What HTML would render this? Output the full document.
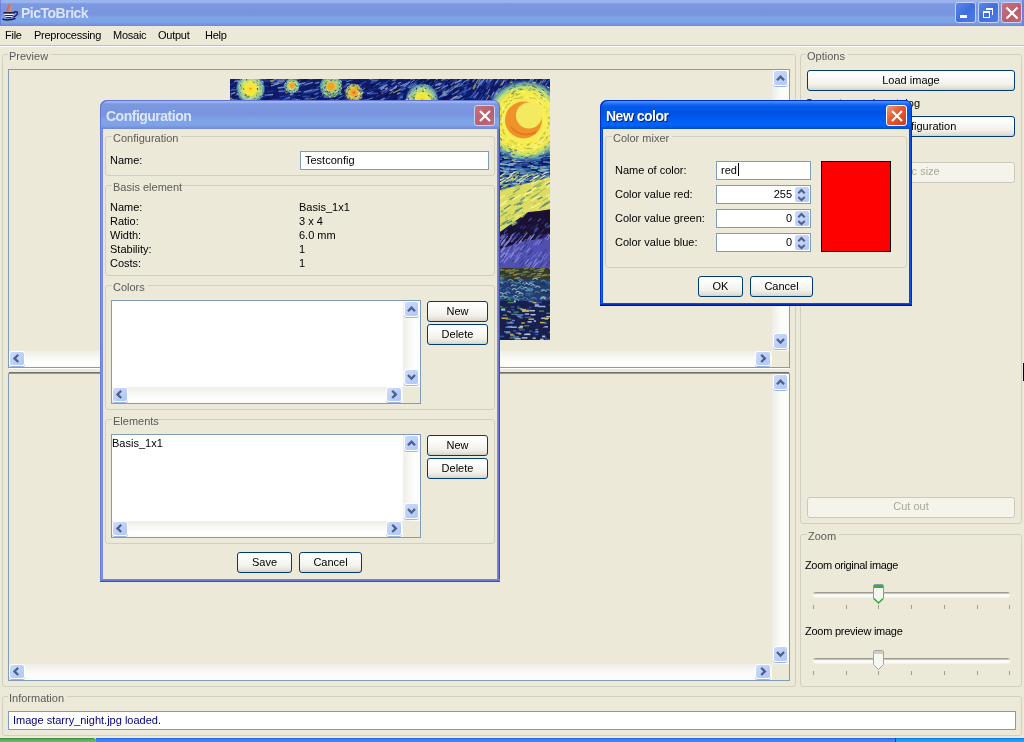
<!DOCTYPE html>
<html><head><meta charset="utf-8"><style>
*{box-sizing:border-box;margin:0;padding:0}
html,body{width:1024px;height:742px;overflow:hidden;background:#ece9d8}
body{position:relative;font:11px/13px "Liberation Sans",sans-serif;color:#000}
div,svg{position:absolute}
.t{white-space:nowrap;height:13px;will-change:transform}
</style></head><body>
<div style="left:0px;top:0px;width:1024px;height:26px;background:linear-gradient(#97aee6 0px,#9cb7f0 1px,#9cb7f0 2px,#7c98e0 4px,#7994df 15px,#7ea3e6 17px,#7ea3e6 22px,#7996e0 24px,#6d86dd 26px);"></div>
<div class="t" style="left:21px;top:7px;font:bold 14px/13px 'Liberation Sans',sans-serif;letter-spacing:-0.5px;color:#dce6fb;">PicToBrick</div>
<svg style="left:0;top:0" width="24" height="26" viewBox="0 0 24 26"><path d="M7.5 11.5 C6 9.5 8.5 8 9 6 C9.3 5 9.5 4.5 9.5 4" stroke="#e86a36" stroke-width="1.8" fill="none"/><path d="M10.5 11.5 C10 9.5 11.5 8 11.8 6.5" stroke="#f08a40" stroke-width="1.6" fill="none"/><path d="M3.5 12.8 H14.5" stroke="#1c1c5c" stroke-width="1.6"/><path d="M4.5 14.5 H13.5" stroke="#f4f4ff" stroke-width="1.2"/><path d="M5 15.6 H13" stroke="#2a2a70" stroke-width="1.2"/><path d="M5.5 16.6 H12" stroke="#f4f4ff" stroke-width="1.1"/><path d="M6 17.6 H11.5" stroke="#2a2a70" stroke-width="1.2"/><path d="M14 12 C17.5 11 18.5 13 16.5 15 L13.5 17.5" stroke="#1c1c5c" stroke-width="1.4" fill="none"/><path d="M2.5 19 C5 20 11 20 15.5 18.5" stroke="#1c1c5c" stroke-width="1.6" fill="none"/></svg>
<div style="left:955px;top:2px;width:21px;height:21px;border:1px solid #c6d2f3;border-radius:3px;background:linear-gradient(135deg,#5e86e8,#3f6ee0 50%,#4d7ae6);"><div style="left:4px;top:12px;width:7px;height:3px;background:#fff"></div></div>
<div style="left:978px;top:2px;width:21px;height:21px;border:1px solid #c6d2f3;border-radius:3px;background:linear-gradient(135deg,#5e86e8,#3f6ee0 50%,#4d7ae6);"><div style="left:4px;top:8px;width:7px;height:7px;border:1px solid #fff;border-top-width:2px"></div><div style="left:7px;top:5px;width:7px;height:7px;border:1px solid #fff;border-top-width:2px;border-left:none;border-bottom:none"></div></div>
<div style="left:1001px;top:2px;width:21px;height:21px;border:1px solid #c6d2f3;border-radius:3px;background:linear-gradient(135deg,#c8707e,#b85f6e 60%,#c06a78);"><svg style="left:3px;top:3px" width="14" height="14"><path d="M1.5 1.5 L12.5 12.5 M12.5 1.5 L1.5 12.5" stroke="#fff" stroke-width="2.2"/></svg></div>
<div style="left:0px;top:0px;width:1px;height:26px;background:#6b7bd9;opacity:.8"></div>
<div style="left:1022px;top:0px;width:2px;height:26px;background:#6b7bd9;opacity:.8"></div>
<div class="t" style="left:5px;top:29px;letter-spacing:-0.25px;">File</div>
<div class="t" style="left:34px;top:29px;letter-spacing:-0.25px;">Preprocessing</div>
<div class="t" style="left:113px;top:29px;letter-spacing:-0.25px;">Mosaic</div>
<div class="t" style="left:158px;top:29px;letter-spacing:-0.25px;">Output</div>
<div class="t" style="left:205px;top:29px;letter-spacing:-0.25px;">Help</div>
<div style="left:0px;top:45px;width:1024px;height:1px;background:#c2beb0;"></div>
<div style="left:0px;top:46px;width:1024px;height:1px;background:#fff;"></div>
<div style="left:2px;top:54px;width:794px;height:633px;border:1px solid #d0d0bf;border-radius:3px;"></div>
<div style="left:8px;top:51px;width:43px;height:7px;background:#ece9d8;"></div>
<div class="t" style="left:9px;top:50px;color:#5a5a5a;">Preview</div>
<div style="left:8px;top:69px;width:782px;height:299px;border:1px solid #7f9db9;background:#ece9d8;overflow:hidden;"></div>
<div style="left:772px;top:70px;width:17px;height:281px;background:linear-gradient(90deg,#eeede6,#f8f8f4 40%,#fefefe 80%,#fafaf6);"></div>
<div style="left:773px;top:70px;width:15px;height:16px;border:1px solid #fff;border-radius:3px;background:linear-gradient(135deg,#cddbfd,#bacef9 60%,#b0c6f7);box-shadow:0 1px 0 #9fb6e2;"><svg width="14" height="15" style="left:0;top:0"><path d="M3 9.3 L6.5 5.6 L10 9.3" stroke="#4d6185" stroke-width="2.3" fill="none"/></svg></div>
<div style="left:773px;top:333px;width:15px;height:16px;border:1px solid #fff;border-radius:3px;background:linear-gradient(135deg,#cddbfd,#bacef9 60%,#b0c6f7);box-shadow:0 1px 0 #9fb6e2;"><svg width="14" height="15" style="left:0;top:0"><path d="M3 5 L6.5 8.7 L10 5" stroke="#4d6185" stroke-width="2.3" fill="none"/></svg></div>
<div style="left:9px;top:351px;width:763px;height:16px;background:linear-gradient(180deg,#eeede6,#f8f8f4 40%,#fefefe 80%,#fafaf6);"></div>
<div style="left:9px;top:351px;width:16px;height:15px;border:1px solid #fff;border-radius:3px;background:linear-gradient(135deg,#cddbfd,#bacef9 60%,#b0c6f7);box-shadow:0 1px 0 #9fb6e2;"><svg width="14" height="15" style="left:0;top:0"><path d="M8.2 2.8 L4.5 6.4 L8.2 10" stroke="#4d6185" stroke-width="2.3" fill="none"/></svg></div>
<div style="left:755px;top:351px;width:16px;height:15px;border:1px solid #fff;border-radius:3px;background:linear-gradient(135deg,#cddbfd,#bacef9 60%,#b0c6f7);box-shadow:0 1px 0 #9fb6e2;"><svg width="14" height="15" style="left:0;top:0"><path d="M5.2 2.8 L8.9 6.4 L5.2 10" stroke="#4d6185" stroke-width="2.3" fill="none"/></svg></div>
<div style="left:772px;top:351px;width:17px;height:16px;background:#ece9d8;"></div>
<div style="left:9px;top:368px;width:780px;height:1px;background:#fff;"></div>
<div style="left:9px;top:372px;width:780px;height:1px;background:#76746a;"></div>
<div style="left:8px;top:373px;width:782px;height:308px;border:1px solid #7f9db9;background:#ece9d8;overflow:hidden;"></div>
<div style="left:772px;top:374px;width:17px;height:290px;background:linear-gradient(90deg,#eeede6,#f8f8f4 40%,#fefefe 80%,#fafaf6);"></div>
<div style="left:773px;top:374px;width:15px;height:16px;border:1px solid #fff;border-radius:3px;background:linear-gradient(135deg,#cddbfd,#bacef9 60%,#b0c6f7);box-shadow:0 1px 0 #9fb6e2;"><svg width="14" height="15" style="left:0;top:0"><path d="M3 9.3 L6.5 5.6 L10 9.3" stroke="#4d6185" stroke-width="2.3" fill="none"/></svg></div>
<div style="left:773px;top:646px;width:15px;height:16px;border:1px solid #fff;border-radius:3px;background:linear-gradient(135deg,#cddbfd,#bacef9 60%,#b0c6f7);box-shadow:0 1px 0 #9fb6e2;"><svg width="14" height="15" style="left:0;top:0"><path d="M3 5 L6.5 8.7 L10 5" stroke="#4d6185" stroke-width="2.3" fill="none"/></svg></div>
<div style="left:9px;top:664px;width:763px;height:16px;background:linear-gradient(180deg,#eeede6,#f8f8f4 40%,#fefefe 80%,#fafaf6);"></div>
<div style="left:9px;top:664px;width:16px;height:15px;border:1px solid #fff;border-radius:3px;background:linear-gradient(135deg,#cddbfd,#bacef9 60%,#b0c6f7);box-shadow:0 1px 0 #9fb6e2;"><svg width="14" height="15" style="left:0;top:0"><path d="M8.2 2.8 L4.5 6.4 L8.2 10" stroke="#4d6185" stroke-width="2.3" fill="none"/></svg></div>
<div style="left:755px;top:664px;width:16px;height:15px;border:1px solid #fff;border-radius:3px;background:linear-gradient(135deg,#cddbfd,#bacef9 60%,#b0c6f7);box-shadow:0 1px 0 #9fb6e2;"><svg width="14" height="15" style="left:0;top:0"><path d="M5.2 2.8 L8.9 6.4 L5.2 10" stroke="#4d6185" stroke-width="2.3" fill="none"/></svg></div>
<div style="left:772px;top:664px;width:17px;height:16px;background:#ece9d8;"></div>
<div style="left:800px;top:54px;width:222px;height:470px;border:1px solid #d0d0bf;border-radius:3px;"></div>
<div style="left:806px;top:51px;width:42px;height:7px;background:#ece9d8;"></div>
<div class="t" style="left:807px;top:50px;color:#5a5a5a;">Options</div>
<div style="left:807px;top:70px;width:208px;height:21px;border:1px solid #003c74;border-radius:3px;background:linear-gradient(#fff 0%,#fbfbf9 30%,#f2f1eb 70%,#e3e0d6 90%,#d6d0c5 100%);"></div>
<div class="t" style="left:807px;width:208px;text-align:center;top:74px;">Load image</div>
<div class="t" style="left:805px;top:97px;letter-spacing:0.1px;">Current mosaic catalog</div>
<div style="left:807px;top:116px;width:208px;height:21px;border:1px solid #003c74;border-radius:3px;background:linear-gradient(#fff 0%,#fbfbf9 30%,#f2f1eb 70%,#e3e0d6 90%,#d6d0c5 100%);"></div>
<div class="t" style="left:807px;width:208px;text-align:center;top:120px;">Load configuration</div>
<div style="left:807px;top:162px;width:208px;height:21px;border:1px solid #cac8bb;border-radius:3px;background:#f5f4ea;"></div>
<div class="t" style="left:807px;width:208px;text-align:center;top:165px;color:#aca899;">Mosaic size</div>
<div style="left:807px;top:497px;width:208px;height:21px;border:1px solid #cac8bb;border-radius:3px;background:#f5f4ea;"></div>
<div class="t" style="left:807px;width:208px;text-align:center;top:500px;color:#aca899;">Cut out</div>
<div style="left:800px;top:534px;width:222px;height:153px;border:1px solid #d0d0bf;border-radius:3px;"></div>
<div style="left:807px;top:531px;width:32px;height:7px;background:#ece9d8;"></div>
<div class="t" style="left:808px;top:530px;color:#5a5a5a;">Zoom</div>
<div class="t" style="left:805px;top:559px;letter-spacing:-0.35px;">Zoom original image</div>
<div class="t" style="left:805px;top:625px;letter-spacing:-0.25px;">Zoom preview image</div>
<div style="left:813px;top:592px;width:197px;height:6px;border-radius:3px;background:linear-gradient(#9d9b90 0,#9d9b90 1px,#f3f2ec 2px,#fff 4px,#f3f2ec 5px);"></div>
<div style="left:813px;top:605px;width:1px;height:4px;background:#a09d8f;"></div>
<div style="left:846px;top:605px;width:1px;height:4px;background:#a09d8f;"></div>
<div style="left:878px;top:605px;width:1px;height:4px;background:#a09d8f;"></div>
<div style="left:911px;top:605px;width:1px;height:4px;background:#a09d8f;"></div>
<div style="left:944px;top:605px;width:1px;height:4px;background:#a09d8f;"></div>
<div style="left:977px;top:605px;width:1px;height:4px;background:#a09d8f;"></div>
<div style="left:1009px;top:605px;width:1px;height:4px;background:#a09d8f;"></div>
<div style="left:813px;top:658px;width:197px;height:6px;border-radius:3px;background:linear-gradient(#9d9b90 0,#9d9b90 1px,#f3f2ec 2px,#fff 4px,#f3f2ec 5px);"></div>
<div style="left:813px;top:671px;width:1px;height:4px;background:#a09d8f;"></div>
<div style="left:846px;top:671px;width:1px;height:4px;background:#a09d8f;"></div>
<div style="left:878px;top:671px;width:1px;height:4px;background:#a09d8f;"></div>
<div style="left:911px;top:671px;width:1px;height:4px;background:#a09d8f;"></div>
<div style="left:944px;top:671px;width:1px;height:4px;background:#a09d8f;"></div>
<div style="left:977px;top:671px;width:1px;height:4px;background:#a09d8f;"></div>
<div style="left:1009px;top:671px;width:1px;height:4px;background:#a09d8f;"></div>
<svg style="left:873px;top:584px" width="11" height="21" viewBox="0 0 11 21"><path d="M0.5 2 Q0.5 0.5 2 0.5 H9 Q10.5 0.5 10.5 2 V14.5 L5.5 19.5 L0.5 14.5Z" fill="#f6f6f2" stroke="#8a98a8"/><path d="M1 1 H10 V4 H1Z" fill="#35b335"/><path d="M1 14.6 L5.5 19 L10 14.6" stroke="#35b335" stroke-width="1.6" fill="none"/></svg>
<svg style="left:873px;top:650px" width="11" height="21" viewBox="0 0 11 21"><path d="M0.5 2 Q0.5 0.5 2 0.5 H9 Q10.5 0.5 10.5 2 V14.5 L5.5 19.5 L0.5 14.5Z" fill="#f6f6f2" stroke="#a8a79c"/><path d="M1 1 H10 V4 H1Z" fill="#cfcdc2"/></svg>
<div style="left:2px;top:696px;width:1020px;height:40px;border:1px solid #d0d0bf;border-radius:3px;"></div>
<div style="left:8px;top:693px;width:59px;height:7px;background:#ece9d8;"></div>
<div class="t" style="left:9px;top:692px;color:#5a5a5a;">Information</div>
<div style="left:8px;top:711px;width:1008px;height:19px;border:1px solid #7f9db9;background:#fff;"></div>
<div class="t" style="left:13px;top:714px;color:#000080;">Image starry_night.jpg loaded.</div>
<div style="left:0px;top:738px;width:96px;height:4px;background:linear-gradient(#3a8a3a,#5aa85a 40%,#78b878);border-top-right-radius:3px;"></div>
<div style="left:96px;top:738px;width:928px;height:4px;background:linear-gradient(#1c5cd8,#3a84f0 40%,#3c88f4);"></div>
<div style="left:895px;top:738px;width:1px;height:4px;background:#1a3a9a;"></div>
<div style="left:896px;top:738px;width:128px;height:4px;background:linear-gradient(#0a6ad8,#14a0f0 40%,#18aaf4);"></div>
<div style="left:1023px;top:363px;width:1px;height:18px;background:#000;"></div>
<svg style="left:230px;top:79px" width="320" height="261" viewBox="0 0 320 261">
<defs>
<radialGradient id="st1"><stop offset="0" stop-color="#f08020"/><stop offset="0.1" stop-color="#f8e030"/><stop offset="0.4" stop-color="#f4ea40"/><stop offset="0.5" stop-color="#c8dc60"/><stop offset="0.75" stop-color="#90c0a0"/><stop offset="0.9" stop-color="#508aa8"/><stop offset="1" stop-color="#203a90" stop-opacity="0"/></radialGradient>
<radialGradient id="st2"><stop offset="0" stop-color="#f89a20"/><stop offset="0.28" stop-color="#f4a828"/><stop offset="0.38" stop-color="#c8d060"/><stop offset="0.7" stop-color="#88c090"/><stop offset="0.88" stop-color="#4a88a0"/><stop offset="1" stop-color="#203a90" stop-opacity="0"/></radialGradient>
<radialGradient id="st3"><stop offset="0" stop-color="#e85020"/><stop offset="0.2" stop-color="#f0a030"/><stop offset="0.6" stop-color="#e8c840"/><stop offset="0.85" stop-color="#a8a850"/><stop offset="1" stop-color="#203a90" stop-opacity="0"/></radialGradient>
<radialGradient id="halo"><stop offset="0" stop-color="#fff070"/><stop offset="0.7" stop-color="#f4ec48"/><stop offset="0.8" stop-color="#c0e070"/><stop offset="0.9" stop-color="#60a0b0"/><stop offset="1" stop-color="#203a90" stop-opacity="0"/></radialGradient>
<clipPath id="strip"><rect x="0" y="0" width="320" height="22"/><rect x="268" y="0" width="52" height="261"/></clipPath>
</defs>
<g clip-path="url(#strip)">
<rect width="320" height="261" fill="#0e1a66"/>
<path d="M101.9 1.1 l3.4 -0.6" stroke="#1a3090" stroke-width="1" opacity="0.85"/>
<path d="M115.7 -1.4 l3.1 -0.8" stroke="#081040" stroke-width="1.2" opacity="0.85"/>
<path d="M18.1 -0.6 l7.6 -2.4" stroke="#2c4cb0" stroke-width="1" opacity="0.85"/>
<path d="M203.1 12.7 l4.7 -4.5" stroke="#2040a0" stroke-width="1" opacity="0.85"/>
<path d="M10.4 20.2 l3.6 -1.4" stroke="#2c4cb0" stroke-width="1.5" opacity="0.85"/>
<path d="M96.8 19.0 l5.9 -2.7" stroke="#a09060" stroke-width="1" opacity="0.85"/>
<path d="M117.9 11.8 l3.0 -1.6" stroke="#5a78c8" stroke-width="1.2" opacity="0.85"/>
<path d="M219.5 8.5 l5.2 -3.9" stroke="#0a1450" stroke-width="1.2" opacity="0.85"/>
<path d="M93.9 18.4 l4.4 -0.7" stroke="#6a90c0" stroke-width="1.2" opacity="0.85"/>
<path d="M168.3 20.6 l4.2 -2.1" stroke="#2c4cb0" stroke-width="1" opacity="0.85"/>
<path d="M163.9 1.5 l6.9 -5.1" stroke="#081040" stroke-width="1" opacity="0.85"/>
<path d="M312.5 -0.9 l4.3 -6.4" stroke="#8aa0d8" stroke-width="1.2" opacity="0.85"/>
<path d="M224.4 13.0 l4.9 -2.9" stroke="#2c4cb0" stroke-width="1.2" opacity="0.85"/>
<path d="M151.5 14.9 l5.2 -5.0" stroke="#a09060" stroke-width="1.5" opacity="0.85"/>
<path d="M322.7 19.2 l2.4 -4.7" stroke="#a09060" stroke-width="1.2" opacity="0.85"/>
<path d="M2.4 9.5 l3.4 -1.6" stroke="#2040a0" stroke-width="1" opacity="0.85"/>
<path d="M248.5 0.5 l2.4 -4.8" stroke="#0a1450" stroke-width="1" opacity="0.85"/>
<path d="M49.9 7.8 l3.6 -1.4" stroke="#081040" stroke-width="1.5" opacity="0.85"/>
<path d="M86.9 8.2 l7.8 -2.7" stroke="#5a78c8" stroke-width="1" opacity="0.85"/>
<path d="M22.4 1.1 l3.0 -0.5" stroke="#6a90c0" stroke-width="1" opacity="0.85"/>
<path d="M81.7 -2.9 l5.0 -1.6" stroke="#6a90c0" stroke-width="1.2" opacity="0.85"/>
<path d="M309.5 15.6 l3.6 -5.6" stroke="#a09060" stroke-width="1.5" opacity="0.85"/>
<path d="M12.8 21.3 l8.2 -0.9" stroke="#1a3090" stroke-width="1.2" opacity="0.85"/>
<path d="M126.4 7.6 l5.2 -1.4" stroke="#5a78c8" stroke-width="1" opacity="0.85"/>
<path d="M319.9 8.9 l2.6 -6.1" stroke="#2c4cb0" stroke-width="1" opacity="0.85"/>
<path d="M182.0 11.5 l6.2 -2.4" stroke="#2c4cb0" stroke-width="1" opacity="0.85"/>
<path d="M197.6 1.0 l4.0 -3.2" stroke="#8aa0d8" stroke-width="1.2" opacity="0.85"/>
<path d="M35.5 19.9 l5.8 -0.0" stroke="#0a1450" stroke-width="1.2" opacity="0.85"/>
<path d="M23.3 -0.2 l4.3 -1.5" stroke="#3a5cc0" stroke-width="1.5" opacity="0.85"/>
<path d="M2.6 22.7 l3.8 -0.9" stroke="#1a3090" stroke-width="1" opacity="0.85"/>
<path d="M245.2 5.0 l2.1 -2.9" stroke="#142070" stroke-width="1.5" opacity="0.85"/>
<path d="M116.0 1.5 l6.2 -0.7" stroke="#1a3090" stroke-width="1.2" opacity="0.85"/>
<path d="M205.0 13.6 l6.8 -3.2" stroke="#5a78c8" stroke-width="1" opacity="0.85"/>
<path d="M265.0 17.0 l2.6 -5.5" stroke="#8aa0d8" stroke-width="1.5" opacity="0.85"/>
<path d="M4.6 -2.2 l4.2 -1.7" stroke="#6a90c0" stroke-width="1.2" opacity="0.85"/>
<path d="M142.6 22.3 l8.7 -0.1" stroke="#8aa0d8" stroke-width="1" opacity="0.85"/>
<path d="M67.8 3.1 l3.9 -1.7" stroke="#6a90c0" stroke-width="1.5" opacity="0.85"/>
<path d="M272.3 9.9 l4.6 -6.3" stroke="#2c4cb0" stroke-width="1.5" opacity="0.85"/>
<path d="M34.6 7.5 l4.1 -0.6" stroke="#3a5cc0" stroke-width="1.2" opacity="0.85"/>
<path d="M255.4 6.0 l5.7 -6.8" stroke="#081040" stroke-width="1.2" opacity="0.85"/>
<path d="M127.5 22.6 l4.0 -0.6" stroke="#3a5cc0" stroke-width="1" opacity="0.85"/>
<path d="M44.9 21.4 l3.9 -0.4" stroke="#6a90c0" stroke-width="1.2" opacity="0.85"/>
<path d="M211.9 6.5 l3.2 -2.0" stroke="#2040a0" stroke-width="1.5" opacity="0.85"/>
<path d="M209.4 11.2 l5.2 -2.1" stroke="#5a78c8" stroke-width="1" opacity="0.85"/>
<path d="M4.2 2.7 l7.3 -2.0" stroke="#8aa0d8" stroke-width="1.2" opacity="0.85"/>
<path d="M174.6 19.5 l5.4 -5.1" stroke="#0a1450" stroke-width="1.5" opacity="0.85"/>
<path d="M187.5 21.4 l7.0 -4.8" stroke="#1a3090" stroke-width="1" opacity="0.85"/>
<path d="M170.5 11.1 l4.0 -4.0" stroke="#3a5cc0" stroke-width="1.5" opacity="0.85"/>
<path d="M-3.7 18.6 l5.3 -2.5" stroke="#2c4cb0" stroke-width="1.5" opacity="0.85"/>
<path d="M15.4 15.4 l5.7 -1.4" stroke="#2c4cb0" stroke-width="1.5" opacity="0.85"/>
<path d="M13.8 2.2 l3.1 -1.7" stroke="#0a1450" stroke-width="1.5" opacity="0.85"/>
<path d="M4.2 21.1 l4.4 -2.3" stroke="#1a3090" stroke-width="1.5" opacity="0.85"/>
<path d="M164.0 15.7 l5.2 -3.4" stroke="#0a1450" stroke-width="1.5" opacity="0.85"/>
<path d="M305.7 15.9 l5.8 -6.4" stroke="#142070" stroke-width="1.5" opacity="0.85"/>
<path d="M289.6 2.5 l2.8 -4.7" stroke="#081040" stroke-width="1.2" opacity="0.85"/>
<path d="M99.3 15.1 l4.1 -1.3" stroke="#142070" stroke-width="1" opacity="0.85"/>
<path d="M291.0 1.2 l4.3 -5.5" stroke="#3a5cc0" stroke-width="1.2" opacity="0.85"/>
<path d="M286.3 23.1 l3.8 -7.9" stroke="#081040" stroke-width="1.2" opacity="0.85"/>
<path d="M48.7 15.0 l6.6 -2.9" stroke="#1a3090" stroke-width="1.2" opacity="0.85"/>
<path d="M106.9 2.3 l6.9 -2.6" stroke="#2040a0" stroke-width="1.2" opacity="0.85"/>
<path d="M177.8 8.9 l3.6 -3.5" stroke="#6a90c0" stroke-width="1.2" opacity="0.85"/>
<path d="M164.0 -1.3 l7.2 -2.7" stroke="#2c4cb0" stroke-width="1" opacity="0.85"/>
<path d="M82.6 -1.9 l4.6 -0.5" stroke="#3a5cc0" stroke-width="1.2" opacity="0.85"/>
<path d="M275.4 15.3 l3.8 -3.9" stroke="#1a3090" stroke-width="1.5" opacity="0.85"/>
<path d="M183.3 15.9 l2.5 -2.3" stroke="#3a5cc0" stroke-width="1.2" opacity="0.85"/>
<path d="M290.4 4.3 l1.2 -3.3" stroke="#142070" stroke-width="1" opacity="0.85"/>
<path d="M195.7 3.0 l2.9 -2.3" stroke="#2040a0" stroke-width="1.2" opacity="0.85"/>
<path d="M323.1 8.3 l4.6 -4.9" stroke="#2040a0" stroke-width="1.5" opacity="0.85"/>
<path d="M229.1 22.3 l4.3 -1.6" stroke="#3a5cc0" stroke-width="1" opacity="0.85"/>
<path d="M302.6 14.0 l2.3 -3.5" stroke="#0a1450" stroke-width="1.5" opacity="0.85"/>
<path d="M216.8 4.3 l8.1 -3.8" stroke="#2040a0" stroke-width="1" opacity="0.85"/>
<path d="M1.1 10.7 l6.1 -0.1" stroke="#5a78c8" stroke-width="1.2" opacity="0.85"/>
<path d="M30.1 19.1 l5.7 -1.7" stroke="#081040" stroke-width="1.5" opacity="0.85"/>
<path d="M96.6 2.8 l3.9 -1.6" stroke="#a09060" stroke-width="1" opacity="0.85"/>
<path d="M128.6 6.4 l3.3 -1.8" stroke="#2c4cb0" stroke-width="1.5" opacity="0.85"/>
<path d="M239.5 3.9 l2.6 -2.3" stroke="#081040" stroke-width="1.5" opacity="0.85"/>
<path d="M216.3 4.6 l3.7 -3.0" stroke="#0a1450" stroke-width="1" opacity="0.85"/>
<path d="M47.0 9.0 l8.1 -3.3" stroke="#1a3090" stroke-width="1.2" opacity="0.85"/>
<path d="M75.7 23.1 l4.8 -1.8" stroke="#2040a0" stroke-width="1.2" opacity="0.85"/>
<path d="M120.9 9.8 l4.1 -1.1" stroke="#1a3090" stroke-width="1" opacity="0.85"/>
<path d="M25.0 19.1 l5.9 -2.8" stroke="#081040" stroke-width="1" opacity="0.85"/>
<path d="M93.9 14.0 l7.8 -4.0" stroke="#3a5cc0" stroke-width="1.5" opacity="0.85"/>
<path d="M289.6 18.2 l4.3 -6.2" stroke="#0a1450" stroke-width="1" opacity="0.85"/>
<path d="M88.8 13.7 l7.2 -3.4" stroke="#1a3090" stroke-width="1.5" opacity="0.85"/>
<path d="M136.7 15.9 l8.2 -2.2" stroke="#1a3090" stroke-width="1.5" opacity="0.85"/>
<path d="M270.5 18.7 l4.2 -4.9" stroke="#a09060" stroke-width="1.5" opacity="0.85"/>
<path d="M207.2 -0.7 l4.9 -4.7" stroke="#2c4cb0" stroke-width="1.2" opacity="0.85"/>
<path d="M270.8 12.1 l3.9 -5.5" stroke="#a09060" stroke-width="1" opacity="0.85"/>
<path d="M156.5 -2.9 l6.8 -3.2" stroke="#1a3090" stroke-width="1.5" opacity="0.85"/>
<path d="M25.3 11.2 l5.8 -0.8" stroke="#2c4cb0" stroke-width="1.2" opacity="0.85"/>
<path d="M72.5 17.4 l6.3 -2.7" stroke="#0a1450" stroke-width="1.2" opacity="0.85"/>
<path d="M274.0 -0.9 l3.2 -3.5" stroke="#2040a0" stroke-width="1.5" opacity="0.85"/>
<path d="M203.8 2.4 l4.3 -2.5" stroke="#a09060" stroke-width="1.5" opacity="0.85"/>
<path d="M223.7 13.8 l4.4 -3.9" stroke="#0a1450" stroke-width="1.2" opacity="0.85"/>
<path d="M315.9 -0.3 l2.6 -5.4" stroke="#1a3090" stroke-width="1.2" opacity="0.85"/>
<path d="M148.3 9.6 l7.5 -3.7" stroke="#5a78c8" stroke-width="1.2" opacity="0.85"/>
<path d="M317.8 22.3 l2.0 -5.4" stroke="#1a3090" stroke-width="1.2" opacity="0.85"/>
<path d="M323.0 7.4 l5.8 -6.3" stroke="#2c4cb0" stroke-width="1.5" opacity="0.85"/>
<path d="M24.8 17.2 l4.8 -1.9" stroke="#6a90c0" stroke-width="1.5" opacity="0.85"/>
<path d="M162.9 20.9 l3.9 -2.0" stroke="#0a1450" stroke-width="1.2" opacity="0.85"/>
<path d="M3.2 -2.9 l5.5 -1.5" stroke="#142070" stroke-width="1.5" opacity="0.85"/>
<path d="M41.4 6.3 l7.5 -2.8" stroke="#2040a0" stroke-width="1.2" opacity="0.85"/>
<path d="M242.7 19.7 l3.3 -7.9" stroke="#2040a0" stroke-width="1.5" opacity="0.85"/>
<path d="M90.6 7.0 l8.5 -2.8" stroke="#6a90c0" stroke-width="1" opacity="0.85"/>
<path d="M114.0 8.6 l3.1 -1.2" stroke="#2c4cb0" stroke-width="1" opacity="0.85"/>
<path d="M270.4 4.7 l3.1 -3.3" stroke="#142070" stroke-width="1.2" opacity="0.85"/>
<path d="M163.6 2.1 l7.1 -5.1" stroke="#2040a0" stroke-width="1.5" opacity="0.85"/>
<path d="M127.0 20.6 l4.1 -1.0" stroke="#2c4cb0" stroke-width="1" opacity="0.85"/>
<path d="M303.0 8.1 l2.2 -3.1" stroke="#142070" stroke-width="1.2" opacity="0.85"/>
<path d="M11.2 22.0 l5.2 -2.6" stroke="#8aa0d8" stroke-width="1.2" opacity="0.85"/>
<path d="M93.3 17.0 l4.6 -0.1" stroke="#a09060" stroke-width="1" opacity="0.85"/>
<path d="M94.3 12.0 l3.8 -1.2" stroke="#3a5cc0" stroke-width="1" opacity="0.85"/>
<path d="M63.6 21.5 l4.2 -1.1" stroke="#8aa0d8" stroke-width="1.2" opacity="0.85"/>
<path d="M136.0 11.8 l3.7 -1.6" stroke="#1a3090" stroke-width="1" opacity="0.85"/>
<path d="M100.4 6.9 l4.2 -0.4" stroke="#2040a0" stroke-width="1.5" opacity="0.85"/>
<path d="M282.3 7.3 l2.7 -3.3" stroke="#142070" stroke-width="1.2" opacity="0.85"/>
<path d="M243.2 10.4 l2.9 -4.3" stroke="#a09060" stroke-width="1.5" opacity="0.85"/>
<path d="M169.6 18.3 l3.3 -1.4" stroke="#5a78c8" stroke-width="1.2" opacity="0.85"/>
<path d="M126.9 9.0 l8.1 -0.2" stroke="#2040a0" stroke-width="1" opacity="0.85"/>
<path d="M5.6 16.2 l5.8 -0.3" stroke="#6a90c0" stroke-width="1.2" opacity="0.85"/>
<path d="M-4.9 7.6 l7.9 -0.3" stroke="#0a1450" stroke-width="1.2" opacity="0.85"/>
<path d="M77.0 -0.1 l5.5 -2.6" stroke="#a09060" stroke-width="1" opacity="0.85"/>
<path d="M305.7 16.5 l4.5 -6.1" stroke="#0a1450" stroke-width="1" opacity="0.85"/>
<path d="M177.0 -1.9 l4.0 -1.9" stroke="#2040a0" stroke-width="1.5" opacity="0.85"/>
<path d="M231.0 23.0 l5.4 -3.0" stroke="#081040" stroke-width="1.5" opacity="0.85"/>
<path d="M247.1 -0.3 l4.0 -7.7" stroke="#5a78c8" stroke-width="1.2" opacity="0.85"/>
<path d="M81.1 18.3 l5.4 -3.1" stroke="#0a1450" stroke-width="1.2" opacity="0.85"/>
<path d="M311.5 14.4 l3.9 -4.3" stroke="#5a78c8" stroke-width="1.5" opacity="0.85"/>
<path d="M76.5 22.9 l4.8 -0.7" stroke="#2040a0" stroke-width="1" opacity="0.85"/>
<path d="M159.4 15.2 l3.7 -2.6" stroke="#a09060" stroke-width="1.2" opacity="0.85"/>
<path d="M300.3 3.1 l1.8 -4.7" stroke="#081040" stroke-width="1.2" opacity="0.85"/>
<path d="M220.2 2.3 l6.7 -3.2" stroke="#1a3090" stroke-width="1" opacity="0.85"/>
<path d="M62.7 23.2 l7.4 -2.8" stroke="#5a78c8" stroke-width="1.2" opacity="0.85"/>
<path d="M68.1 17.5 l8.1 -3.1" stroke="#0a1450" stroke-width="1.5" opacity="0.85"/>
<path d="M56.8 3.0 l6.7 -2.1" stroke="#6a90c0" stroke-width="1" opacity="0.85"/>
<path d="M299.2 -1.5 l2.3 -6.2" stroke="#081040" stroke-width="1" opacity="0.85"/>
<path d="M229.3 2.0 l6.0 -4.0" stroke="#8aa0d8" stroke-width="1.5" opacity="0.85"/>
<path d="M32.4 -0.9 l3.8 -1.8" stroke="#a09060" stroke-width="1.5" opacity="0.85"/>
<path d="M241.3 -2.1 l3.1 -4.2" stroke="#8aa0d8" stroke-width="1.2" opacity="0.85"/>
<path d="M141.0 -0.1 l3.1 -1.6" stroke="#081040" stroke-width="1" opacity="0.85"/>
<path d="M180.2 17.5 l6.2 -4.4" stroke="#142070" stroke-width="1.2" opacity="0.85"/>
<path d="M24.0 16.0 l5.7 -2.6" stroke="#0a1450" stroke-width="1" opacity="0.85"/>
<path d="M101.7 16.9 l6.5 -1.8" stroke="#5a78c8" stroke-width="1.5" opacity="0.85"/>
<path d="M248.0 -1.9 l1.2 -3.2" stroke="#2040a0" stroke-width="1.2" opacity="0.85"/>
<path d="M59.3 -1.3 l5.1 -1.1" stroke="#8aa0d8" stroke-width="1.5" opacity="0.85"/>
<path d="M9.4 17.2 l8.4 -1.4" stroke="#142070" stroke-width="1" opacity="0.85"/>
<path d="M233.1 13.1 l7.9 -3.6" stroke="#2c4cb0" stroke-width="1" opacity="0.85"/>
<path d="M267.6 -0.1 l3.6 -4.6" stroke="#081040" stroke-width="1.2" opacity="0.85"/>
<path d="M296.5 19.0 l2.4 -5.5" stroke="#2040a0" stroke-width="1.5" opacity="0.85"/>
<path d="M95.1 15.7 l4.0 -1.9" stroke="#8aa0d8" stroke-width="1.2" opacity="0.85"/>
<path d="M114.4 18.1 l3.7 -1.9" stroke="#3a5cc0" stroke-width="1" opacity="0.85"/>
<path d="M129.6 14.5 l6.0 -1.7" stroke="#3a5cc0" stroke-width="1.2" opacity="0.85"/>
<path d="M286.5 23.7 l1.6 -3.1" stroke="#2c4cb0" stroke-width="1.2" opacity="0.85"/>
<path d="M159.5 16.2 l3.7 -2.5" stroke="#081040" stroke-width="1.2" opacity="0.85"/>
<path d="M199.7 15.2 l7.2 -3.6" stroke="#a09060" stroke-width="1" opacity="0.85"/>
<path d="M252.3 4.9 l2.1 -4.1" stroke="#142070" stroke-width="1.5" opacity="0.85"/>
<path d="M80.9 8.9 l4.0 -1.8" stroke="#142070" stroke-width="1.5" opacity="0.85"/>
<path d="M57.1 -1.3 l4.1 -1.7" stroke="#1a3090" stroke-width="1" opacity="0.85"/>
<path d="M209.4 -0.3 l2.7 -1.8" stroke="#2040a0" stroke-width="1.2" opacity="0.85"/>
<path d="M286.3 3.2 l2.7 -4.5" stroke="#142070" stroke-width="1" opacity="0.85"/>
<path d="M34.3 2.1 l6.5 -0.1" stroke="#2c4cb0" stroke-width="1.2" opacity="0.85"/>
<path d="M164.2 1.8 l6.6 -3.8" stroke="#a09060" stroke-width="1" opacity="0.85"/>
<path d="M29.9 13.1 l4.2 -0.9" stroke="#8aa0d8" stroke-width="1.2" opacity="0.85"/>
<path d="M41.7 2.5 l6.1 -2.5" stroke="#a09060" stroke-width="1" opacity="0.85"/>
<path d="M263.9 19.1 l2.6 -4.5" stroke="#6a90c0" stroke-width="1.2" opacity="0.85"/>
<path d="M20.7 -2.2 l5.7 -1.5" stroke="#081040" stroke-width="1" opacity="0.85"/>
<path d="M257.6 14.9 l2.5 -5.7" stroke="#a09060" stroke-width="1" opacity="0.85"/>
<path d="M126.3 4.3 l7.0 -0.0" stroke="#081040" stroke-width="1" opacity="0.85"/>
<path d="M98.1 12.3 l5.2 -1.8" stroke="#8aa0d8" stroke-width="1.5" opacity="0.85"/>
<path d="M60.1 16.7 l2.8 -1.2" stroke="#3a5cc0" stroke-width="1.2" opacity="0.85"/>
<path d="M32.5 -0.6 l5.1 -1.1" stroke="#3a5cc0" stroke-width="1" opacity="0.85"/>
<path d="M-0.1 11.9 l8.3 -1.6" stroke="#2c4cb0" stroke-width="1.5" opacity="0.85"/>
<path d="M200.3 7.0 l3.3 -2.1" stroke="#142070" stroke-width="1" opacity="0.85"/>
<path d="M167.0 22.0 l4.4 -4.0" stroke="#5a78c8" stroke-width="1.2" opacity="0.85"/>
<path d="M36.8 22.5 l5.9 -0.1" stroke="#2040a0" stroke-width="1.5" opacity="0.85"/>
<path d="M300.6 7.5 l4.6 -4.9" stroke="#3a5cc0" stroke-width="1.5" opacity="0.85"/>
<path d="M254.3 3.0 l4.1 -7.0" stroke="#0a1450" stroke-width="1" opacity="0.85"/>
<path d="M181.6 -1.9 l3.7 -1.4" stroke="#8aa0d8" stroke-width="1" opacity="0.85"/>
<path d="M44.3 23.2 l4.1 -0.4" stroke="#1a3090" stroke-width="1.5" opacity="0.85"/>
<path d="M7.6 19.6 l5.9 -2.9" stroke="#1a3090" stroke-width="1.5" opacity="0.85"/>
<path d="M251.8 14.5 l2.1 -4.0" stroke="#081040" stroke-width="1.5" opacity="0.85"/>
<path d="M116.3 10.6 l2.7 -1.3" stroke="#0a1450" stroke-width="1.2" opacity="0.85"/>
<path d="M72.6 17.6 l5.7 -0.7" stroke="#3a5cc0" stroke-width="1.2" opacity="0.85"/>
<path d="M127.1 -1.2 l4.9 -1.7" stroke="#0a1450" stroke-width="1.5" opacity="0.85"/>
<path d="M163.4 -1.9 l3.1 -1.7" stroke="#8aa0d8" stroke-width="1.5" opacity="0.85"/>
<path d="M163.8 -1.5 l4.4 -2.8" stroke="#3a5cc0" stroke-width="1" opacity="0.85"/>
<path d="M277.8 23.9 l4.9 -6.2" stroke="#5a78c8" stroke-width="1" opacity="0.85"/>
<path d="M319.0 10.3 l5.9 -6.1" stroke="#3a5cc0" stroke-width="1.5" opacity="0.85"/>
<path d="M255.2 22.1 l1.9 -4.7" stroke="#142070" stroke-width="1" opacity="0.85"/>
<path d="M101.9 13.6 l5.7 -0.3" stroke="#142070" stroke-width="1.5" opacity="0.85"/>
<path d="M313.2 10.0 l3.8 -5.5" stroke="#5a78c8" stroke-width="1.2" opacity="0.85"/>
<path d="M117.8 2.4 l6.5 -2.1" stroke="#142070" stroke-width="1.5" opacity="0.85"/>
<path d="M103.2 7.2 l4.6 -0.5" stroke="#1a3090" stroke-width="1" opacity="0.85"/>
<path d="M205.0 6.7 l5.8 -2.5" stroke="#6a90c0" stroke-width="1.5" opacity="0.85"/>
<path d="M286.2 -0.2 l4.8 -4.8" stroke="#081040" stroke-width="1.5" opacity="0.85"/>
<path d="M258.2 4.1 l4.6 -4.6" stroke="#8aa0d8" stroke-width="1.2" opacity="0.85"/>
<path d="M247.3 8.9 l3.1 -6.8" stroke="#2040a0" stroke-width="1.2" opacity="0.85"/>
<path d="M265.5 3.8 l5.2 -7.2" stroke="#6a90c0" stroke-width="1.5" opacity="0.85"/>
<path d="M290.6 16.8 l2.7 -3.4" stroke="#142070" stroke-width="1.5" opacity="0.85"/>
<path d="M201.5 8.3 l2.7 -1.9" stroke="#0a1450" stroke-width="1" opacity="0.85"/>
<path d="M197.1 -1.8 l4.6 -4.4" stroke="#142070" stroke-width="1" opacity="0.85"/>
<path d="M167.6 11.4 l4.0 -2.7" stroke="#3a5cc0" stroke-width="1" opacity="0.85"/>
<path d="M115.9 19.4 l2.8 -1.3" stroke="#5a78c8" stroke-width="1.5" opacity="0.85"/>
<path d="M44.3 -0.4 l8.1 -1.5" stroke="#142070" stroke-width="1.2" opacity="0.85"/>
<path d="M262.8 23.1 l2.9 -7.4" stroke="#8aa0d8" stroke-width="1.5" opacity="0.85"/>
<path d="M208.0 9.0 l6.9 -2.7" stroke="#5a78c8" stroke-width="1" opacity="0.85"/>
<path d="M293.2 -1.8 l3.0 -4.5" stroke="#5a78c8" stroke-width="1" opacity="0.85"/>
<path d="M14.3 18.0 l5.5 -3.1" stroke="#5a78c8" stroke-width="1" opacity="0.85"/>
<path d="M131.3 11.0 l6.8 -1.3" stroke="#081040" stroke-width="1.5" opacity="0.85"/>
<path d="M52.6 5.4 l3.1 -1.2" stroke="#0a1450" stroke-width="1.5" opacity="0.85"/>
<path d="M172.7 7.1 l7.0 -4.7" stroke="#2c4cb0" stroke-width="1.5" opacity="0.85"/>
<path d="M211.3 1.7 l4.3 -1.6" stroke="#a09060" stroke-width="1" opacity="0.85"/>
<path d="M35.7 21.1 l8.7 -0.3" stroke="#142070" stroke-width="1.5" opacity="0.85"/>
<path d="M12.3 14.2 l7.0 -1.2" stroke="#1a3090" stroke-width="1.2" opacity="0.85"/>
<path d="M92.6 22.1 l3.5 -0.2" stroke="#1a3090" stroke-width="1" opacity="0.85"/>
<path d="M51.0 21.4 l4.2 -0.3" stroke="#3a5cc0" stroke-width="1.5" opacity="0.85"/>
<path d="M296.9 2.2 l3.3 -5.7" stroke="#081040" stroke-width="1.5" opacity="0.85"/>
<path d="M299.2 23.5 l4.1 -4.7" stroke="#0a1450" stroke-width="1.5" opacity="0.85"/>
<path d="M225.2 20.2 l6.1 -4.1" stroke="#6a90c0" stroke-width="1.2" opacity="0.85"/>
<path d="M255.4 7.6 l3.6 -5.3" stroke="#3a5cc0" stroke-width="1" opacity="0.85"/>
<path d="M5.9 0.0 l3.9 -0.8" stroke="#3a5cc0" stroke-width="1.5" opacity="0.85"/>
<path d="M4.5 -1.9 l6.7 -1.1" stroke="#2c4cb0" stroke-width="1.5" opacity="0.85"/>
<path d="M10.4 20.1 l4.2 -0.5" stroke="#1a3090" stroke-width="1.5" opacity="0.85"/>
<path d="M16.8 20.4 l8.7 -0.4" stroke="#2c4cb0" stroke-width="1" opacity="0.85"/>
<path d="M62.9 0.0 l7.1 -3.9" stroke="#a09060" stroke-width="1" opacity="0.85"/>
<path d="M267.3 14.1 l1.6 -3.2" stroke="#2c4cb0" stroke-width="1.5" opacity="0.85"/>
<path d="M62.6 5.6 l3.0 -0.9" stroke="#142070" stroke-width="1.2" opacity="0.85"/>
<path d="M11.0 17.5 l7.6 -0.4" stroke="#6a90c0" stroke-width="1.5" opacity="0.85"/>
<path d="M152.1 4.8 l6.9 -3.4" stroke="#2040a0" stroke-width="1.2" opacity="0.85"/>
<path d="M166.1 -0.3 l2.7 -1.8" stroke="#6a90c0" stroke-width="1" opacity="0.85"/>
<path d="M230.7 19.4 l4.1 -2.4" stroke="#081040" stroke-width="1" opacity="0.85"/>
<path d="M167.8 4.8 l3.0 -1.5" stroke="#8aa0d8" stroke-width="1.2" opacity="0.85"/>
<path d="M26.6 15.8 l8.8 -0.8" stroke="#6a90c0" stroke-width="1.2" opacity="0.85"/>
<path d="M310.9 10.9 l2.2 -3.3" stroke="#5a78c8" stroke-width="1.5" opacity="0.85"/>
<path d="M71.4 1.5 l7.6 -0.2" stroke="#0a1450" stroke-width="1.5" opacity="0.85"/>
<path d="M180.2 -0.2 l2.9 -2.1" stroke="#081040" stroke-width="1.5" opacity="0.85"/>
<path d="M23.4 21.0 l3.7 -2.1" stroke="#142070" stroke-width="1.2" opacity="0.85"/>
<path d="M292.4 10.5 l4.1 -7.2" stroke="#5a78c8" stroke-width="1.2" opacity="0.85"/>
<path d="M36.9 13.0 l6.5 -1.1" stroke="#2040a0" stroke-width="1.2" opacity="0.85"/>
<path d="M186.9 11.1 l5.2 -2.3" stroke="#1a3090" stroke-width="1.5" opacity="0.85"/>
<path d="M101.7 9.5 l4.5 -0.7" stroke="#5a78c8" stroke-width="1" opacity="0.85"/>
<path d="M105.2 14.4 l6.0 -1.0" stroke="#142070" stroke-width="1.2" opacity="0.85"/>
<path d="M244.1 19.3 l4.3 -6.0" stroke="#5a78c8" stroke-width="1.5" opacity="0.85"/>
<path d="M102.8 11.1 l4.5 -2.1" stroke="#5a78c8" stroke-width="1.2" opacity="0.85"/>
<path d="M316.8 16.7 l3.4 -8.1" stroke="#2c4cb0" stroke-width="1" opacity="0.85"/>
<path d="M121.8 23.6 l7.4 -0.8" stroke="#081040" stroke-width="1.2" opacity="0.85"/>
<path d="M59.7 14.2 l3.8 -1.9" stroke="#081040" stroke-width="1.2" opacity="0.85"/>
<path d="M6.2 7.8 l7.1 -0.8" stroke="#1a3090" stroke-width="1.5" opacity="0.85"/>
<path d="M92.8 -2.4 l6.9 -2.8" stroke="#2040a0" stroke-width="1.5" opacity="0.85"/>
<path d="M75.0 20.0 l6.4 -1.0" stroke="#a09060" stroke-width="1.2" opacity="0.85"/>
<path d="M274.2 15.0 l4.9 -6.7" stroke="#a09060" stroke-width="1.5" opacity="0.85"/>
<path d="M187.6 3.2 l2.8 -2.4" stroke="#081040" stroke-width="1.2" opacity="0.85"/>
<path d="M80.7 15.9 l4.4 -0.2" stroke="#081040" stroke-width="1.5" opacity="0.85"/>
<path d="M230.2 1.2 l5.4 -2.4" stroke="#2040a0" stroke-width="1.5" opacity="0.85"/>
<path d="M278.3 11.0 l4.9 -6.6" stroke="#a09060" stroke-width="1.2" opacity="0.85"/>
<path d="M251.8 7.5 l4.7 -7.5" stroke="#2040a0" stroke-width="1.2" opacity="0.85"/>
<path d="M174.3 1.3 l7.8 -3.7" stroke="#1a3090" stroke-width="1.2" opacity="0.85"/>
<path d="M28.4 12.5 l7.1 -1.7" stroke="#1a3090" stroke-width="1" opacity="0.85"/>
<path d="M206.0 19.4 l4.6 -2.9" stroke="#0a1450" stroke-width="1" opacity="0.85"/>
<path d="M321.8 2.0 l4.7 -7.2" stroke="#6a90c0" stroke-width="1.2" opacity="0.85"/>
<path d="M205.4 3.8 l2.7 -2.0" stroke="#2c4cb0" stroke-width="1.2" opacity="0.85"/>
<path d="M297.1 14.0 l3.9 -5.2" stroke="#2c4cb0" stroke-width="1" opacity="0.85"/>
<path d="M95.2 7.8 l8.8 -0.2" stroke="#081040" stroke-width="1.2" opacity="0.85"/>
<path d="M65.0 0.5 l7.8 -0.9" stroke="#a09060" stroke-width="1" opacity="0.85"/>
<path d="M149.8 12.2 l8.1 -3.5" stroke="#8aa0d8" stroke-width="1.5" opacity="0.85"/>
<path d="M205.8 19.1 l5.3 -2.4" stroke="#142070" stroke-width="1.5" opacity="0.85"/>
<path d="M209.4 18.1 l6.4 -4.2" stroke="#5a78c8" stroke-width="1.2" opacity="0.85"/>
<path d="M227.4 15.6 l6.6 -2.5" stroke="#0a1450" stroke-width="1" opacity="0.85"/>
<path d="M260.8 18.6 l3.4 -6.1" stroke="#8aa0d8" stroke-width="1.2" opacity="0.85"/>
<path d="M155.0 13.8 l6.1 -5.7" stroke="#3a5cc0" stroke-width="1.2" opacity="0.85"/>
<path d="M277.0 -1.5 l5.5 -6.4" stroke="#3a5cc0" stroke-width="1.5" opacity="0.85"/>
<path d="M269.3 14.1 l1.1 -2.9" stroke="#2c4cb0" stroke-width="1.5" opacity="0.85"/>
<path d="M91.7 13.4 l7.9 -1.8" stroke="#3a5cc0" stroke-width="1.2" opacity="0.85"/>
<path d="M109.3 1.1 l7.7 -0.4" stroke="#3a5cc0" stroke-width="1.5" opacity="0.85"/>
<path d="M289.1 13.4 l4.5 -5.4" stroke="#1a3090" stroke-width="1.5" opacity="0.85"/>
<path d="M271.8 2.3 l3.7 -4.9" stroke="#0a1450" stroke-width="1.5" opacity="0.85"/>
<path d="M286.3 12.0 l2.0 -3.9" stroke="#3a5cc0" stroke-width="1.2" opacity="0.85"/>
<path d="M157.7 -1.4 l3.2 -2.1" stroke="#0a1450" stroke-width="1" opacity="0.85"/>
<path d="M159.4 11.6 l2.8 -1.2" stroke="#8aa0d8" stroke-width="1.2" opacity="0.85"/>
<path d="M224.6 10.4 l4.6 -3.5" stroke="#081040" stroke-width="1.2" opacity="0.85"/>
<path d="M325.0 15.3 l2.1 -4.7" stroke="#a09060" stroke-width="1" opacity="0.85"/>
<path d="M1.8 -1.8 l8.9 -1.2" stroke="#2c4cb0" stroke-width="1.5" opacity="0.85"/>
<path d="M154.8 17.4 l3.2 -2.8" stroke="#081040" stroke-width="1.5" opacity="0.85"/>
<path d="M36.9 -0.4 l5.0 -0.9" stroke="#1a3090" stroke-width="1.5" opacity="0.85"/>
<path d="M249.3 2.7 l2.8 -4.7" stroke="#1a3090" stroke-width="1" opacity="0.85"/>
<path d="M267.8 4.9 l3.5 -4.1" stroke="#1a3090" stroke-width="1.2" opacity="0.85"/>
<path d="M283.1 6.3 l2.5 -5.4" stroke="#2c4cb0" stroke-width="1.2" opacity="0.85"/>
<path d="M58.5 16.3 l7.9 -3.9" stroke="#2c4cb0" stroke-width="1" opacity="0.85"/>
<path d="M126.6 12.0 l6.1 -2.0" stroke="#081040" stroke-width="1.2" opacity="0.85"/>
<path d="M30.8 -1.7 l5.8 -0.5" stroke="#a09060" stroke-width="1" opacity="0.85"/>
<path d="M255.4 21.6 l3.9 -5.5" stroke="#a09060" stroke-width="1.5" opacity="0.85"/>
<path d="M224.8 13.1 l3.8 -2.0" stroke="#a09060" stroke-width="1.5" opacity="0.85"/>
<path d="M146.1 17.6 l3.6 -1.9" stroke="#2040a0" stroke-width="1.2" opacity="0.85"/>
<path d="M250.6 21.7 l3.1 -4.2" stroke="#3a5cc0" stroke-width="1.2" opacity="0.85"/>
<path d="M180.5 4.0 l4.4 -3.4" stroke="#8aa0d8" stroke-width="1" opacity="0.85"/>
<path d="M137.1 14.3 l3.3 -0.1" stroke="#6a90c0" stroke-width="1.5" opacity="0.85"/>
<path d="M8.0 0.2 l6.4 -0.6" stroke="#081040" stroke-width="1.2" opacity="0.85"/>
<path d="M17.2 15.4 l8.8 -1.9" stroke="#a09060" stroke-width="1" opacity="0.85"/>
<path d="M151.9 8.1 l5.1 -4.6" stroke="#5a78c8" stroke-width="1" opacity="0.85"/>
<path d="M201.9 8.5 l5.0 -4.9" stroke="#2c4cb0" stroke-width="1" opacity="0.85"/>
<path d="M282.0 0.5 l2.6 -6.9" stroke="#5a78c8" stroke-width="1.2" opacity="0.85"/>
<path d="M237.1 2.1 l5.5 -5.3" stroke="#3a5cc0" stroke-width="1.5" opacity="0.85"/>
<path d="M245.6 4.9 l3.3 -5.0" stroke="#a09060" stroke-width="1.2" opacity="0.85"/>
<path d="M296.5 -1.6 l1.2 -3.1" stroke="#a09060" stroke-width="1.5" opacity="0.85"/>
<path d="M264.7 -0.8 l3.4 -6.5" stroke="#3a5cc0" stroke-width="1.2" opacity="0.85"/>
<path d="M196.0 5.5 l6.9 -2.7" stroke="#0a1450" stroke-width="1.5" opacity="0.85"/>
<path d="M49.9 23.1 l7.8 -3.9" stroke="#3a5cc0" stroke-width="1.5" opacity="0.85"/>
<path d="M259.6 9.9 l3.6 -4.4" stroke="#142070" stroke-width="1.5" opacity="0.85"/>
<path d="M105.2 4.6 l6.8 -1.4" stroke="#6a90c0" stroke-width="1.2" opacity="0.85"/>
<path d="M282.0 16.6 l1.4 -3.7" stroke="#142070" stroke-width="1.5" opacity="0.85"/>
<path d="M136.4 21.0 l6.7 -2.3" stroke="#6a90c0" stroke-width="1" opacity="0.85"/>
<path d="M261.5 4.6 l1.6 -4.3" stroke="#081040" stroke-width="1" opacity="0.85"/>
<path d="M188.6 19.0 l3.0 -1.3" stroke="#3a5cc0" stroke-width="1.5" opacity="0.85"/>
<path d="M43.5 23.3 l6.3 -0.7" stroke="#0a1450" stroke-width="1.2" opacity="0.85"/>
<path d="M171.4 11.6 l4.4 -2.9" stroke="#5a78c8" stroke-width="1.2" opacity="0.85"/>
<path d="M195.3 15.3 l3.5 -2.3" stroke="#142070" stroke-width="1.5" opacity="0.85"/>
<path d="M242.9 18.4 l1.8 -3.0" stroke="#8aa0d8" stroke-width="1" opacity="0.85"/>
<path d="M71.8 12.6 l8.3 -0.4" stroke="#1a3090" stroke-width="1.2" opacity="0.85"/>
<path d="M152.3 12.9 l3.2 -2.7" stroke="#3a5cc0" stroke-width="1.5" opacity="0.85"/>
<path d="M90.6 12.6 l7.2 -2.5" stroke="#3a5cc0" stroke-width="1" opacity="0.85"/>
<path d="M9.7 23.9 l3.4 -1.2" stroke="#a09060" stroke-width="1.2" opacity="0.85"/>
<path d="M254.8 1.2 l2.9 -4.2" stroke="#1a3090" stroke-width="1.5" opacity="0.85"/>
<path d="M1.8 -2.1 l8.2 -0.0" stroke="#0a1450" stroke-width="1.5" opacity="0.85"/>
<path d="M182.2 4.1 l5.0 -2.4" stroke="#0a1450" stroke-width="1.5" opacity="0.85"/>
<path d="M265.2 23.0 l1.4 -2.9" stroke="#5a78c8" stroke-width="1" opacity="0.85"/>
<path d="M119.8 -2.3 l4.6 -2.5" stroke="#0a1450" stroke-width="1.2" opacity="0.85"/>
<path d="M307.6 21.6 l2.4 -6.1" stroke="#081040" stroke-width="1" opacity="0.85"/>
<path d="M228.1 -0.6 l3.5 -2.6" stroke="#2c4cb0" stroke-width="1.5" opacity="0.85"/>
<path d="M162.1 1.9 l4.8 -2.1" stroke="#5a78c8" stroke-width="1.5" opacity="0.85"/>
<path d="M68.2 -2.0 l4.7 -1.9" stroke="#1a3090" stroke-width="1" opacity="0.85"/>
<path d="M271.3 -1.7 l4.6 -5.6" stroke="#a09060" stroke-width="1.2" opacity="0.85"/>
<path d="M13.4 0.9 l8.6 -1.1" stroke="#a09060" stroke-width="1.5" opacity="0.85"/>
<path d="M93.6 13.0 l3.6 -0.5" stroke="#8aa0d8" stroke-width="1.2" opacity="0.85"/>
<path d="M79.8 0.4 l3.9 -1.1" stroke="#5a78c8" stroke-width="1" opacity="0.85"/>
<path d="M296.7 21.1 l4.5 -7.2" stroke="#2040a0" stroke-width="1" opacity="0.85"/>
<path d="M301.1 3.0 l5.6 -6.0" stroke="#3a5cc0" stroke-width="1.2" opacity="0.85"/>
<path d="M311.1 22.0 l1.5 -2.7" stroke="#2c4cb0" stroke-width="1.2" opacity="0.85"/>
<path d="M315.9 5.7 l1.6 -3.3" stroke="#8aa0d8" stroke-width="1" opacity="0.85"/>
<path d="M104.6 16.9 l5.2 -2.4" stroke="#3a5cc0" stroke-width="1.2" opacity="0.85"/>
<path d="M282.3 4.2 l2.0 -3.4" stroke="#142070" stroke-width="1.5" opacity="0.85"/>
<path d="M272.1 6.0 l2.4 -5.4" stroke="#8aa0d8" stroke-width="1.2" opacity="0.85"/>
<path d="M293.0 0.1 l2.3 -2.4" stroke="#a09060" stroke-width="1" opacity="0.85"/>
<path d="M179.8 19.6 l5.6 -5.0" stroke="#8aa0d8" stroke-width="1.2" opacity="0.85"/>
<path d="M322.0 23.9 l2.5 -2.6" stroke="#142070" stroke-width="1.2" opacity="0.85"/>
<path d="M290.7 -1.4 l2.9 -3.7" stroke="#a09060" stroke-width="1" opacity="0.85"/>
<path d="M140.9 10.7 l5.5 -1.4" stroke="#1a3090" stroke-width="1.2" opacity="0.85"/>
<path d="M56.3 8.8 l4.3 -0.2" stroke="#6a90c0" stroke-width="1" opacity="0.85"/>
<path d="M40.6 1.9 l7.2 -0.9" stroke="#5a78c8" stroke-width="1.5" opacity="0.85"/>
<path d="M21.2 -0.6 l5.8 -1.2" stroke="#142070" stroke-width="1" opacity="0.85"/>
<path d="M63.0 13.5 l7.8 -1.2" stroke="#6a90c0" stroke-width="1.2" opacity="0.85"/>
<path d="M61.8 -1.2 l5.4 -0.8" stroke="#2040a0" stroke-width="1.5" opacity="0.85"/>
<path d="M262.5 6.1 l5.4 -6.2" stroke="#0a1450" stroke-width="1" opacity="0.85"/>
<path d="M0.1 21.6 l7.9 -2.2" stroke="#142070" stroke-width="1" opacity="0.85"/>
<path d="M56.4 19.5 l3.8 -1.3" stroke="#8aa0d8" stroke-width="1.5" opacity="0.85"/>
<path d="M191.3 -2.9 l4.8 -3.0" stroke="#1a3090" stroke-width="1" opacity="0.85"/>
<path d="M34.9 16.3 l8.2 -0.8" stroke="#8aa0d8" stroke-width="1.5" opacity="0.85"/>
<path d="M281.5 12.6 l3.2 -3.5" stroke="#2c4cb0" stroke-width="1.5" opacity="0.85"/>
<path d="M158.3 10.9 l5.3 -3.3" stroke="#2040a0" stroke-width="1" opacity="0.85"/>
<path d="M314.3 3.0 l1.5 -3.3" stroke="#142070" stroke-width="1.5" opacity="0.85"/>
<path d="M264.7 -2.2 l2.7 -6.7" stroke="#5a78c8" stroke-width="1.2" opacity="0.85"/>
<path d="M0.8 13.2 l6.0 -1.3" stroke="#0a1450" stroke-width="1" opacity="0.85"/>
<path d="M110.7 -0.5 l4.2 -1.9" stroke="#0a1450" stroke-width="1.2" opacity="0.85"/>
<path d="M188.3 17.6 l2.8 -2.5" stroke="#3a5cc0" stroke-width="1.5" opacity="0.85"/>
<path d="M190.3 20.2 l4.8 -4.3" stroke="#081040" stroke-width="1" opacity="0.85"/>
<path d="M307.9 -2.5 l4.2 -5.8" stroke="#6a90c0" stroke-width="1.5" opacity="0.85"/>
<path d="M168.5 7.7 l7.1 -2.8" stroke="#8aa0d8" stroke-width="1.2" opacity="0.85"/>
<path d="M74.3 6.0 l8.5 -2.6" stroke="#8aa0d8" stroke-width="1.2" opacity="0.85"/>
<path d="M274.7 -1.6 l4.8 -7.3" stroke="#8aa0d8" stroke-width="1" opacity="0.85"/>
<path d="M282.3 14.9 l1.3 -3.4" stroke="#3a5cc0" stroke-width="1" opacity="0.85"/>
<path d="M102.0 2.4 l4.3 -0.8" stroke="#081040" stroke-width="1.2" opacity="0.85"/>
<path d="M251.3 22.3 l4.6 -6.4" stroke="#2040a0" stroke-width="1" opacity="0.85"/>
<path d="M280.7 13.8 l4.6 -4.9" stroke="#a09060" stroke-width="1.5" opacity="0.85"/>
<path d="M261.1 -2.0 l1.4 -3.4" stroke="#2040a0" stroke-width="1.2" opacity="0.85"/>
<path d="M73.1 -1.9 l4.5 -2.3" stroke="#3a5cc0" stroke-width="1" opacity="0.85"/>
<path d="M14.9 22.9 l8.4 -0.3" stroke="#2c4cb0" stroke-width="1.2" opacity="0.85"/>
<path d="M189.8 22.2 l5.0 -3.4" stroke="#142070" stroke-width="1.2" opacity="0.85"/>
<path d="M185.5 4.4 l6.7 -3.3" stroke="#142070" stroke-width="1.2" opacity="0.85"/>
<path d="M196.3 12.4 l3.7 -2.0" stroke="#8aa0d8" stroke-width="1.2" opacity="0.85"/>
<path d="M289.3 5.2 l4.2 -6.7" stroke="#2040a0" stroke-width="1" opacity="0.85"/>
<path d="M105.1 2.1 l8.6 -2.1" stroke="#081040" stroke-width="1" opacity="0.85"/>
<path d="M300.0 1.4 l3.4 -3.6" stroke="#8aa0d8" stroke-width="1.2" opacity="0.85"/>
<path d="M84.1 20.7 l3.1 -1.3" stroke="#2040a0" stroke-width="1" opacity="0.85"/>
<path d="M176.9 13.4 l5.6 -4.1" stroke="#1a3090" stroke-width="1.2" opacity="0.85"/>
<path d="M270.3 6.6 l3.9 -4.8" stroke="#a09060" stroke-width="1.5" opacity="0.85"/>
<path d="M303.2 8.3 l2.3 -3.1" stroke="#5a78c8" stroke-width="1.5" opacity="0.85"/>
<path d="M196.5 4.5 l3.3 -1.5" stroke="#0a1450" stroke-width="1.2" opacity="0.85"/>
<path d="M254.0 16.1 l2.6 -2.8" stroke="#2c4cb0" stroke-width="1" opacity="0.85"/>
<path d="M130.4 11.8 l4.8 -2.4" stroke="#6a90c0" stroke-width="1" opacity="0.85"/>
<path d="M132.9 18.2 l6.6 -0.4" stroke="#081040" stroke-width="1.2" opacity="0.85"/>
<path d="M223.6 4.8 l4.1 -3.0" stroke="#1a3090" stroke-width="1.5" opacity="0.85"/>
<path d="M191.5 14.5 l5.3 -5.3" stroke="#0a1450" stroke-width="1.2" opacity="0.85"/>
<path d="M141.5 2.0 l3.6 -1.4" stroke="#6a90c0" stroke-width="1.2" opacity="0.85"/>
<path d="M186.9 -0.6 l4.6 -1.9" stroke="#6a90c0" stroke-width="1" opacity="0.85"/>
<path d="M311.4 2.5 l4.3 -7.3" stroke="#2040a0" stroke-width="1" opacity="0.85"/>
<path d="M10.7 12.3 l8.2 -2.2" stroke="#142070" stroke-width="1.5" opacity="0.85"/>
<path d="M199.6 8.8 l6.7 -3.0" stroke="#081040" stroke-width="1.2" opacity="0.85"/>
<path d="M148.2 -1.9 l5.6 -1.0" stroke="#2040a0" stroke-width="1.5" opacity="0.85"/>
<path d="M17.5 3.2 l5.7 -1.8" stroke="#a09060" stroke-width="1.5" opacity="0.85"/>
<path d="M301.4 1.2 l2.3 -5.0" stroke="#081040" stroke-width="1.2" opacity="0.85"/>
<path d="M248.2 21.3 l4.1 -5.9" stroke="#2c4cb0" stroke-width="1" opacity="0.85"/>
<path d="M114.7 6.9 l4.3 -2.3" stroke="#3a5cc0" stroke-width="1" opacity="0.85"/>
<path d="M211.5 5.0 l6.9 -5.1" stroke="#1a3090" stroke-width="1.2" opacity="0.85"/>
<path d="M203.3 11.1 l3.9 -1.8" stroke="#5a78c8" stroke-width="1.2" opacity="0.85"/>
<path d="M55.2 14.0 l5.0 -1.1" stroke="#a09060" stroke-width="1.5" opacity="0.85"/>
<path d="M233.5 15.7 l2.1 -2.1" stroke="#1a3090" stroke-width="1" opacity="0.85"/>
<path d="M297.6 7.7 l1.2 -2.9" stroke="#2040a0" stroke-width="1" opacity="0.85"/>
<path d="M52.8 17.8 l8.0 -1.8" stroke="#1a3090" stroke-width="1.5" opacity="0.85"/>
<path d="M324.0 12.5 l1.9 -3.2" stroke="#3a5cc0" stroke-width="1.5" opacity="0.85"/>
<path d="M245.6 -0.1 l1.5 -3.7" stroke="#1a3090" stroke-width="1.2" opacity="0.85"/>
<path d="M266.6 13.6 l2.2 -2.6" stroke="#2040a0" stroke-width="1.5" opacity="0.85"/>
<path d="M249.3 5.7 l3.1 -4.0" stroke="#3a5cc0" stroke-width="1" opacity="0.85"/>
<path d="M83.0 -0.3 l6.5 -0.3" stroke="#8aa0d8" stroke-width="1" opacity="0.85"/>
<path d="M143.4 7.4 l7.3 -4.0" stroke="#6a90c0" stroke-width="1" opacity="0.85"/>
<path d="M140.1 13.7 l3.0 -1.3" stroke="#6a90c0" stroke-width="1" opacity="0.85"/>
<path d="M98.9 21.3 l4.8 -0.5" stroke="#6a90c0" stroke-width="1.2" opacity="0.85"/>
<path d="M311.8 10.4 l3.1 -3.2" stroke="#081040" stroke-width="1.5" opacity="0.85"/>
<path d="M232.1 3.0 l6.6 -5.0" stroke="#0a1450" stroke-width="1" opacity="0.85"/>
<path d="M256.6 3.6 l2.1 -4.7" stroke="#3a5cc0" stroke-width="1" opacity="0.85"/>
<path d="M315.6 4.8 l2.1 -3.1" stroke="#1a3090" stroke-width="1.2" opacity="0.85"/>
<path d="M105.8 14.6 l5.5 -0.1" stroke="#8aa0d8" stroke-width="1.5" opacity="0.85"/>
<path d="M75.8 2.2 l4.1 -1.6" stroke="#2040a0" stroke-width="1.2" opacity="0.85"/>
<path d="M214.2 6.2 l5.5 -4.8" stroke="#2c4cb0" stroke-width="1" opacity="0.85"/>
<path d="M84.0 19.5 l5.1 -2.5" stroke="#5a78c8" stroke-width="1" opacity="0.85"/>
<path d="M116.4 2.8 l6.5 -2.1" stroke="#6a90c0" stroke-width="1" opacity="0.85"/>
<path d="M93.1 9.9 l7.5 -3.3" stroke="#a09060" stroke-width="1" opacity="0.85"/>
<path d="M305.9 23.9 l3.2 -4.6" stroke="#8aa0d8" stroke-width="1.5" opacity="0.85"/>
<path d="M76.3 13.4 l7.5 -3.3" stroke="#2c4cb0" stroke-width="1.5" opacity="0.85"/>
<path d="M164.3 11.7 l6.0 -4.7" stroke="#081040" stroke-width="1" opacity="0.85"/>
<path d="M212.0 12.3 l4.3 -3.2" stroke="#2c4cb0" stroke-width="1.5" opacity="0.85"/>
<path d="M53.4 20.0 l6.5 -2.4" stroke="#2c4cb0" stroke-width="1" opacity="0.85"/>
<path d="M180.5 6.8 l4.0 -2.6" stroke="#2c4cb0" stroke-width="1.5" opacity="0.85"/>
<path d="M97.7 3.1 l6.5 -3.2" stroke="#142070" stroke-width="1.2" opacity="0.85"/>
<path d="M128.1 21.5 l8.2 -1.0" stroke="#3a5cc0" stroke-width="1.2" opacity="0.85"/>
<path d="M53.2 6.9 l7.1 -0.7" stroke="#081040" stroke-width="1" opacity="0.85"/>
<path d="M212.5 15.9 l6.3 -5.1" stroke="#8aa0d8" stroke-width="1.5" opacity="0.85"/>
<path d="M27.2 4.9 l6.2 -2.5" stroke="#5a78c8" stroke-width="1.5" opacity="0.85"/>
<path d="M218.5 7.9 l4.8 -2.8" stroke="#142070" stroke-width="1" opacity="0.85"/>
<path d="M120.6 -1.9 l6.4 -2.4" stroke="#3a5cc0" stroke-width="1.5" opacity="0.85"/>
<path d="M272.0 12.4 l2.8 -3.6" stroke="#081040" stroke-width="1.5" opacity="0.85"/>
<path d="M220.8 6.4 l5.7 -5.7" stroke="#a09060" stroke-width="1.2" opacity="0.85"/>
<path d="M292.4 20.6 l4.1 -5.9" stroke="#5a78c8" stroke-width="1.5" opacity="0.85"/>
<path d="M31.7 18.4 l7.8 -3.4" stroke="#2c4cb0" stroke-width="1.2" opacity="0.85"/>
<path d="M224.2 7.6 l7.1 -3.5" stroke="#142070" stroke-width="1.5" opacity="0.85"/>
<path d="M24.7 22.6 l8.2 -2.5" stroke="#1a3090" stroke-width="1.5" opacity="0.85"/>
<path d="M222.2 19.6 l5.3 -3.0" stroke="#a09060" stroke-width="1.5" opacity="0.85"/>
<path d="M63.0 15.2 l7.6 -0.6" stroke="#0a1450" stroke-width="1" opacity="0.85"/>
<path d="M9.4 16.0 l4.5 -0.5" stroke="#1a3090" stroke-width="1" opacity="0.85"/>
<path d="M314.9 14.2 l2.5 -3.7" stroke="#2040a0" stroke-width="1" opacity="0.85"/>
<path d="M113.1 8.1 l4.4 -2.0" stroke="#3a5cc0" stroke-width="1.5" opacity="0.85"/>
<path d="M228.3 15.1 l3.5 -2.8" stroke="#1a3090" stroke-width="1.5" opacity="0.85"/>
<path d="M141.9 22.3 l4.5 -1.6" stroke="#3a5cc0" stroke-width="1.5" opacity="0.85"/>
<path d="M180.9 6.0 l5.7 -2.6" stroke="#3a5cc0" stroke-width="1.5" opacity="0.85"/>
<path d="M215.0 13.2 l6.3 -4.2" stroke="#5a78c8" stroke-width="1" opacity="0.85"/>
<path d="M222.7 -2.7 l2.7 -1.8" stroke="#142070" stroke-width="1.2" opacity="0.85"/>
<path d="M60.0 15.9 l3.5 -1.0" stroke="#8aa0d8" stroke-width="1.2" opacity="0.85"/>
<path d="M149.7 6.8 l3.1 -1.4" stroke="#2040a0" stroke-width="1.2" opacity="0.85"/>
<path d="M322.4 17.3 l2.7 -6.8" stroke="#6a90c0" stroke-width="1.2" opacity="0.85"/>
<path d="M30.9 10.2 l4.0 -1.2" stroke="#1a3090" stroke-width="1.2" opacity="0.85"/>
<path d="M-2.3 21.8 l6.6 -1.3" stroke="#a09060" stroke-width="1.5" opacity="0.85"/>
<path d="M78.0 3.6 l2.8 -1.4" stroke="#081040" stroke-width="1" opacity="0.85"/>
<path d="M92.8 2.0 l7.9 -1.5" stroke="#a09060" stroke-width="1" opacity="0.85"/>
<path d="M28.7 16.4 l6.3 -2.4" stroke="#081040" stroke-width="1" opacity="0.85"/>
<path d="M208.6 6.6 l3.0 -2.4" stroke="#8aa0d8" stroke-width="1.2" opacity="0.85"/>
<path d="M74.0 -1.9 l6.6 -1.5" stroke="#081040" stroke-width="1" opacity="0.85"/>
<path d="M306.8 10.3 l2.1 -3.3" stroke="#142070" stroke-width="1.5" opacity="0.85"/>
<path d="M186.8 -0.8 l3.5 -1.9" stroke="#0a1450" stroke-width="1.5" opacity="0.85"/>
<path d="M315.0 -0.6 l2.0 -5.3" stroke="#5a78c8" stroke-width="1" opacity="0.85"/>
<path d="M233.6 -2.9 l7.4 -3.3" stroke="#1a3090" stroke-width="1.2" opacity="0.85"/>
<path d="M42.2 -1.1 l6.4 -3.4" stroke="#8aa0d8" stroke-width="1" opacity="0.85"/>
<path d="M139.8 15.0 l8.4 -0.8" stroke="#3a5cc0" stroke-width="1.2" opacity="0.85"/>
<path d="M92.6 9.0 l5.0 -1.2" stroke="#5a78c8" stroke-width="1.2" opacity="0.85"/>
<path d="M23.1 5.7 l8.5 -2.5" stroke="#a09060" stroke-width="1" opacity="0.85"/>
<path d="M316.5 23.0 l4.6 -6.4" stroke="#2040a0" stroke-width="1.5" opacity="0.85"/>
<path d="M218.2 13.4 l5.1 -3.9" stroke="#8aa0d8" stroke-width="1.2" opacity="0.85"/>
<path d="M211.6 0.7 l5.7 -2.5" stroke="#a09060" stroke-width="1" opacity="0.85"/>
<path d="M274.9 3.0 l4.4 -5.6" stroke="#3a5cc0" stroke-width="1.5" opacity="0.85"/>
<path d="M186.1 12.0 l4.8 -1.9" stroke="#5a78c8" stroke-width="1.5" opacity="0.85"/>
<path d="M140.7 4.0 l8.1 -3.5" stroke="#5a78c8" stroke-width="1.5" opacity="0.85"/>
<path d="M242.4 3.0 l4.5 -5.2" stroke="#5a78c8" stroke-width="1.5" opacity="0.85"/>
<path d="M216.2 16.1 l4.4 -3.6" stroke="#1a3090" stroke-width="1.5" opacity="0.85"/>
<path d="M224.9 16.9 l5.9 -2.4" stroke="#081040" stroke-width="1.5" opacity="0.85"/>
<path d="M19.2 8.9 l6.3 -0.5" stroke="#2c4cb0" stroke-width="1.5" opacity="0.85"/>
<path d="M321.9 16.5 l3.1 -7.4" stroke="#081040" stroke-width="1.5" opacity="0.85"/>
<path d="M51.5 22.9 l7.5 -1.7" stroke="#3a5cc0" stroke-width="1.2" opacity="0.85"/>
<path d="M251.1 -1.4 l2.3 -4.7" stroke="#2040a0" stroke-width="1.5" opacity="0.85"/>
<path d="M191.1 2.8 l5.7 -4.4" stroke="#081040" stroke-width="1" opacity="0.85"/>
<path d="M200.0 20.5 l7.3 -4.4" stroke="#8aa0d8" stroke-width="1" opacity="0.85"/>
<path d="M116.1 19.7 l7.4 -0.8" stroke="#2040a0" stroke-width="1.2" opacity="0.85"/>
<path d="M35.5 7.1 l8.6 -1.2" stroke="#0a1450" stroke-width="1" opacity="0.85"/>
<path d="M264.5 6.5 l2.4 -4.3" stroke="#6a90c0" stroke-width="1" opacity="0.85"/>
<path d="M6.3 21.6 l4.7 -2.0" stroke="#0a1450" stroke-width="1" opacity="0.85"/>
<path d="M271.6 12.7 l1.2 -2.9" stroke="#2c4cb0" stroke-width="1" opacity="0.85"/>
<path d="M259.2 2.0 l2.6 -3.9" stroke="#a09060" stroke-width="1.5" opacity="0.85"/>
<path d="M120.7 0.9 l6.2 -0.4" stroke="#142070" stroke-width="1.2" opacity="0.85"/>
<path d="M-0.4 6.2 l5.4 -2.6" stroke="#2040a0" stroke-width="1" opacity="0.85"/>
<path d="M19.6 13.8 l6.5 -1.2" stroke="#0a1450" stroke-width="1" opacity="0.85"/>
<path d="M223.7 9.1 l6.8 -5.5" stroke="#1a3090" stroke-width="1" opacity="0.85"/>
<path d="M114.1 11.3 l3.5 -1.3" stroke="#6a90c0" stroke-width="1" opacity="0.85"/>
<path d="M64.8 19.1 l4.9 -0.7" stroke="#0a1450" stroke-width="1.2" opacity="0.85"/>
<path d="M304.3 5.5 l2.8 -5.2" stroke="#5a78c8" stroke-width="1" opacity="0.85"/>
<path d="M77.1 20.7 l6.6 -1.4" stroke="#a09060" stroke-width="1" opacity="0.85"/>
<path d="M85.0 4.4 l4.4 -1.2" stroke="#6a90c0" stroke-width="1.5" opacity="0.85"/>
<path d="M169.3 22.8 l3.0 -1.1" stroke="#1a3090" stroke-width="1" opacity="0.85"/>
<path d="M282.9 17.9 l4.0 -5.5" stroke="#8aa0d8" stroke-width="1.2" opacity="0.85"/>
<path d="M256.7 3.4 l2.5 -3.0" stroke="#2c4cb0" stroke-width="1.2" opacity="0.85"/>
<path d="M312.8 6.2 l3.9 -7.1" stroke="#5a78c8" stroke-width="1.2" opacity="0.85"/>
<path d="M283.0 16.3 l3.4 -6.4" stroke="#a09060" stroke-width="1.2" opacity="0.85"/>
<path d="M286.6 18.1 l4.5 -7.0" stroke="#5a78c8" stroke-width="1.2" opacity="0.85"/>
<path d="M44.8 2.5 l7.0 -0.4" stroke="#081040" stroke-width="1.2" opacity="0.85"/>
<path d="M125.7 17.9 l6.5 -0.2" stroke="#3a5cc0" stroke-width="1.2" opacity="0.85"/>
<path d="M232.6 3.8 l6.0 -3.6" stroke="#8aa0d8" stroke-width="1" opacity="0.85"/>
<path d="M299.0 12.8 l1.5 -3.8" stroke="#6a90c0" stroke-width="1.2" opacity="0.85"/>
<path d="M320.9 6.6 l3.5 -4.3" stroke="#2c4cb0" stroke-width="1.2" opacity="0.85"/>
<path d="M100.4 1.7 l6.3 -0.3" stroke="#3a5cc0" stroke-width="1.5" opacity="0.85"/>
<path d="M83.5 16.0 l5.0 -2.1" stroke="#5a78c8" stroke-width="1.5" opacity="0.85"/>
<path d="M88.3 10.6 l4.0 -2.0" stroke="#2040a0" stroke-width="1" opacity="0.85"/>
<path d="M193.3 -0.9 l7.5 -3.5" stroke="#8aa0d8" stroke-width="1.5" opacity="0.85"/>
<path d="M40.1 2.1 l8.0 -2.0" stroke="#a09060" stroke-width="1.2" opacity="0.85"/>
<path d="M299.6 2.7 l3.5 -6.6" stroke="#a09060" stroke-width="1.2" opacity="0.85"/>
<path d="M128.8 15.3 l3.1 -1.1" stroke="#081040" stroke-width="1" opacity="0.85"/>
<path d="M23.8 13.5 l8.9 -1.0" stroke="#081040" stroke-width="1.2" opacity="0.85"/>
<path d="M305.3 20.6 l1.7 -4.6" stroke="#a09060" stroke-width="1.2" opacity="0.85"/>
<path d="M13.5 13.6 l4.9 -0.7" stroke="#2c4cb0" stroke-width="1" opacity="0.85"/>
<path d="M46.5 0.9 l3.5 -0.4" stroke="#8aa0d8" stroke-width="1.2" opacity="0.85"/>
<path d="M108.6 15.4 l3.9 -0.3" stroke="#6a90c0" stroke-width="1.5" opacity="0.85"/>
<path d="M104.2 17.0 l6.7 -2.8" stroke="#2040a0" stroke-width="1.5" opacity="0.85"/>
<path d="M97.1 17.9 l5.7 -0.1" stroke="#142070" stroke-width="1.2" opacity="0.85"/>
<path d="M167.7 22.4 l2.3 -2.0" stroke="#0a1450" stroke-width="1" opacity="0.85"/>
<path d="M211.3 17.9 l7.2 -5.2" stroke="#5a78c8" stroke-width="1.2" opacity="0.85"/>
<path d="M244.7 -0.6 l1.3 -3.6" stroke="#2040a0" stroke-width="1.5" opacity="0.85"/>
<path d="M160.6 12.0 l6.6 -5.6" stroke="#8aa0d8" stroke-width="1.5" opacity="0.85"/>
<path d="M44.3 1.8 l8.4 -1.2" stroke="#3a5cc0" stroke-width="1.5" opacity="0.85"/>
<path d="M4.6 18.0 l8.2 -3.4" stroke="#0a1450" stroke-width="1" opacity="0.85"/>
<path d="M204.9 6.3 l5.2 -2.4" stroke="#8aa0d8" stroke-width="1" opacity="0.85"/>
<path d="M30.6 16.8 l6.1 -3.2" stroke="#081040" stroke-width="1.5" opacity="0.85"/>
<path d="M280.1 -1.4 l3.1 -4.5" stroke="#081040" stroke-width="1.5" opacity="0.85"/>
<path d="M202.0 3.1 l3.6 -2.9" stroke="#081040" stroke-width="1" opacity="0.85"/>
<path d="M71.4 2.5 l6.8 -0.9" stroke="#142070" stroke-width="1.2" opacity="0.85"/>
<path d="M66.5 12.4 l7.4 -3.5" stroke="#142070" stroke-width="1" opacity="0.85"/>
<path d="M266.5 4.6 l2.8 -5.2" stroke="#5a78c8" stroke-width="1" opacity="0.85"/>
<path d="M100.5 13.5 l4.3 -0.1" stroke="#2040a0" stroke-width="1" opacity="0.85"/>
<path d="M275.9 16.9 l2.8 -7.1" stroke="#0a1450" stroke-width="1" opacity="0.85"/>
<path d="M138.5 0.8 l7.1 -0.2" stroke="#2c4cb0" stroke-width="1" opacity="0.85"/>
<path d="M316.5 -2.7 l2.7 -2.9" stroke="#8aa0d8" stroke-width="1" opacity="0.85"/>
<path d="M242.9 9.5 l2.7 -4.8" stroke="#a09060" stroke-width="1.5" opacity="0.85"/>
<path d="M231.4 20.8 l3.0 -1.1" stroke="#5a78c8" stroke-width="1" opacity="0.85"/>
<path d="M256.4 15.6 l2.2 -5.6" stroke="#5a78c8" stroke-width="1.5" opacity="0.85"/>
<path d="M137.1 -0.2 l7.8 -4.4" stroke="#8aa0d8" stroke-width="1" opacity="0.85"/>
<path d="M284.9 0.3 l2.0 -3.2" stroke="#081040" stroke-width="1" opacity="0.85"/>
<path d="M54.1 15.5 l6.7 -3.2" stroke="#1a3090" stroke-width="1" opacity="0.85"/>
<path d="M169.9 19.7 l3.2 -1.2" stroke="#5a78c8" stroke-width="1" opacity="0.85"/>
<path d="M236.4 4.4 l3.5 -3.0" stroke="#2c4cb0" stroke-width="1" opacity="0.85"/>
<path d="M59.8 -1.7 l8.7 -1.0" stroke="#142070" stroke-width="1" opacity="0.85"/>
<path d="M102.5 -1.9 l4.5 -1.3" stroke="#8aa0d8" stroke-width="1.5" opacity="0.85"/>
<path d="M130.4 23.8 l4.6 -0.6" stroke="#081040" stroke-width="1.2" opacity="0.85"/>
<path d="M173.2 7.3 l5.7 -5.0" stroke="#081040" stroke-width="1" opacity="0.85"/>
<path d="M291.4 14.1 l2.6 -5.4" stroke="#142070" stroke-width="1.5" opacity="0.85"/>
<path d="M196.6 7.2 l3.3 -2.6" stroke="#2c4cb0" stroke-width="1" opacity="0.85"/>
<path d="M273.2 18.2 l2.2 -2.4" stroke="#1a3090" stroke-width="1.2" opacity="0.85"/>
<path d="M221.0 8.9 l5.0 -2.7" stroke="#6a90c0" stroke-width="1" opacity="0.85"/>
<path d="M151.2 14.5 l4.2 -2.8" stroke="#1a3090" stroke-width="1.2" opacity="0.85"/>
<path d="M72.4 14.0 l5.2 -0.7" stroke="#2c4cb0" stroke-width="1.2" opacity="0.85"/>
<path d="M317.1 4.2 l4.7 -6.4" stroke="#2c4cb0" stroke-width="1.5" opacity="0.85"/>
<path d="M258.1 14.9 l5.2 -5.5" stroke="#142070" stroke-width="1.2" opacity="0.85"/>
<path d="M278.0 6.4 l3.7 -5.3" stroke="#3a5cc0" stroke-width="1" opacity="0.85"/>
<path d="M301.0 11.3 l3.4 -5.2" stroke="#8aa0d8" stroke-width="1" opacity="0.85"/>
<path d="M217.3 1.1 l3.6 -1.9" stroke="#a09060" stroke-width="1" opacity="0.85"/>
<path d="M101.2 6.8 l5.6 -0.4" stroke="#081040" stroke-width="1" opacity="0.85"/>
<path d="M226.9 7.1 l5.7 -4.1" stroke="#1a3090" stroke-width="1.5" opacity="0.85"/>
<path d="M94.8 14.9 l4.4 -1.8" stroke="#0a1450" stroke-width="1.5" opacity="0.85"/>
<path d="M31.9 14.1 l4.0 -0.6" stroke="#1a3090" stroke-width="1" opacity="0.85"/>
<path d="M-3.0 0.5 l6.7 -1.8" stroke="#6a90c0" stroke-width="1.2" opacity="0.85"/>
<path d="M167.7 18.6 l4.9 -4.0" stroke="#2040a0" stroke-width="1.5" opacity="0.85"/>
<path d="M80.7 12.9 l5.9 -2.2" stroke="#8aa0d8" stroke-width="1.2" opacity="0.85"/>
<path d="M74.8 19.5 l6.1 -3.1" stroke="#2c4cb0" stroke-width="1" opacity="0.85"/>
<path d="M37.3 22.9 l7.2 -2.8" stroke="#2040a0" stroke-width="1.5" opacity="0.85"/>
<path d="M141.0 6.9 l4.7 -0.7" stroke="#081040" stroke-width="1.2" opacity="0.85"/>
<path d="M208.9 18.9 l4.3 -3.1" stroke="#6a90c0" stroke-width="1" opacity="0.85"/>
<path d="M300.2 2.2 l5.1 -5.2" stroke="#8aa0d8" stroke-width="1" opacity="0.85"/>
<path d="M214.6 5.9 l5.5 -5.2" stroke="#081040" stroke-width="1.2" opacity="0.85"/>
<path d="M168.5 10.4 l7.0 -2.9" stroke="#2040a0" stroke-width="1" opacity="0.85"/>
<path d="M190.6 9.5 l6.7 -4.4" stroke="#081040" stroke-width="1.2" opacity="0.85"/>
<path d="M53.2 -1.2 l3.6 -1.2" stroke="#2040a0" stroke-width="1.5" opacity="0.85"/>
<path d="M71.7 2.4 l8.3 -2.0" stroke="#142070" stroke-width="1.5" opacity="0.85"/>
<path d="M104.0 7.5 l3.4 -1.0" stroke="#2c4cb0" stroke-width="1.5" opacity="0.85"/>
<path d="M264.8 -0.3 l2.8 -7.0" stroke="#6a90c0" stroke-width="1.2" opacity="0.85"/>
<path d="M13.2 15.4 l5.8 -0.9" stroke="#2040a0" stroke-width="1.5" opacity="0.85"/>
<path d="M223.0 8.3 l7.8 -4.5" stroke="#2040a0" stroke-width="1.5" opacity="0.85"/>
<path d="M43.0 6.0 l2.9 -0.8" stroke="#1a3090" stroke-width="1.2" opacity="0.85"/>
<path d="M166.6 -0.7 l5.7 -4.0" stroke="#142070" stroke-width="1.5" opacity="0.85"/>
<path d="M125.3 20.9 l4.8 -0.8" stroke="#5a78c8" stroke-width="1.2" opacity="0.85"/>
<path d="M259.7 20.1 l1.9 -3.8" stroke="#2040a0" stroke-width="1" opacity="0.85"/>
<path d="M172.2 7.1 l5.0 -3.3" stroke="#6a90c0" stroke-width="1" opacity="0.85"/>
<path d="M115.7 18.6 l7.8 -3.5" stroke="#1a3090" stroke-width="1.5" opacity="0.85"/>
<path d="M11.9 5.5 l5.3 -1.3" stroke="#6a90c0" stroke-width="1.2" opacity="0.85"/>
<path d="M6.7 2.9 l4.0 -1.2" stroke="#5a78c8" stroke-width="1.5" opacity="0.85"/>
<path d="M196.5 8.0 l3.8 -1.9" stroke="#5a78c8" stroke-width="1" opacity="0.85"/>
<path d="M54.4 20.2 l3.4 -1.7" stroke="#2c4cb0" stroke-width="1.5" opacity="0.85"/>
<path d="M159.1 -2.6 l6.6 -3.4" stroke="#3a5cc0" stroke-width="1.2" opacity="0.85"/>
<path d="M67.9 16.5 l7.7 -1.0" stroke="#1a3090" stroke-width="1" opacity="0.85"/>
<path d="M43.1 21.8 l3.3 -1.5" stroke="#2c4cb0" stroke-width="1" opacity="0.85"/>
<path d="M253.8 22.7 l3.5 -6.0" stroke="#142070" stroke-width="1.5" opacity="0.85"/>
<path d="M293.9 15.5 l1.4 -3.1" stroke="#3a5cc0" stroke-width="1" opacity="0.85"/>
<path d="M47.8 9.1 l8.2 -1.0" stroke="#8aa0d8" stroke-width="1.5" opacity="0.85"/>
<path d="M180.0 1.2 l4.6 -1.9" stroke="#5a78c8" stroke-width="1" opacity="0.85"/>
<path d="M307.0 15.0 l3.8 -8.0" stroke="#8aa0d8" stroke-width="1.2" opacity="0.85"/>
<path d="M46.5 4.9 l7.0 -1.3" stroke="#5a78c8" stroke-width="1.2" opacity="0.85"/>
<path d="M44.1 2.0 l5.1 -1.9" stroke="#2040a0" stroke-width="1.2" opacity="0.85"/>
<path d="M35.3 21.9 l8.6 -0.0" stroke="#1a3090" stroke-width="1" opacity="0.85"/>
<path d="M91.0 6.4 l5.9 -0.8" stroke="#2c4cb0" stroke-width="1" opacity="0.85"/>
<path d="M155.0 20.3 l5.4 -3.1" stroke="#2c4cb0" stroke-width="1" opacity="0.85"/>
<path d="M41.1 4.3 l8.1 -0.5" stroke="#5a78c8" stroke-width="1.5" opacity="0.85"/>
<path d="M300.1 -2.1 l5.0 -7.2" stroke="#8aa0d8" stroke-width="1" opacity="0.85"/>
<path d="M306.7 14.7 l1.8 -4.7" stroke="#0a1450" stroke-width="1.2" opacity="0.85"/>
<path d="M76.6 17.0 l7.0 -3.2" stroke="#142070" stroke-width="1" opacity="0.85"/>
<path d="M233.8 9.3 l3.3 -1.6" stroke="#3a5cc0" stroke-width="1.5" opacity="0.85"/>
<path d="M124.8 -2.0 l5.7 -3.1" stroke="#081040" stroke-width="1.5" opacity="0.85"/>
<path d="M224.8 8.2 l3.2 -1.4" stroke="#a09060" stroke-width="1.5" opacity="0.85"/>
<path d="M49.1 1.6 l5.0 -0.2" stroke="#a09060" stroke-width="1.2" opacity="0.85"/>
<path d="M95.1 4.1 l4.0 -2.0" stroke="#3a5cc0" stroke-width="1.2" opacity="0.85"/>
<path d="M84.3 11.6 l4.2 -1.6" stroke="#6a90c0" stroke-width="1.5" opacity="0.85"/>
<path d="M8.9 3.9 l4.7 -0.1" stroke="#1a3090" stroke-width="1" opacity="0.85"/>
<path d="M321.1 21.5 l3.8 -4.9" stroke="#5a78c8" stroke-width="1" opacity="0.85"/>
<path d="M-0.0 22.5 l7.5 -2.1" stroke="#6a90c0" stroke-width="1" opacity="0.85"/>
<path d="M222.4 3.2 l3.5 -1.7" stroke="#142070" stroke-width="1" opacity="0.85"/>
<path d="M134.9 13.9 l5.7 -2.9" stroke="#2c4cb0" stroke-width="1" opacity="0.85"/>
<path d="M214.1 2.9 l6.0 -4.8" stroke="#1a3090" stroke-width="1.5" opacity="0.85"/>
<path d="M265.3 19.2 l1.9 -4.7" stroke="#2c4cb0" stroke-width="1" opacity="0.85"/>
<path d="M65.9 17.9 l4.4 -2.0" stroke="#2c4cb0" stroke-width="1.2" opacity="0.85"/>
<path d="M190.3 1.9 l6.9 -5.2" stroke="#081040" stroke-width="1" opacity="0.85"/>
<path d="M24.1 3.6 l7.0 -1.0" stroke="#3a5cc0" stroke-width="1.2" opacity="0.85"/>
<path d="M249.2 2.5 l4.9 -5.2" stroke="#2c4cb0" stroke-width="1" opacity="0.85"/>
<path d="M256.2 10.0 l4.1 -6.5" stroke="#2c4cb0" stroke-width="1.5" opacity="0.85"/>
<path d="M205.0 2.4 l7.0 -4.0" stroke="#081040" stroke-width="1" opacity="0.85"/>
<path d="M209.8 23.2 l6.7 -4.0" stroke="#0a1450" stroke-width="1.5" opacity="0.85"/>
<path d="M249.8 10.4 l3.2 -6.4" stroke="#142070" stroke-width="1" opacity="0.85"/>
<path d="M240.8 19.5 l4.2 -5.0" stroke="#081040" stroke-width="1.2" opacity="0.85"/>
<path d="M267.3 18.2 l3.2 -3.6" stroke="#6a90c0" stroke-width="1.5" opacity="0.85"/>
<path d="M211.2 14.1 l5.6 -5.3" stroke="#142070" stroke-width="1" opacity="0.85"/>
<path d="M74.2 12.9 l8.0 -1.9" stroke="#6a90c0" stroke-width="1.5" opacity="0.85"/>
<path d="M288.5 -1.6 l3.2 -4.3" stroke="#a09060" stroke-width="1.5" opacity="0.85"/>
<path d="M250.4 6.3 l4.3 -7.6" stroke="#5a78c8" stroke-width="1.5" opacity="0.85"/>
<path d="M216.7 18.4 l7.4 -4.0" stroke="#081040" stroke-width="1.2" opacity="0.85"/>
<path d="M-3.5 10.2 l3.2 -1.8" stroke="#0a1450" stroke-width="1.2" opacity="0.85"/>
<path d="M130.6 5.1 l5.7 -2.7" stroke="#2c4cb0" stroke-width="1.2" opacity="0.85"/>
<path d="M125.0 9.6 l4.4 -2.4" stroke="#142070" stroke-width="1" opacity="0.85"/>
<path d="M226.4 8.9 l6.9 -3.7" stroke="#2c4cb0" stroke-width="1" opacity="0.85"/>
<path d="M220.4 -1.9 l3.7 -1.7" stroke="#142070" stroke-width="1.2" opacity="0.85"/>
<path d="M311.0 6.8 l3.6 -7.5" stroke="#6a90c0" stroke-width="1.2" opacity="0.85"/>
<path d="M96.8 5.6 l7.7 -0.5" stroke="#6a90c0" stroke-width="1" opacity="0.85"/>
<path d="M277.7 23.1 l1.5 -2.7" stroke="#3a5cc0" stroke-width="1" opacity="0.85"/>
<path d="M306.9 9.3 l2.9 -3.4" stroke="#8aa0d8" stroke-width="1.5" opacity="0.85"/>
<path d="M28.3 11.9 l6.1 -0.4" stroke="#081040" stroke-width="1" opacity="0.85"/>
<path d="M301.4 21.1 l2.1 -2.8" stroke="#6a90c0" stroke-width="1.2" opacity="0.85"/>
<path d="M141.6 22.9 l6.6 -2.3" stroke="#a09060" stroke-width="1.5" opacity="0.85"/>
<path d="M119.0 11.1 l8.3 -1.4" stroke="#0a1450" stroke-width="1.2" opacity="0.85"/>
<path d="M115.0 23.4 l7.1 -3.8" stroke="#a09060" stroke-width="1" opacity="0.85"/>
<path d="M178.9 9.1 l7.5 -3.7" stroke="#6a90c0" stroke-width="1.5" opacity="0.85"/>
<path d="M146.4 22.6 l2.9 -0.8" stroke="#142070" stroke-width="1" opacity="0.85"/>
<path d="M56.9 21.8 l8.7 -2.3" stroke="#3a5cc0" stroke-width="1.5" opacity="0.85"/>
<path d="M189.6 23.5 l3.9 -2.2" stroke="#1a3090" stroke-width="1" opacity="0.85"/>
<path d="M133.8 23.4 l7.7 -1.4" stroke="#a09060" stroke-width="1.5" opacity="0.85"/>
<path d="M120.6 23.0 l7.1 -1.1" stroke="#142070" stroke-width="1.2" opacity="0.85"/>
<path d="M48.4 12.5 l7.7 -0.7" stroke="#8aa0d8" stroke-width="1" opacity="0.85"/>
<path d="M61.3 18.8 l4.3 -2.3" stroke="#1a3090" stroke-width="1" opacity="0.85"/>
<path d="M219.9 21.5 l7.6 -4.5" stroke="#8aa0d8" stroke-width="1.5" opacity="0.85"/>
<path d="M56.8 5.4 l4.2 -0.1" stroke="#8aa0d8" stroke-width="1.2" opacity="0.85"/>
<path d="M128.0 15.4 l4.6 -1.6" stroke="#0a1450" stroke-width="1.2" opacity="0.85"/>
<path d="M32.1 22.0 l5.9 -1.2" stroke="#081040" stroke-width="1.5" opacity="0.85"/>
<path d="M47.7 21.1 l4.1 -2.2" stroke="#1a3090" stroke-width="1.2" opacity="0.85"/>
<path d="M213.2 19.9 l2.8 -2.0" stroke="#081040" stroke-width="1.2" opacity="0.85"/>
<path d="M231.7 7.7 l7.4 -3.4" stroke="#2c4cb0" stroke-width="1.2" opacity="0.85"/>
<path d="M143.4 -2.7 l7.0 -1.7" stroke="#142070" stroke-width="1.2" opacity="0.85"/>
<path d="M193.7 6.7 l7.8 -2.9" stroke="#1a3090" stroke-width="1" opacity="0.85"/>
<path d="M243.7 15.3 l4.0 -6.8" stroke="#2c4cb0" stroke-width="1.2" opacity="0.85"/>
<path d="M49.8 1.8 l7.4 -1.1" stroke="#2c4cb0" stroke-width="1.2" opacity="0.85"/>
<path d="M125.2 22.4 l5.0 -0.7" stroke="#081040" stroke-width="1.2" opacity="0.85"/>
<path d="M260.9 6.4 l3.4 -7.5" stroke="#1a3090" stroke-width="1.5" opacity="0.85"/>
<path d="M167.0 15.1 l3.5 -1.5" stroke="#8aa0d8" stroke-width="1.5" opacity="0.85"/>
<path d="M16.8 8.2 l7.8 -2.1" stroke="#a09060" stroke-width="1" opacity="0.85"/>
<path d="M185.7 7.9 l4.0 -2.4" stroke="#a09060" stroke-width="1" opacity="0.85"/>
<path d="M44.9 15.1 l6.0 -0.8" stroke="#142070" stroke-width="1" opacity="0.85"/>
<path d="M240.2 19.2 l4.9 -6.7" stroke="#3a5cc0" stroke-width="1.5" opacity="0.85"/>
<path d="M227.4 16.0 l4.0 -2.3" stroke="#2c4cb0" stroke-width="1.5" opacity="0.85"/>
<path d="M194.6 10.7 l7.3 -4.2" stroke="#142070" stroke-width="1" opacity="0.85"/>
<path d="M113.7 12.4 l3.5 -0.2" stroke="#2040a0" stroke-width="1.5" opacity="0.85"/>
<path d="M165.7 0.3 l4.0 -1.6" stroke="#0a1450" stroke-width="1.5" opacity="0.85"/>
<path d="M247.1 9.1 l4.8 -7.5" stroke="#6a90c0" stroke-width="1.5" opacity="0.85"/>
<path d="M191.6 -2.1 l4.9 -3.0" stroke="#0a1450" stroke-width="1" opacity="0.85"/>
<path d="M92.1 22.3 l6.2 -0.1" stroke="#5a78c8" stroke-width="1" opacity="0.85"/>
<path d="M178.7 19.2 l7.0 -5.4" stroke="#6a90c0" stroke-width="1.5" opacity="0.85"/>
<path d="M230.3 3.0 l6.0 -5.1" stroke="#142070" stroke-width="1.2" opacity="0.85"/>
<path d="M118.6 22.8 l3.3 -1.3" stroke="#2c4cb0" stroke-width="1.2" opacity="0.85"/>
<path d="M123.8 22.8 l6.7 -2.1" stroke="#2040a0" stroke-width="1.2" opacity="0.85"/>
<path d="M312.2 5.9 l2.4 -2.4" stroke="#0a1450" stroke-width="1.5" opacity="0.85"/>
<path d="M39.1 9.3 l7.2 -1.2" stroke="#0a1450" stroke-width="1" opacity="0.85"/>
<path d="M107.8 2.1 l4.5 -1.4" stroke="#5a78c8" stroke-width="1" opacity="0.85"/>
<path d="M237.9 10.9 l3.5 -2.3" stroke="#5a78c8" stroke-width="1.2" opacity="0.85"/>
<path d="M61.4 17.4 l4.8 -0.4" stroke="#2040a0" stroke-width="1.5" opacity="0.85"/>
<path d="M233.4 16.4 l3.1 -2.9" stroke="#2040a0" stroke-width="1.5" opacity="0.85"/>
<path d="M233.3 14.0 l4.0 -3.2" stroke="#3a5cc0" stroke-width="1.5" opacity="0.85"/>
<path d="M203.6 23.8 l2.6 -2.0" stroke="#3a5cc0" stroke-width="1.5" opacity="0.85"/>
<path d="M112.2 21.3 l5.7 -0.6" stroke="#2c4cb0" stroke-width="1.2" opacity="0.85"/>
<path d="M30.2 1.2 l5.8 -0.7" stroke="#2c4cb0" stroke-width="1.2" opacity="0.85"/>
<path d="M257.3 9.9 l2.5 -2.9" stroke="#2c4cb0" stroke-width="1.5" opacity="0.85"/>
<path d="M180.9 10.7 l3.5 -2.9" stroke="#2040a0" stroke-width="1" opacity="0.85"/>
<path d="M229.4 22.5 l5.3 -2.0" stroke="#081040" stroke-width="1" opacity="0.85"/>
<path d="M262.9 19.7 l1.2 -2.8" stroke="#5a78c8" stroke-width="1.5" opacity="0.85"/>
<path d="M188.2 7.2 l5.7 -5.6" stroke="#2c4cb0" stroke-width="1.2" opacity="0.85"/>
<path d="M252.5 2.5 l4.8 -7.0" stroke="#8aa0d8" stroke-width="1.2" opacity="0.85"/>
<path d="M201.1 20.9 l5.7 -3.7" stroke="#5a78c8" stroke-width="1" opacity="0.85"/>
<path d="M75.3 21.5 l3.4 -1.2" stroke="#6a90c0" stroke-width="1" opacity="0.85"/>
<path d="M306.8 8.9 l4.8 -7.0" stroke="#a09060" stroke-width="1.5" opacity="0.85"/>
<path d="M296.6 17.6 l4.1 -6.0" stroke="#0a1450" stroke-width="1" opacity="0.85"/>
<path d="M127.1 15.2 l4.4 -0.7" stroke="#a09060" stroke-width="1.2" opacity="0.85"/>
<path d="M223.4 9.7 l6.3 -5.6" stroke="#6a90c0" stroke-width="1.2" opacity="0.85"/>
<path d="M15.7 3.4 l4.4 -0.0" stroke="#081040" stroke-width="1.5" opacity="0.85"/>
<path d="M255.1 19.2 l4.4 -6.0" stroke="#2040a0" stroke-width="1" opacity="0.85"/>
<path d="M26.0 23.4 l3.2 -0.3" stroke="#2040a0" stroke-width="1.2" opacity="0.85"/>
<path d="M74.3 22.1 l6.5 -2.8" stroke="#1a3090" stroke-width="1.5" opacity="0.85"/>
<path d="M185.8 8.2 l4.2 -4.0" stroke="#0a1450" stroke-width="1" opacity="0.85"/>
<path d="M245.6 20.8 l1.5 -3.6" stroke="#1a3090" stroke-width="1" opacity="0.85"/>
<path d="M198.2 5.7 l7.4 -4.7" stroke="#081040" stroke-width="1" opacity="0.85"/>
<path d="M18.8 -2.2 l3.5 -0.6" stroke="#1a3090" stroke-width="1.5" opacity="0.85"/>
<path d="M197.2 18.4 l6.2 -3.8" stroke="#a09060" stroke-width="1.5" opacity="0.85"/>
<path d="M198.0 9.3 l5.6 -3.0" stroke="#5a78c8" stroke-width="1" opacity="0.85"/>
<path d="M56.8 10.7 l4.2 -0.4" stroke="#a09060" stroke-width="1.5" opacity="0.85"/>
<path d="M63.4 8.6 l7.9 -4.0" stroke="#1a3090" stroke-width="1.5" opacity="0.85"/>
<path d="M111.3 -0.5 l8.0 -1.1" stroke="#2c4cb0" stroke-width="1" opacity="0.85"/>
<path d="M116.3 5.2 l3.9 -0.5" stroke="#6a90c0" stroke-width="1.5" opacity="0.85"/>
<path d="M317.9 17.8 l1.2 -3.2" stroke="#2c4cb0" stroke-width="1.5" opacity="0.85"/>
<path d="M223.5 13.2 l4.9 -3.0" stroke="#081040" stroke-width="1.5" opacity="0.85"/>
<path d="M184.6 2.7 l6.7 -3.3" stroke="#2c4cb0" stroke-width="1" opacity="0.85"/>
<path d="M271.3 16.4 l2.5 -6.6" stroke="#081040" stroke-width="1" opacity="0.85"/>
<path d="M54.3 22.5 l6.9 -2.1" stroke="#142070" stroke-width="1.2" opacity="0.85"/>
<path d="M274.3 -2.2 l2.0 -3.5" stroke="#3a5cc0" stroke-width="1.5" opacity="0.85"/>
<path d="M211.4 9.8 l6.5 -3.7" stroke="#8aa0d8" stroke-width="1.2" opacity="0.85"/>
<path d="M260.2 -2.6 l2.8 -4.2" stroke="#1a3090" stroke-width="1.2" opacity="0.85"/>
<path d="M298.9 5.9 l4.8 -5.9" stroke="#8aa0d8" stroke-width="1" opacity="0.85"/>
<path d="M170.6 -0.2 l4.4 -2.0" stroke="#a09060" stroke-width="1.2" opacity="0.85"/>
<path d="M116.2 11.5 l4.0 -0.1" stroke="#1a3090" stroke-width="1" opacity="0.85"/>
<path d="M209.5 11.5 l5.1 -2.0" stroke="#1a3090" stroke-width="1.5" opacity="0.85"/>
<path d="M251.2 14.1 l2.5 -3.5" stroke="#2040a0" stroke-width="1.5" opacity="0.85"/>
<path d="M80.9 16.3 l4.1 -0.0" stroke="#0a1450" stroke-width="1.5" opacity="0.85"/>
<path d="M221.7 15.6 l6.7 -3.3" stroke="#5a78c8" stroke-width="1.2" opacity="0.85"/>
<path d="M79.9 -2.3 l4.2 -0.7" stroke="#142070" stroke-width="1.5" opacity="0.85"/>
<path d="M313.2 14.4 l4.0 -5.7" stroke="#6a90c0" stroke-width="1" opacity="0.85"/>
<path d="M224.3 5.2 l2.5 -2.3" stroke="#2040a0" stroke-width="1" opacity="0.85"/>
<path d="M114.3 0.8 l5.3 -2.7" stroke="#1a3090" stroke-width="1.5" opacity="0.85"/>
<path d="M284.7 21.9 l4.4 -7.2" stroke="#142070" stroke-width="1.2" opacity="0.85"/>
<path d="M125.3 15.8 l8.1 -3.7" stroke="#2c4cb0" stroke-width="1.2" opacity="0.85"/>
<path d="M108.0 19.5 l7.0 -3.9" stroke="#5a78c8" stroke-width="1" opacity="0.85"/>
<path d="M277.2 18.7 l2.8 -3.7" stroke="#2040a0" stroke-width="1" opacity="0.85"/>
<path d="M19.0 -0.6 l6.9 -0.8" stroke="#142070" stroke-width="1.5" opacity="0.85"/>
<path d="M81.8 -1.8 l7.7 -2.2" stroke="#2040a0" stroke-width="1.2" opacity="0.85"/>
<path d="M78.8 -0.6 l3.3 -0.7" stroke="#142070" stroke-width="1" opacity="0.85"/>
<path d="M83.5 22.1 l5.1 -0.2" stroke="#1a3090" stroke-width="1.5" opacity="0.85"/>
<path d="M53.2 7.0 l5.2 -0.7" stroke="#3a5cc0" stroke-width="1.5" opacity="0.85"/>
<path d="M213.9 20.6 l3.7 -1.5" stroke="#081040" stroke-width="1" opacity="0.85"/>
<path d="M68.9 2.2 l4.9 -2.1" stroke="#8aa0d8" stroke-width="1" opacity="0.85"/>
<path d="M206.7 9.7 l3.0 -1.3" stroke="#a09060" stroke-width="1.2" opacity="0.85"/>
<path d="M271.0 3.3 l2.0 -5.3" stroke="#2c4cb0" stroke-width="1" opacity="0.85"/>
<path d="M146.8 16.2 l3.3 -1.7" stroke="#0a1450" stroke-width="1" opacity="0.85"/>
<path d="M295.2 8.5 l1.5 -3.9" stroke="#142070" stroke-width="1.2" opacity="0.85"/>
<path d="M141.5 3.5 l3.1 -1.1" stroke="#1a3090" stroke-width="1" opacity="0.85"/>
<path d="M154.7 2.8 l7.8 -4.5" stroke="#081040" stroke-width="1" opacity="0.85"/>
<path d="M14.8 8.7 l5.4 -2.9" stroke="#1a3090" stroke-width="1.2" opacity="0.85"/>
<path d="M65.1 -0.8 l7.9 -3.2" stroke="#0a1450" stroke-width="1.5" opacity="0.85"/>
<path d="M38.5 18.8 l3.5 -0.7" stroke="#142070" stroke-width="1.5" opacity="0.85"/>
<path d="M255.4 -1.2 l3.6 -4.6" stroke="#142070" stroke-width="1" opacity="0.85"/>
<path d="M163.1 13.9 l7.6 -3.5" stroke="#a09060" stroke-width="1.2" opacity="0.85"/>
<path d="M221.7 -2.1 l6.7 -3.7" stroke="#a09060" stroke-width="1.5" opacity="0.85"/>
<path d="M41.0 6.8 l7.9 -2.6" stroke="#8aa0d8" stroke-width="1.5" opacity="0.85"/>
<path d="M8.8 20.2 l6.8 -1.2" stroke="#5a78c8" stroke-width="1" opacity="0.85"/>
<path d="M192.3 21.3 l3.1 -2.9" stroke="#2040a0" stroke-width="1.2" opacity="0.85"/>
<path d="M139.9 0.8 l6.8 -3.1" stroke="#6a90c0" stroke-width="1" opacity="0.85"/>
<path d="M305.0 7.9 l1.9 -2.5" stroke="#0a1450" stroke-width="1" opacity="0.85"/>
<path d="M16.7 7.1 l7.4 -0.6" stroke="#a09060" stroke-width="1" opacity="0.85"/>
<path d="M200.0 2.8 l3.8 -1.7" stroke="#0a1450" stroke-width="1.2" opacity="0.85"/>
<path d="M69.7 23.0 l5.1 -1.9" stroke="#8aa0d8" stroke-width="1.2" opacity="0.85"/>
<path d="M215.7 -2.4 l3.2 -2.3" stroke="#2040a0" stroke-width="1" opacity="0.85"/>
<path d="M195.5 4.0 l5.3 -3.5" stroke="#081040" stroke-width="1" opacity="0.85"/>
<path d="M81.2 12.2 l5.1 -2.0" stroke="#3a5cc0" stroke-width="1.5" opacity="0.85"/>
<path d="M39.6 5.7 l4.0 -0.5" stroke="#081040" stroke-width="1" opacity="0.85"/>
<path d="M21.5 19.1 l4.5 -0.5" stroke="#6a90c0" stroke-width="1.5" opacity="0.85"/>
<path d="M68.6 1.1 l8.7 -1.2" stroke="#081040" stroke-width="1" opacity="0.85"/>
<path d="M12.0 21.7 l2.8 -1.4" stroke="#142070" stroke-width="1" opacity="0.85"/>
<path d="M90.4 23.1 l5.5 -0.4" stroke="#1a3090" stroke-width="1.2" opacity="0.85"/>
<path d="M275.1 18.8 l3.6 -4.9" stroke="#2c4cb0" stroke-width="1.2" opacity="0.85"/>
<path d="M75.4 14.8 l7.6 -1.7" stroke="#1a3090" stroke-width="1.5" opacity="0.85"/>
<path d="M58.6 -0.9 l6.4 -0.3" stroke="#3a5cc0" stroke-width="1.5" opacity="0.85"/>
<path d="M310.7 14.4 l4.4 -7.5" stroke="#142070" stroke-width="1.5" opacity="0.85"/>
<path d="M266.3 15.9 l2.6 -6.6" stroke="#5a78c8" stroke-width="1.5" opacity="0.85"/>
<path d="M103.3 21.8 l4.8 -1.4" stroke="#a09060" stroke-width="1" opacity="0.85"/>
<path d="M148.6 5.8 l8.9 -0.1" stroke="#2c4cb0" stroke-width="1" opacity="0.85"/>
<path d="M174.0 7.8 l5.6 -5.0" stroke="#8aa0d8" stroke-width="1.5" opacity="0.85"/>
<path d="M228.7 7.3 l4.4 -2.8" stroke="#5a78c8" stroke-width="1.5" opacity="0.85"/>
<path d="M65.9 4.2 l3.3 -1.8" stroke="#081040" stroke-width="1.5" opacity="0.85"/>
<path d="M133.9 -0.9 l8.4 -1.9" stroke="#6a90c0" stroke-width="1.5" opacity="0.85"/>
<path d="M112.4 16.0 l3.9 -1.2" stroke="#0a1450" stroke-width="1.5" opacity="0.85"/>
<path d="M0.8 15.3 l4.7 -2.2" stroke="#a09060" stroke-width="1.2" opacity="0.85"/>
<path d="M270.7 14.3 l4.2 -5.9" stroke="#5a78c8" stroke-width="1.2" opacity="0.85"/>
<path d="M247.8 5.1 l3.5 -7.1" stroke="#6a90c0" stroke-width="1.2" opacity="0.85"/>
<path d="M275.4 20.6 l2.4 -3.4" stroke="#2040a0" stroke-width="1.5" opacity="0.85"/>
<path d="M171.5 16.6 l2.7 -2.1" stroke="#2040a0" stroke-width="1" opacity="0.85"/>
<path d="M23.3 3.7 l3.7 -1.7" stroke="#5a78c8" stroke-width="1" opacity="0.85"/>
<path d="M2.9 -0.8 l3.7 -1.9" stroke="#0a1450" stroke-width="1.2" opacity="0.85"/>
<path d="M19.2 6.4 l7.0 -2.7" stroke="#142070" stroke-width="1.2" opacity="0.85"/>
<path d="M13.1 -0.7 l3.2 -1.5" stroke="#6a90c0" stroke-width="1" opacity="0.85"/>
<path d="M224.9 4.1 l6.7 -3.1" stroke="#8aa0d8" stroke-width="1.5" opacity="0.85"/>
<path d="M157.3 2.1 l5.9 -2.4" stroke="#2040a0" stroke-width="1" opacity="0.85"/>
<path d="M271.8 8.4 l1.4 -2.8" stroke="#142070" stroke-width="1" opacity="0.85"/>
<path d="M259.7 -0.5 l2.4 -3.4" stroke="#0a1450" stroke-width="1.2" opacity="0.85"/>
<path d="M256.1 3.2 l2.7 -6.5" stroke="#6a90c0" stroke-width="1.2" opacity="0.85"/>
<path d="M40.6 2.2 l3.6 -0.8" stroke="#a09060" stroke-width="1.2" opacity="0.85"/>
<path d="M74.5 4.0 l5.9 -1.8" stroke="#2040a0" stroke-width="1" opacity="0.85"/>
<path d="M70.5 -2.4 l4.1 -1.1" stroke="#0a1450" stroke-width="1.5" opacity="0.85"/>
<path d="M58.5 2.0 l9.0 -0.1" stroke="#142070" stroke-width="1" opacity="0.85"/>
<path d="M46.9 3.1 l7.9 -1.0" stroke="#a09060" stroke-width="1.5" opacity="0.85"/>
<path d="M257.1 5.4 l3.4 -6.5" stroke="#2040a0" stroke-width="1.5" opacity="0.85"/>
<path d="M99.1 4.9 l4.1 -1.5" stroke="#3a5cc0" stroke-width="1.5" opacity="0.85"/>
<path d="M284.5 9.5 l1.6 -3.4" stroke="#1a3090" stroke-width="1.5" opacity="0.85"/>
<path d="M167.0 6.8 l5.5 -2.8" stroke="#2c4cb0" stroke-width="1" opacity="0.85"/>
<path d="M212.5 13.8 l2.8 -1.9" stroke="#a09060" stroke-width="1.5" opacity="0.85"/>
<path d="M68.2 5.6 l7.0 -2.0" stroke="#8aa0d8" stroke-width="1.5" opacity="0.85"/>
<path d="M142.5 22.0 l6.7 -0.2" stroke="#2c4cb0" stroke-width="1.2" opacity="0.85"/>
<path d="M24.0 21.9 l7.3 -3.6" stroke="#1a3090" stroke-width="1" opacity="0.85"/>
<path d="M15.9 15.5 l6.1 -3.4" stroke="#a09060" stroke-width="1.2" opacity="0.85"/>
<path d="M139.3 -0.7 l3.4 -1.1" stroke="#2040a0" stroke-width="1" opacity="0.85"/>
<path d="M90.0 17.7 l3.3 -1.6" stroke="#2c4cb0" stroke-width="1.2" opacity="0.85"/>
<path d="M49.1 11.4 l4.0 -0.4" stroke="#3a5cc0" stroke-width="1.2" opacity="0.85"/>
<path d="M247.4 8.5 l1.8 -3.3" stroke="#5a78c8" stroke-width="1.2" opacity="0.85"/>
<path d="M315.7 0.2 l3.3 -6.7" stroke="#081040" stroke-width="1.2" opacity="0.85"/>
<path d="M69.7 2.0 l7.5 -0.7" stroke="#081040" stroke-width="1.5" opacity="0.85"/>
<path d="M61.6 18.3 l8.4 -1.1" stroke="#0a1450" stroke-width="1" opacity="0.85"/>
<path d="M281.2 10.9 l2.0 -2.4" stroke="#1a3090" stroke-width="1.2" opacity="0.85"/>
<path d="M263.7 15.8 l4.7 -4.8" stroke="#8aa0d8" stroke-width="1" opacity="0.85"/>
<path d="M235.7 19.9 l6.1 -3.3" stroke="#2040a0" stroke-width="1" opacity="0.85"/>
<path d="M279.8 12.5 l2.6 -7.1" stroke="#6a90c0" stroke-width="1" opacity="0.85"/>
<path d="M291.8 22.7 l3.8 -7.1" stroke="#142070" stroke-width="1.2" opacity="0.85"/>
<path d="M94.5 13.7 l4.5 -1.5" stroke="#5a78c8" stroke-width="1" opacity="0.85"/>
<path d="M295.1 8.1 l4.9 -6.7" stroke="#5a78c8" stroke-width="1.5" opacity="0.85"/>
<path d="M260.4 23.7 l4.7 -5.9" stroke="#142070" stroke-width="1.2" opacity="0.85"/>
<path d="M161.5 5.8 l4.0 -2.7" stroke="#5a78c8" stroke-width="1.5" opacity="0.85"/>
<path d="M230.4 15.1 l6.1 -5.8" stroke="#3a5cc0" stroke-width="1.2" opacity="0.85"/>
<path d="M285.0 0.8 l5.1 -5.4" stroke="#a09060" stroke-width="1.5" opacity="0.85"/>
<path d="M210.3 -1.7 l5.8 -2.5" stroke="#0a1450" stroke-width="1.2" opacity="0.85"/>
<path d="M150.2 9.5 l7.2 -3.6" stroke="#8aa0d8" stroke-width="1.2" opacity="0.85"/>
<path d="M77.3 -0.3 l3.0 -1.1" stroke="#2040a0" stroke-width="1" opacity="0.85"/>
<path d="M117.1 13.6 l3.2 -0.9" stroke="#0a1450" stroke-width="1.5" opacity="0.85"/>
<path d="M127.6 18.7 l4.9 -0.1" stroke="#a09060" stroke-width="1.5" opacity="0.85"/>
<path d="M150.3 21.3 l4.4 -2.2" stroke="#8aa0d8" stroke-width="1.5" opacity="0.85"/>
<path d="M296.8 13.2 l5.9 -5.9" stroke="#2c4cb0" stroke-width="1.2" opacity="0.85"/>
<path d="M142.2 -2.7 l4.4 -0.1" stroke="#5a78c8" stroke-width="1.2" opacity="0.85"/>
<path d="M174.1 22.0 l7.2 -3.9" stroke="#a09060" stroke-width="1.5" opacity="0.85"/>
<path d="M6.5 13.0 l7.0 -2.1" stroke="#081040" stroke-width="1" opacity="0.85"/>
<path d="M55.7 4.9 l7.2 -1.9" stroke="#2c4cb0" stroke-width="1" opacity="0.85"/>
<path d="M257.0 13.3 l1.9 -4.8" stroke="#081040" stroke-width="1" opacity="0.85"/>
<path d="M120.6 16.2 l4.2 -0.2" stroke="#142070" stroke-width="1.2" opacity="0.85"/>
<path d="M165.1 23.3 l6.3 -4.1" stroke="#2040a0" stroke-width="1.5" opacity="0.85"/>
<path d="M282.5 13.3 l3.9 -7.0" stroke="#3a5cc0" stroke-width="1" opacity="0.85"/>
<path d="M0.8 14.5 l3.7 -0.2" stroke="#6a90c0" stroke-width="1.2" opacity="0.85"/>
<path d="M12.6 -1.5 l8.1 -2.2" stroke="#5a78c8" stroke-width="1.5" opacity="0.85"/>
<path d="M147.6 1.2 l3.6 -1.6" stroke="#0a1450" stroke-width="1" opacity="0.85"/>
<path d="M134.9 13.3 l4.3 -1.8" stroke="#081040" stroke-width="1" opacity="0.85"/>
<path d="M164.4 9.6 l2.2 -2.1" stroke="#8aa0d8" stroke-width="1.5" opacity="0.85"/>
<path d="M49.6 18.1 l4.3 -1.1" stroke="#3a5cc0" stroke-width="1" opacity="0.85"/>
<path d="M194.0 21.4 l5.0 -4.2" stroke="#2c4cb0" stroke-width="1.5" opacity="0.85"/>
<path d="M147.6 13.0 l7.3 -3.2" stroke="#081040" stroke-width="1.5" opacity="0.85"/>
<path d="M12.3 22.5 l3.4 -1.0" stroke="#2c4cb0" stroke-width="1.5" opacity="0.85"/>
<path d="M218.6 0.8 l5.7 -3.8" stroke="#1a3090" stroke-width="1.2" opacity="0.85"/>
<path d="M129.7 16.5 l4.4 -0.0" stroke="#081040" stroke-width="1.2" opacity="0.85"/>
<path d="M199.0 5.2 l3.3 -2.8" stroke="#2c4cb0" stroke-width="1" opacity="0.85"/>
<path d="M58.7 5.5 l4.0 -1.1" stroke="#0a1450" stroke-width="1.2" opacity="0.85"/>
<path d="M248.7 13.0 l2.5 -4.0" stroke="#1a3090" stroke-width="1" opacity="0.85"/>
<path d="M150.7 10.7 l3.7 -2.4" stroke="#8aa0d8" stroke-width="1.5" opacity="0.85"/>
<path d="M121.5 -1.1 l6.6 -3.4" stroke="#8aa0d8" stroke-width="1.2" opacity="0.85"/>
<path d="M227.6 19.7 l5.1 -2.8" stroke="#6a90c0" stroke-width="1.5" opacity="0.85"/>
<path d="M-2.9 19.9 l5.1 -0.7" stroke="#a09060" stroke-width="1.5" opacity="0.85"/>
<path d="M298.7 7.8 l2.5 -4.1" stroke="#1a3090" stroke-width="1.5" opacity="0.85"/>
<path d="M213.7 16.8 l3.6 -1.4" stroke="#8aa0d8" stroke-width="1.5" opacity="0.85"/>
<path d="M276.0 18.4 l4.0 -5.8" stroke="#8aa0d8" stroke-width="1" opacity="0.85"/>
<path d="M176.3 7.9 l2.8 -2.4" stroke="#2040a0" stroke-width="1.5" opacity="0.85"/>
<path d="M101.7 9.9 l5.0 -1.4" stroke="#2040a0" stroke-width="1.2" opacity="0.85"/>
<path d="M176.2 18.4 l6.9 -5.2" stroke="#2c4cb0" stroke-width="1.2" opacity="0.85"/>
<path d="M79.0 13.5 l7.9 -1.8" stroke="#2040a0" stroke-width="1.2" opacity="0.85"/>
<path d="M259.0 -1.2 l4.4 -5.2" stroke="#2040a0" stroke-width="1.2" opacity="0.85"/>
<path d="M289.1 4.8 l4.6 -7.3" stroke="#081040" stroke-width="1" opacity="0.85"/>
<path d="M20.0 2.7 l3.8 -0.5" stroke="#142070" stroke-width="1" opacity="0.85"/>
<path d="M67.4 8.8 l7.9 -3.9" stroke="#2c4cb0" stroke-width="1" opacity="0.85"/>
<path d="M176.8 21.9 l6.3 -5.8" stroke="#081040" stroke-width="1" opacity="0.85"/>
<path d="M8.2 10.4 l5.5 -0.8" stroke="#a09060" stroke-width="1.5" opacity="0.85"/>
<path d="M243.7 13.1 l2.3 -2.3" stroke="#2040a0" stroke-width="1" opacity="0.85"/>
<path d="M36.0 -2.4 l6.7 -1.0" stroke="#2c4cb0" stroke-width="1.2" opacity="0.85"/>
<path d="M48.5 1.9 l6.9 -1.4" stroke="#5a78c8" stroke-width="1.2" opacity="0.85"/>
<path d="M34.9 20.1 l5.1 -1.9" stroke="#0a1450" stroke-width="1" opacity="0.85"/>
<path d="M154.4 -2.3 l7.4 -4.0" stroke="#3a5cc0" stroke-width="1" opacity="0.85"/>
<path d="M289.6 18.4 l4.0 -5.6" stroke="#0a1450" stroke-width="1.5" opacity="0.85"/>
<path d="M200.3 21.4 l5.7 -2.7" stroke="#6a90c0" stroke-width="1" opacity="0.85"/>
<path d="M144.0 20.8 l4.9 -1.0" stroke="#081040" stroke-width="1.5" opacity="0.85"/>
<path d="M318.8 108.4 l6.3 0.7" stroke="#3a6ab8" stroke-width="1.3" opacity="0.9"/>
<path d="M293.8 100.4 l6.8 -1.1" stroke="#90c0d0" stroke-width="1.3" opacity="0.9"/>
<path d="M310.9 104.9 l3.0 -0.1" stroke="#70a8c8" stroke-width="1.3" opacity="0.9"/>
<path d="M289.2 99.5 l7.4 -0.1" stroke="#1a3080" stroke-width="1.3" opacity="0.9"/>
<path d="M284.7 90.5 l8.9 -0.1" stroke="#3a6ab8" stroke-width="1.3" opacity="0.9"/>
<path d="M283.7 85.7 l8.4 -1.0" stroke="#4a80b0" stroke-width="1.3" opacity="0.9"/>
<path d="M310.1 106.6 l7.1 1.0" stroke="#70a8c8" stroke-width="1.3" opacity="0.9"/>
<path d="M302.0 94.3 l5.0 0.4" stroke="#90c0d0" stroke-width="1.3" opacity="0.9"/>
<path d="M314.0 91.0 l8.5 -1.0" stroke="#2a4aa0" stroke-width="1.3" opacity="0.9"/>
<path d="M293.6 106.9 l5.5 -1.1" stroke="#2a4aa0" stroke-width="1.3" opacity="0.9"/>
<path d="M298.1 110.6 l5.6 -0.0" stroke="#2a4aa0" stroke-width="1.3" opacity="0.9"/>
<path d="M270.9 104.5 l4.6 -0.8" stroke="#2a4aa0" stroke-width="1.3" opacity="0.9"/>
<path d="M299.9 88.5 l7.8 0.8" stroke="#2a4aa0" stroke-width="1.3" opacity="0.9"/>
<path d="M306.9 98.5 l5.9 -1.0" stroke="#4a80b0" stroke-width="1.3" opacity="0.9"/>
<path d="M282.8 71.1 l7.6 -0.9" stroke="#3a6ab8" stroke-width="1.3" opacity="0.9"/>
<path d="M317.5 112.3 l5.5 0.8" stroke="#90c0d0" stroke-width="1.3" opacity="0.9"/>
<path d="M304.8 98.4 l6.8 -0.8" stroke="#70a8c8" stroke-width="1.3" opacity="0.9"/>
<path d="M288.5 112.7 l3.7 -0.2" stroke="#4a80b0" stroke-width="1.3" opacity="0.9"/>
<path d="M312.8 106.1 l6.6 -0.7" stroke="#90c0d0" stroke-width="1.3" opacity="0.9"/>
<path d="M307.3 112.1 l8.1 -0.7" stroke="#3a6ab8" stroke-width="1.3" opacity="0.9"/>
<path d="M280.5 91.8 l3.1 -0.2" stroke="#2a4aa0" stroke-width="1.3" opacity="0.9"/>
<path d="M313.7 110.0 l5.7 -1.1" stroke="#1a3080" stroke-width="1.3" opacity="0.9"/>
<path d="M315.1 71.8 l8.0 -0.9" stroke="#90c0d0" stroke-width="1.3" opacity="0.9"/>
<path d="M276.4 74.4 l3.7 0.3" stroke="#3a6ab8" stroke-width="1.3" opacity="0.9"/>
<path d="M312.9 80.2 l8.3 -1.3" stroke="#3a6ab8" stroke-width="1.3" opacity="0.9"/>
<path d="M292.5 104.9 l8.4 -1.0" stroke="#3a6ab8" stroke-width="1.3" opacity="0.9"/>
<path d="M275.0 114.8 l8.9 -0.9" stroke="#2a4aa0" stroke-width="1.3" opacity="0.9"/>
<path d="M301.3 93.0 l5.6 0.5" stroke="#2a4aa0" stroke-width="1.3" opacity="0.9"/>
<path d="M289.3 90.1 l3.3 -0.3" stroke="#1a3080" stroke-width="1.3" opacity="0.9"/>
<path d="M279.0 89.8 l8.7 0.7" stroke="#70a8c8" stroke-width="1.3" opacity="0.9"/>
<path d="M275.0 100.1 l5.4 -0.1" stroke="#3a6ab8" stroke-width="1.3" opacity="0.9"/>
<path d="M317.2 110.2 l8.6 -0.4" stroke="#90c0d0" stroke-width="1.3" opacity="0.9"/>
<path d="M286.6 94.0 l6.5 0.4" stroke="#3a6ab8" stroke-width="1.3" opacity="0.9"/>
<path d="M285.2 72.5 l3.7 -0.3" stroke="#3a6ab8" stroke-width="1.3" opacity="0.9"/>
<path d="M293.9 81.3 l6.4 -0.6" stroke="#3a6ab8" stroke-width="1.3" opacity="0.9"/>
<path d="M283.6 69.3 l3.7 -0.5" stroke="#70a8c8" stroke-width="1.3" opacity="0.9"/>
<path d="M291.5 85.4 l8.6 0.5" stroke="#4a80b0" stroke-width="1.3" opacity="0.9"/>
<path d="M286.3 112.6 l6.3 0.1" stroke="#4a80b0" stroke-width="1.3" opacity="0.9"/>
<path d="M303.5 84.9 l4.8 0.0" stroke="#4a80b0" stroke-width="1.3" opacity="0.9"/>
<path d="M279.7 113.7 l3.0 -0.6" stroke="#90c0d0" stroke-width="1.3" opacity="0.9"/>
<path d="M270.0 92.2 l7.5 0.2" stroke="#3a6ab8" stroke-width="1.3" opacity="0.9"/>
<path d="M303.5 100.2 l8.9 1.0" stroke="#4a80b0" stroke-width="1.3" opacity="0.9"/>
<path d="M298.5 99.4 l8.8 -1.0" stroke="#2a4aa0" stroke-width="1.3" opacity="0.9"/>
<path d="M320.3 82.7 l3.1 -0.0" stroke="#1a3080" stroke-width="1.3" opacity="0.9"/>
<path d="M285.6 101.4 l4.1 -0.1" stroke="#90c0d0" stroke-width="1.3" opacity="0.9"/>
<path d="M277.4 76.4 l3.6 0.3" stroke="#2a4aa0" stroke-width="1.3" opacity="0.9"/>
<path d="M281.0 109.4 l4.9 -0.1" stroke="#1a3080" stroke-width="1.3" opacity="0.9"/>
<path d="M288.7 100.8 l7.8 -1.5" stroke="#1a3080" stroke-width="1.3" opacity="0.9"/>
<path d="M272.2 103.1 l3.9 -0.4" stroke="#70a8c8" stroke-width="1.3" opacity="0.9"/>
<path d="M314.8 69.0 l3.3 -0.7" stroke="#1a3080" stroke-width="1.3" opacity="0.9"/>
<path d="M300.9 98.7 l7.3 -1.1" stroke="#90c0d0" stroke-width="1.3" opacity="0.9"/>
<path d="M273.5 111.2 l6.2 -0.5" stroke="#3a6ab8" stroke-width="1.3" opacity="0.9"/>
<path d="M274.9 75.0 l7.8 -0.0" stroke="#3a6ab8" stroke-width="1.3" opacity="0.9"/>
<path d="M283.3 94.7 l5.9 -1.0" stroke="#1a3080" stroke-width="1.3" opacity="0.9"/>
<path d="M296.4 68.7 l5.4 -1.0" stroke="#3a6ab8" stroke-width="1.3" opacity="0.9"/>
<path d="M317.8 68.3 l5.1 0.5" stroke="#2a4aa0" stroke-width="1.3" opacity="0.9"/>
<path d="M312.8 95.7 l5.8 -0.3" stroke="#2a4aa0" stroke-width="1.3" opacity="0.9"/>
<path d="M278.4 99.5 l5.7 0.5" stroke="#90c0d0" stroke-width="1.3" opacity="0.9"/>
<path d="M279.4 69.8 l4.2 0.5" stroke="#70a8c8" stroke-width="1.3" opacity="0.9"/>
<path d="M270.6 83.6 l6.8 -1.2" stroke="#1a3080" stroke-width="1.3" opacity="0.9"/>
<path d="M308.3 71.5 l5.7 0.4" stroke="#4a80b0" stroke-width="1.3" opacity="0.9"/>
<path d="M274.7 82.4 l8.4 -0.8" stroke="#4a80b0" stroke-width="1.3" opacity="0.9"/>
<path d="M294.8 111.6 l6.0 -0.0" stroke="#4a80b0" stroke-width="1.3" opacity="0.9"/>
<path d="M302.3 75.4 l3.4 0.0" stroke="#90c0d0" stroke-width="1.3" opacity="0.9"/>
<path d="M268.2 70.2 l7.5 -0.2" stroke="#3a6ab8" stroke-width="1.3" opacity="0.9"/>
<path d="M294.6 75.9 l5.6 0.1" stroke="#4a80b0" stroke-width="1.3" opacity="0.9"/>
<path d="M291.4 79.3 l7.2 -0.3" stroke="#4a80b0" stroke-width="1.3" opacity="0.9"/>
<path d="M288.3 77.3 l7.0 -1.3" stroke="#70a8c8" stroke-width="1.3" opacity="0.9"/>
<path d="M284.8 80.5 l4.3 0.1" stroke="#1a3080" stroke-width="1.3" opacity="0.9"/>
<path d="M289.3 107.7 l3.4 -0.6" stroke="#2a4aa0" stroke-width="1.3" opacity="0.9"/>
<path d="M296.4 114.6 l3.6 0.4" stroke="#90c0d0" stroke-width="1.3" opacity="0.9"/>
<path d="M304.1 79.9 l8.4 -1.5" stroke="#90c0d0" stroke-width="1.3" opacity="0.9"/>
<path d="M311.3 81.7 l7.8 0.9" stroke="#1a3080" stroke-width="1.3" opacity="0.9"/>
<path d="M273.1 71.2 l6.9 -0.4" stroke="#2a4aa0" stroke-width="1.3" opacity="0.9"/>
<path d="M305.1 95.2 l3.2 0.4" stroke="#4a80b0" stroke-width="1.3" opacity="0.9"/>
<path d="M310.3 71.5 l4.4 0.3" stroke="#3a6ab8" stroke-width="1.3" opacity="0.9"/>
<path d="M298.6 102.0 l7.1 -0.6" stroke="#70a8c8" stroke-width="1.3" opacity="0.9"/>
<path d="M288.8 106.9 l5.6 -0.9" stroke="#3a6ab8" stroke-width="1.3" opacity="0.9"/>
<path d="M266.2 72.3 l8.2 0.4" stroke="#4a80b0" stroke-width="1.3" opacity="0.9"/>
<path d="M316.8 99.0 l3.7 -0.4" stroke="#1a3080" stroke-width="1.3" opacity="0.9"/>
<path d="M271.1 78.4 l8.1 -1.3" stroke="#2a4aa0" stroke-width="1.3" opacity="0.9"/>
<path d="M315.0 114.8 l8.4 -0.8" stroke="#90c0d0" stroke-width="1.3" opacity="0.9"/>
<path d="M314.4 95.6 l6.8 0.9" stroke="#90c0d0" stroke-width="1.3" opacity="0.9"/>
<path d="M295.9 82.6 l7.3 -1.0" stroke="#3a6ab8" stroke-width="1.3" opacity="0.9"/>
<path d="M286.9 92.0 l4.3 -0.0" stroke="#70a8c8" stroke-width="1.3" opacity="0.9"/>
<path d="M302.9 74.0 l5.5 -1.1" stroke="#90c0d0" stroke-width="1.3" opacity="0.9"/>
<path d="M276.4 93.0 l7.6 -0.9" stroke="#4a80b0" stroke-width="1.3" opacity="0.9"/>
<path d="M291.0 85.6 l7.2 -0.3" stroke="#90c0d0" stroke-width="1.3" opacity="0.9"/>
<path d="M296.4 93.6 l7.9 -0.9" stroke="#2a4aa0" stroke-width="1.3" opacity="0.9"/>
<path d="M311.8 90.7 l4.3 0.2" stroke="#1a3080" stroke-width="1.3" opacity="0.9"/>
<path d="M314.3 101.3 l3.5 -0.2" stroke="#70a8c8" stroke-width="1.3" opacity="0.9"/>
<path d="M307.1 77.7 l7.6 -1.0" stroke="#4a80b0" stroke-width="1.3" opacity="0.9"/>
<path d="M307.2 80.0 l3.1 -0.3" stroke="#90c0d0" stroke-width="1.3" opacity="0.9"/>
<path d="M269.4 84.9 l8.6 -1.7" stroke="#90c0d0" stroke-width="1.3" opacity="0.9"/>
<path d="M315.8 108.8 l7.7 -0.8" stroke="#70a8c8" stroke-width="1.3" opacity="0.9"/>
<path d="M284.9 73.1 l7.4 0.5" stroke="#1a3080" stroke-width="1.3" opacity="0.9"/>
<path d="M271.7 77.3 l3.2 0.3" stroke="#3a6ab8" stroke-width="1.3" opacity="0.9"/>
<path d="M316.1 107.9 l5.6 0.5" stroke="#1a3080" stroke-width="1.3" opacity="0.9"/>
<path d="M274.7 75.2 l7.3 0.1" stroke="#70a8c8" stroke-width="1.3" opacity="0.9"/>
<path d="M281.7 111.3 l5.0 0.4" stroke="#3a6ab8" stroke-width="1.3" opacity="0.9"/>
<path d="M315.9 88.1 l7.6 -1.1" stroke="#70a8c8" stroke-width="1.3" opacity="0.9"/>
<path d="M294.5 73.2 l6.0 -0.7" stroke="#90c0d0" stroke-width="1.3" opacity="0.9"/>
<path d="M321.3 114.4 l4.1 -0.3" stroke="#2a4aa0" stroke-width="1.3" opacity="0.9"/>
<path d="M307.2 73.4 l3.7 -0.4" stroke="#2a4aa0" stroke-width="1.3" opacity="0.9"/>
<path d="M301.0 76.9 l6.9 -1.4" stroke="#90c0d0" stroke-width="1.3" opacity="0.9"/>
<path d="M279.0 72.6 l8.1 0.3" stroke="#3a6ab8" stroke-width="1.3" opacity="0.9"/>
<path d="M279.1 95.5 l4.9 -0.0" stroke="#2a4aa0" stroke-width="1.3" opacity="0.9"/>
<path d="M298.0 92.3 l3.5 0.3" stroke="#1a3080" stroke-width="1.3" opacity="0.9"/>
<path d="M272.9 78.0 l5.5 -0.6" stroke="#70a8c8" stroke-width="1.3" opacity="0.9"/>
<path d="M266.9 78.7 l5.4 -0.5" stroke="#4a80b0" stroke-width="1.3" opacity="0.9"/>
<path d="M314.0 79.4 l5.3 -0.0" stroke="#2a4aa0" stroke-width="1.3" opacity="0.9"/>
<path d="M295.1 93.9 l5.8 -0.6" stroke="#4a80b0" stroke-width="1.3" opacity="0.9"/>
<path d="M292.8 114.4 l5.2 -1.0" stroke="#3a6ab8" stroke-width="1.3" opacity="0.9"/>
<path d="M299.5 76.2 l5.8 -0.0" stroke="#1a3080" stroke-width="1.3" opacity="0.9"/>
<path d="M274.9 112.9 l7.5 1.0" stroke="#4a80b0" stroke-width="1.3" opacity="0.9"/>
<path d="M290.7 114.7 l5.7 -1.0" stroke="#3a6ab8" stroke-width="1.3" opacity="0.9"/>
<path d="M304.8 71.2 l4.1 0.4" stroke="#2a4aa0" stroke-width="1.3" opacity="0.9"/>
<path d="M290.2 91.9 l7.2 -0.8" stroke="#90c0d0" stroke-width="1.3" opacity="0.9"/>
<path d="M286.6 101.5 l6.1 -1.1" stroke="#2a4aa0" stroke-width="1.3" opacity="0.9"/>
<path d="M286.8 108.5 l8.2 -1.1" stroke="#70a8c8" stroke-width="1.3" opacity="0.9"/>
<path d="M313.5 96.3 l4.6 -0.1" stroke="#2a4aa0" stroke-width="1.3" opacity="0.9"/>
<path d="M300.6 101.7 l5.2 0.4" stroke="#90c0d0" stroke-width="1.3" opacity="0.9"/>
<path d="M301.9 74.5 l3.7 0.1" stroke="#3a6ab8" stroke-width="1.3" opacity="0.9"/>
<path d="M289.4 113.0 l5.4 -0.5" stroke="#3a6ab8" stroke-width="1.3" opacity="0.9"/>
<path d="M321.9 77.3 l5.2 -0.1" stroke="#70a8c8" stroke-width="1.3" opacity="0.9"/>
<path d="M279.0 105.1 l8.0 -0.4" stroke="#70a8c8" stroke-width="1.3" opacity="0.9"/>
<path d="M311.6 70.7 l8.3 -0.6" stroke="#70a8c8" stroke-width="1.3" opacity="0.9"/>
<path d="M304.2 99.8 l5.8 -0.2" stroke="#3a6ab8" stroke-width="1.3" opacity="0.9"/>
<path d="M296.3 71.2 l4.1 -0.6" stroke="#4a80b0" stroke-width="1.3" opacity="0.9"/>
<path d="M294.1 101.0 l6.9 0.4" stroke="#70a8c8" stroke-width="1.3" opacity="0.9"/>
<path d="M282.3 93.1 l7.4 0.3" stroke="#2a4aa0" stroke-width="1.3" opacity="0.9"/>
<path d="M273.5 82.5 l6.3 0.2" stroke="#90c0d0" stroke-width="1.3" opacity="0.9"/>
<path d="M310.1 112.2 l7.0 0.6" stroke="#4a80b0" stroke-width="1.3" opacity="0.9"/>
<path d="M312.5 94.6 l5.2 0.3" stroke="#1a3080" stroke-width="1.3" opacity="0.9"/>
<path d="M296.8 75.7 l8.5 -1.6" stroke="#2a4aa0" stroke-width="1.3" opacity="0.9"/>
<path d="M300.3 69.6 l8.8 1.0" stroke="#4a80b0" stroke-width="1.3" opacity="0.9"/>
<path d="M274.3 105.9 l8.3 -1.6" stroke="#90c0d0" stroke-width="1.3" opacity="0.9"/>
<path d="M267.3 97.1 l3.5 -0.5" stroke="#4a80b0" stroke-width="1.3" opacity="0.9"/>
<path d="M291.4 79.2 l4.8 -0.7" stroke="#4a80b0" stroke-width="1.3" opacity="0.9"/>
<path d="M285.0 69.2 l3.4 -0.3" stroke="#2a4aa0" stroke-width="1.3" opacity="0.9"/>
<path d="M267.3 101.8 l7.1 -1.4" stroke="#4a80b0" stroke-width="1.3" opacity="0.9"/>
<path d="M281.6 111.2 l8.2 0.9" stroke="#1a3080" stroke-width="1.3" opacity="0.9"/>
<path d="M299.8 113.6 l3.0 -0.0" stroke="#2a4aa0" stroke-width="1.3" opacity="0.9"/>
<path d="M307.0 78.7 l8.4 -1.5" stroke="#90c0d0" stroke-width="1.3" opacity="0.9"/>
<path d="M293.1 96.2 l5.3 0.5" stroke="#90c0d0" stroke-width="1.3" opacity="0.9"/>
<path d="M292.0 104.9 l4.2 -0.2" stroke="#3a6ab8" stroke-width="1.3" opacity="0.9"/>
<path d="M281.7 103.0 l4.5 0.4" stroke="#4a80b0" stroke-width="1.3" opacity="0.9"/>
<path d="M283.1 70.1 l5.6 -1.0" stroke="#70a8c8" stroke-width="1.3" opacity="0.9"/>
<path d="M291.8 84.4 l6.7 -0.3" stroke="#4a80b0" stroke-width="1.3" opacity="0.9"/>
<path d="M310.6 101.3 l4.0 -0.3" stroke="#1a3080" stroke-width="1.3" opacity="0.9"/>
<path d="M307.0 98.9 l6.1 -0.4" stroke="#3a6ab8" stroke-width="1.3" opacity="0.9"/>
<path d="M289.8 76.7 l4.2 0.5" stroke="#3a6ab8" stroke-width="1.3" opacity="0.9"/>
<path d="M302.6 79.7 l8.4 -0.1" stroke="#70a8c8" stroke-width="1.3" opacity="0.9"/>
<path d="M281.5 97.9 l5.3 -0.2" stroke="#90c0d0" stroke-width="1.3" opacity="0.9"/>
<path d="M313.1 82.8 l8.2 0.6" stroke="#70a8c8" stroke-width="1.3" opacity="0.9"/>
<path d="M280.2 107.0 l6.6 -0.1" stroke="#4a80b0" stroke-width="1.3" opacity="0.9"/>
<path d="M316.3 100.9 l7.0 -1.1" stroke="#2a4aa0" stroke-width="1.3" opacity="0.9"/>
<path d="M310.0 99.9 l5.6 0.4" stroke="#4a80b0" stroke-width="1.3" opacity="0.9"/>
<path d="M306.0 88.5 l3.9 0.3" stroke="#3a6ab8" stroke-width="1.3" opacity="0.9"/>
<path d="M294.5 75.0 l8.1 -1.1" stroke="#1a3080" stroke-width="1.3" opacity="0.9"/>
<path d="M281.5 72.7 l8.0 0.3" stroke="#3a6ab8" stroke-width="1.3" opacity="0.9"/>
<path d="M292.6 93.3 l6.0 -0.3" stroke="#2a4aa0" stroke-width="1.3" opacity="0.9"/>
<path d="M266.9 111.7 l3.2 -0.5" stroke="#4a80b0" stroke-width="1.3" opacity="0.9"/>
<path d="M297.9 93.3 l7.6 -1.0" stroke="#70a8c8" stroke-width="1.3" opacity="0.9"/>
<path d="M301.3 95.9 l4.0 0.5" stroke="#70a8c8" stroke-width="1.3" opacity="0.9"/>
<path d="M286.8 90.6 l6.7 -1.3" stroke="#4a80b0" stroke-width="1.3" opacity="0.9"/>
<path d="M283.2 79.9 l7.8 0.6" stroke="#2a4aa0" stroke-width="1.3" opacity="0.9"/>
<path d="M313.0 108.9 l4.4 -0.9" stroke="#2a4aa0" stroke-width="1.3" opacity="0.9"/>
<path d="M280.3 107.2 l4.1 -0.5" stroke="#2a4aa0" stroke-width="1.3" opacity="0.9"/>
<path d="M282.8 89.7 l7.7 -0.6" stroke="#4a80b0" stroke-width="1.3" opacity="0.9"/>
<path d="M289.2 103.5 l3.7 0.3" stroke="#4a80b0" stroke-width="1.3" opacity="0.9"/>
<path d="M272.1 100.8 l9.0 0.6" stroke="#3a6ab8" stroke-width="1.3" opacity="0.9"/>
<path d="M285.6 82.7 l6.9 -0.5" stroke="#90c0d0" stroke-width="1.3" opacity="0.9"/>
<path d="M288.0 82.7 l8.5 -1.6" stroke="#90c0d0" stroke-width="1.3" opacity="0.9"/>
<path d="M307.9 99.8 l6.2 -0.0" stroke="#1a3080" stroke-width="1.3" opacity="0.9"/>
<path d="M281.4 106.9 l7.9 0.8" stroke="#3a6ab8" stroke-width="1.3" opacity="0.9"/>
<path d="M303.0 94.3 l6.4 -0.3" stroke="#3a6ab8" stroke-width="1.3" opacity="0.9"/>
<path d="M321.7 91.9 l7.0 -1.2" stroke="#1a3080" stroke-width="1.3" opacity="0.9"/>
<path d="M320.8 68.6 l6.8 0.1" stroke="#3a6ab8" stroke-width="1.3" opacity="0.9"/>
<path d="M292.3 74.2 l7.2 -0.8" stroke="#4a80b0" stroke-width="1.3" opacity="0.9"/>
<path d="M318.3 74.7 l3.0 -0.2" stroke="#70a8c8" stroke-width="1.3" opacity="0.9"/>
<path d="M267.2 88.8 l6.6 -0.6" stroke="#70a8c8" stroke-width="1.3" opacity="0.9"/>
<path d="M269.8 70.3 l3.2 -0.6" stroke="#70a8c8" stroke-width="1.3" opacity="0.9"/>
<path d="M283.1 93.7 l3.7 0.3" stroke="#4a80b0" stroke-width="1.3" opacity="0.9"/>
<path d="M302.0 114.8 l7.6 -0.8" stroke="#70a8c8" stroke-width="1.3" opacity="0.9"/>
<path d="M305.5 97.0 l7.4 0.1" stroke="#2a4aa0" stroke-width="1.3" opacity="0.9"/>
<path d="M272.6 89.8 l5.7 -0.2" stroke="#2a4aa0" stroke-width="1.3" opacity="0.9"/>
<path d="M290.4 78.7 l4.9 0.6" stroke="#4a80b0" stroke-width="1.3" opacity="0.9"/>
<path d="M305.9 85.8 l6.3 -0.2" stroke="#2a4aa0" stroke-width="1.3" opacity="0.9"/>
<path d="M298.8 98.6 l8.5 -1.0" stroke="#3a6ab8" stroke-width="1.3" opacity="0.9"/>
<path d="M290.7 103.9 l3.9 -0.4" stroke="#90c0d0" stroke-width="1.3" opacity="0.9"/>
<path d="M275.6 75.0 l8.0 -0.9" stroke="#2a4aa0" stroke-width="1.3" opacity="0.9"/>
<path d="M297.4 87.6 l5.6 -1.1" stroke="#70a8c8" stroke-width="1.3" opacity="0.9"/>
<path d="M317.0 88.7 l3.6 0.2" stroke="#2a4aa0" stroke-width="1.3" opacity="0.9"/>
<path d="M288.7 91.8 l7.8 0.6" stroke="#70a8c8" stroke-width="1.3" opacity="0.9"/>
<path d="M273.1 90.2 l3.8 -0.8" stroke="#3a6ab8" stroke-width="1.3" opacity="0.9"/>
<path d="M301.7 106.3 l6.6 -0.1" stroke="#2a4aa0" stroke-width="1.3" opacity="0.9"/>
<path d="M273.7 106.6 l4.5 -0.3" stroke="#3a6ab8" stroke-width="1.3" opacity="0.9"/>
<path d="M283.5 113.3 l8.9 -0.1" stroke="#90c0d0" stroke-width="1.3" opacity="0.9"/>
<path d="M318.9 87.2 l8.2 -0.0" stroke="#2a4aa0" stroke-width="1.3" opacity="0.9"/>
<path d="M290.0 94.9 l8.0 -1.1" stroke="#70a8c8" stroke-width="1.3" opacity="0.9"/>
<path d="M303.9 81.6 l3.1 -0.0" stroke="#1a3080" stroke-width="1.3" opacity="0.9"/>
<path d="M298.8 82.1 l6.8 -0.8" stroke="#2a4aa0" stroke-width="1.3" opacity="0.9"/>
<path d="M271.3 92.3 l5.2 -0.5" stroke="#70a8c8" stroke-width="1.3" opacity="0.9"/>
<path d="M294.5 91.7 l5.2 0.2" stroke="#1a3080" stroke-width="1.3" opacity="0.9"/>
<path d="M317.2 92.1 l6.6 -0.0" stroke="#3a6ab8" stroke-width="1.3" opacity="0.9"/>
<path d="M321.5 112.3 l7.8 -0.9" stroke="#90c0d0" stroke-width="1.3" opacity="0.9"/>
<path d="M310.9 74.3 l3.8 -0.1" stroke="#90c0d0" stroke-width="1.3" opacity="0.9"/>
<path d="M266.9 80.1 l5.2 0.2" stroke="#4a80b0" stroke-width="1.3" opacity="0.9"/>
<path d="M300.5 77.1 l7.3 -0.3" stroke="#2a4aa0" stroke-width="1.3" opacity="0.9"/>
<path d="M282.8 105.7 l6.8 -1.0" stroke="#90c0d0" stroke-width="1.3" opacity="0.9"/>
<path d="M304.5 70.0 l8.7 -1.2" stroke="#1a3080" stroke-width="1.3" opacity="0.9"/>
<path d="M304.4 77.2 l6.4 0.1" stroke="#4a80b0" stroke-width="1.3" opacity="0.9"/>
<path d="M282.0 98.9 l5.4 -0.4" stroke="#1a3080" stroke-width="1.3" opacity="0.9"/>
<path d="M319.2 113.3 l8.9 0.6" stroke="#1a3080" stroke-width="1.3" opacity="0.9"/>
<path d="M268.1 71.8 l3.5 0.1" stroke="#90c0d0" stroke-width="1.3" opacity="0.9"/>
<path d="M318.6 107.2 l4.6 0.4" stroke="#1a3080" stroke-width="1.3" opacity="0.9"/>
<path d="M292.6 82.7 l7.8 -0.6" stroke="#3a6ab8" stroke-width="1.3" opacity="0.9"/>
<path d="M313.3 99.5 l3.9 -0.6" stroke="#90c0d0" stroke-width="1.3" opacity="0.9"/>
<path d="M295.7 90.5 l6.1 0.6" stroke="#3a6ab8" stroke-width="1.3" opacity="0.9"/>
<path d="M306.2 78.5 l5.0 0.4" stroke="#70a8c8" stroke-width="1.3" opacity="0.9"/>
<path d="M282.9 80.6 l3.1 -0.2" stroke="#1a3080" stroke-width="1.3" opacity="0.9"/>
<path d="M278.3 89.9 l6.8 -0.4" stroke="#2a4aa0" stroke-width="1.3" opacity="0.9"/>
<path d="M271.3 112.4 l4.4 -0.3" stroke="#90c0d0" stroke-width="1.3" opacity="0.9"/>
<path d="M271.6 101.4 l6.0 -0.0" stroke="#3a6ab8" stroke-width="1.3" opacity="0.9"/>
<path d="M291.1 78.0 l6.3 -1.2" stroke="#2a4aa0" stroke-width="1.3" opacity="0.9"/>
<path d="M315.7 73.9 l3.1 0.3" stroke="#4a80b0" stroke-width="1.3" opacity="0.9"/>
<path d="M298.9 109.6 l3.9 -0.2" stroke="#1a3080" stroke-width="1.3" opacity="0.9"/>
<path d="M274.6 93.4 l5.4 -0.6" stroke="#3a6ab8" stroke-width="1.3" opacity="0.9"/>
<path d="M271.0 114.2 l7.0 0.5" stroke="#70a8c8" stroke-width="1.3" opacity="0.9"/>
<path d="M299.6 111.3 l6.4 0.5" stroke="#70a8c8" stroke-width="1.3" opacity="0.9"/>
<path d="M268.7 91.5 l3.2 -0.1" stroke="#70a8c8" stroke-width="1.3" opacity="0.9"/>
<path d="M305.6 111.8 l7.0 0.1" stroke="#1a3080" stroke-width="1.3" opacity="0.9"/>
<path d="M309.6 88.9 l7.5 -0.4" stroke="#70a8c8" stroke-width="1.3" opacity="0.9"/>
<path d="M317.5 100.4 l3.6 -0.5" stroke="#4a80b0" stroke-width="1.3" opacity="0.9"/>
<path d="M304.3 110.0 l3.8 -0.6" stroke="#1a3080" stroke-width="1.3" opacity="0.9"/>
<path d="M303.4 76.8 l7.3 -0.7" stroke="#1a3080" stroke-width="1.3" opacity="0.9"/>
<path d="M310.4 97.7 l8.7 -1.3" stroke="#3a6ab8" stroke-width="1.3" opacity="0.9"/>
<path d="M291.0 71.2 l8.1 -1.6" stroke="#4a80b0" stroke-width="1.3" opacity="0.9"/>
<path d="M289.1 112.9 l8.1 -0.5" stroke="#2a4aa0" stroke-width="1.3" opacity="0.9"/>
<path d="M298.8 79.2 l5.9 -0.6" stroke="#1a3080" stroke-width="1.3" opacity="0.9"/>
<path d="M269.2 109.5 l3.2 -0.7" stroke="#1a3080" stroke-width="1.3" opacity="0.9"/>
<path d="M277.3 83.8 l3.5 -0.7" stroke="#2a4aa0" stroke-width="1.3" opacity="0.9"/>
<path d="M313.8 108.4 l6.0 -0.2" stroke="#70a8c8" stroke-width="1.3" opacity="0.9"/>
<path d="M312.9 95.5 l3.1 -0.0" stroke="#1a3080" stroke-width="1.3" opacity="0.9"/>
<path d="M301.2 87.2 l6.0 0.7" stroke="#90c0d0" stroke-width="1.3" opacity="0.9"/>
<path d="M287.0 91.1 l3.6 -0.2" stroke="#4a80b0" stroke-width="1.3" opacity="0.9"/>
<path d="M290.2 91.7 l7.2 -1.5" stroke="#1a3080" stroke-width="1.3" opacity="0.9"/>
<path d="M314.8 114.4 l3.3 0.2" stroke="#1a3080" stroke-width="1.3" opacity="0.9"/>
<path d="M303.2 81.0 l7.9 0.9" stroke="#3a6ab8" stroke-width="1.3" opacity="0.9"/>
<circle cx="20.5" cy="9.7" r="15" fill="url(#st1)"/>
<path d="M14.4 18.0 l-1.2 -0.9" stroke="#e8f070" stroke-width="1" opacity="0.8"/>
<path d="M17.0 21.6 l-1.4 -0.4" stroke="#50a080" stroke-width="1" opacity="0.8"/>
<path d="M29.1 12.6 l-0.5 1.4" stroke="#80c0b0" stroke-width="1" opacity="0.8"/>
<path d="M30.4 4.9 l0.7 1.3" stroke="#50a080" stroke-width="1" opacity="0.8"/>
<path d="M24.0 -1.4 l1.4 0.5" stroke="#f0f0a0" stroke-width="1" opacity="0.8"/>
<path d="M10.0 12.4 l-0.4 -1.5" stroke="#d8e060" stroke-width="1" opacity="0.8"/>
<path d="M13.6 5.9 l0.7 -1.3" stroke="#d8e060" stroke-width="1" opacity="0.8"/>
<path d="M9.1 11.3 l-0.2 -1.5" stroke="#50a080" stroke-width="1" opacity="0.8"/>
<path d="M29.1 12.2 l-0.4 1.4" stroke="#d8e060" stroke-width="1" opacity="0.8"/>
<path d="M29.6 10.5 l-0.1 1.5" stroke="#d8e060" stroke-width="1" opacity="0.8"/>
<path d="M32.3 14.3 l-0.5 1.4" stroke="#e8f070" stroke-width="1" opacity="0.8"/>
<path d="M27.3 5.4 l0.8 1.3" stroke="#2a4aa0" stroke-width="1" opacity="0.8"/>
<path d="M21.2 19.3 l-1.5 0.1" stroke="#80c0b0" stroke-width="1" opacity="0.8"/>
<path d="M20.2 -2.4 l1.5 -0.0" stroke="#50a080" stroke-width="1" opacity="0.8"/>
<path d="M21.9 -1.6 l1.5 0.2" stroke="#80c0b0" stroke-width="1" opacity="0.8"/>
<path d="M32.6 6.1 l0.4 1.4" stroke="#e8f070" stroke-width="1" opacity="0.8"/>
<path d="M20.7 20.3 l-1.5 0.0" stroke="#f0f0a0" stroke-width="1" opacity="0.8"/>
<path d="M28.0 7.3 l0.4 1.4" stroke="#f0f0a0" stroke-width="1" opacity="0.8"/>
<path d="M25.5 19.4 l-1.3 0.7" stroke="#203070" stroke-width="1" opacity="0.8"/>
<path d="M18.2 18.9 l-1.5 -0.4" stroke="#50a080" stroke-width="1" opacity="0.8"/>
<path d="M19.1 20.1 l-1.5 -0.2" stroke="#e8f070" stroke-width="1" opacity="0.8"/>
<path d="M27.3 20.9 l-1.3 0.8" stroke="#f0f0a0" stroke-width="1" opacity="0.8"/>
<path d="M26.6 -0.5 l1.3 0.8" stroke="#d8e060" stroke-width="1" opacity="0.8"/>
<path d="M29.0 13.3 l-0.6 1.4" stroke="#80c0b0" stroke-width="1" opacity="0.8"/>
<path d="M10.5 19.1 l-1.0 -1.1" stroke="#50a080" stroke-width="1" opacity="0.8"/>
<path d="M17.1 -0.9 l1.4 -0.5" stroke="#e8f070" stroke-width="1" opacity="0.8"/>
<path d="M26.7 1.6 l1.2 0.9" stroke="#203070" stroke-width="1" opacity="0.8"/>
<path d="M28.5 19.8 l-1.2 0.9" stroke="#203070" stroke-width="1" opacity="0.8"/>
<path d="M30.2 18.9 l-1.0 1.1" stroke="#80c0b0" stroke-width="1" opacity="0.8"/>
<path d="M23.6 1.8 l1.4 0.6" stroke="#e8f070" stroke-width="1" opacity="0.8"/>
<path d="M33.3 14.2 l-0.5 1.4" stroke="#2a4aa0" stroke-width="1" opacity="0.8"/>
<path d="M30.7 16.9 l-0.9 1.2" stroke="#203070" stroke-width="1" opacity="0.8"/>
<path d="M10.6 13.7 l-0.6 -1.4" stroke="#203070" stroke-width="1" opacity="0.8"/>
<path d="M29.7 8.8 l0.1 1.5" stroke="#203070" stroke-width="1" opacity="0.8"/>
<path d="M26.1 15.6 l-1.1 1.0" stroke="#d8e060" stroke-width="1" opacity="0.8"/>
<path d="M15.7 -1.2 l1.4 -0.6" stroke="#203070" stroke-width="1" opacity="0.8"/>
<path d="M16.0 0.6 l1.3 -0.7" stroke="#203070" stroke-width="1" opacity="0.8"/>
<path d="M20.4 20.5 l-1.5 -0.0" stroke="#80c0b0" stroke-width="1" opacity="0.8"/>
<path d="M13.3 3.4 l1.0 -1.1" stroke="#80c0b0" stroke-width="1" opacity="0.8"/>
<path d="M21.1 21.7 l-1.5 0.1" stroke="#d8e060" stroke-width="1" opacity="0.8"/>
<path d="M26.3 3.8 l1.1 1.0" stroke="#2a4aa0" stroke-width="1" opacity="0.8"/>
<path d="M21.4 0.7 l1.5 0.2" stroke="#e8f070" stroke-width="1" opacity="0.8"/>
<path d="M19.7 -3.9 l1.5 -0.1" stroke="#d8e060" stroke-width="1" opacity="0.8"/>
<path d="M7.9 12.4 l-0.3 -1.5" stroke="#80c0b0" stroke-width="1" opacity="0.8"/>
<path d="M13.5 12.3 l-0.5 -1.4" stroke="#f0f0a0" stroke-width="1" opacity="0.8"/>
<path d="M26.3 4.2 l1.0 1.1" stroke="#e8f070" stroke-width="1" opacity="0.8"/>
<path d="M26.7 6.9 l0.6 1.4" stroke="#d8e060" stroke-width="1" opacity="0.8"/>
<path d="M14.2 14.2 l-0.9 -1.2" stroke="#f0f0a0" stroke-width="1" opacity="0.8"/>
<path d="M13.6 -1.7 l1.3 -0.8" stroke="#f0f0a0" stroke-width="1" opacity="0.8"/>
<path d="M15.1 4.3 l1.1 -1.1" stroke="#f0f0a0" stroke-width="1" opacity="0.8"/>
<path d="M15.9 16.9 l-1.3 -0.8" stroke="#203070" stroke-width="1" opacity="0.8"/>
<path d="M11.9 13.4 l-0.6 -1.4" stroke="#f0f0a0" stroke-width="1" opacity="0.8"/>
<path d="M8.7 7.3 l0.3 -1.5" stroke="#80c0b0" stroke-width="1" opacity="0.8"/>
<path d="M25.7 4.6 l1.1 1.1" stroke="#f0f0a0" stroke-width="1" opacity="0.8"/>
<path d="M18.0 21.7 l-1.5 -0.3" stroke="#80c0b0" stroke-width="1" opacity="0.8"/>
<path d="M11.2 13.6 l-0.6 -1.4" stroke="#80c0b0" stroke-width="1" opacity="0.8"/>
<path d="M28.1 1.0 l1.1 1.0" stroke="#f0f0a0" stroke-width="1" opacity="0.8"/>
<path d="M16.7 20.5 l-1.4 -0.5" stroke="#e8f070" stroke-width="1" opacity="0.8"/>
<path d="M29.9 5.9 l0.6 1.4" stroke="#50a080" stroke-width="1" opacity="0.8"/>
<path d="M11.2 13.1 l-0.5 -1.4" stroke="#f0f0a0" stroke-width="1" opacity="0.8"/>
<path d="M20.1 17.2 l-1.5 -0.1" stroke="#50a080" stroke-width="1" opacity="0.8"/>
<path d="M17.0 -1.3 l1.4 -0.5" stroke="#50a080" stroke-width="1" opacity="0.8"/>
<path d="M7.6 15.5 l-0.6 -1.4" stroke="#f0f0a0" stroke-width="1" opacity="0.8"/>
<path d="M30.0 0.8 l1.0 1.1" stroke="#2a4aa0" stroke-width="1" opacity="0.8"/>
<path d="M15.0 15.1 l-1.1 -1.1" stroke="#d8e060" stroke-width="1" opacity="0.8"/>
<path d="M19.3 2.4 l1.5 -0.3" stroke="#f0f0a0" stroke-width="1" opacity="0.8"/>
<path d="M15.7 2.0 l1.3 -0.8" stroke="#50a080" stroke-width="1" opacity="0.8"/>
<path d="M26.9 16.3 l-1.1 1.0" stroke="#203070" stroke-width="1" opacity="0.8"/>
<path d="M7.2 12.4 l-0.3 -1.5" stroke="#203070" stroke-width="1" opacity="0.8"/>
<path d="M29.7 5.1 l0.7 1.3" stroke="#50a080" stroke-width="1" opacity="0.8"/>
<path d="M29.3 20.2 l-1.1 1.0" stroke="#d8e060" stroke-width="1" opacity="0.8"/>
<path d="M13.6 9.7 l0.0 -1.5" stroke="#d8e060" stroke-width="1" opacity="0.8"/>
<path d="M27.4 9.3 l0.1 1.5" stroke="#203070" stroke-width="1" opacity="0.8"/>
<path d="M10.3 7.3 l0.3 -1.5" stroke="#203070" stroke-width="1" opacity="0.8"/>
<path d="M27.5 2.6 l1.1 1.1" stroke="#e8f070" stroke-width="1" opacity="0.8"/>
<path d="M10.9 11.6 l-0.3 -1.5" stroke="#80c0b0" stroke-width="1" opacity="0.8"/>
<path d="M16.7 -1.5 l1.4 -0.5" stroke="#e8f070" stroke-width="1" opacity="0.8"/>
<path d="M32.4 17.2 l-0.8 1.3" stroke="#80c0b0" stroke-width="1" opacity="0.8"/>
<path d="M17.4 17.4 l-1.4 -0.6" stroke="#2a4aa0" stroke-width="1" opacity="0.8"/>
<path d="M8.6 3.5 l0.7 -1.3" stroke="#f0f0a0" stroke-width="1" opacity="0.8"/>
<path d="M14.1 2.7 l1.1 -1.0" stroke="#e8f070" stroke-width="1" opacity="0.8"/>
<path d="M21.9 18.7 l-1.5 0.2" stroke="#e8f070" stroke-width="1" opacity="0.8"/>
<path d="M11.7 4.7 l0.7 -1.3" stroke="#f0f0a0" stroke-width="1" opacity="0.8"/>
<path d="M14.7 0.3 l1.3 -0.8" stroke="#d8e060" stroke-width="1" opacity="0.8"/>
<path d="M27.0 21.9 l-1.3 0.7" stroke="#50a080" stroke-width="1" opacity="0.8"/>
<path d="M6.3 9.1 l0.1 -1.5" stroke="#2a4aa0" stroke-width="1" opacity="0.8"/>
<path d="M20.5 18.8 l-1.5 0.0" stroke="#f0f0a0" stroke-width="1" opacity="0.8"/>
<path d="M19.7 2.7 l1.5 -0.2" stroke="#f0f0a0" stroke-width="1" opacity="0.8"/>
<path d="M12.8 6.5 l0.6 -1.4" stroke="#e8f070" stroke-width="1" opacity="0.8"/>
<path d="M23.3 3.1 l1.4 0.6" stroke="#2a4aa0" stroke-width="1" opacity="0.8"/>
<path d="M23.2 -3.4 l1.5 0.3" stroke="#80c0b0" stroke-width="1" opacity="0.8"/>
<path d="M11.5 9.8 l-0.0 -1.5" stroke="#50a080" stroke-width="1" opacity="0.8"/>
<path d="M14.3 13.7 l-0.8 -1.3" stroke="#d8e060" stroke-width="1" opacity="0.8"/>
<path d="M31.3 14.4 l-0.6 1.4" stroke="#d8e060" stroke-width="1" opacity="0.8"/>
<path d="M27.1 14.0 l-0.8 1.3" stroke="#50a080" stroke-width="1" opacity="0.8"/>
<path d="M24.3 1.5 l1.4 0.6" stroke="#e8f070" stroke-width="1" opacity="0.8"/>
<path d="M26.3 16.8 l-1.2 0.9" stroke="#f0f0a0" stroke-width="1" opacity="0.8"/>
<path d="M21.6 16.7 l-1.5 0.2" stroke="#f0f0a0" stroke-width="1" opacity="0.8"/>
<path d="M14.5 21.5 l-1.3 -0.7" stroke="#f0f0a0" stroke-width="1" opacity="0.8"/>
<path d="M14.3 3.4 l1.1 -1.1" stroke="#f0f0a0" stroke-width="1" opacity="0.8"/>
<path d="M29.2 8.9 l0.1 1.5" stroke="#f0f0a0" stroke-width="1" opacity="0.8"/>
<path d="M25.9 21.4 l-1.4 0.6" stroke="#f0f0a0" stroke-width="1" opacity="0.8"/>
<path d="M33.2 5.2 l0.5 1.4" stroke="#203070" stroke-width="1" opacity="0.8"/>
<path d="M24.4 -0.8 l1.4 0.5" stroke="#d8e060" stroke-width="1" opacity="0.8"/>
<path d="M25.2 -1.8 l1.4 0.6" stroke="#e8f070" stroke-width="1" opacity="0.8"/>
<path d="M25.6 22.8 l-1.4 0.5" stroke="#d8e060" stroke-width="1" opacity="0.8"/>
<path d="M19.2 18.1 l-1.5 -0.2" stroke="#203070" stroke-width="1" opacity="0.8"/>
<path d="M28.0 15.1 l-0.9 1.2" stroke="#80c0b0" stroke-width="1" opacity="0.8"/>
<path d="M13.8 3.5 l1.0 -1.1" stroke="#e8f070" stroke-width="1" opacity="0.8"/>
<path d="M8.0 14.2 l-0.5 -1.4" stroke="#203070" stroke-width="1" opacity="0.8"/>
<path d="M14.1 2.6 l1.1 -1.0" stroke="#f0f0a0" stroke-width="1" opacity="0.8"/>
<path d="M21.8 21.7 l-1.5 0.2" stroke="#2a4aa0" stroke-width="1" opacity="0.8"/>
<path d="M23.5 20.8 l-1.4 0.4" stroke="#50a080" stroke-width="1" opacity="0.8"/>
<path d="M21.2 -1.3 l1.5 0.1" stroke="#203070" stroke-width="1" opacity="0.8"/>
<path d="M16.0 -3.2 l1.4 -0.5" stroke="#e8f070" stroke-width="1" opacity="0.8"/>
<path d="M27.3 9.1 l0.1 1.5" stroke="#203070" stroke-width="1" opacity="0.8"/>
<path d="M31.2 11.7 l-0.3 1.5" stroke="#f0f0a0" stroke-width="1" opacity="0.8"/>
<path d="M12.6 1.2 l1.1 -1.0" stroke="#f0f0a0" stroke-width="1" opacity="0.8"/>
<path d="M23.8 21.9 l-1.4 0.4" stroke="#50a080" stroke-width="1" opacity="0.8"/>
<path d="M13.7 4.9 l0.9 -1.2" stroke="#e8f070" stroke-width="1" opacity="0.8"/>
<path d="M7.3 12.3 l-0.3 -1.5" stroke="#2a4aa0" stroke-width="1" opacity="0.8"/>
<path d="M13.9 10.9 l-0.3 -1.5" stroke="#2a4aa0" stroke-width="1" opacity="0.8"/>
<path d="M17.4 21.2 l-1.4 -0.4" stroke="#80c0b0" stroke-width="1" opacity="0.8"/>
<path d="M13.9 2.1 l1.1 -1.0" stroke="#d8e060" stroke-width="1" opacity="0.8"/>
<path d="M11.2 0.5 l1.1 -1.1" stroke="#2a4aa0" stroke-width="1" opacity="0.8"/>
<path d="M9.5 7.2 l0.3 -1.5" stroke="#d8e060" stroke-width="1" opacity="0.8"/>
<path d="M32.4 2.0 l0.8 1.3" stroke="#f0f0a0" stroke-width="1" opacity="0.8"/>
<path d="M16.4 15.9 l-1.3 -0.8" stroke="#2a4aa0" stroke-width="1" opacity="0.8"/>
<path d="M27.6 5.5 l0.8 1.3" stroke="#80c0b0" stroke-width="1" opacity="0.8"/>
<path d="M26.2 20.5 l-1.3 0.7" stroke="#e8f070" stroke-width="1" opacity="0.8"/>
<path d="M12.7 17.7 l-1.1 -1.0" stroke="#e8f070" stroke-width="1" opacity="0.8"/>
<path d="M16.4 21.5 l-1.4 -0.5" stroke="#f0f0a0" stroke-width="1" opacity="0.8"/>
<path d="M18.8 23.0 l-1.5 -0.2" stroke="#2a4aa0" stroke-width="1" opacity="0.8"/>
<path d="M21.6 -2.1 l1.5 0.1" stroke="#50a080" stroke-width="1" opacity="0.8"/>
<path d="M14.0 19.4 l-1.2 -0.8" stroke="#d8e060" stroke-width="1" opacity="0.8"/>
<circle cx="62" cy="6.6" r="8" fill="url(#st2)"/>
<path d="M66.9 7.0 l-0.1 1.5" stroke="#2a4aa0" stroke-width="1" opacity="0.8"/>
<path d="M63.2 -0.1 l1.5 0.3" stroke="#2a4aa0" stroke-width="1" opacity="0.8"/>
<path d="M65.0 4.4 l0.9 1.2" stroke="#203070" stroke-width="1" opacity="0.8"/>
<path d="M59.2 2.8 l1.2 -0.9" stroke="#50a080" stroke-width="1" opacity="0.8"/>
<path d="M65.8 3.8 l0.9 1.2" stroke="#80c0b0" stroke-width="1" opacity="0.8"/>
<path d="M57.9 11.2 l-1.1 -1.0" stroke="#2a4aa0" stroke-width="1" opacity="0.8"/>
<path d="M65.2 9.5 l-1.0 1.1" stroke="#2a4aa0" stroke-width="1" opacity="0.8"/>
<path d="M68.2 10.4 l-0.8 1.3" stroke="#f0f0a0" stroke-width="1" opacity="0.8"/>
<path d="M60.1 12.0 l-1.4 -0.5" stroke="#203070" stroke-width="1" opacity="0.8"/>
<path d="M63.6 3.2 l1.4 0.6" stroke="#f0f0a0" stroke-width="1" opacity="0.8"/>
<path d="M67.9 3.3 l0.7 1.3" stroke="#50a080" stroke-width="1" opacity="0.8"/>
<path d="M64.3 11.7 l-1.4 0.6" stroke="#80c0b0" stroke-width="1" opacity="0.8"/>
<path d="M62.2 11.2 l-1.5 0.1" stroke="#d8e060" stroke-width="1" opacity="0.8"/>
<path d="M67.9 10.8 l-0.9 1.2" stroke="#80c0b0" stroke-width="1" opacity="0.8"/>
<path d="M68.3 7.9 l-0.3 1.5" stroke="#80c0b0" stroke-width="1" opacity="0.8"/>
<path d="M66.3 11.2 l-1.1 1.0" stroke="#f0f0a0" stroke-width="1" opacity="0.8"/>
<path d="M58.7 11.1 l-1.2 -0.9" stroke="#d8e060" stroke-width="1" opacity="0.8"/>
<path d="M67.9 8.8 l-0.5 1.4" stroke="#80c0b0" stroke-width="1" opacity="0.8"/>
<path d="M55.3 10.0 l-0.7 -1.3" stroke="#80c0b0" stroke-width="1" opacity="0.8"/>
<path d="M66.8 8.0 l-0.4 1.4" stroke="#e8f070" stroke-width="1" opacity="0.8"/>
<path d="M61.4 10.6 l-1.5 -0.2" stroke="#80c0b0" stroke-width="1" opacity="0.8"/>
<path d="M54.9 6.0 l0.1 -1.5" stroke="#203070" stroke-width="1" opacity="0.8"/>
<path d="M58.2 2.4 l1.1 -1.0" stroke="#80c0b0" stroke-width="1" opacity="0.8"/>
<path d="M64.6 3.5 l1.2 1.0" stroke="#80c0b0" stroke-width="1" opacity="0.8"/>
<path d="M57.7 4.1 l0.7 -1.3" stroke="#e8f070" stroke-width="1" opacity="0.8"/>
<path d="M66.5 4.6 l0.6 1.4" stroke="#f0f0a0" stroke-width="1" opacity="0.8"/>
<path d="M63.8 13.1 l-1.4 0.4" stroke="#e8f070" stroke-width="1" opacity="0.8"/>
<path d="M69.0 5.1 l0.3 1.5" stroke="#80c0b0" stroke-width="1" opacity="0.8"/>
<path d="M63.8 11.9 l-1.4 0.5" stroke="#e8f070" stroke-width="1" opacity="0.8"/>
<path d="M60.0 1.6 l1.4 -0.6" stroke="#d8e060" stroke-width="1" opacity="0.8"/>
<path d="M63.1 13.2 l-1.5 0.2" stroke="#2a4aa0" stroke-width="1" opacity="0.8"/>
<path d="M65.9 5.6 l0.4 1.4" stroke="#203070" stroke-width="1" opacity="0.8"/>
<path d="M56.2 4.4 l0.5 -1.4" stroke="#2a4aa0" stroke-width="1" opacity="0.8"/>
<path d="M59.9 1.8 l1.4 -0.6" stroke="#203070" stroke-width="1" opacity="0.8"/>
<path d="M57.4 5.4 l0.4 -1.5" stroke="#d8e060" stroke-width="1" opacity="0.8"/>
<path d="M56.9 11.1 l-1.0 -1.1" stroke="#f0f0a0" stroke-width="1" opacity="0.8"/>
<path d="M61.4 11.5 l-1.5 -0.2" stroke="#203070" stroke-width="1" opacity="0.8"/>
<path d="M58.4 5.6 l0.4 -1.4" stroke="#f0f0a0" stroke-width="1" opacity="0.8"/>
<path d="M63.9 10.6 l-1.3 0.7" stroke="#2a4aa0" stroke-width="1" opacity="0.8"/>
<path d="M59.7 1.8 l1.3 -0.7" stroke="#d8e060" stroke-width="1" opacity="0.8"/>
<path d="M69.0 4.2 l0.5 1.4" stroke="#e8f070" stroke-width="1" opacity="0.8"/>
<path d="M55.1 5.4 l0.3 -1.5" stroke="#e8f070" stroke-width="1" opacity="0.8"/>
<path d="M59.1 4.3 l0.9 -1.2" stroke="#f0f0a0" stroke-width="1" opacity="0.8"/>
<path d="M56.5 8.9 l-0.6 -1.4" stroke="#203070" stroke-width="1" opacity="0.8"/>
<path d="M61.9 13.9 l-1.5 -0.0" stroke="#f0f0a0" stroke-width="1" opacity="0.8"/>
<path d="M66.1 4.4 l0.7 1.3" stroke="#e8f070" stroke-width="1" opacity="0.8"/>
<path d="M61.3 12.0 l-1.5 -0.2" stroke="#80c0b0" stroke-width="1" opacity="0.8"/>
<path d="M61.7 2.2 l1.5 -0.1" stroke="#80c0b0" stroke-width="1" opacity="0.8"/>
<path d="M68.0 7.7 l-0.3 1.5" stroke="#d8e060" stroke-width="1" opacity="0.8"/>
<path d="M58.4 4.5 l0.7 -1.3" stroke="#f0f0a0" stroke-width="1" opacity="0.8"/>
<path d="M57.4 12.1 l-1.1 -1.0" stroke="#f0f0a0" stroke-width="1" opacity="0.8"/>
<path d="M58.7 8.5 l-0.7 -1.3" stroke="#e8f070" stroke-width="1" opacity="0.8"/>
<path d="M56.1 6.7 l-0.0 -1.5" stroke="#203070" stroke-width="1" opacity="0.8"/>
<path d="M61.6 2.9 l1.5 -0.2" stroke="#d8e060" stroke-width="1" opacity="0.8"/>
<path d="M66.4 11.6 l-1.1 1.0" stroke="#80c0b0" stroke-width="1" opacity="0.8"/>
<path d="M65.5 11.1 l-1.2 0.9" stroke="#203070" stroke-width="1" opacity="0.8"/>
<path d="M66.0 2.7 l1.1 1.1" stroke="#f0f0a0" stroke-width="1" opacity="0.8"/>
<path d="M61.3 10.5 l-1.5 -0.3" stroke="#e8f070" stroke-width="1" opacity="0.8"/>
<path d="M56.0 8.1 l-0.4 -1.5" stroke="#50a080" stroke-width="1" opacity="0.8"/>
<path d="M67.7 10.6 l-0.9 1.2" stroke="#50a080" stroke-width="1" opacity="0.8"/>
<path d="M54.5 6.0 l0.1 -1.5" stroke="#80c0b0" stroke-width="1" opacity="0.8"/>
<path d="M64.6 9.6 l-1.1 1.0" stroke="#80c0b0" stroke-width="1" opacity="0.8"/>
<path d="M60.4 10.4 l-1.4 -0.6" stroke="#f0f0a0" stroke-width="1" opacity="0.8"/>
<path d="M63.7 10.2 l-1.4 0.6" stroke="#f0f0a0" stroke-width="1" opacity="0.8"/>
<path d="M54.9 7.3 l-0.1 -1.5" stroke="#d8e060" stroke-width="1" opacity="0.8"/>
<path d="M65.2 3.5 l1.1 1.1" stroke="#f0f0a0" stroke-width="1" opacity="0.8"/>
<path d="M59.9 12.8 l-1.4 -0.5" stroke="#80c0b0" stroke-width="1" opacity="0.8"/>
<path d="M65.9 11.6 l-1.2 0.9" stroke="#f0f0a0" stroke-width="1" opacity="0.8"/>
<path d="M62.7 2.4 l1.5 0.2" stroke="#2a4aa0" stroke-width="1" opacity="0.8"/>
<path d="M57.8 5.1 l0.5 -1.4" stroke="#2a4aa0" stroke-width="1" opacity="0.8"/>
<path d="M66.0 6.0 l0.2 1.5" stroke="#80c0b0" stroke-width="1" opacity="0.8"/>
<path d="M58.2 8.1 l-0.5 -1.4" stroke="#d8e060" stroke-width="1" opacity="0.8"/>
<circle cx="101" cy="7.4" r="12" fill="url(#st2)"/>
<path d="M100.7 -1.9 l1.5 -0.0" stroke="#203070" stroke-width="1" opacity="0.8"/>
<path d="M109.3 4.3 l0.5 1.4" stroke="#80c0b0" stroke-width="1" opacity="0.8"/>
<path d="M109.2 3.0 l0.7 1.3" stroke="#d8e060" stroke-width="1" opacity="0.8"/>
<path d="M100.4 12.8 l-1.5 -0.2" stroke="#50a080" stroke-width="1" opacity="0.8"/>
<path d="M101.4 -1.4 l1.5 0.1" stroke="#80c0b0" stroke-width="1" opacity="0.8"/>
<path d="M96.6 15.4 l-1.3 -0.7" stroke="#e8f070" stroke-width="1" opacity="0.8"/>
<path d="M93.0 11.0 l-0.6 -1.4" stroke="#2a4aa0" stroke-width="1" opacity="0.8"/>
<path d="M94.8 6.7 l0.2 -1.5" stroke="#2a4aa0" stroke-width="1" opacity="0.8"/>
<path d="M93.2 15.5 l-1.1 -1.0" stroke="#e8f070" stroke-width="1" opacity="0.8"/>
<path d="M94.2 10.1 l-0.5 -1.4" stroke="#e8f070" stroke-width="1" opacity="0.8"/>
<path d="M94.6 12.4 l-0.9 -1.2" stroke="#50a080" stroke-width="1" opacity="0.8"/>
<path d="M105.1 11.2 l-1.0 1.1" stroke="#50a080" stroke-width="1" opacity="0.8"/>
<path d="M111.6 8.4 l-0.1 1.5" stroke="#d8e060" stroke-width="1" opacity="0.8"/>
<path d="M99.2 15.4 l-1.5 -0.3" stroke="#2a4aa0" stroke-width="1" opacity="0.8"/>
<path d="M110.2 1.6 l0.8 1.3" stroke="#80c0b0" stroke-width="1" opacity="0.8"/>
<path d="M104.5 1.5 l1.3 0.8" stroke="#2a4aa0" stroke-width="1" opacity="0.8"/>
<path d="M105.9 -2.1 l1.3 0.7" stroke="#f0f0a0" stroke-width="1" opacity="0.8"/>
<path d="M95.3 9.5 l-0.5 -1.4" stroke="#80c0b0" stroke-width="1" opacity="0.8"/>
<path d="M104.2 -2.7 l1.4 0.4" stroke="#203070" stroke-width="1" opacity="0.8"/>
<path d="M96.0 13.0 l-1.1 -1.0" stroke="#203070" stroke-width="1" opacity="0.8"/>
<path d="M110.6 6.5 l0.1 1.5" stroke="#f0f0a0" stroke-width="1" opacity="0.8"/>
<path d="M110.6 1.7 l0.8 1.3" stroke="#f0f0a0" stroke-width="1" opacity="0.8"/>
<path d="M100.3 1.6 l1.5 -0.2" stroke="#203070" stroke-width="1" opacity="0.8"/>
<path d="M92.6 10.4 l-0.5 -1.4" stroke="#203070" stroke-width="1" opacity="0.8"/>
<path d="M109.5 0.5 l0.9 1.2" stroke="#50a080" stroke-width="1" opacity="0.8"/>
<path d="M107.5 14.4 l-1.1 1.0" stroke="#e8f070" stroke-width="1" opacity="0.8"/>
<path d="M94.9 10.7 l-0.7 -1.3" stroke="#d8e060" stroke-width="1" opacity="0.8"/>
<path d="M100.2 1.3 l1.5 -0.2" stroke="#80c0b0" stroke-width="1" opacity="0.8"/>
<path d="M94.8 9.9 l-0.6 -1.4" stroke="#2a4aa0" stroke-width="1" opacity="0.8"/>
<path d="M108.7 12.3 l-0.8 1.3" stroke="#203070" stroke-width="1" opacity="0.8"/>
<path d="M105.0 16.2 l-1.4 0.6" stroke="#2a4aa0" stroke-width="1" opacity="0.8"/>
<path d="M110.5 5.4 l0.3 1.5" stroke="#e8f070" stroke-width="1" opacity="0.8"/>
<path d="M96.8 15.4 l-1.3 -0.7" stroke="#e8f070" stroke-width="1" opacity="0.8"/>
<path d="M101.0 18.4 l-1.5 -0.0" stroke="#80c0b0" stroke-width="1" opacity="0.8"/>
<path d="M96.2 1.7 l1.1 -1.0" stroke="#e8f070" stroke-width="1" opacity="0.8"/>
<path d="M94.1 9.8 l-0.5 -1.4" stroke="#80c0b0" stroke-width="1" opacity="0.8"/>
<path d="M104.4 13.8 l-1.3 0.7" stroke="#50a080" stroke-width="1" opacity="0.8"/>
<path d="M107.7 16.5 l-1.2 0.9" stroke="#2a4aa0" stroke-width="1" opacity="0.8"/>
<path d="M100.7 16.3 l-1.5 -0.0" stroke="#2a4aa0" stroke-width="1" opacity="0.8"/>
<path d="M91.8 10.6 l-0.5 -1.4" stroke="#2a4aa0" stroke-width="1" opacity="0.8"/>
<path d="M100.4 15.4 l-1.5 -0.1" stroke="#50a080" stroke-width="1" opacity="0.8"/>
<path d="M104.3 13.1 l-1.3 0.8" stroke="#80c0b0" stroke-width="1" opacity="0.8"/>
<path d="M108.0 0.6 l1.1 1.1" stroke="#80c0b0" stroke-width="1" opacity="0.8"/>
<path d="M93.1 13.5 l-0.9 -1.2" stroke="#f0f0a0" stroke-width="1" opacity="0.8"/>
<path d="M107.8 -1.6 l1.2 0.9" stroke="#80c0b0" stroke-width="1" opacity="0.8"/>
<path d="M102.6 -3.3 l1.5 0.2" stroke="#f0f0a0" stroke-width="1" opacity="0.8"/>
<path d="M105.3 -0.8 l1.3 0.7" stroke="#80c0b0" stroke-width="1" opacity="0.8"/>
<path d="M109.5 6.2 l0.2 1.5" stroke="#d8e060" stroke-width="1" opacity="0.8"/>
<path d="M104.0 18.3 l-1.4 0.4" stroke="#203070" stroke-width="1" opacity="0.8"/>
<path d="M108.1 15.4 l-1.1 1.0" stroke="#2a4aa0" stroke-width="1" opacity="0.8"/>
<path d="M111.3 7.3 l0.0 1.5" stroke="#50a080" stroke-width="1" opacity="0.8"/>
<path d="M94.5 6.3 l0.2 -1.5" stroke="#80c0b0" stroke-width="1" opacity="0.8"/>
<path d="M94.0 -1.5 l1.2 -0.9" stroke="#203070" stroke-width="1" opacity="0.8"/>
<path d="M95.8 5.9 l0.4 -1.4" stroke="#d8e060" stroke-width="1" opacity="0.8"/>
<path d="M100.9 0.9 l1.5 -0.0" stroke="#2a4aa0" stroke-width="1" opacity="0.8"/>
<path d="M106.1 10.7 l-0.8 1.3" stroke="#2a4aa0" stroke-width="1" opacity="0.8"/>
<path d="M94.0 5.1 l0.5 -1.4" stroke="#80c0b0" stroke-width="1" opacity="0.8"/>
<path d="M111.3 6.5 l0.1 1.5" stroke="#203070" stroke-width="1" opacity="0.8"/>
<path d="M95.2 15.7 l-1.2 -0.9" stroke="#203070" stroke-width="1" opacity="0.8"/>
<path d="M110.3 10.7 l-0.5 1.4" stroke="#50a080" stroke-width="1" opacity="0.8"/>
<path d="M97.5 2.4 l1.2 -0.9" stroke="#e8f070" stroke-width="1" opacity="0.8"/>
<path d="M109.7 8.7 l-0.2 1.5" stroke="#203070" stroke-width="1" opacity="0.8"/>
<path d="M90.8 5.6 l0.3 -1.5" stroke="#50a080" stroke-width="1" opacity="0.8"/>
<path d="M105.3 2.5 l1.1 1.0" stroke="#f0f0a0" stroke-width="1" opacity="0.8"/>
<path d="M110.9 6.3 l0.2 1.5" stroke="#2a4aa0" stroke-width="1" opacity="0.8"/>
<path d="M90.9 10.4 l-0.4 -1.4" stroke="#2a4aa0" stroke-width="1" opacity="0.8"/>
<path d="M100.6 17.9 l-1.5 -0.1" stroke="#e8f070" stroke-width="1" opacity="0.8"/>
<path d="M92.9 13.4 l-0.9 -1.2" stroke="#203070" stroke-width="1" opacity="0.8"/>
<path d="M106.5 2.8 l1.0 1.1" stroke="#e8f070" stroke-width="1" opacity="0.8"/>
<path d="M100.8 -3.7 l1.5 -0.0" stroke="#203070" stroke-width="1" opacity="0.8"/>
<path d="M110.2 6.2 l0.2 1.5" stroke="#d8e060" stroke-width="1" opacity="0.8"/>
<path d="M97.8 13.7 l-1.3 -0.7" stroke="#50a080" stroke-width="1" opacity="0.8"/>
<path d="M110.7 13.3 l-0.8 1.3" stroke="#e8f070" stroke-width="1" opacity="0.8"/>
<path d="M107.6 11.3 l-0.8 1.3" stroke="#50a080" stroke-width="1" opacity="0.8"/>
<path d="M104.1 14.8 l-1.4 0.6" stroke="#2a4aa0" stroke-width="1" opacity="0.8"/>
<path d="M101.1 13.8 l-1.5 0.0" stroke="#d8e060" stroke-width="1" opacity="0.8"/>
<path d="M109.2 5.3 l0.4 1.5" stroke="#2a4aa0" stroke-width="1" opacity="0.8"/>
<path d="M105.6 17.0 l-1.4 0.6" stroke="#e8f070" stroke-width="1" opacity="0.8"/>
<path d="M95.7 5.6 l0.5 -1.4" stroke="#2a4aa0" stroke-width="1" opacity="0.8"/>
<path d="M92.8 6.7 l0.1 -1.5" stroke="#50a080" stroke-width="1" opacity="0.8"/>
<path d="M108.5 5.0 l0.5 1.4" stroke="#50a080" stroke-width="1" opacity="0.8"/>
<path d="M95.5 8.5 l-0.3 -1.5" stroke="#203070" stroke-width="1" opacity="0.8"/>
<path d="M109.0 12.2 l-0.8 1.3" stroke="#203070" stroke-width="1" opacity="0.8"/>
<path d="M106.6 14.5 l-1.2 0.9" stroke="#203070" stroke-width="1" opacity="0.8"/>
<path d="M103.9 14.0 l-1.4 0.6" stroke="#203070" stroke-width="1" opacity="0.8"/>
<path d="M106.7 -0.3 l1.2 0.9" stroke="#e8f070" stroke-width="1" opacity="0.8"/>
<path d="M94.7 7.1 l0.1 -1.5" stroke="#f0f0a0" stroke-width="1" opacity="0.8"/>
<path d="M95.9 0.4 l1.2 -0.9" stroke="#2a4aa0" stroke-width="1" opacity="0.8"/>
<path d="M98.4 13.0 l-1.4 -0.6" stroke="#80c0b0" stroke-width="1" opacity="0.8"/>
<path d="M94.9 9.6 l-0.5 -1.4" stroke="#2a4aa0" stroke-width="1" opacity="0.8"/>
<path d="M94.5 13.2 l-1.0 -1.1" stroke="#50a080" stroke-width="1" opacity="0.8"/>
<path d="M101.5 15.0 l-1.5 0.1" stroke="#203070" stroke-width="1" opacity="0.8"/>
<path d="M107.3 11.3 l-0.8 1.3" stroke="#f0f0a0" stroke-width="1" opacity="0.8"/>
<path d="M108.2 -0.8 l1.1 1.0" stroke="#203070" stroke-width="1" opacity="0.8"/>
<path d="M101.1 -1.3 l1.5 0.0" stroke="#d8e060" stroke-width="1" opacity="0.8"/>
<path d="M95.5 4.7 l0.7 -1.3" stroke="#2a4aa0" stroke-width="1" opacity="0.8"/>
<path d="M96.1 3.4 l1.0 -1.2" stroke="#2a4aa0" stroke-width="1" opacity="0.8"/>
<path d="M97.6 14.5 l-1.3 -0.7" stroke="#50a080" stroke-width="1" opacity="0.8"/>
<path d="M106.3 11.1 l-0.9 1.2" stroke="#203070" stroke-width="1" opacity="0.8"/>
<path d="M91.2 12.6 l-0.7 -1.3" stroke="#2a4aa0" stroke-width="1" opacity="0.8"/>
<path d="M98.4 13.1 l-1.4 -0.6" stroke="#203070" stroke-width="1" opacity="0.8"/>
<path d="M100.1 13.5 l-1.5 -0.2" stroke="#2a4aa0" stroke-width="1" opacity="0.8"/>
<path d="M97.5 12.7 l-1.3 -0.8" stroke="#203070" stroke-width="1" opacity="0.8"/>
<path d="M92.0 9.9 l-0.4 -1.4" stroke="#e8f070" stroke-width="1" opacity="0.8"/>
<path d="M97.1 13.6 l-1.3 -0.8" stroke="#50a080" stroke-width="1" opacity="0.8"/>
<path d="M106.9 11.7 l-0.9 1.2" stroke="#e8f070" stroke-width="1" opacity="0.8"/>
<path d="M95.2 15.0 l-1.2 -0.9" stroke="#f0f0a0" stroke-width="1" opacity="0.8"/>
<path d="M98.0 0.5 l1.4 -0.6" stroke="#50a080" stroke-width="1" opacity="0.8"/>
<circle cx="124" cy="13.6" r="9.5" fill="url(#st3)"/>
<path d="M118.4 11.6 l0.5 -1.4" stroke="#2a4aa0" stroke-width="1" opacity="0.8"/>
<path d="M127.0 17.1 l-1.1 1.0" stroke="#203070" stroke-width="1" opacity="0.8"/>
<path d="M122.4 18.0 l-1.4 -0.5" stroke="#80c0b0" stroke-width="1" opacity="0.8"/>
<path d="M120.5 8.3 l1.2 -0.8" stroke="#e8f070" stroke-width="1" opacity="0.8"/>
<path d="M126.5 7.3 l1.4 0.6" stroke="#50a080" stroke-width="1" opacity="0.8"/>
<path d="M128.4 11.0 l0.7 1.3" stroke="#50a080" stroke-width="1" opacity="0.8"/>
<path d="M119.2 12.4 l0.4 -1.5" stroke="#80c0b0" stroke-width="1" opacity="0.8"/>
<path d="M127.9 16.6 l-0.9 1.2" stroke="#d8e060" stroke-width="1" opacity="0.8"/>
<path d="M117.2 16.2 l-0.5 -1.4" stroke="#203070" stroke-width="1" opacity="0.8"/>
<path d="M120.9 5.5 l1.4 -0.5" stroke="#e8f070" stroke-width="1" opacity="0.8"/>
<path d="M125.2 21.2 l-1.5 0.2" stroke="#203070" stroke-width="1" opacity="0.8"/>
<path d="M124.9 8.7 l1.5 0.3" stroke="#50a080" stroke-width="1" opacity="0.8"/>
<path d="M127.6 10.2 l1.0 1.1" stroke="#203070" stroke-width="1" opacity="0.8"/>
<path d="M115.6 12.1 l0.3 -1.5" stroke="#d8e060" stroke-width="1" opacity="0.8"/>
<path d="M116.1 9.5 l0.7 -1.3" stroke="#203070" stroke-width="1" opacity="0.8"/>
<path d="M122.5 22.3 l-1.5 -0.3" stroke="#203070" stroke-width="1" opacity="0.8"/>
<path d="M124.6 19.3 l-1.5 0.2" stroke="#50a080" stroke-width="1" opacity="0.8"/>
<path d="M123.2 7.1 l1.5 -0.2" stroke="#203070" stroke-width="1" opacity="0.8"/>
<path d="M130.2 15.0 l-0.3 1.5" stroke="#80c0b0" stroke-width="1" opacity="0.8"/>
<path d="M121.4 7.7 l1.4 -0.6" stroke="#50a080" stroke-width="1" opacity="0.8"/>
<path d="M118.0 9.3 l0.9 -1.2" stroke="#2a4aa0" stroke-width="1" opacity="0.8"/>
<path d="M128.2 12.5 l0.4 1.5" stroke="#d8e060" stroke-width="1" opacity="0.8"/>
<path d="M122.1 7.0 l1.4 -0.4" stroke="#50a080" stroke-width="1" opacity="0.8"/>
<path d="M127.5 18.3 l-1.2 0.9" stroke="#d8e060" stroke-width="1" opacity="0.8"/>
<path d="M126.9 8.2 l1.3 0.7" stroke="#50a080" stroke-width="1" opacity="0.8"/>
<path d="M131.4 13.3 l0.1 1.5" stroke="#e8f070" stroke-width="1" opacity="0.8"/>
<path d="M129.6 10.3 l0.8 1.3" stroke="#e8f070" stroke-width="1" opacity="0.8"/>
<path d="M118.7 11.1 l0.6 -1.4" stroke="#2a4aa0" stroke-width="1" opacity="0.8"/>
<path d="M119.9 7.5 l1.2 -0.8" stroke="#f0f0a0" stroke-width="1" opacity="0.8"/>
<path d="M130.9 9.1 l0.8 1.3" stroke="#50a080" stroke-width="1" opacity="0.8"/>
<path d="M130.4 10.7 l0.6 1.4" stroke="#50a080" stroke-width="1" opacity="0.8"/>
<path d="M119.3 10.0 l0.9 -1.2" stroke="#203070" stroke-width="1" opacity="0.8"/>
<path d="M131.4 11.5 l0.4 1.4" stroke="#203070" stroke-width="1" opacity="0.8"/>
<path d="M118.3 16.2 l-0.6 -1.4" stroke="#50a080" stroke-width="1" opacity="0.8"/>
<path d="M121.2 17.6 l-1.2 -0.8" stroke="#f0f0a0" stroke-width="1" opacity="0.8"/>
<path d="M130.5 10.0 l0.7 1.3" stroke="#80c0b0" stroke-width="1" opacity="0.8"/>
<path d="M129.1 12.2 l0.4 1.4" stroke="#80c0b0" stroke-width="1" opacity="0.8"/>
<path d="M120.6 18.8 l-1.3 -0.8" stroke="#2a4aa0" stroke-width="1" opacity="0.8"/>
<path d="M130.4 16.0 l-0.5 1.4" stroke="#2a4aa0" stroke-width="1" opacity="0.8"/>
<path d="M131.0 9.7 l0.7 1.3" stroke="#f0f0a0" stroke-width="1" opacity="0.8"/>
<path d="M119.3 10.3 l0.9 -1.2" stroke="#d8e060" stroke-width="1" opacity="0.8"/>
<path d="M117.5 10.3 l0.7 -1.3" stroke="#80c0b0" stroke-width="1" opacity="0.8"/>
<path d="M117.6 14.8 l-0.3 -1.5" stroke="#2a4aa0" stroke-width="1" opacity="0.8"/>
<path d="M120.1 16.4 l-0.9 -1.2" stroke="#50a080" stroke-width="1" opacity="0.8"/>
<path d="M120.8 20.1 l-1.3 -0.7" stroke="#50a080" stroke-width="1" opacity="0.8"/>
<path d="M130.0 7.9 l1.0 1.1" stroke="#203070" stroke-width="1" opacity="0.8"/>
<path d="M131.7 10.2 l0.6 1.4" stroke="#80c0b0" stroke-width="1" opacity="0.8"/>
<path d="M123.0 21.3 l-1.5 -0.2" stroke="#50a080" stroke-width="1" opacity="0.8"/>
<path d="M127.3 16.4 l-1.0 1.1" stroke="#2a4aa0" stroke-width="1" opacity="0.8"/>
<path d="M129.3 10.5 l0.8 1.3" stroke="#203070" stroke-width="1" opacity="0.8"/>
<path d="M130.3 19.0 l-1.0 1.1" stroke="#2a4aa0" stroke-width="1" opacity="0.8"/>
<path d="M120.3 20.3 l-1.3 -0.7" stroke="#203070" stroke-width="1" opacity="0.8"/>
<path d="M122.3 18.4 l-1.4 -0.5" stroke="#e8f070" stroke-width="1" opacity="0.8"/>
<path d="M117.1 9.2 l0.8 -1.3" stroke="#e8f070" stroke-width="1" opacity="0.8"/>
<path d="M115.3 15.7 l-0.4 -1.5" stroke="#2a4aa0" stroke-width="1" opacity="0.8"/>
<path d="M132.7 12.7 l0.2 1.5" stroke="#e8f070" stroke-width="1" opacity="0.8"/>
<path d="M129.3 13.7 l-0.0 1.5" stroke="#f0f0a0" stroke-width="1" opacity="0.8"/>
<path d="M115.4 11.7 l0.3 -1.5" stroke="#2a4aa0" stroke-width="1" opacity="0.8"/>
<path d="M119.5 12.6 l0.3 -1.5" stroke="#50a080" stroke-width="1" opacity="0.8"/>
<path d="M123.4 20.5 l-1.5 -0.1" stroke="#2a4aa0" stroke-width="1" opacity="0.8"/>
<path d="M130.2 16.7 l-0.7 1.3" stroke="#d8e060" stroke-width="1" opacity="0.8"/>
<path d="M132.0 10.8 l0.5 1.4" stroke="#2a4aa0" stroke-width="1" opacity="0.8"/>
<path d="M130.7 9.4 l0.8 1.3" stroke="#2a4aa0" stroke-width="1" opacity="0.8"/>
<path d="M116.4 18.0 l-0.8 -1.3" stroke="#2a4aa0" stroke-width="1" opacity="0.8"/>
<path d="M128.5 14.1 l-0.2 1.5" stroke="#e8f070" stroke-width="1" opacity="0.8"/>
<path d="M124.6 21.2 l-1.5 0.1" stroke="#d8e060" stroke-width="1" opacity="0.8"/>
<path d="M117.1 15.4 l-0.4 -1.4" stroke="#2a4aa0" stroke-width="1" opacity="0.8"/>
<path d="M130.8 16.9 l-0.7 1.4" stroke="#2a4aa0" stroke-width="1" opacity="0.8"/>
<path d="M131.2 18.7 l-0.9 1.2" stroke="#d8e060" stroke-width="1" opacity="0.8"/>
<path d="M132.1 13.5 l0.0 1.5" stroke="#f0f0a0" stroke-width="1" opacity="0.8"/>
<path d="M118.9 15.3 l-0.5 -1.4" stroke="#80c0b0" stroke-width="1" opacity="0.8"/>
<path d="M130.1 10.6 l0.7 1.3" stroke="#2a4aa0" stroke-width="1" opacity="0.8"/>
<path d="M129.4 11.3 l0.6 1.4" stroke="#203070" stroke-width="1" opacity="0.8"/>
<path d="M123.1 6.2 l1.5 -0.2" stroke="#203070" stroke-width="1" opacity="0.8"/>
<path d="M124.0 20.8 l-1.5 -0.0" stroke="#50a080" stroke-width="1" opacity="0.8"/>
<path d="M127.0 9.4 l1.2 0.9" stroke="#203070" stroke-width="1" opacity="0.8"/>
<path d="M130.8 12.7 l0.2 1.5" stroke="#203070" stroke-width="1" opacity="0.8"/>
<path d="M119.6 11.3 l0.7 -1.3" stroke="#203070" stroke-width="1" opacity="0.8"/>
<path d="M119.2 15.5 l-0.6 -1.4" stroke="#f0f0a0" stroke-width="1" opacity="0.8"/>
<path d="M127.2 8.9 l1.2 0.9" stroke="#80c0b0" stroke-width="1" opacity="0.8"/>
<path d="M128.7 13.7 l-0.0 1.5" stroke="#d8e060" stroke-width="1" opacity="0.8"/>
<path d="M119.3 12.2 l0.4 -1.4" stroke="#f0f0a0" stroke-width="1" opacity="0.8"/>
<path d="M127.0 5.8 l1.4 0.5" stroke="#d8e060" stroke-width="1" opacity="0.8"/>
<path d="M126.0 17.4 l-1.3 0.7" stroke="#203070" stroke-width="1" opacity="0.8"/>
<path d="M132.2 15.0 l-0.3 1.5" stroke="#2a4aa0" stroke-width="1" opacity="0.8"/>
<circle cx="192" cy="21" r="17" fill="url(#st1)"/>
<path d="M203.2 22.3 l-0.2 1.5" stroke="#80c0b0" stroke-width="1" opacity="0.8"/>
<path d="M192.4 29.5 l-1.5 0.1" stroke="#f0f0a0" stroke-width="1" opacity="0.8"/>
<path d="M194.1 29.0 l-1.5 0.4" stroke="#d8e060" stroke-width="1" opacity="0.8"/>
<path d="M193.2 30.5 l-1.5 0.2" stroke="#e8f070" stroke-width="1" opacity="0.8"/>
<path d="M177.1 27.0 l-0.6 -1.4" stroke="#2a4aa0" stroke-width="1" opacity="0.8"/>
<path d="M177.2 27.4 l-0.6 -1.4" stroke="#80c0b0" stroke-width="1" opacity="0.8"/>
<path d="M195.3 9.8 l1.4 0.4" stroke="#80c0b0" stroke-width="1" opacity="0.8"/>
<path d="M185.5 33.9 l-1.3 -0.7" stroke="#80c0b0" stroke-width="1" opacity="0.8"/>
<path d="M178.9 18.0 l0.3 -1.5" stroke="#e8f070" stroke-width="1" opacity="0.8"/>
<path d="M177.2 25.5 l-0.4 -1.4" stroke="#e8f070" stroke-width="1" opacity="0.8"/>
<path d="M200.7 25.3 l-0.7 1.3" stroke="#203070" stroke-width="1" opacity="0.8"/>
<path d="M186.0 27.4 l-1.1 -1.0" stroke="#50a080" stroke-width="1" opacity="0.8"/>
<path d="M187.0 11.0 l1.3 -0.7" stroke="#f0f0a0" stroke-width="1" opacity="0.8"/>
<path d="M185.7 27.1 l-1.0 -1.1" stroke="#203070" stroke-width="1" opacity="0.8"/>
<path d="M183.8 25.3 l-0.7 -1.3" stroke="#f0f0a0" stroke-width="1" opacity="0.8"/>
<path d="M190.0 29.2 l-1.5 -0.4" stroke="#50a080" stroke-width="1" opacity="0.8"/>
<path d="M204.4 20.6 l0.1 1.5" stroke="#2a4aa0" stroke-width="1" opacity="0.8"/>
<path d="M183.2 30.1 l-1.1 -1.0" stroke="#203070" stroke-width="1" opacity="0.8"/>
<path d="M191.3 11.3 l1.5 -0.1" stroke="#d8e060" stroke-width="1" opacity="0.8"/>
<path d="M198.1 7.4 l1.4 0.6" stroke="#50a080" stroke-width="1" opacity="0.8"/>
<path d="M202.5 16.7 l0.6 1.4" stroke="#d8e060" stroke-width="1" opacity="0.8"/>
<path d="M194.1 12.4 l1.5 0.4" stroke="#80c0b0" stroke-width="1" opacity="0.8"/>
<path d="M183.0 34.2 l-1.2 -0.8" stroke="#e8f070" stroke-width="1" opacity="0.8"/>
<path d="M199.8 24.7 l-0.6 1.4" stroke="#80c0b0" stroke-width="1" opacity="0.8"/>
<path d="M191.6 8.0 l1.5 -0.0" stroke="#d8e060" stroke-width="1" opacity="0.8"/>
<path d="M181.1 23.2 l-0.3 -1.5" stroke="#50a080" stroke-width="1" opacity="0.8"/>
<path d="M203.0 23.6 l-0.3 1.5" stroke="#e8f070" stroke-width="1" opacity="0.8"/>
<path d="M207.6 19.5 l0.1 1.5" stroke="#80c0b0" stroke-width="1" opacity="0.8"/>
<path d="M196.4 35.3 l-1.4 0.4" stroke="#f0f0a0" stroke-width="1" opacity="0.8"/>
<path d="M187.7 29.4 l-1.3 -0.7" stroke="#d8e060" stroke-width="1" opacity="0.8"/>
<path d="M183.1 12.6 l1.0 -1.1" stroke="#2a4aa0" stroke-width="1" opacity="0.8"/>
<path d="M196.6 35.6 l-1.4 0.4" stroke="#80c0b0" stroke-width="1" opacity="0.8"/>
<path d="M205.4 17.2 l0.4 1.4" stroke="#203070" stroke-width="1" opacity="0.8"/>
<path d="M184.0 21.0 l0.0 -1.5" stroke="#2a4aa0" stroke-width="1" opacity="0.8"/>
<path d="M205.6 22.2 l-0.1 1.5" stroke="#e8f070" stroke-width="1" opacity="0.8"/>
<path d="M207.6 23.4 l-0.2 1.5" stroke="#50a080" stroke-width="1" opacity="0.8"/>
<path d="M199.2 9.0 l1.3 0.8" stroke="#2a4aa0" stroke-width="1" opacity="0.8"/>
<path d="M207.4 20.1 l0.1 1.5" stroke="#d8e060" stroke-width="1" opacity="0.8"/>
<path d="M190.8 7.5 l1.5 -0.1" stroke="#80c0b0" stroke-width="1" opacity="0.8"/>
<path d="M184.3 16.3 l0.8 -1.3" stroke="#203070" stroke-width="1" opacity="0.8"/>
<path d="M186.0 9.5 l1.3 -0.7" stroke="#2a4aa0" stroke-width="1" opacity="0.8"/>
<path d="M179.2 14.9 l0.6 -1.4" stroke="#203070" stroke-width="1" opacity="0.8"/>
<path d="M184.3 19.4 l0.3 -1.5" stroke="#2a4aa0" stroke-width="1" opacity="0.8"/>
<path d="M198.1 16.1 l0.9 1.2" stroke="#203070" stroke-width="1" opacity="0.8"/>
<path d="M207.2 18.9 l0.2 1.5" stroke="#203070" stroke-width="1" opacity="0.8"/>
<path d="M194.7 9.2 l1.5 0.3" stroke="#203070" stroke-width="1" opacity="0.8"/>
<path d="M202.6 29.9 l-1.0 1.1" stroke="#203070" stroke-width="1" opacity="0.8"/>
<path d="M196.4 13.8 l1.3 0.8" stroke="#e8f070" stroke-width="1" opacity="0.8"/>
<path d="M190.7 31.9 l-1.5 -0.2" stroke="#203070" stroke-width="1" opacity="0.8"/>
<path d="M179.3 18.5 l0.3 -1.5" stroke="#80c0b0" stroke-width="1" opacity="0.8"/>
<path d="M184.4 26.8 l-0.9 -1.2" stroke="#d8e060" stroke-width="1" opacity="0.8"/>
<path d="M188.5 27.8 l-1.3 -0.7" stroke="#50a080" stroke-width="1" opacity="0.8"/>
<path d="M179.8 28.2 l-0.8 -1.3" stroke="#203070" stroke-width="1" opacity="0.8"/>
<path d="M183.8 17.3 l0.6 -1.4" stroke="#50a080" stroke-width="1" opacity="0.8"/>
<path d="M194.4 5.7 l1.5 0.2" stroke="#e8f070" stroke-width="1" opacity="0.8"/>
<path d="M204.2 27.9 l-0.7 1.3" stroke="#80c0b0" stroke-width="1" opacity="0.8"/>
<path d="M199.4 35.3 l-1.3 0.7" stroke="#f0f0a0" stroke-width="1" opacity="0.8"/>
<path d="M200.1 20.4 l0.1 1.5" stroke="#f0f0a0" stroke-width="1" opacity="0.8"/>
<path d="M186.0 10.7 l1.3 -0.8" stroke="#203070" stroke-width="1" opacity="0.8"/>
<path d="M178.4 21.3 l-0.0 -1.5" stroke="#50a080" stroke-width="1" opacity="0.8"/>
<path d="M201.4 21.4 l-0.1 1.5" stroke="#f0f0a0" stroke-width="1" opacity="0.8"/>
<path d="M195.1 32.0 l-1.4 0.4" stroke="#80c0b0" stroke-width="1" opacity="0.8"/>
<path d="M186.6 34.8 l-1.4 -0.5" stroke="#d8e060" stroke-width="1" opacity="0.8"/>
<path d="M184.7 27.2 l-1.0 -1.1" stroke="#50a080" stroke-width="1" opacity="0.8"/>
<path d="M185.7 26.6 l-1.0 -1.1" stroke="#e8f070" stroke-width="1" opacity="0.8"/>
<path d="M188.7 29.1 l-1.4 -0.6" stroke="#e8f070" stroke-width="1" opacity="0.8"/>
<path d="M197.5 14.7 l1.1 1.0" stroke="#d8e060" stroke-width="1" opacity="0.8"/>
<path d="M185.0 14.7 l1.0 -1.1" stroke="#d8e060" stroke-width="1" opacity="0.8"/>
<path d="M202.7 31.7 l-1.1 1.1" stroke="#50a080" stroke-width="1" opacity="0.8"/>
<path d="M193.8 33.3 l-1.5 0.2" stroke="#f0f0a0" stroke-width="1" opacity="0.8"/>
<path d="M192.7 31.6 l-1.5 0.1" stroke="#d8e060" stroke-width="1" opacity="0.8"/>
<path d="M200.6 11.2 l1.1 1.0" stroke="#80c0b0" stroke-width="1" opacity="0.8"/>
<path d="M177.0 26.0 l-0.5 -1.4" stroke="#f0f0a0" stroke-width="1" opacity="0.8"/>
<path d="M201.5 24.7 l-0.5 1.4" stroke="#50a080" stroke-width="1" opacity="0.8"/>
<path d="M193.4 31.1 l-1.5 0.2" stroke="#50a080" stroke-width="1" opacity="0.8"/>
<path d="M185.6 10.2 l1.3 -0.8" stroke="#203070" stroke-width="1" opacity="0.8"/>
<path d="M194.4 10.5 l1.5 0.3" stroke="#e8f070" stroke-width="1" opacity="0.8"/>
<path d="M190.8 8.8 l1.5 -0.2" stroke="#d8e060" stroke-width="1" opacity="0.8"/>
<path d="M198.0 27.1 l-1.1 1.1" stroke="#80c0b0" stroke-width="1" opacity="0.8"/>
<path d="M190.7 8.0 l1.5 -0.1" stroke="#203070" stroke-width="1" opacity="0.8"/>
<path d="M203.8 22.5 l-0.2 1.5" stroke="#e8f070" stroke-width="1" opacity="0.8"/>
<path d="M181.6 18.2 l0.4 -1.4" stroke="#203070" stroke-width="1" opacity="0.8"/>
<path d="M194.1 28.4 l-1.4 0.4" stroke="#2a4aa0" stroke-width="1" opacity="0.8"/>
<path d="M186.1 7.3 l1.4 -0.6" stroke="#80c0b0" stroke-width="1" opacity="0.8"/>
<path d="M182.8 26.5 l-0.8 -1.3" stroke="#2a4aa0" stroke-width="1" opacity="0.8"/>
<path d="M199.2 30.5 l-1.2 0.9" stroke="#2a4aa0" stroke-width="1" opacity="0.8"/>
<path d="M191.1 9.2 l1.5 -0.1" stroke="#e8f070" stroke-width="1" opacity="0.8"/>
<path d="M187.1 14.2 l1.2 -0.9" stroke="#f0f0a0" stroke-width="1" opacity="0.8"/>
<path d="M182.9 23.5 l-0.4 -1.4" stroke="#203070" stroke-width="1" opacity="0.8"/>
<path d="M183.2 21.9 l-0.2 -1.5" stroke="#50a080" stroke-width="1" opacity="0.8"/>
<path d="M176.6 25.6 l-0.4 -1.4" stroke="#e8f070" stroke-width="1" opacity="0.8"/>
<path d="M186.6 32.7 l-1.4 -0.6" stroke="#d8e060" stroke-width="1" opacity="0.8"/>
<path d="M196.7 32.9 l-1.4 0.6" stroke="#203070" stroke-width="1" opacity="0.8"/>
<path d="M186.1 26.7 l-1.0 -1.1" stroke="#e8f070" stroke-width="1" opacity="0.8"/>
<path d="M196.2 32.8 l-1.4 0.5" stroke="#203070" stroke-width="1" opacity="0.8"/>
<path d="M198.9 16.3 l0.8 1.2" stroke="#203070" stroke-width="1" opacity="0.8"/>
<path d="M200.5 28.6 l-1.0 1.1" stroke="#e8f070" stroke-width="1" opacity="0.8"/>
<path d="M196.6 35.2 l-1.4 0.5" stroke="#203070" stroke-width="1" opacity="0.8"/>
<path d="M206.6 14.5 l0.6 1.4" stroke="#2a4aa0" stroke-width="1" opacity="0.8"/>
<path d="M201.1 17.1 l0.6 1.4" stroke="#50a080" stroke-width="1" opacity="0.8"/>
<path d="M200.3 28.5 l-1.0 1.1" stroke="#2a4aa0" stroke-width="1" opacity="0.8"/>
<path d="M185.7 26.8 l-1.0 -1.1" stroke="#203070" stroke-width="1" opacity="0.8"/>
<path d="M183.1 19.3 l0.3 -1.5" stroke="#203070" stroke-width="1" opacity="0.8"/>
<path d="M189.7 33.9 l-1.5 -0.3" stroke="#d8e060" stroke-width="1" opacity="0.8"/>
<path d="M201.0 32.1 l-1.2 0.9" stroke="#d8e060" stroke-width="1" opacity="0.8"/>
<path d="M192.1 11.6 l1.5 0.0" stroke="#50a080" stroke-width="1" opacity="0.8"/>
<path d="M201.0 18.2 l0.4 1.4" stroke="#80c0b0" stroke-width="1" opacity="0.8"/>
<path d="M197.0 27.6 l-1.2 0.9" stroke="#2a4aa0" stroke-width="1" opacity="0.8"/>
<path d="M188.4 11.3 l1.4 -0.5" stroke="#d8e060" stroke-width="1" opacity="0.8"/>
<path d="M200.1 26.0 l-0.8 1.3" stroke="#50a080" stroke-width="1" opacity="0.8"/>
<path d="M199.0 17.6 l0.6 1.4" stroke="#d8e060" stroke-width="1" opacity="0.8"/>
<path d="M202.4 27.9 l-0.8 1.2" stroke="#50a080" stroke-width="1" opacity="0.8"/>
<path d="M192.3 12.5 l1.5 0.0" stroke="#2a4aa0" stroke-width="1" opacity="0.8"/>
<path d="M192.8 33.6 l-1.5 0.1" stroke="#50a080" stroke-width="1" opacity="0.8"/>
<path d="M202.5 18.5 l0.3 1.5" stroke="#d8e060" stroke-width="1" opacity="0.8"/>
<path d="M183.1 27.9 l-0.9 -1.2" stroke="#50a080" stroke-width="1" opacity="0.8"/>
<path d="M205.5 20.8 l0.0 1.5" stroke="#80c0b0" stroke-width="1" opacity="0.8"/>
<path d="M193.5 8.9 l1.5 0.2" stroke="#d8e060" stroke-width="1" opacity="0.8"/>
<path d="M196.9 6.3 l1.4 0.5" stroke="#e8f070" stroke-width="1" opacity="0.8"/>
<path d="M205.9 18.4 l0.3 1.5" stroke="#80c0b0" stroke-width="1" opacity="0.8"/>
<path d="M197.7 30.5 l-1.3 0.8" stroke="#80c0b0" stroke-width="1" opacity="0.8"/>
<path d="M181.4 25.9 l-0.6 -1.4" stroke="#d8e060" stroke-width="1" opacity="0.8"/>
<path d="M189.0 9.6 l1.5 -0.4" stroke="#f0f0a0" stroke-width="1" opacity="0.8"/>
<path d="M183.5 26.2 l-0.8 -1.3" stroke="#2a4aa0" stroke-width="1" opacity="0.8"/>
<path d="M208.1 20.0 l0.1 1.5" stroke="#203070" stroke-width="1" opacity="0.8"/>
<path d="M191.0 7.4 l1.5 -0.1" stroke="#203070" stroke-width="1" opacity="0.8"/>
<path d="M176.4 21.4 l-0.0 -1.5" stroke="#f0f0a0" stroke-width="1" opacity="0.8"/>
<path d="M180.1 21.2 l-0.0 -1.5" stroke="#d8e060" stroke-width="1" opacity="0.8"/>
<path d="M180.0 23.3 l-0.3 -1.5" stroke="#2a4aa0" stroke-width="1" opacity="0.8"/>
<path d="M188.4 32.3 l-1.4 -0.5" stroke="#e8f070" stroke-width="1" opacity="0.8"/>
<path d="M200.2 24.9 l-0.6 1.4" stroke="#f0f0a0" stroke-width="1" opacity="0.8"/>
<path d="M203.5 18.8 l0.3 1.5" stroke="#2a4aa0" stroke-width="1" opacity="0.8"/>
<path d="M181.2 18.9 l0.3 -1.5" stroke="#80c0b0" stroke-width="1" opacity="0.8"/>
<path d="M179.5 24.3 l-0.4 -1.4" stroke="#e8f070" stroke-width="1" opacity="0.8"/>
<path d="M201.9 19.1 l0.3 1.5" stroke="#2a4aa0" stroke-width="1" opacity="0.8"/>
<path d="M193.9 10.8 l1.5 0.3" stroke="#f0f0a0" stroke-width="1" opacity="0.8"/>
<path d="M177.6 21.6 l-0.1 -1.5" stroke="#e8f070" stroke-width="1" opacity="0.8"/>
<path d="M201.4 33.8 l-1.2 0.9" stroke="#2a4aa0" stroke-width="1" opacity="0.8"/>
<path d="M193.6 31.3 l-1.5 0.2" stroke="#80c0b0" stroke-width="1" opacity="0.8"/>
<path d="M203.1 18.6 l0.3 1.5" stroke="#50a080" stroke-width="1" opacity="0.8"/>
<path d="M184.1 20.0 l0.2 -1.5" stroke="#50a080" stroke-width="1" opacity="0.8"/>
<path d="M179.8 12.8 l0.8 -1.2" stroke="#2a4aa0" stroke-width="1" opacity="0.8"/>
<path d="M186.9 8.2 l1.4 -0.6" stroke="#80c0b0" stroke-width="1" opacity="0.8"/>
<path d="M179.7 18.3 l0.3 -1.5" stroke="#e8f070" stroke-width="1" opacity="0.8"/>
<path d="M200.3 15.0 l0.9 1.2" stroke="#f0f0a0" stroke-width="1" opacity="0.8"/>
<path d="M185.7 13.1 l1.2 -0.9" stroke="#50a080" stroke-width="1" opacity="0.8"/>
<path d="M185.2 28.3 l-1.1 -1.0" stroke="#80c0b0" stroke-width="1" opacity="0.8"/>
<path d="M193.7 30.8 l-1.5 0.3" stroke="#f0f0a0" stroke-width="1" opacity="0.8"/>
<path d="M191.4 8.7 l1.5 -0.1" stroke="#80c0b0" stroke-width="1" opacity="0.8"/>
<path d="M177.3 23.9 l-0.3 -1.5" stroke="#f0f0a0" stroke-width="1" opacity="0.8"/>
<path d="M178.5 20.5 l0.1 -1.5" stroke="#2a4aa0" stroke-width="1" opacity="0.8"/>
<path d="M194.3 12.7 l1.4 0.4" stroke="#e8f070" stroke-width="1" opacity="0.8"/>
<path d="M182.9 32.4 l-1.2 -0.9" stroke="#f0f0a0" stroke-width="1" opacity="0.8"/>
<circle cx="295" cy="42" r="42" fill="url(#halo)"/>
<path d="M329.1 60.3 l-1.4 2.6" stroke="#80b8a0" stroke-width="1.1" opacity="0.8"/>
<path d="M293.8 66.8 l-3.0 -0.1" stroke="#fff8a0" stroke-width="1.1" opacity="0.8"/>
<path d="M321.5 68.9 l-2.1 2.1" stroke="#c8e070" stroke-width="1.1" opacity="0.8"/>
<path d="M260.7 24.8 l1.3 -2.7" stroke="#c8e070" stroke-width="1.1" opacity="0.8"/>
<path d="M299.3 68.7 l-3.0 0.5" stroke="#f8f080" stroke-width="1.1" opacity="0.8"/>
<path d="M316.0 58.9 l-1.9 2.3" stroke="#e8d850" stroke-width="1.1" opacity="0.8"/>
<path d="M289.8 10.8 l3.0 -0.5" stroke="#3a60a0" stroke-width="1.1" opacity="0.8"/>
<path d="M289.9 65.5 l-2.9 -0.6" stroke="#fff8a0" stroke-width="1.1" opacity="0.8"/>
<path d="M276.0 29.1 l1.7 -2.5" stroke="#e8d850" stroke-width="1.1" opacity="0.8"/>
<path d="M308.6 64.8 l-2.6 1.5" stroke="#f8f080" stroke-width="1.1" opacity="0.8"/>
<path d="M265.7 15.7 l2.0 -2.2" stroke="#e0e060" stroke-width="1.1" opacity="0.8"/>
<path d="M309.8 58.5 l-2.2 2.0" stroke="#f8f080" stroke-width="1.1" opacity="0.8"/>
<path d="M288.6 10.4 l2.9 -0.6" stroke="#80b8a0" stroke-width="1.1" opacity="0.8"/>
<path d="M286.3 80.7 l-2.9 -0.7" stroke="#f8f080" stroke-width="1.1" opacity="0.8"/>
<path d="M331.0 22.9 l1.4 2.6" stroke="#f8f080" stroke-width="1.1" opacity="0.8"/>
<path d="M298.3 68.6 l-3.0 0.4" stroke="#f8f080" stroke-width="1.1" opacity="0.8"/>
<path d="M293.5 78.1 l-3.0 -0.1" stroke="#f8f080" stroke-width="1.1" opacity="0.8"/>
<path d="M315.4 66.2 l-2.3 1.9" stroke="#c8e070" stroke-width="1.1" opacity="0.8"/>
<path d="M318.4 22.3 l1.9 2.3" stroke="#f8f080" stroke-width="1.1" opacity="0.8"/>
<path d="M284.0 67.9 l-2.8 -1.2" stroke="#fff8a0" stroke-width="1.1" opacity="0.8"/>
<path d="M300.7 17.1 l2.9 0.7" stroke="#fff8a0" stroke-width="1.1" opacity="0.8"/>
<path d="M323.5 33.6 l0.8 2.9" stroke="#e8d850" stroke-width="1.1" opacity="0.8"/>
<path d="M271.9 44.5 l-0.3 -3.0" stroke="#f8f080" stroke-width="1.1" opacity="0.8"/>
<path d="M259.9 60.3 l-1.4 -2.7" stroke="#c8e070" stroke-width="1.1" opacity="0.8"/>
<path d="M293.5 18.1 l3.0 -0.2" stroke="#f8f080" stroke-width="1.1" opacity="0.8"/>
<path d="M317.6 49.0 l-0.9 2.9" stroke="#f8f080" stroke-width="1.1" opacity="0.8"/>
<path d="M300.7 2.1 l3.0 0.4" stroke="#3a60a0" stroke-width="1.1" opacity="0.8"/>
<path d="M273.2 70.2 l-2.4 -1.8" stroke="#f8f080" stroke-width="1.1" opacity="0.8"/>
<path d="M305.4 19.9 l2.7 1.3" stroke="#e8d850" stroke-width="1.1" opacity="0.8"/>
<path d="M322.0 61.1 l-1.7 2.5" stroke="#e0e060" stroke-width="1.1" opacity="0.8"/>
<path d="M307.3 21.6 l2.6 1.5" stroke="#fff8a0" stroke-width="1.1" opacity="0.8"/>
<path d="M286.3 19.3 l2.8 -1.1" stroke="#f8f080" stroke-width="1.1" opacity="0.8"/>
<path d="M281.2 64.6 l-2.6 -1.6" stroke="#e8d850" stroke-width="1.1" opacity="0.8"/>
<path d="M268.6 11.4 l2.3 -2.0" stroke="#80b8a0" stroke-width="1.1" opacity="0.8"/>
<path d="M311.0 23.7 l2.3 2.0" stroke="#fff8a0" stroke-width="1.1" opacity="0.8"/>
<path d="M320.6 34.8 l0.8 2.9" stroke="#fff8a0" stroke-width="1.1" opacity="0.8"/>
<path d="M314.2 59.7 l-2.0 2.2" stroke="#f8f080" stroke-width="1.1" opacity="0.8"/>
<path d="M319.5 42.7 l-0.1 3.0" stroke="#e8d850" stroke-width="1.1" opacity="0.8"/>
<path d="M317.1 43.4 l-0.2 3.0" stroke="#f8f080" stroke-width="1.1" opacity="0.8"/>
<path d="M292.9 68.9 l-3.0 -0.2" stroke="#f8f080" stroke-width="1.1" opacity="0.8"/>
<path d="M318.6 57.8 l-1.7 2.5" stroke="#f8f080" stroke-width="1.1" opacity="0.8"/>
<path d="M264.0 29.2 l1.1 -2.8" stroke="#f8f080" stroke-width="1.1" opacity="0.8"/>
<path d="M305.7 65.4 l-2.7 1.3" stroke="#fff8a0" stroke-width="1.1" opacity="0.8"/>
<path d="M299.2 10.4 l3.0 0.4" stroke="#f8f080" stroke-width="1.1" opacity="0.8"/>
<path d="M315.5 57.0 l-1.8 2.4" stroke="#f8f080" stroke-width="1.1" opacity="0.8"/>
<path d="M316.1 53.5 l-1.4 2.6" stroke="#fff8a0" stroke-width="1.1" opacity="0.8"/>
<path d="M291.7 13.0 l3.0 -0.3" stroke="#fff8a0" stroke-width="1.1" opacity="0.8"/>
<path d="M269.9 73.6 l-2.4 -1.9" stroke="#3a60a0" stroke-width="1.1" opacity="0.8"/>
<path d="M314.7 29.6 l1.6 2.5" stroke="#fff8a0" stroke-width="1.1" opacity="0.8"/>
<path d="M312.8 19.1 l2.4 1.8" stroke="#fff8a0" stroke-width="1.1" opacity="0.8"/>
<path d="M266.5 48.6 l-0.7 -2.9" stroke="#e8d850" stroke-width="1.1" opacity="0.8"/>
<path d="M278.6 22.5 l2.3 -1.9" stroke="#e8d850" stroke-width="1.1" opacity="0.8"/>
<path d="M312.8 14.2 l2.5 1.6" stroke="#f8f080" stroke-width="1.1" opacity="0.8"/>
<path d="M289.8 20.2 l2.9 -0.7" stroke="#e8d850" stroke-width="1.1" opacity="0.8"/>
<path d="M292.8 74.1 l-3.0 -0.2" stroke="#e0e060" stroke-width="1.1" opacity="0.8"/>
<path d="M308.3 14.1 l2.7 1.3" stroke="#f8f080" stroke-width="1.1" opacity="0.8"/>
<path d="M288.5 68.1 l-2.9 -0.7" stroke="#e8d850" stroke-width="1.1" opacity="0.8"/>
<path d="M332.8 49.0 l-0.5 3.0" stroke="#e0e060" stroke-width="1.1" opacity="0.8"/>
<path d="M298.0 10.6 l3.0 0.3" stroke="#80b8a0" stroke-width="1.1" opacity="0.8"/>
<path d="M283.2 63.6 l-2.6 -1.4" stroke="#fff8a0" stroke-width="1.1" opacity="0.8"/>
<path d="M327.5 19.0 l1.7 2.4" stroke="#c8e070" stroke-width="1.1" opacity="0.8"/>
<path d="M282.9 72.9 l-2.8 -1.1" stroke="#3a60a0" stroke-width="1.1" opacity="0.8"/>
<path d="M332.8 47.9 l-0.5 3.0" stroke="#80b8a0" stroke-width="1.1" opacity="0.8"/>
<path d="M279.2 68.0 l-2.6 -1.6" stroke="#80b8a0" stroke-width="1.1" opacity="0.8"/>
<path d="M310.5 66.4 l-2.5 1.6" stroke="#f8f080" stroke-width="1.1" opacity="0.8"/>
<path d="M281.0 12.0 l2.7 -1.3" stroke="#f8f080" stroke-width="1.1" opacity="0.8"/>
<path d="M318.6 63.3 l-2.0 2.2" stroke="#f8f080" stroke-width="1.1" opacity="0.8"/>
<path d="M283.9 74.4 l-2.8 -1.0" stroke="#e0e060" stroke-width="1.1" opacity="0.8"/>
<path d="M323.9 27.1 l1.4 2.7" stroke="#e0e060" stroke-width="1.1" opacity="0.8"/>
<path d="M263.8 48.2 l-0.6 -2.9" stroke="#80b8a0" stroke-width="1.1" opacity="0.8"/>
<path d="M317.6 46.5 l-0.6 2.9" stroke="#fff8a0" stroke-width="1.1" opacity="0.8"/>
<path d="M273.0 59.5 l-1.9 -2.3" stroke="#f8f080" stroke-width="1.1" opacity="0.8"/>
<path d="M314.2 53.6 l-1.5 2.6" stroke="#e8d850" stroke-width="1.1" opacity="0.8"/>
<path d="M255.8 48.0 l-0.5 -3.0" stroke="#c8e070" stroke-width="1.1" opacity="0.8"/>
<path d="M314.3 53.8 l-1.6 2.6" stroke="#e8d850" stroke-width="1.1" opacity="0.8"/>
<path d="M277.5 58.3 l-2.0 -2.2" stroke="#e8d850" stroke-width="1.1" opacity="0.8"/>
<path d="M272.3 41.9 l0.0 -3.0" stroke="#fff8a0" stroke-width="1.1" opacity="0.8"/>
<path d="M272.8 39.1 l0.4 -3.0" stroke="#f8f080" stroke-width="1.1" opacity="0.8"/>
<path d="M318.4 48.7 l-0.8 2.9" stroke="#f8f080" stroke-width="1.1" opacity="0.8"/>
<path d="M270.9 35.0 l0.8 -2.9" stroke="#e8d850" stroke-width="1.1" opacity="0.8"/>
<path d="M316.9 7.4 l2.5 1.6" stroke="#f8f080" stroke-width="1.1" opacity="0.8"/>
<path d="M290.3 82.0 l-3.0 -0.3" stroke="#e0e060" stroke-width="1.1" opacity="0.8"/>
<path d="M281.6 62.8 l-2.5 -1.6" stroke="#e8d850" stroke-width="1.1" opacity="0.8"/>
<path d="M288.8 20.8 l2.9 -0.8" stroke="#f8f080" stroke-width="1.1" opacity="0.8"/>
<path d="M330.0 27.0 l1.2 2.8" stroke="#3a60a0" stroke-width="1.1" opacity="0.8"/>
<path d="M257.9 56.6 l-1.1 -2.8" stroke="#3a60a0" stroke-width="1.1" opacity="0.8"/>
<path d="M272.4 30.3 l1.4 -2.7" stroke="#fff8a0" stroke-width="1.1" opacity="0.8"/>
<path d="M328.5 21.8 l1.6 2.6" stroke="#f8f080" stroke-width="1.1" opacity="0.8"/>
<path d="M325.3 18.8 l1.8 2.4" stroke="#c8e070" stroke-width="1.1" opacity="0.8"/>
<path d="M325.2 21.4 l1.7 2.5" stroke="#f8f080" stroke-width="1.1" opacity="0.8"/>
<path d="M302.5 9.8 l2.9 0.7" stroke="#e0e060" stroke-width="1.1" opacity="0.8"/>
<path d="M323.9 29.8 l1.2 2.8" stroke="#f8f080" stroke-width="1.1" opacity="0.8"/>
<path d="M278.0 77.4 l-2.7 -1.3" stroke="#3a60a0" stroke-width="1.1" opacity="0.8"/>
<path d="M292.0 17.5 l3.0 -0.4" stroke="#e8d850" stroke-width="1.1" opacity="0.8"/>
<path d="M279.0 72.7 l-2.7 -1.4" stroke="#c8e070" stroke-width="1.1" opacity="0.8"/>
<path d="M268.6 48.8 l-0.7 -2.9" stroke="#fff8a0" stroke-width="1.1" opacity="0.8"/>
<path d="M283.7 72.2 l-2.8 -1.1" stroke="#c8e070" stroke-width="1.1" opacity="0.8"/>
<path d="M312.1 68.1 l-2.5 1.6" stroke="#e0e060" stroke-width="1.1" opacity="0.8"/>
<path d="M319.8 53.0 l-1.2 2.7" stroke="#f8f080" stroke-width="1.1" opacity="0.8"/>
<path d="M291.1 78.5 l-3.0 -0.3" stroke="#80b8a0" stroke-width="1.1" opacity="0.8"/>
<path d="M313.7 56.7 l-1.9 2.4" stroke="#f8f080" stroke-width="1.1" opacity="0.8"/>
<path d="M320.1 15.1 l2.2 2.0" stroke="#f8f080" stroke-width="1.1" opacity="0.8"/>
<path d="M335.1 41.8 l0.0 3.0" stroke="#e0e060" stroke-width="1.1" opacity="0.8"/>
<path d="M260.6 45.8 l-0.3 -3.0" stroke="#3a60a0" stroke-width="1.1" opacity="0.8"/>
<path d="M274.8 30.2 l1.5 -2.6" stroke="#fff8a0" stroke-width="1.1" opacity="0.8"/>
<path d="M314.2 62.2 l-2.2 2.1" stroke="#f8f080" stroke-width="1.1" opacity="0.8"/>
<path d="M266.2 28.8 l1.2 -2.7" stroke="#e0e060" stroke-width="1.1" opacity="0.8"/>
<path d="M265.7 43.4 l-0.1 -3.0" stroke="#e8d850" stroke-width="1.1" opacity="0.8"/>
<path d="M275.6 13.1 l2.5 -1.7" stroke="#e0e060" stroke-width="1.1" opacity="0.8"/>
<path d="M334.7 52.0 l-0.7 2.9" stroke="#f8f080" stroke-width="1.1" opacity="0.8"/>
<path d="M280.8 21.4 l2.5 -1.7" stroke="#f8f080" stroke-width="1.1" opacity="0.8"/>
<path d="M287.3 78.5 l-2.9 -0.6" stroke="#c8e070" stroke-width="1.1" opacity="0.8"/>
<path d="M266.5 19.9 l1.8 -2.4" stroke="#80b8a0" stroke-width="1.1" opacity="0.8"/>
<path d="M284.6 78.0 l-2.9 -0.8" stroke="#c8e070" stroke-width="1.1" opacity="0.8"/>
<path d="M294.1 71.8 l-3.0 -0.1" stroke="#fff8a0" stroke-width="1.1" opacity="0.8"/>
<path d="M260.6 29.6 l1.0 -2.8" stroke="#3a60a0" stroke-width="1.1" opacity="0.8"/>
<path d="M282.7 13.2 l2.8 -1.2" stroke="#3a60a0" stroke-width="1.1" opacity="0.8"/>
<path d="M264.5 40.0 l0.2 -3.0" stroke="#f8f080" stroke-width="1.1" opacity="0.8"/>
<path d="M273.0 69.3 l-2.3 -1.9" stroke="#3a60a0" stroke-width="1.1" opacity="0.8"/>
<path d="M327.2 55.1 l-1.1 2.8" stroke="#c8e070" stroke-width="1.1" opacity="0.8"/>
<path d="M302.5 20.1 l2.8 1.0" stroke="#f8f080" stroke-width="1.1" opacity="0.8"/>
<path d="M331.2 27.0 l1.2 2.8" stroke="#80b8a0" stroke-width="1.1" opacity="0.8"/>
<path d="M289.7 73.3 l-3.0 -0.5" stroke="#f8f080" stroke-width="1.1" opacity="0.8"/>
<path d="M317.4 58.0 l-1.7 2.4" stroke="#e8d850" stroke-width="1.1" opacity="0.8"/>
<path d="M254.8 41.6 l0.0 -3.0" stroke="#c8e070" stroke-width="1.1" opacity="0.8"/>
<path d="M277.1 62.6 l-2.3 -2.0" stroke="#f8f080" stroke-width="1.1" opacity="0.8"/>
<path d="M288.8 9.2 l2.9 -0.6" stroke="#c8e070" stroke-width="1.1" opacity="0.8"/>
<path d="M331.4 58.8 l-1.3 2.7" stroke="#c8e070" stroke-width="1.1" opacity="0.8"/>
<path d="M272.0 61.3 l-1.9 -2.3" stroke="#3a60a0" stroke-width="1.1" opacity="0.8"/>
<path d="M269.7 69.0 l-2.2 -2.0" stroke="#80b8a0" stroke-width="1.1" opacity="0.8"/>
<path d="M317.3 24.7 l1.8 2.4" stroke="#f8f080" stroke-width="1.1" opacity="0.8"/>
<path d="M302.5 10.3 l2.9 0.7" stroke="#3a60a0" stroke-width="1.1" opacity="0.8"/>
<path d="M315.9 52.5 l-1.3 2.7" stroke="#e8d850" stroke-width="1.1" opacity="0.8"/>
<path d="M274.7 65.4 l-2.3 -2.0" stroke="#f8f080" stroke-width="1.1" opacity="0.8"/>
<path d="M306.5 74.1 l-2.8 1.0" stroke="#f8f080" stroke-width="1.1" opacity="0.8"/>
<path d="M281.8 70.9 l-2.7 -1.2" stroke="#3a60a0" stroke-width="1.1" opacity="0.8"/>
<path d="M315.0 72.4 l-2.5 1.7" stroke="#80b8a0" stroke-width="1.1" opacity="0.8"/>
<path d="M312.0 9.1 l2.7 1.4" stroke="#80b8a0" stroke-width="1.1" opacity="0.8"/>
<path d="M288.3 10.3 l2.9 -0.6" stroke="#3a60a0" stroke-width="1.1" opacity="0.8"/>
<path d="M307.4 67.6 l-2.7 1.3" stroke="#fff8a0" stroke-width="1.1" opacity="0.8"/>
<path d="M259.1 46.2 l-0.4 -3.0" stroke="#c8e070" stroke-width="1.1" opacity="0.8"/>
<path d="M284.7 81.6 l-2.9 -0.8" stroke="#f8f080" stroke-width="1.1" opacity="0.8"/>
<path d="M324.1 52.0 l-1.0 2.8" stroke="#f8f080" stroke-width="1.1" opacity="0.8"/>
<path d="M272.7 30.0 l1.4 -2.6" stroke="#fff8a0" stroke-width="1.1" opacity="0.8"/>
<path d="M279.5 59.5 l-2.2 -2.0" stroke="#f8f080" stroke-width="1.1" opacity="0.8"/>
<path d="M274.3 19.8 l2.2 -2.0" stroke="#e0e060" stroke-width="1.1" opacity="0.8"/>
<path d="M308.7 12.5 l2.7 1.3" stroke="#3a60a0" stroke-width="1.1" opacity="0.8"/>
<path d="M280.0 3.8 l2.8 -1.1" stroke="#c8e070" stroke-width="1.1" opacity="0.8"/>
<path d="M314.2 67.1 l-2.4 1.8" stroke="#e0e060" stroke-width="1.1" opacity="0.8"/>
<path d="M274.0 51.6 l-1.2 -2.7" stroke="#f8f080" stroke-width="1.1" opacity="0.8"/>
<path d="M317.1 14.3 l2.3 1.9" stroke="#3a60a0" stroke-width="1.1" opacity="0.8"/>
<path d="M311.4 63.4 l-2.4 1.8" stroke="#fff8a0" stroke-width="1.1" opacity="0.8"/>
<path d="M318.9 61.4 l-1.9 2.3" stroke="#e0e060" stroke-width="1.1" opacity="0.8"/>
<path d="M277.7 75.0 l-2.7 -1.4" stroke="#80b8a0" stroke-width="1.1" opacity="0.8"/>
<path d="M324.4 53.9 l-1.1 2.8" stroke="#c8e070" stroke-width="1.1" opacity="0.8"/>
<path d="M302.7 3.2 l2.9 0.6" stroke="#c8e070" stroke-width="1.1" opacity="0.8"/>
<path d="M290.9 19.6 l3.0 -0.5" stroke="#e8d850" stroke-width="1.1" opacity="0.8"/>
<path d="M306.9 19.5 l2.7 1.4" stroke="#fff8a0" stroke-width="1.1" opacity="0.8"/>
<path d="M317.7 29.2 l1.5 2.6" stroke="#e8d850" stroke-width="1.1" opacity="0.8"/>
<path d="M268.3 36.3 l0.6 -2.9" stroke="#e8d850" stroke-width="1.1" opacity="0.8"/>
<path d="M261.0 43.7 l-0.2 -3.0" stroke="#80b8a0" stroke-width="1.1" opacity="0.8"/>
<path d="M287.1 71.6 l-2.9 -0.8" stroke="#3a60a0" stroke-width="1.1" opacity="0.8"/>
<path d="M274.5 68.8 l-2.4 -1.8" stroke="#e0e060" stroke-width="1.1" opacity="0.8"/>
<path d="M270.6 55.0 l-1.4 -2.6" stroke="#fff8a0" stroke-width="1.1" opacity="0.8"/>
<path d="M310.4 62.3 l-2.4 1.8" stroke="#f8f080" stroke-width="1.1" opacity="0.8"/>
<path d="M322.4 18.2 l2.0 2.3" stroke="#c8e070" stroke-width="1.1" opacity="0.8"/>
<path d="M317.2 27.6 l1.6 2.5" stroke="#f8f080" stroke-width="1.1" opacity="0.8"/>
<path d="M310.6 15.4 l2.6 1.5" stroke="#3a60a0" stroke-width="1.1" opacity="0.8"/>
<path d="M295.9 18.4 l3.0 0.1" stroke="#f8f080" stroke-width="1.1" opacity="0.8"/>
<path d="M281.4 15.1 l2.7 -1.4" stroke="#3a60a0" stroke-width="1.1" opacity="0.8"/>
<path d="M298.1 9.8 l3.0 0.3" stroke="#f8f080" stroke-width="1.1" opacity="0.8"/>
<path d="M313.0 16.7 l2.4 1.7" stroke="#80b8a0" stroke-width="1.1" opacity="0.8"/>
<path d="M312.4 57.7 l-2.0 2.2" stroke="#fff8a0" stroke-width="1.1" opacity="0.8"/>
<path d="M300.8 4.0 l3.0 0.4" stroke="#80b8a0" stroke-width="1.1" opacity="0.8"/>
<path d="M279.7 79.9 l-2.8 -1.1" stroke="#80b8a0" stroke-width="1.1" opacity="0.8"/>
<path d="M333.1 47.0 l-0.4 3.0" stroke="#f8f080" stroke-width="1.1" opacity="0.8"/>
<path d="M282.8 12.8 l2.8 -1.2" stroke="#80b8a0" stroke-width="1.1" opacity="0.8"/>
<path d="M332.5 33.0 l0.7 2.9" stroke="#c8e070" stroke-width="1.1" opacity="0.8"/>
<path d="M306.8 22.9 l2.6 1.6" stroke="#f8f080" stroke-width="1.1" opacity="0.8"/>
<path d="M305.4 69.2 l-2.8 1.1" stroke="#fff8a0" stroke-width="1.1" opacity="0.8"/>
<path d="M269.8 19.5 l2.0 -2.2" stroke="#e0e060" stroke-width="1.1" opacity="0.8"/>
<path d="M316.4 67.2 l-2.3 1.9" stroke="#3a60a0" stroke-width="1.1" opacity="0.8"/>
<path d="M269.2 43.1 l-0.1 -3.0" stroke="#fff8a0" stroke-width="1.1" opacity="0.8"/>
<path d="M317.6 18.1 l2.2 2.1" stroke="#80b8a0" stroke-width="1.1" opacity="0.8"/>
<path d="M311.1 11.6 l2.7 1.4" stroke="#f8f080" stroke-width="1.1" opacity="0.8"/>
<path d="M307.6 19.3 l2.6 1.5" stroke="#e8d850" stroke-width="1.1" opacity="0.8"/>
<path d="M315.4 72.4 l-2.5 1.7" stroke="#f8f080" stroke-width="1.1" opacity="0.8"/>
<path d="M322.4 57.1 l-1.4 2.6" stroke="#3a60a0" stroke-width="1.1" opacity="0.8"/>
<path d="M296.8 7.7 l3.0 0.2" stroke="#e0e060" stroke-width="1.1" opacity="0.8"/>
<path d="M306.0 67.5 l-2.8 1.2" stroke="#f8f080" stroke-width="1.1" opacity="0.8"/>
<path d="M298.8 75.8 l-3.0 0.3" stroke="#f8f080" stroke-width="1.1" opacity="0.8"/>
<path d="M254.5 39.2 l0.2 -3.0" stroke="#3a60a0" stroke-width="1.1" opacity="0.8"/>
<path d="M270.9 42.5 l-0.1 -3.0" stroke="#fff8a0" stroke-width="1.1" opacity="0.8"/>
<path d="M277.7 78.8 l-2.7 -1.3" stroke="#3a60a0" stroke-width="1.1" opacity="0.8"/>
<path d="M329.2 50.2 l-0.7 2.9" stroke="#3a60a0" stroke-width="1.1" opacity="0.8"/>
<path d="M332.3 52.4 l-0.8 2.9" stroke="#3a60a0" stroke-width="1.1" opacity="0.8"/>
<path d="M311.3 26.0 l2.1 2.1" stroke="#f8f080" stroke-width="1.1" opacity="0.8"/>
<path d="M299.9 7.9 l3.0 0.4" stroke="#e0e060" stroke-width="1.1" opacity="0.8"/>
<path d="M315.8 32.2 l1.3 2.7" stroke="#e8d850" stroke-width="1.1" opacity="0.8"/>
<path d="M302.0 63.5 l-2.9 0.9" stroke="#e8d850" stroke-width="1.1" opacity="0.8"/>
<path d="M319.3 11.5 l2.0 1.6" stroke="#2a3a60" stroke-width="1" opacity="0.7"/>
<path d="M322.2 45.8 l-0.3 2.5" stroke="#d0c040" stroke-width="1" opacity="0.7"/>
<path d="M324.9 67.6 l-1.6 1.9" stroke="#3a5a70" stroke-width="1" opacity="0.7"/>
<path d="M331.6 45.0 l-0.2 2.5" stroke="#6a8a50" stroke-width="1" opacity="0.7"/>
<path d="M302.9 76.3 l-2.4 0.6" stroke="#6a8a50" stroke-width="1" opacity="0.7"/>
<path d="M274.9 55.5 l-1.4 -2.1" stroke="#8a9a50" stroke-width="1" opacity="0.7"/>
<path d="M301.8 76.7 l-2.5 0.5" stroke="#2a3a60" stroke-width="1" opacity="0.7"/>
<path d="M267.7 17.2 l1.7 -1.9" stroke="#a0b050" stroke-width="1" opacity="0.7"/>
<path d="M271.7 46.7 l-0.5 -2.5" stroke="#d0c040" stroke-width="1" opacity="0.7"/>
<path d="M312.8 7.1 l2.2 1.1" stroke="#a0b050" stroke-width="1" opacity="0.7"/>
<path d="M270.1 43.0 l-0.1 -2.5" stroke="#b8b840" stroke-width="1" opacity="0.7"/>
<path d="M282.2 62.7 l-2.1 -1.3" stroke="#d0c040" stroke-width="1" opacity="0.7"/>
<path d="M306.9 7.1 l2.4 0.8" stroke="#a0b050" stroke-width="1" opacity="0.7"/>
<path d="M306.1 4.4 l2.4 0.7" stroke="#3a5a70" stroke-width="1" opacity="0.7"/>
<path d="M318.0 46.7 l-0.5 2.5" stroke="#d0c040" stroke-width="1" opacity="0.7"/>
<path d="M317.3 57.6 l-1.4 2.0" stroke="#d0c040" stroke-width="1" opacity="0.7"/>
<path d="M299.3 69.4 l-2.5 0.4" stroke="#d0c040" stroke-width="1" opacity="0.7"/>
<path d="M329.0 24.9 l1.1 2.2" stroke="#a0b050" stroke-width="1" opacity="0.7"/>
<path d="M331.2 29.9 l0.8 2.4" stroke="#2a3a60" stroke-width="1" opacity="0.7"/>
<path d="M260.6 50.4 l-0.6 -2.4" stroke="#6a8a50" stroke-width="1" opacity="0.7"/>
<path d="M301.8 5.8 l2.5 0.5" stroke="#6a8a50" stroke-width="1" opacity="0.7"/>
<path d="M264.4 33.5 l0.7 -2.4" stroke="#d0c040" stroke-width="1" opacity="0.7"/>
<path d="M328.0 63.7 l-1.4 2.1" stroke="#3a5a70" stroke-width="1" opacity="0.7"/>
<path d="M271.2 69.8 l-1.9 -1.6" stroke="#2a3a60" stroke-width="1" opacity="0.7"/>
<path d="M316.7 69.9 l-2.0 1.5" stroke="#a0b050" stroke-width="1" opacity="0.7"/>
<path d="M273.6 24.1 l1.6 -1.9" stroke="#8a9a50" stroke-width="1" opacity="0.7"/>
<path d="M312.0 10.5 l2.2 1.2" stroke="#2a3a60" stroke-width="1" opacity="0.7"/>
<path d="M266.1 63.2 l-1.5 -2.0" stroke="#2a3a60" stroke-width="1" opacity="0.7"/>
<path d="M271.4 69.9 l-1.9 -1.6" stroke="#3a5a70" stroke-width="1" opacity="0.7"/>
<path d="M326.7 34.4 l0.6 2.4" stroke="#8a9a50" stroke-width="1" opacity="0.7"/>
<path d="M322.9 34.6 l0.6 2.4" stroke="#b8b840" stroke-width="1" opacity="0.7"/>
<path d="M303.0 69.7 l-2.4 0.7" stroke="#b8b840" stroke-width="1" opacity="0.7"/>
<path d="M270.8 39.4 l0.3 -2.5" stroke="#d0c040" stroke-width="1" opacity="0.7"/>
<path d="M280.9 70.0 l-2.2 -1.1" stroke="#8a9a50" stroke-width="1" opacity="0.7"/>
<path d="M259.3 28.2 l0.9 -2.3" stroke="#6a8a50" stroke-width="1" opacity="0.7"/>
<path d="M280.3 22.3 l2.0 -1.5" stroke="#8a9a50" stroke-width="1" opacity="0.7"/>
<path d="M281.0 77.7 l-2.3 -0.9" stroke="#3a5a70" stroke-width="1" opacity="0.7"/>
<path d="M274.2 54.8 l-1.3 -2.1" stroke="#b8b840" stroke-width="1" opacity="0.7"/>
<path d="M327.4 55.4 l-1.0 2.3" stroke="#2a3a60" stroke-width="1" opacity="0.7"/>
<path d="M298.5 3.0 l2.5 0.2" stroke="#6a8a50" stroke-width="1" opacity="0.7"/>
<path d="M297.9 11.0 l2.5 0.2" stroke="#8a9a50" stroke-width="1" opacity="0.7"/>
<path d="M292.9 66.0 l-2.5 -0.2" stroke="#d0c040" stroke-width="1" opacity="0.7"/>
<path d="M316.2 71.9 l-2.0 1.4" stroke="#3a5a70" stroke-width="1" opacity="0.7"/>
<path d="M327.7 44.3 l-0.2 2.5" stroke="#d0c040" stroke-width="1" opacity="0.7"/>
<path d="M321.6 48.4 l-0.6 2.4" stroke="#b8b840" stroke-width="1" opacity="0.7"/>
<path d="M287.3 20.0 l2.4 -0.8" stroke="#8a9a50" stroke-width="1" opacity="0.7"/>
<path d="M318.4 43.0 l-0.1 2.5" stroke="#8a9a50" stroke-width="1" opacity="0.7"/>
<path d="M325.4 59.8 l-1.3 2.2" stroke="#2a3a60" stroke-width="1" opacity="0.7"/>
<path d="M292.4 5.5 l2.5 -0.2" stroke="#6a8a50" stroke-width="1" opacity="0.7"/>
<path d="M306.8 63.8 l-2.2 1.2" stroke="#d0c040" stroke-width="1" opacity="0.7"/>
<path d="M281.3 18.4 l2.2 -1.3" stroke="#8a9a50" stroke-width="1" opacity="0.7"/>
<path d="M314.8 61.4 l-1.7 1.8" stroke="#b8b840" stroke-width="1" opacity="0.7"/>
<path d="M280.5 70.7 l-2.2 -1.1" stroke="#8a9a50" stroke-width="1" opacity="0.7"/>
<path d="M322.3 58.7 l-1.3 2.1" stroke="#d0c040" stroke-width="1" opacity="0.7"/>
<path d="M331.0 38.7 l0.2 2.5" stroke="#a0b050" stroke-width="1" opacity="0.7"/>
<path d="M315.8 67.2 l-1.9 1.6" stroke="#b8b840" stroke-width="1" opacity="0.7"/>
<path d="M317.8 73.1 l-2.0 1.5" stroke="#6a8a50" stroke-width="1" opacity="0.7"/>
<path d="M277.8 73.7 l-2.2 -1.2" stroke="#6a8a50" stroke-width="1" opacity="0.7"/>
<path d="M322.5 41.1 l0.1 2.5" stroke="#d0c040" stroke-width="1" opacity="0.7"/>
<path d="M284.0 8.3 l2.4 -0.8" stroke="#3a5a70" stroke-width="1" opacity="0.7"/>
<path d="M257.1 50.2 l-0.5 -2.4" stroke="#6a8a50" stroke-width="1" opacity="0.7"/>
<path d="M292.1 10.6 l2.5 -0.2" stroke="#b8b840" stroke-width="1" opacity="0.7"/>
<path d="M319.0 37.5 l0.5 2.5" stroke="#8a9a50" stroke-width="1" opacity="0.7"/>
<path d="M263.5 48.0 l-0.5 -2.5" stroke="#d0c040" stroke-width="1" opacity="0.7"/>
<path d="M278.2 25.7 l1.7 -1.8" stroke="#8a9a50" stroke-width="1" opacity="0.7"/>
<path d="M318.6 21.1 l1.7 1.9" stroke="#b8b840" stroke-width="1" opacity="0.7"/>
<path d="M309.8 24.2 l1.9 1.6" stroke="#8a9a50" stroke-width="1" opacity="0.7"/>
<path d="M295.4 81.4 l-2.5 0.0" stroke="#2a3a60" stroke-width="1" opacity="0.7"/>
<path d="M269.7 61.8 l-1.5 -2.0" stroke="#d0c040" stroke-width="1" opacity="0.7"/>
<path d="M259.3 36.1 l0.4 -2.5" stroke="#3a5a70" stroke-width="1" opacity="0.7"/>
<path d="M330.1 31.2 l0.7 2.4" stroke="#a0b050" stroke-width="1" opacity="0.7"/>
<path d="M287.2 19.3 l2.4 -0.8" stroke="#d0c040" stroke-width="1" opacity="0.7"/>
<path d="M311.0 76.5 l-2.3 1.1" stroke="#2a3a60" stroke-width="1" opacity="0.7"/>
<path d="M284.9 75.9 l-2.4 -0.7" stroke="#2a3a60" stroke-width="1" opacity="0.7"/>
<path d="M324.2 53.8 l-0.9 2.3" stroke="#b8b840" stroke-width="1" opacity="0.7"/>
<path d="M333.8 50.1 l-0.5 2.4" stroke="#3a5a70" stroke-width="1" opacity="0.7"/>
<path d="M293.4 77.7 l-2.5 -0.1" stroke="#2a3a60" stroke-width="1" opacity="0.7"/>
<path d="M275.3 8.7 l2.2 -1.3" stroke="#6a8a50" stroke-width="1" opacity="0.7"/>
<path d="M313.8 57.6 l-1.6 1.9" stroke="#8a9a50" stroke-width="1" opacity="0.7"/>
<path d="M317.1 59.3 l-1.5 2.0" stroke="#d0c040" stroke-width="1" opacity="0.7"/>
<path d="M282.6 16.3 l2.2 -1.1" stroke="#d0c040" stroke-width="1" opacity="0.7"/>
<path d="M278.5 78.2 l-2.3 -1.0" stroke="#6a8a50" stroke-width="1" opacity="0.7"/>
<path d="M303.9 4.6 l2.4 0.6" stroke="#a0b050" stroke-width="1" opacity="0.7"/>
<path d="M299.5 74.3 l-2.5 0.3" stroke="#8a9a50" stroke-width="1" opacity="0.7"/>
<path d="M269.9 31.5 l1.0 -2.3" stroke="#8a9a50" stroke-width="1" opacity="0.7"/>
<path d="M328.4 60.4 l-1.2 2.2" stroke="#2a3a60" stroke-width="1" opacity="0.7"/>
<path d="M278.7 13.6 l2.2 -1.2" stroke="#b8b840" stroke-width="1" opacity="0.7"/>
<path d="M276.9 69.0 l-2.1 -1.4" stroke="#d0c040" stroke-width="1" opacity="0.7"/>
<path d="M334.0 40.1 l0.1 2.5" stroke="#a0b050" stroke-width="1" opacity="0.7"/>
<path d="M286.4 73.2 l-2.4 -0.7" stroke="#8a9a50" stroke-width="1" opacity="0.7"/>
<path d="M318.0 37.9 l0.4 2.5" stroke="#d0c040" stroke-width="1" opacity="0.7"/>
<path d="M275.0 29.5 l1.3 -2.1" stroke="#8a9a50" stroke-width="1" opacity="0.7"/>
<path d="M302.2 10.5 l2.4 0.6" stroke="#b8b840" stroke-width="1" opacity="0.7"/>
<path d="M320.3 61.9 l-1.5 2.0" stroke="#8a9a50" stroke-width="1" opacity="0.7"/>
<path d="M282.1 66.9 l-2.2 -1.1" stroke="#d0c040" stroke-width="1" opacity="0.7"/>
<path d="M280.8 9.4 l2.3 -1.0" stroke="#a0b050" stroke-width="1" opacity="0.7"/>
<path d="M314.4 27.7 l1.5 2.0" stroke="#b8b840" stroke-width="1" opacity="0.7"/>
<path d="M319.9 28.2 l1.2 2.2" stroke="#b8b840" stroke-width="1" opacity="0.7"/>
<path d="M327.9 19.4 l1.4 2.1" stroke="#a0b050" stroke-width="1" opacity="0.7"/>
<path d="M286.8 65.3 l-2.4 -0.8" stroke="#b8b840" stroke-width="1" opacity="0.7"/>
<path d="M270.8 41.6 l0.0 -2.5" stroke="#8a9a50" stroke-width="1" opacity="0.7"/>
<path d="M268.7 30.7 l1.0 -2.3" stroke="#d0c040" stroke-width="1" opacity="0.7"/>
<path d="M283.8 62.4 l-2.2 -1.2" stroke="#d0c040" stroke-width="1" opacity="0.7"/>
<path d="M325.4 65.0 l-1.5 2.0" stroke="#2a3a60" stroke-width="1" opacity="0.7"/>
<path d="M316.4 9.9 l2.1 1.4" stroke="#2a3a60" stroke-width="1" opacity="0.7"/>
<path d="M315.3 53.4 l-1.2 2.2" stroke="#8a9a50" stroke-width="1" opacity="0.7"/>
<path d="M299.3 65.8 l-2.5 0.4" stroke="#8a9a50" stroke-width="1" opacity="0.7"/>
<path d="M277.7 19.3 l2.0 -1.5" stroke="#8a9a50" stroke-width="1" opacity="0.7"/>
<path d="M282.0 17.4 l2.2 -1.2" stroke="#b8b840" stroke-width="1" opacity="0.7"/>
<path d="M266.0 67.1 l-1.6 -1.9" stroke="#a0b050" stroke-width="1" opacity="0.7"/>
<path d="M324.0 16.8 l1.6 1.9" stroke="#2a3a60" stroke-width="1" opacity="0.7"/>
<path d="M293.1 3.0 l2.5 -0.1" stroke="#a0b050" stroke-width="1" opacity="0.7"/>
<path d="M300.8 69.3 l-2.4 0.5" stroke="#8a9a50" stroke-width="1" opacity="0.7"/>
<path d="M267.8 38.4 l0.3 -2.5" stroke="#d0c040" stroke-width="1" opacity="0.7"/>
<path d="M284.1 5.5 l2.4 -0.7" stroke="#2a3a60" stroke-width="1" opacity="0.7"/>
<path d="M322.9 16.2 l1.7 1.8" stroke="#6a8a50" stroke-width="1" opacity="0.7"/>
<path d="M284.6 19.8 l2.3 -1.1" stroke="#8a9a50" stroke-width="1" opacity="0.7"/>
<path d="M282.8 71.0 l-2.3 -1.0" stroke="#8a9a50" stroke-width="1" opacity="0.7"/>
<path d="M267.3 48.4 l-0.6 -2.4" stroke="#8a9a50" stroke-width="1" opacity="0.7"/>
<path d="M256.1 33.3 l0.5 -2.4" stroke="#3a5a70" stroke-width="1" opacity="0.7"/>
<path d="M299.2 9.3 l2.5 0.3" stroke="#8a9a50" stroke-width="1" opacity="0.7"/>
<path d="M270.6 38.5 l0.3 -2.5" stroke="#8a9a50" stroke-width="1" opacity="0.7"/>
<path d="M282.5 7.6 l2.3 -0.9" stroke="#2a3a60" stroke-width="1" opacity="0.7"/>
<path d="M265.4 54.0 l-0.9 -2.3" stroke="#d0c040" stroke-width="1" opacity="0.7"/>
<path d="M263.4 60.9 l-1.3 -2.1" stroke="#a0b050" stroke-width="1" opacity="0.7"/>
<path d="M309.1 69.9 l-2.2 1.1" stroke="#b8b840" stroke-width="1" opacity="0.7"/>
<path d="M305.0 73.3 l-2.4 0.8" stroke="#d0c040" stroke-width="1" opacity="0.7"/>
<path d="M266.9 46.2 l-0.4 -2.5" stroke="#d0c040" stroke-width="1" opacity="0.7"/>
<path d="M271.6 56.7 l-1.3 -2.1" stroke="#b8b840" stroke-width="1" opacity="0.7"/>
<path d="M283.4 63.8 l-2.2 -1.2" stroke="#b8b840" stroke-width="1" opacity="0.7"/>
<path d="M295.8 9.2 l2.5 0.1" stroke="#b8b840" stroke-width="1" opacity="0.7"/>
<path d="M286.1 16.5 l2.4 -0.8" stroke="#d0c040" stroke-width="1" opacity="0.7"/>
<path d="M321.9 45.4 l-0.3 2.5" stroke="#8a9a50" stroke-width="1" opacity="0.7"/>
<path d="M313.8 20.9 l1.9 1.7" stroke="#d0c040" stroke-width="1" opacity="0.7"/>
<path d="M320.2 55.4 l-1.2 2.2" stroke="#d0c040" stroke-width="1" opacity="0.7"/>
<path d="M310.1 65.0 l-2.1 1.4" stroke="#b8b840" stroke-width="1" opacity="0.7"/>
<path d="M308.7 23.0 l2.0 1.5" stroke="#b8b840" stroke-width="1" opacity="0.7"/>
<path d="M317.9 47.6 l-0.6 2.4" stroke="#b8b840" stroke-width="1" opacity="0.7"/>
<path d="M309.6 64.9 l-2.1 1.3" stroke="#d0c040" stroke-width="1" opacity="0.7"/>
<path d="M303.4 18.8 l2.3 0.9" stroke="#b8b840" stroke-width="1" opacity="0.7"/>
<path d="M263.7 33.1 l0.7 -2.4" stroke="#b8b840" stroke-width="1" opacity="0.7"/>
<path d="M317.8 58.3 l-1.5 2.0" stroke="#b8b840" stroke-width="1" opacity="0.7"/>
<path d="M274.6 62.0 l-1.7 -1.8" stroke="#d0c040" stroke-width="1" opacity="0.7"/>
<path d="M287.1 15.9 l2.4 -0.7" stroke="#b8b840" stroke-width="1" opacity="0.7"/>
<path d="M268.7 25.0 l1.4 -2.1" stroke="#d0c040" stroke-width="1" opacity="0.7"/>
<path d="M290.4 19.1 l2.5 -0.5" stroke="#b8b840" stroke-width="1" opacity="0.7"/>
<path d="M263.0 47.2 l-0.4 -2.5" stroke="#b8b840" stroke-width="1" opacity="0.7"/>
<path d="M315.0 75.2 l-2.1 1.3" stroke="#3a5a70" stroke-width="1" opacity="0.7"/>
<path d="M272.3 10.4 l2.0 -1.5" stroke="#2a3a60" stroke-width="1" opacity="0.7"/>
<path d="M322.4 35.6 l0.6 2.4" stroke="#8a9a50" stroke-width="1" opacity="0.7"/>
<path d="M304.2 75.8 l-2.4 0.7" stroke="#a0b050" stroke-width="1" opacity="0.7"/>
<path d="M303.5 14.5 l2.4 0.7" stroke="#8a9a50" stroke-width="1" opacity="0.7"/>
<path d="M301.1 79.8 l-2.5 0.4" stroke="#3a5a70" stroke-width="1" opacity="0.7"/>
<path d="M293.7 6.1 l2.5 -0.1" stroke="#2a3a60" stroke-width="1" opacity="0.7"/>
<path d="M276.3 15.2 l2.1 -1.4" stroke="#b8b840" stroke-width="1" opacity="0.7"/>
<path d="M261.8 26.3 l1.1 -2.3" stroke="#a0b050" stroke-width="1" opacity="0.7"/>
<path d="M274.7 8.5 l2.1 -1.3" stroke="#3a5a70" stroke-width="1" opacity="0.7"/>
<path d="M305.6 15.9 l2.3 0.9" stroke="#d0c040" stroke-width="1" opacity="0.7"/>
<path d="M310.8 59.4 l-1.8 1.7" stroke="#d0c040" stroke-width="1" opacity="0.7"/>
<path d="M299.9 3.8 l2.5 0.3" stroke="#2a3a60" stroke-width="1" opacity="0.7"/>
<path d="M327.3 41.9 l0.0 2.5" stroke="#b8b840" stroke-width="1" opacity="0.7"/>
<path d="M288.1 64.0 l-2.4 -0.7" stroke="#d0c040" stroke-width="1" opacity="0.7"/>
<path d="M285.4 63.5 l-2.3 -1.0" stroke="#d0c040" stroke-width="1" opacity="0.7"/>
<path d="M282.8 20.4 l2.2 -1.2" stroke="#d0c040" stroke-width="1" opacity="0.7"/>
<path d="M301.8 18.7 l2.4 0.7" stroke="#d0c040" stroke-width="1" opacity="0.7"/>
<path d="M279.3 65.9 l-2.1 -1.4" stroke="#b8b840" stroke-width="1" opacity="0.7"/>
<path d="M301.7 76.6 l-2.5 0.5" stroke="#a0b050" stroke-width="1" opacity="0.7"/>
<path d="M330.4 27.2 l1.0 2.3" stroke="#2a3a60" stroke-width="1" opacity="0.7"/>
<path d="M274.2 52.3 l-1.1 -2.2" stroke="#b8b840" stroke-width="1" opacity="0.7"/>
<path d="M323.6 46.1 l-0.4 2.5" stroke="#b8b840" stroke-width="1" opacity="0.7"/>
<path d="M319.2 63.2 l-1.6 1.9" stroke="#8a9a50" stroke-width="1" opacity="0.7"/>
<path d="M271.3 38.2 l0.4 -2.5" stroke="#b8b840" stroke-width="1" opacity="0.7"/>
<path d="M279.4 10.6 l2.2 -1.1" stroke="#2a3a60" stroke-width="1" opacity="0.7"/>
<path d="M289.6 18.4 l2.4 -0.6" stroke="#b8b840" stroke-width="1" opacity="0.7"/>
<path d="M329.9 59.7 l-1.1 2.2" stroke="#6a8a50" stroke-width="1" opacity="0.7"/>
<path d="M299.1 18.9 l2.5 0.4" stroke="#d0c040" stroke-width="1" opacity="0.7"/>
<path d="M274.7 67.2 l-1.9 -1.6" stroke="#d0c040" stroke-width="1" opacity="0.7"/>
<path d="M260.1 49.1 l-0.5 -2.5" stroke="#2a3a60" stroke-width="1" opacity="0.7"/>
<path d="M328.0 54.1 l-0.9 2.3" stroke="#2a3a60" stroke-width="1" opacity="0.7"/>
<path d="M311.2 59.5 l-1.8 1.7" stroke="#d0c040" stroke-width="1" opacity="0.7"/>
<path d="M266.0 27.1 l1.1 -2.2" stroke="#d0c040" stroke-width="1" opacity="0.7"/>
<path d="M319.4 43.8 l-0.2 2.5" stroke="#b8b840" stroke-width="1" opacity="0.7"/>
<path d="M296.0 69.0 l-2.5 0.1" stroke="#b8b840" stroke-width="1" opacity="0.7"/>
<path d="M325.8 34.5 l0.6 2.4" stroke="#d0c040" stroke-width="1" opacity="0.7"/>
<path d="M312.0 57.8 l-1.7 1.8" stroke="#8a9a50" stroke-width="1" opacity="0.7"/>
<path d="M332.9 29.4 l0.8 2.4" stroke="#6a8a50" stroke-width="1" opacity="0.7"/>
<path d="M329.2 28.7 l0.9 2.3" stroke="#6a8a50" stroke-width="1" opacity="0.7"/>
<path d="M326.8 49.1 l-0.5 2.4" stroke="#b8b840" stroke-width="1" opacity="0.7"/>
<path d="M319.0 43.5 l-0.2 2.5" stroke="#d0c040" stroke-width="1" opacity="0.7"/>
<path d="M260.1 36.6 l0.4 -2.5" stroke="#a0b050" stroke-width="1" opacity="0.7"/>
<path d="M325.8 35.9 l0.5 2.5" stroke="#8a9a50" stroke-width="1" opacity="0.7"/>
<path d="M330.8 33.0 l0.6 2.4" stroke="#2a3a60" stroke-width="1" opacity="0.7"/>
<path d="M275.6 23.0 l1.7 -1.8" stroke="#8a9a50" stroke-width="1" opacity="0.7"/>
<path d="M302.1 7.0 l2.5 0.5" stroke="#2a3a60" stroke-width="1" opacity="0.7"/>
<path d="M261.8 28.1 l1.0 -2.3" stroke="#6a8a50" stroke-width="1" opacity="0.7"/>
<path d="M266.1 29.7 l1.0 -2.3" stroke="#b8b840" stroke-width="1" opacity="0.7"/>
<path d="M269.4 60.3 l-1.5 -2.0" stroke="#d0c040" stroke-width="1" opacity="0.7"/>
<path d="M257.6 31.8 l0.7 -2.4" stroke="#3a5a70" stroke-width="1" opacity="0.7"/>
<path d="M256.8 35.7 l0.4 -2.5" stroke="#2a3a60" stroke-width="1" opacity="0.7"/>
<path d="M276.6 73.3 l-2.2 -1.3" stroke="#6a8a50" stroke-width="1" opacity="0.7"/>
<path d="M268.1 33.5 l0.8 -2.4" stroke="#d0c040" stroke-width="1" opacity="0.7"/>
<path d="M321.7 53.0 l-1.0 2.3" stroke="#8a9a50" stroke-width="1" opacity="0.7"/>
<path d="M287.1 7.2 l2.4 -0.6" stroke="#a0b050" stroke-width="1" opacity="0.7"/>
<path d="M298.7 69.2 l-2.5 0.3" stroke="#8a9a50" stroke-width="1" opacity="0.7"/>
<path d="M316.5 31.1 l1.1 2.2" stroke="#d0c040" stroke-width="1" opacity="0.7"/>
<path d="M323.2 63.8 l-1.5 2.0" stroke="#a0b050" stroke-width="1" opacity="0.7"/>
<path d="M265.3 61.7 l-1.4 -2.1" stroke="#a0b050" stroke-width="1" opacity="0.7"/>
<path d="M284.8 15.3 l2.3 -0.9" stroke="#8a9a50" stroke-width="1" opacity="0.7"/>
<path d="M258.1 43.9 l-0.1 -2.5" stroke="#6a8a50" stroke-width="1" opacity="0.7"/>
<path d="M273.8 53.9 l-1.2 -2.2" stroke="#b8b840" stroke-width="1" opacity="0.7"/>
<path d="M256.8 53.5 l-0.7 -2.4" stroke="#2a3a60" stroke-width="1" opacity="0.7"/>
<path d="M273.2 34.0 l0.9 -2.3" stroke="#8a9a50" stroke-width="1" opacity="0.7"/>
<path d="M267.0 38.6 l0.3 -2.5" stroke="#b8b840" stroke-width="1" opacity="0.7"/>
<path d="M265.6 54.5 l-1.0 -2.3" stroke="#b8b840" stroke-width="1" opacity="0.7"/>
<path d="M316.0 66.9 l-1.9 1.6" stroke="#8a9a50" stroke-width="1" opacity="0.7"/>
<path d="M279.0 68.6 l-2.1 -1.3" stroke="#b8b840" stroke-width="1" opacity="0.7"/>
<path d="M321.6 58.4 l-1.3 2.1" stroke="#d0c040" stroke-width="1" opacity="0.7"/>
<path d="M269.3 29.5 l1.1 -2.2" stroke="#b8b840" stroke-width="1" opacity="0.7"/>
<path d="M297.4 6.6 l2.5 0.2" stroke="#6a8a50" stroke-width="1" opacity="0.7"/>
<path d="M260.8 54.7 l-0.9 -2.3" stroke="#3a5a70" stroke-width="1" opacity="0.7"/>
<path d="M317.5 57.1 l-1.4 2.1" stroke="#8a9a50" stroke-width="1" opacity="0.7"/>
<path d="M323.6 46.5 l-0.4 2.5" stroke="#b8b840" stroke-width="1" opacity="0.7"/>
<path d="M285.8 16.0 l2.4 -0.8" stroke="#8a9a50" stroke-width="1" opacity="0.7"/>
<path d="M262.2 19.7 l1.4 -2.1" stroke="#3a5a70" stroke-width="1" opacity="0.7"/>
<path d="M262.7 35.9 l0.5 -2.5" stroke="#b8b840" stroke-width="1" opacity="0.7"/>
<path d="M328.5 52.9 l-0.8 2.4" stroke="#3a5a70" stroke-width="1" opacity="0.7"/>
<path d="M272.9 52.2 l-1.0 -2.3" stroke="#b8b840" stroke-width="1" opacity="0.7"/>
<path d="M260.8 23.3 l1.2 -2.2" stroke="#a0b050" stroke-width="1" opacity="0.7"/>
<path d="M276.4 69.1 l-2.1 -1.4" stroke="#b8b840" stroke-width="1" opacity="0.7"/>
<path d="M271.3 36.3 l0.6 -2.4" stroke="#d0c040" stroke-width="1" opacity="0.7"/>
<path d="M276.1 26.9 l1.6 -2.0" stroke="#b8b840" stroke-width="1" opacity="0.7"/>
<path d="M317.9 74.2 l-2.0 1.4" stroke="#2a3a60" stroke-width="1" opacity="0.7"/>
<path d="M271.3 46.6 l-0.5 -2.5" stroke="#8a9a50" stroke-width="1" opacity="0.7"/>
<path d="M263.8 52.0 l-0.8 -2.4" stroke="#d0c040" stroke-width="1" opacity="0.7"/>
<path d="M276.9 7.6 l2.2 -1.2" stroke="#2a3a60" stroke-width="1" opacity="0.7"/>
<path d="M288.2 15.1 l2.4 -0.6" stroke="#b8b840" stroke-width="1" opacity="0.7"/>
<path d="M319.3 20.4 l1.7 1.9" stroke="#d0c040" stroke-width="1" opacity="0.7"/>
<path d="M300.0 64.8 l-2.4 0.5" stroke="#8a9a50" stroke-width="1" opacity="0.7"/>
<path d="M300.3 10.5 l2.5 0.4" stroke="#b8b840" stroke-width="1" opacity="0.7"/>
<path d="M288.8 10.3 l2.5 -0.5" stroke="#d0c040" stroke-width="1" opacity="0.7"/>
<path d="M310.5 18.7 l2.1 1.4" stroke="#b8b840" stroke-width="1" opacity="0.7"/>
<path d="M265.4 54.9 l-1.0 -2.3" stroke="#d0c040" stroke-width="1" opacity="0.7"/>
<path d="M256.6 35.0 l0.4 -2.5" stroke="#6a8a50" stroke-width="1" opacity="0.7"/>
<path d="M331.7 56.5 l-0.9 2.3" stroke="#6a8a50" stroke-width="1" opacity="0.7"/>
<path d="M267.1 63.2 l-1.5 -2.0" stroke="#3a5a70" stroke-width="1" opacity="0.7"/>
<path d="M321.4 32.3 l0.9 2.3" stroke="#d0c040" stroke-width="1" opacity="0.7"/>
<path d="M313.9 76.1 l-2.2 1.2" stroke="#2a3a60" stroke-width="1" opacity="0.7"/>
<path d="M333.7 51.0 l-0.6 2.4" stroke="#6a8a50" stroke-width="1" opacity="0.7"/>
<path d="M263.4 64.9 l-1.5 -2.0" stroke="#3a5a70" stroke-width="1" opacity="0.7"/>
<path d="M310.3 18.1 l2.1 1.3" stroke="#8a9a50" stroke-width="1" opacity="0.7"/>
<path d="M312.6 57.8 l-1.7 1.9" stroke="#8a9a50" stroke-width="1" opacity="0.7"/>
<path d="M304.1 8.1 l2.4 0.6" stroke="#3a5a70" stroke-width="1" opacity="0.7"/>
<path d="M299.8 18.9 l2.4 0.5" stroke="#d0c040" stroke-width="1" opacity="0.7"/>
<path d="M265.8 28.7 l1.0 -2.3" stroke="#d0c040" stroke-width="1" opacity="0.7"/>
<path d="M291.9 6.5 l2.5 -0.2" stroke="#6a8a50" stroke-width="1" opacity="0.7"/>
<path d="M268.2 70.7 l-1.8 -1.7" stroke="#2a3a60" stroke-width="1" opacity="0.7"/>
<path d="M312.2 14.4 l2.1 1.3" stroke="#8a9a50" stroke-width="1" opacity="0.7"/>
<path d="M267.4 64.1 l-1.6 -2.0" stroke="#3a5a70" stroke-width="1" opacity="0.7"/>
<path d="M267.2 41.5 l0.0 -2.5" stroke="#b8b840" stroke-width="1" opacity="0.7"/>
<path d="M290.8 81.4 l-2.5 -0.3" stroke="#a0b050" stroke-width="1" opacity="0.7"/>
<path d="M320.9 97.2 l3.1 -0.2" stroke="#3a6ab8" stroke-width="1.4" opacity="0.9"/>
<path d="M304.5 112.5 l4.1 -0.7" stroke="#3a6ab8" stroke-width="1.4" opacity="0.9"/>
<path d="M281.2 96.3 l5.6 0.2" stroke="#80b0a0" stroke-width="1.4" opacity="0.9"/>
<path d="M281.5 100.8 l6.5 -0.4" stroke="#90c0d0" stroke-width="1.4" opacity="0.9"/>
<path d="M308.5 112.3 l7.2 -0.6" stroke="#3a6ab8" stroke-width="1.4" opacity="0.9"/>
<path d="M293.5 98.4 l3.8 -0.1" stroke="#90c0d0" stroke-width="1.4" opacity="0.9"/>
<path d="M291.5 93.4 l4.1 -0.3" stroke="#4a80b0" stroke-width="1.4" opacity="0.9"/>
<path d="M278.0 86.2 l4.9 -0.5" stroke="#90c0d0" stroke-width="1.4" opacity="0.9"/>
<path d="M281.8 84.6 l4.9 -0.0" stroke="#3a6ab8" stroke-width="1.4" opacity="0.9"/>
<path d="M321.0 77.6 l3.8 -0.5" stroke="#1a3080" stroke-width="1.4" opacity="0.9"/>
<path d="M313.0 97.1 l8.0 -0.2" stroke="#4a80b0" stroke-width="1.4" opacity="0.9"/>
<path d="M267.5 76.8 l3.7 -0.4" stroke="#1a3080" stroke-width="1.4" opacity="0.9"/>
<path d="M279.0 91.9 l6.4 0.2" stroke="#2a4aa0" stroke-width="1.4" opacity="0.9"/>
<path d="M289.5 99.7 l6.0 -1.0" stroke="#2a4aa0" stroke-width="1.4" opacity="0.9"/>
<path d="M315.6 78.0 l7.4 -1.1" stroke="#4a80b0" stroke-width="1.4" opacity="0.9"/>
<path d="M268.3 109.1 l4.5 0.2" stroke="#2a4aa0" stroke-width="1.4" opacity="0.9"/>
<path d="M307.3 106.2 l3.0 -0.3" stroke="#4a80b0" stroke-width="1.4" opacity="0.9"/>
<path d="M271.2 102.1 l5.9 -0.6" stroke="#3a6ab8" stroke-width="1.4" opacity="0.9"/>
<path d="M311.5 113.7 l4.1 -0.3" stroke="#4a80b0" stroke-width="1.4" opacity="0.9"/>
<path d="M289.9 91.0 l6.6 -0.7" stroke="#80b0a0" stroke-width="1.4" opacity="0.9"/>
<path d="M292.3 108.8 l5.1 -0.4" stroke="#80b0a0" stroke-width="1.4" opacity="0.9"/>
<path d="M312.9 87.5 l7.1 -0.6" stroke="#3a6ab8" stroke-width="1.4" opacity="0.9"/>
<path d="M317.5 113.0 l4.9 -0.1" stroke="#2a4aa0" stroke-width="1.4" opacity="0.9"/>
<path d="M285.2 85.3 l3.8 0.2" stroke="#2a4aa0" stroke-width="1.4" opacity="0.9"/>
<path d="M283.2 112.1 l4.7 -1.0" stroke="#80b0a0" stroke-width="1.4" opacity="0.9"/>
<path d="M266.5 106.1 l7.0 -0.6" stroke="#3a6ab8" stroke-width="1.4" opacity="0.9"/>
<path d="M312.6 104.7 l5.8 -0.2" stroke="#80b0a0" stroke-width="1.4" opacity="0.9"/>
<path d="M289.8 85.5 l6.4 -0.1" stroke="#4a80b0" stroke-width="1.4" opacity="0.9"/>
<path d="M292.8 97.1 l6.3 -0.9" stroke="#80b0a0" stroke-width="1.4" opacity="0.9"/>
<path d="M287.1 110.7 l6.8 0.8" stroke="#1a3080" stroke-width="1.4" opacity="0.9"/>
<path d="M319.3 108.9 l5.8 0.6" stroke="#80b0a0" stroke-width="1.4" opacity="0.9"/>
<path d="M296.5 111.9 l7.3 -1.4" stroke="#90c0d0" stroke-width="1.4" opacity="0.9"/>
<path d="M278.0 87.5 l3.2 -0.2" stroke="#1a3080" stroke-width="1.4" opacity="0.9"/>
<path d="M313.9 109.7 l4.1 0.2" stroke="#1a3080" stroke-width="1.4" opacity="0.9"/>
<path d="M291.9 113.9 l7.0 0.5" stroke="#1a3080" stroke-width="1.4" opacity="0.9"/>
<path d="M320.9 99.0 l7.5 1.0" stroke="#3a6ab8" stroke-width="1.4" opacity="0.9"/>
<path d="M300.5 104.9 l4.6 0.1" stroke="#90c0d0" stroke-width="1.4" opacity="0.9"/>
<path d="M304.0 87.9 l5.5 0.3" stroke="#4a80b0" stroke-width="1.4" opacity="0.9"/>
<path d="M278.9 85.3 l3.3 -0.7" stroke="#3a6ab8" stroke-width="1.4" opacity="0.9"/>
<path d="M312.5 110.3 l7.9 -0.6" stroke="#1a3080" stroke-width="1.4" opacity="0.9"/>
<path d="M291.0 112.4 l7.0 -0.9" stroke="#70a8c8" stroke-width="1.4" opacity="0.9"/>
<path d="M286.5 86.7 l7.2 -0.5" stroke="#2a4aa0" stroke-width="1.4" opacity="0.9"/>
<path d="M276.2 75.4 l5.5 0.4" stroke="#90c0d0" stroke-width="1.4" opacity="0.9"/>
<path d="M282.8 104.9 l4.9 0.5" stroke="#1a3080" stroke-width="1.4" opacity="0.9"/>
<path d="M310.1 104.9 l5.6 -0.9" stroke="#90c0d0" stroke-width="1.4" opacity="0.9"/>
<path d="M291.0 99.5 l3.0 -0.4" stroke="#70a8c8" stroke-width="1.4" opacity="0.9"/>
<path d="M305.4 84.1 l3.2 -0.6" stroke="#4a80b0" stroke-width="1.4" opacity="0.9"/>
<path d="M280.7 103.8 l6.7 -0.6" stroke="#4a80b0" stroke-width="1.4" opacity="0.9"/>
<path d="M302.0 80.4 l3.4 -0.0" stroke="#4a80b0" stroke-width="1.4" opacity="0.9"/>
<path d="M298.5 101.5 l7.5 -0.1" stroke="#2a4aa0" stroke-width="1.4" opacity="0.9"/>
<path d="M295.5 90.0 l4.8 -0.0" stroke="#3a6ab8" stroke-width="1.4" opacity="0.9"/>
<path d="M316.1 97.6 l6.0 -1.3" stroke="#1a3080" stroke-width="1.4" opacity="0.9"/>
<path d="M321.7 105.9 l5.4 0.5" stroke="#3a6ab8" stroke-width="1.4" opacity="0.9"/>
<path d="M283.4 82.8 l3.5 -0.7" stroke="#70a8c8" stroke-width="1.4" opacity="0.9"/>
<path d="M283.8 109.2 l5.3 0.2" stroke="#2a4aa0" stroke-width="1.4" opacity="0.9"/>
<path d="M286.9 99.5 l6.3 -0.5" stroke="#3a6ab8" stroke-width="1.4" opacity="0.9"/>
<path d="M282.3 90.2 l3.5 -0.1" stroke="#80b0a0" stroke-width="1.4" opacity="0.9"/>
<path d="M268.7 100.8 l7.5 -1.4" stroke="#4a80b0" stroke-width="1.4" opacity="0.9"/>
<path d="M271.5 89.3 l7.7 0.3" stroke="#80b0a0" stroke-width="1.4" opacity="0.9"/>
<path d="M285.7 109.7 l6.7 0.7" stroke="#4a80b0" stroke-width="1.4" opacity="0.9"/>
<path d="M291.4 85.6 l7.7 -0.3" stroke="#1a3080" stroke-width="1.4" opacity="0.9"/>
<path d="M318.0 106.1 l5.8 0.6" stroke="#90c0d0" stroke-width="1.4" opacity="0.9"/>
<path d="M320.0 86.8 l5.0 -0.3" stroke="#3a6ab8" stroke-width="1.4" opacity="0.9"/>
<path d="M270.6 111.4 l6.2 0.3" stroke="#3a6ab8" stroke-width="1.4" opacity="0.9"/>
<path d="M281.9 96.9 l3.6 0.2" stroke="#1a3080" stroke-width="1.4" opacity="0.9"/>
<path d="M302.0 82.3 l7.2 0.1" stroke="#1a3080" stroke-width="1.4" opacity="0.9"/>
<path d="M278.9 85.0 l7.4 -0.7" stroke="#80b0a0" stroke-width="1.4" opacity="0.9"/>
<path d="M318.9 84.0 l6.6 0.8" stroke="#4a80b0" stroke-width="1.4" opacity="0.9"/>
<path d="M291.8 112.9 l4.9 -0.9" stroke="#3a6ab8" stroke-width="1.4" opacity="0.9"/>
<path d="M308.8 101.9 l5.9 -0.2" stroke="#3a6ab8" stroke-width="1.4" opacity="0.9"/>
<path d="M304.7 94.1 l6.6 0.5" stroke="#4a80b0" stroke-width="1.4" opacity="0.9"/>
<path d="M316.0 93.3 l6.6 -0.7" stroke="#4a80b0" stroke-width="1.4" opacity="0.9"/>
<path d="M280.0 109.4 l7.7 0.8" stroke="#80b0a0" stroke-width="1.4" opacity="0.9"/>
<path d="M270.1 97.6 l7.7 1.0" stroke="#80b0a0" stroke-width="1.4" opacity="0.9"/>
<path d="M310.3 89.7 l7.3 1.0" stroke="#70a8c8" stroke-width="1.4" opacity="0.9"/>
<path d="M277.5 109.0 l7.2 -1.3" stroke="#4a80b0" stroke-width="1.4" opacity="0.9"/>
<path d="M271.7 100.2 l3.3 -0.2" stroke="#4a80b0" stroke-width="1.4" opacity="0.9"/>
<path d="M311.5 91.3 l7.2 -1.1" stroke="#90c0d0" stroke-width="1.4" opacity="0.9"/>
<path d="M278.0 102.8 l3.4 -0.0" stroke="#3a6ab8" stroke-width="1.4" opacity="0.9"/>
<path d="M304.4 88.4 l3.5 0.2" stroke="#80b0a0" stroke-width="1.4" opacity="0.9"/>
<path d="M275.8 95.2 l5.3 -0.3" stroke="#2a4aa0" stroke-width="1.4" opacity="0.9"/>
<path d="M314.2 104.5 l7.1 -0.6" stroke="#2a4aa0" stroke-width="1.4" opacity="0.9"/>
<path d="M274.5 89.2 l5.3 -0.8" stroke="#3a6ab8" stroke-width="1.4" opacity="0.9"/>
<path d="M272.5 94.1 l6.1 0.8" stroke="#2a4aa0" stroke-width="1.4" opacity="0.9"/>
<path d="M273.9 108.0 l7.8 0.2" stroke="#3a6ab8" stroke-width="1.4" opacity="0.9"/>
<path d="M299.6 95.8 l4.6 -0.8" stroke="#80b0a0" stroke-width="1.4" opacity="0.9"/>
<path d="M290.4 94.0 l4.9 0.4" stroke="#70a8c8" stroke-width="1.4" opacity="0.9"/>
<path d="M271.6 83.0 l7.7 -0.2" stroke="#3a6ab8" stroke-width="1.4" opacity="0.9"/>
<path d="M283.3 87.2 l6.4 0.8" stroke="#1a3080" stroke-width="1.4" opacity="0.9"/>
<path d="M295.0 104.0 l6.7 -0.7" stroke="#3a6ab8" stroke-width="1.4" opacity="0.9"/>
<path d="M289.6 113.8 l3.2 -0.4" stroke="#70a8c8" stroke-width="1.4" opacity="0.9"/>
<path d="M270.2 105.9 l4.4 -0.0" stroke="#80b0a0" stroke-width="1.4" opacity="0.9"/>
<path d="M309.1 77.1 l4.4 -0.4" stroke="#2a4aa0" stroke-width="1.4" opacity="0.9"/>
<path d="M318.1 88.2 l6.6 0.2" stroke="#4a80b0" stroke-width="1.4" opacity="0.9"/>
<path d="M317.0 108.4 l3.9 -0.3" stroke="#80b0a0" stroke-width="1.4" opacity="0.9"/>
<path d="M271.3 74.9 l3.5 -0.1" stroke="#80b0a0" stroke-width="1.4" opacity="0.9"/>
<path d="M287.4 81.1 l7.3 0.4" stroke="#2a4aa0" stroke-width="1.4" opacity="0.9"/>
<path d="M276.2 90.3 l7.3 0.0" stroke="#90c0d0" stroke-width="1.4" opacity="0.9"/>
<path d="M303.2 101.6 l7.0 0.1" stroke="#80b0a0" stroke-width="1.4" opacity="0.9"/>
<path d="M274.7 111.7 l5.6 -0.6" stroke="#4a80b0" stroke-width="1.4" opacity="0.9"/>
<path d="M275.4 99.6 l7.6 -0.8" stroke="#70a8c8" stroke-width="1.4" opacity="0.9"/>
<path d="M288.8 97.6 l3.3 -0.2" stroke="#80b0a0" stroke-width="1.4" opacity="0.9"/>
<path d="M316.0 103.1 l7.7 -0.1" stroke="#3a6ab8" stroke-width="1.4" opacity="0.9"/>
<path d="M308.0 95.5 l4.0 -0.8" stroke="#4a80b0" stroke-width="1.4" opacity="0.9"/>
<path d="M320.3 78.8 l4.9 -1.0" stroke="#80b0a0" stroke-width="1.4" opacity="0.9"/>
<path d="M307.9 91.2 l7.9 -0.2" stroke="#90c0d0" stroke-width="1.4" opacity="0.9"/>
<path d="M315.6 96.3 l6.7 0.4" stroke="#4a80b0" stroke-width="1.4" opacity="0.9"/>
<path d="M302.9 80.4 l6.4 0.3" stroke="#3a6ab8" stroke-width="1.4" opacity="0.9"/>
<path d="M273.8 113.2 l6.6 0.2" stroke="#80b0a0" stroke-width="1.4" opacity="0.9"/>
<path d="M310.9 92.3 l7.7 0.6" stroke="#4a80b0" stroke-width="1.4" opacity="0.9"/>
<path d="M302.5 93.8 l3.6 -0.2" stroke="#2a4aa0" stroke-width="1.4" opacity="0.9"/>
<path d="M275.3 91.6 l5.3 -0.9" stroke="#2a4aa0" stroke-width="1.4" opacity="0.9"/>
<path d="M290.4 103.3 l5.6 -0.9" stroke="#3a6ab8" stroke-width="1.4" opacity="0.9"/>
<path d="M277.1 99.0 l6.1 -0.1" stroke="#3a6ab8" stroke-width="1.4" opacity="0.9"/>
<path d="M300.7 89.0 l6.4 0.6" stroke="#80b0a0" stroke-width="1.4" opacity="0.9"/>
<path d="M284.7 109.8 l5.3 -1.0" stroke="#90c0d0" stroke-width="1.4" opacity="0.9"/>
<path d="M316.5 114.5 l6.1 0.7" stroke="#80b0a0" stroke-width="1.4" opacity="0.9"/>
<path d="M291.5 84.5 l3.3 -0.2" stroke="#2a4aa0" stroke-width="1.4" opacity="0.9"/>
<path d="M315.9 89.1 l6.9 -0.7" stroke="#3a6ab8" stroke-width="1.4" opacity="0.9"/>
<path d="M270.3 85.7 l6.8 -0.2" stroke="#90c0d0" stroke-width="1.4" opacity="0.9"/>
<path d="M276.9 85.8 l7.0 0.3" stroke="#90c0d0" stroke-width="1.4" opacity="0.9"/>
<path d="M273.5 100.9 l7.4 -1.2" stroke="#2a4aa0" stroke-width="1.4" opacity="0.9"/>
<path d="M300.1 104.6 l3.9 -0.4" stroke="#90c0d0" stroke-width="1.4" opacity="0.9"/>
<path d="M284.8 87.9 l6.9 0.3" stroke="#4a80b0" stroke-width="1.4" opacity="0.9"/>
<path d="M271.3 111.5 l4.3 0.3" stroke="#3a6ab8" stroke-width="1.4" opacity="0.9"/>
<path d="M285.5 98.5 l3.1 0.4" stroke="#4a80b0" stroke-width="1.4" opacity="0.9"/>
<path d="M317.6 114.3 l5.1 0.5" stroke="#1a3080" stroke-width="1.4" opacity="0.9"/>
<path d="M308.3 102.7 l3.8 -0.2" stroke="#80b0a0" stroke-width="1.4" opacity="0.9"/>
<path d="M316.9 101.3 l5.9 -0.9" stroke="#2a4aa0" stroke-width="1.4" opacity="0.9"/>
<path d="M279.7 101.7 l4.3 0.3" stroke="#80b0a0" stroke-width="1.4" opacity="0.9"/>
<path d="M283.6 113.1 l7.9 -0.0" stroke="#4a80b0" stroke-width="1.4" opacity="0.9"/>
<path d="M309.8 87.9 l5.9 -0.3" stroke="#80b0a0" stroke-width="1.4" opacity="0.9"/>
<path d="M317.0 77.6 l5.1 -0.7" stroke="#80b0a0" stroke-width="1.4" opacity="0.9"/>
<path d="M274.1 79.3 l3.2 -0.3" stroke="#90c0d0" stroke-width="1.4" opacity="0.9"/>
<path d="M312.9 92.9 l6.4 0.1" stroke="#4a80b0" stroke-width="1.4" opacity="0.9"/>
<path d="M275.0 108.5 l5.9 -1.0" stroke="#1a3080" stroke-width="1.4" opacity="0.9"/>
<path d="M285.3 92.8 l3.4 0.3" stroke="#90c0d0" stroke-width="1.4" opacity="0.9"/>
<path d="M320.1 89.1 l6.8 0.9" stroke="#70a8c8" stroke-width="1.4" opacity="0.9"/>
<path d="M309.3 113.5 l4.5 -0.1" stroke="#70a8c8" stroke-width="1.4" opacity="0.9"/>
<path d="M315.9 100.8 l5.0 -0.0" stroke="#1a3080" stroke-width="1.4" opacity="0.9"/>
<path d="M300.5 113.4 l3.5 -0.2" stroke="#80b0a0" stroke-width="1.4" opacity="0.9"/>
<path d="M315.1 75.7 l7.5 -1.6" stroke="#3a6ab8" stroke-width="1.4" opacity="0.9"/>
<path d="M274.1 74.8 l7.0 -1.3" stroke="#3a6ab8" stroke-width="1.4" opacity="0.9"/>
<path d="M290.0 97.8 l3.0 -0.6" stroke="#70a8c8" stroke-width="1.4" opacity="0.9"/>
<path d="M278.0 110.7 l5.3 0.3" stroke="#3a6ab8" stroke-width="1.4" opacity="0.9"/>
<path d="M289.3 102.5 l4.7 -0.5" stroke="#90c0d0" stroke-width="1.4" opacity="0.9"/>
<path d="M305.9 104.7 l6.5 -0.8" stroke="#3a6ab8" stroke-width="1.4" opacity="0.9"/>
<path d="M269.1 87.0 l4.2 -0.0" stroke="#1a3080" stroke-width="1.4" opacity="0.9"/>
<path d="M272.7 102.3 l4.3 -0.7" stroke="#3a6ab8" stroke-width="1.4" opacity="0.9"/>
<path d="M271.3 95.8 l5.0 -0.1" stroke="#4a80b0" stroke-width="1.4" opacity="0.9"/>
<path d="M277.3 104.1 l4.6 0.3" stroke="#2a4aa0" stroke-width="1.4" opacity="0.9"/>
<path d="M315.2 97.7 l4.9 0.3" stroke="#70a8c8" stroke-width="1.4" opacity="0.9"/>
<path d="M297.6 103.3 l4.5 -0.6" stroke="#1a3080" stroke-width="1.4" opacity="0.9"/>
<path d="M285.2 101.7 l5.3 0.6" stroke="#80b0a0" stroke-width="1.4" opacity="0.9"/>
<path d="M291.4 107.5 l5.4 0.3" stroke="#2a4aa0" stroke-width="1.4" opacity="0.9"/>
<path d="M282.7 80.0 l6.6 -0.8" stroke="#4a80b0" stroke-width="1.4" opacity="0.9"/>
<path d="M292.9 90.4 l4.7 0.1" stroke="#3a6ab8" stroke-width="1.4" opacity="0.9"/>
<path d="M280.4 102.9 l5.2 -0.2" stroke="#2a4aa0" stroke-width="1.4" opacity="0.9"/>
<path d="M318.7 73.0 l4.5 -0.3" stroke="#80b0a0" stroke-width="1.4" opacity="0.9"/>
<path d="M314.6 93.7 l4.5 -0.1" stroke="#90c0d0" stroke-width="1.4" opacity="0.9"/>
<path d="M314.8 78.4 l4.4 -0.0" stroke="#1a3080" stroke-width="1.4" opacity="0.9"/>
<path d="M307.8 108.4 l5.2 -0.3" stroke="#80b0a0" stroke-width="1.4" opacity="0.9"/>
<path d="M320.5 76.6 l4.4 -0.6" stroke="#70a8c8" stroke-width="1.4" opacity="0.9"/>
<path d="M307.6 110.7 l3.5 -0.3" stroke="#2a4aa0" stroke-width="1.4" opacity="0.9"/>
<path d="M301.0 83.1 l5.2 -0.4" stroke="#4a80b0" stroke-width="1.4" opacity="0.9"/>
<path d="M309.5 92.6 l4.7 -0.9" stroke="#80b0a0" stroke-width="1.4" opacity="0.9"/>
<path d="M281.8 104.4 l3.5 0.2" stroke="#80b0a0" stroke-width="1.4" opacity="0.9"/>
<path d="M302.3 101.5 l5.0 -0.9" stroke="#80b0a0" stroke-width="1.4" opacity="0.9"/>
<path d="M285.3 101.2 l4.8 -0.3" stroke="#3a6ab8" stroke-width="1.4" opacity="0.9"/>
<path d="M317.8 101.8 l4.6 0.6" stroke="#1a3080" stroke-width="1.4" opacity="0.9"/>
<path d="M294.2 94.5 l6.4 0.3" stroke="#4a80b0" stroke-width="1.4" opacity="0.9"/>
<path d="M275.9 95.3 l7.5 -0.9" stroke="#70a8c8" stroke-width="1.4" opacity="0.9"/>
<path d="M294.5 79.1 l4.0 -0.3" stroke="#2a4aa0" stroke-width="1.4" opacity="0.9"/>
<path d="M318.1 101.8 l5.8 0.5" stroke="#90c0d0" stroke-width="1.4" opacity="0.9"/>
<path d="M273.5 75.9 l6.2 0.1" stroke="#2a4aa0" stroke-width="1.4" opacity="0.9"/>
<path d="M283.0 104.8 l4.6 -0.1" stroke="#90c0d0" stroke-width="1.4" opacity="0.9"/>
<path d="M309.3 101.2 l6.5 0.5" stroke="#1a3080" stroke-width="1.4" opacity="0.9"/>
<path d="M288.8 101.1 l4.5 -0.0" stroke="#70a8c8" stroke-width="1.4" opacity="0.9"/>
<path d="M315.8 107.7 l5.3 -0.0" stroke="#80b0a0" stroke-width="1.4" opacity="0.9"/>
<path d="M273.5 92.4 l5.1 0.7" stroke="#90c0d0" stroke-width="1.4" opacity="0.9"/>
<path d="M285.8 98.1 l5.0 0.5" stroke="#2a4aa0" stroke-width="1.4" opacity="0.9"/>
<path d="M273.1 91.1 l6.1 -0.3" stroke="#70a8c8" stroke-width="1.4" opacity="0.9"/>
<path d="M 0 0" />
<circle cx="293.5" cy="41" r="18.5" fill="#f0922a"/>
<circle cx="299" cy="36.5" r="13" fill="#f4ea60"/>
<path d="M281 48 C286 55 296 58 306 53" stroke="#e06018" stroke-width="1.5" fill="none" opacity="0.6"/>
<path d="M270 111 L322 98 V131 L298 133 L270 153Z" fill="#dcdc60"/>
<path d="M267.7 101.8 l3.7 -1.6" stroke="#f4f080" stroke-width="1.2" opacity="0.85"/>
<path d="M293.4 135.4 l3.8 -2.2" stroke="#4a7a80" stroke-width="1.2" opacity="0.85"/>
<path d="M302.2 131.8 l8.0 -5.9" stroke="#e8e068" stroke-width="1.2" opacity="0.85"/>
<path d="M307.6 120.4 l4.9 -2.3" stroke="#4a7a80" stroke-width="1.2" opacity="0.85"/>
<path d="M311.2 111.4 l7.7 -3.6" stroke="#f4f080" stroke-width="1.2" opacity="0.85"/>
<path d="M303.3 99.0 l6.2 -2.6" stroke="#fff8a0" stroke-width="1.2" opacity="0.85"/>
<path d="M289.8 142.1 l6.1 -3.9" stroke="#6a9a70" stroke-width="1.2" opacity="0.85"/>
<path d="M309.3 129.5 l7.6 -5.6" stroke="#6a9a70" stroke-width="1.2" opacity="0.85"/>
<path d="M302.6 96.6 l5.8 -2.8" stroke="#a8c060" stroke-width="1.2" opacity="0.85"/>
<path d="M312.8 121.8 l7.6 -4.6" stroke="#a8c060" stroke-width="1.2" opacity="0.85"/>
<path d="M267.0 135.4 l4.4 -2.4" stroke="#fff8a0" stroke-width="1.2" opacity="0.85"/>
<path d="M282.2 131.3 l5.6 -4.3" stroke="#e8e068" stroke-width="1.2" opacity="0.85"/>
<path d="M314.9 106.3 l7.1 -4.4" stroke="#4a7a80" stroke-width="1.2" opacity="0.85"/>
<path d="M271.3 108.8 l8.1 -3.8" stroke="#f4f080" stroke-width="1.2" opacity="0.85"/>
<path d="M292.2 136.0 l4.5 -2.0" stroke="#e8e068" stroke-width="1.2" opacity="0.85"/>
<path d="M306.2 108.4 l5.0 -2.4" stroke="#6a9a70" stroke-width="1.2" opacity="0.85"/>
<path d="M279.5 120.6 l4.7 -2.3" stroke="#4a7a80" stroke-width="1.2" opacity="0.85"/>
<path d="M308.6 99.8 l4.3 -3.1" stroke="#4a7a80" stroke-width="1.2" opacity="0.85"/>
<path d="M270.6 136.1 l6.7 -2.9" stroke="#6a9a70" stroke-width="1.2" opacity="0.85"/>
<path d="M302.7 142.3 l5.9 -3.9" stroke="#f4f080" stroke-width="1.2" opacity="0.85"/>
<path d="M291.4 138.4 l7.6 -3.9" stroke="#f4f080" stroke-width="1.2" opacity="0.85"/>
<path d="M291.5 147.5 l5.1 -3.7" stroke="#4a7a80" stroke-width="1.2" opacity="0.85"/>
<path d="M316.2 151.2 l5.4 -3.8" stroke="#6a9a70" stroke-width="1.2" opacity="0.85"/>
<path d="M275.7 140.5 l8.1 -5.3" stroke="#6a9a70" stroke-width="1.2" opacity="0.85"/>
<path d="M320.3 107.9 l5.2 -2.4" stroke="#a8c060" stroke-width="1.2" opacity="0.85"/>
<path d="M283.3 148.0 l6.0 -3.8" stroke="#a8c060" stroke-width="1.2" opacity="0.85"/>
<path d="M284.0 134.6 l5.2 -3.4" stroke="#6a9a70" stroke-width="1.2" opacity="0.85"/>
<path d="M267.4 120.7 l7.4 -4.1" stroke="#fff8a0" stroke-width="1.2" opacity="0.85"/>
<path d="M321.3 134.2 l4.7 -2.9" stroke="#f4f080" stroke-width="1.2" opacity="0.85"/>
<path d="M317.9 119.1 l5.6 -2.4" stroke="#fff8a0" stroke-width="1.2" opacity="0.85"/>
<path d="M292.2 149.6 l8.7 -4.7" stroke="#e8e068" stroke-width="1.2" opacity="0.85"/>
<path d="M278.8 141.5 l5.6 -3.3" stroke="#a8c060" stroke-width="1.2" opacity="0.85"/>
<path d="M282.6 121.1 l8.3 -5.4" stroke="#fff8a0" stroke-width="1.2" opacity="0.85"/>
<path d="M267.9 137.9 l4.1 -2.6" stroke="#e8e068" stroke-width="1.2" opacity="0.85"/>
<path d="M312.5 127.2 l7.3 -4.0" stroke="#4a7a80" stroke-width="1.2" opacity="0.85"/>
<path d="M314.6 106.8 l5.1 -3.0" stroke="#4a7a80" stroke-width="1.2" opacity="0.85"/>
<path d="M266.8 139.1 l6.2 -3.6" stroke="#4a7a80" stroke-width="1.2" opacity="0.85"/>
<path d="M267.2 127.0 l6.4 -3.6" stroke="#4a7a80" stroke-width="1.2" opacity="0.85"/>
<path d="M314.7 124.5 l8.9 -4.0" stroke="#6a9a70" stroke-width="1.2" opacity="0.85"/>
<path d="M289.6 125.7 l5.1 -3.5" stroke="#4a7a80" stroke-width="1.2" opacity="0.85"/>
<path d="M306.3 151.5 l7.4 -4.2" stroke="#4a7a80" stroke-width="1.2" opacity="0.85"/>
<path d="M296.1 149.0 l4.6 -2.8" stroke="#fff8a0" stroke-width="1.2" opacity="0.85"/>
<path d="M302.8 125.3 l7.4 -3.8" stroke="#a8c060" stroke-width="1.2" opacity="0.85"/>
<path d="M308.7 109.1 l7.3 -3.2" stroke="#e8e068" stroke-width="1.2" opacity="0.85"/>
<path d="M299.4 139.4 l3.8 -1.7" stroke="#fff8a0" stroke-width="1.2" opacity="0.85"/>
<path d="M299.5 113.4 l7.3 -5.1" stroke="#fff8a0" stroke-width="1.2" opacity="0.85"/>
<path d="M276.0 99.9 l4.8 -2.5" stroke="#6a9a70" stroke-width="1.2" opacity="0.85"/>
<path d="M270.9 112.5 l7.6 -3.9" stroke="#a8c060" stroke-width="1.2" opacity="0.85"/>
<path d="M274.2 130.1 l6.5 -4.4" stroke="#4a7a80" stroke-width="1.2" opacity="0.85"/>
<path d="M279.4 96.8 l6.0 -4.2" stroke="#fff8a0" stroke-width="1.2" opacity="0.85"/>
<path d="M303.4 108.0 l7.4 -4.0" stroke="#6a9a70" stroke-width="1.2" opacity="0.85"/>
<path d="M271.8 144.7 l6.5 -3.4" stroke="#4a7a80" stroke-width="1.2" opacity="0.85"/>
<path d="M320.1 146.9 l6.1 -2.6" stroke="#fff8a0" stroke-width="1.2" opacity="0.85"/>
<path d="M285.3 106.7 l4.7 -2.7" stroke="#a8c060" stroke-width="1.2" opacity="0.85"/>
<path d="M282.1 97.6 l7.0 -4.2" stroke="#a8c060" stroke-width="1.2" opacity="0.85"/>
<path d="M288.8 135.8 l4.8 -2.8" stroke="#a8c060" stroke-width="1.2" opacity="0.85"/>
<path d="M274.0 101.7 l5.4 -2.6" stroke="#6a9a70" stroke-width="1.2" opacity="0.85"/>
<path d="M286.7 126.3 l4.1 -2.5" stroke="#4a7a80" stroke-width="1.2" opacity="0.85"/>
<path d="M312.2 141.8 l7.8 -5.3" stroke="#f4f080" stroke-width="1.2" opacity="0.85"/>
<path d="M278.6 118.4 l7.4 -4.2" stroke="#a8c060" stroke-width="1.2" opacity="0.85"/>
<path d="M305.9 108.3 l6.5 -4.0" stroke="#a8c060" stroke-width="1.2" opacity="0.85"/>
<path d="M301.7 105.5 l6.5 -4.6" stroke="#fff8a0" stroke-width="1.2" opacity="0.85"/>
<path d="M290.5 121.4 l4.2 -3.1" stroke="#4a7a80" stroke-width="1.2" opacity="0.85"/>
<path d="M291.6 97.6 l3.9 -1.8" stroke="#6a9a70" stroke-width="1.2" opacity="0.85"/>
<path d="M275.1 138.7 l5.4 -3.8" stroke="#a8c060" stroke-width="1.2" opacity="0.85"/>
<path d="M285.4 109.8 l7.8 -4.6" stroke="#a8c060" stroke-width="1.2" opacity="0.85"/>
<path d="M267.7 147.8 l7.5 -3.4" stroke="#6a9a70" stroke-width="1.2" opacity="0.85"/>
<path d="M307.5 114.6 l4.4 -2.3" stroke="#a8c060" stroke-width="1.2" opacity="0.85"/>
<path d="M282.0 146.4 l8.3 -3.6" stroke="#a8c060" stroke-width="1.2" opacity="0.85"/>
<path d="M314.4 106.0 l7.1 -4.7" stroke="#fff8a0" stroke-width="1.2" opacity="0.85"/>
<path d="M267.2 125.9 l6.0 -4.1" stroke="#e8e068" stroke-width="1.2" opacity="0.85"/>
<path d="M310.8 110.1 l3.7 -2.2" stroke="#e8e068" stroke-width="1.2" opacity="0.85"/>
<path d="M289.5 103.3 l6.2 -4.1" stroke="#f4f080" stroke-width="1.2" opacity="0.85"/>
<path d="M270.7 133.3 l5.5 -3.2" stroke="#4a7a80" stroke-width="1.2" opacity="0.85"/>
<path d="M306.5 147.3 l5.4 -2.9" stroke="#a8c060" stroke-width="1.2" opacity="0.85"/>
<path d="M319.7 149.4 l3.8 -1.9" stroke="#f4f080" stroke-width="1.2" opacity="0.85"/>
<path d="M296.3 98.4 l4.0 -2.5" stroke="#a8c060" stroke-width="1.2" opacity="0.85"/>
<path d="M306.2 123.8 l7.9 -5.2" stroke="#e8e068" stroke-width="1.2" opacity="0.85"/>
<path d="M300.1 139.2 l4.3 -1.9" stroke="#fff8a0" stroke-width="1.2" opacity="0.85"/>
<path d="M299.1 142.3 l6.3 -3.8" stroke="#a8c060" stroke-width="1.2" opacity="0.85"/>
<path d="M299.8 102.1 l8.2 -5.0" stroke="#fff8a0" stroke-width="1.2" opacity="0.85"/>
<path d="M295.0 148.9 l4.9 -3.8" stroke="#6a9a70" stroke-width="1.2" opacity="0.85"/>
<path d="M300.6 119.2 l7.7 -4.4" stroke="#6a9a70" stroke-width="1.2" opacity="0.85"/>
<path d="M306.5 106.7 l8.0 -4.4" stroke="#a8c060" stroke-width="1.2" opacity="0.85"/>
<path d="M283.8 126.2 l9.1 -4.0" stroke="#6a9a70" stroke-width="1.2" opacity="0.85"/>
<path d="M269.2 104.3 l6.7 -3.5" stroke="#fff8a0" stroke-width="1.2" opacity="0.85"/>
<path d="M276.1 140.1 l7.0 -4.5" stroke="#e8e068" stroke-width="1.2" opacity="0.85"/>
<path d="M302.1 129.0 l8.2 -5.2" stroke="#fff8a0" stroke-width="1.2" opacity="0.85"/>
<path d="M304.8 127.8 l5.2 -2.3" stroke="#e8e068" stroke-width="1.2" opacity="0.85"/>
<path d="M292.3 97.7 l6.1 -2.6" stroke="#f4f080" stroke-width="1.2" opacity="0.85"/>
<path d="M286.4 102.6 l6.4 -4.1" stroke="#fff8a0" stroke-width="1.2" opacity="0.85"/>
<path d="M269.0 137.5 l3.9 -2.5" stroke="#e8e068" stroke-width="1.2" opacity="0.85"/>
<path d="M314.6 100.9 l4.6 -2.8" stroke="#f4f080" stroke-width="1.2" opacity="0.85"/>
<path d="M283.3 149.6 l4.2 -1.8" stroke="#f4f080" stroke-width="1.2" opacity="0.85"/>
<path d="M317.0 133.9 l5.8 -3.3" stroke="#e8e068" stroke-width="1.2" opacity="0.85"/>
<path d="M285.7 149.5 l7.8 -5.2" stroke="#fff8a0" stroke-width="1.2" opacity="0.85"/>
<path d="M317.4 108.0 l5.7 -2.8" stroke="#fff8a0" stroke-width="1.2" opacity="0.85"/>
<path d="M285.2 151.6 l5.0 -3.4" stroke="#e8e068" stroke-width="1.2" opacity="0.85"/>
<path d="M281.4 145.0 l5.1 -2.2" stroke="#f4f080" stroke-width="1.2" opacity="0.85"/>
<path d="M297.9 112.9 l3.2 -2.4" stroke="#6a9a70" stroke-width="1.2" opacity="0.85"/>
<path d="M319.7 149.9 l5.2 -2.2" stroke="#6a9a70" stroke-width="1.2" opacity="0.85"/>
<path d="M295.2 133.8 l5.2 -2.5" stroke="#e8e068" stroke-width="1.2" opacity="0.85"/>
<path d="M282.0 102.0 l4.2 -2.8" stroke="#a8c060" stroke-width="1.2" opacity="0.85"/>
<path d="M319.4 118.5 l8.8 -3.8" stroke="#e8e068" stroke-width="1.2" opacity="0.85"/>
<path d="M296.4 141.1 l7.0 -3.1" stroke="#a8c060" stroke-width="1.2" opacity="0.85"/>
<path d="M297.2 97.4 l6.0 -3.2" stroke="#fff8a0" stroke-width="1.2" opacity="0.85"/>
<path d="M292.5 123.5 l5.5 -3.9" stroke="#f4f080" stroke-width="1.2" opacity="0.85"/>
<path d="M318.2 150.4 l5.4 -3.0" stroke="#6a9a70" stroke-width="1.2" opacity="0.85"/>
<path d="M308.4 100.7 l6.8 -4.4" stroke="#fff8a0" stroke-width="1.2" opacity="0.85"/>
<path d="M276.7 144.4 l5.5 -2.3" stroke="#4a7a80" stroke-width="1.2" opacity="0.85"/>
<path d="M271.4 125.0 l6.9 -3.2" stroke="#e8e068" stroke-width="1.2" opacity="0.85"/>
<path d="M295.9 117.1 l4.5 -1.9" stroke="#6a9a70" stroke-width="1.2" opacity="0.85"/>
<path d="M285.0 132.4 l7.5 -3.8" stroke="#4a7a80" stroke-width="1.2" opacity="0.85"/>
<path d="M276.7 99.9 l5.5 -3.5" stroke="#fff8a0" stroke-width="1.2" opacity="0.85"/>
<path d="M271.6 127.0 l4.2 -2.8" stroke="#e8e068" stroke-width="1.2" opacity="0.85"/>
<path d="M269.6 125.8 l7.5 -4.3" stroke="#fff8a0" stroke-width="1.2" opacity="0.85"/>
<path d="M297.6 96.6 l6.1 -3.2" stroke="#4a7a80" stroke-width="1.2" opacity="0.85"/>
<path d="M294.7 115.7 l4.2 -2.9" stroke="#f4f080" stroke-width="1.2" opacity="0.85"/>
<path d="M269.8 97.8 l5.8 -4.3" stroke="#f4f080" stroke-width="1.2" opacity="0.85"/>
<path d="M279.5 124.1 l4.5 -3.5" stroke="#e8e068" stroke-width="1.2" opacity="0.85"/>
<path d="M304.1 102.8 l6.1 -4.1" stroke="#4a7a80" stroke-width="1.2" opacity="0.85"/>
<path d="M287.7 146.5 l5.5 -2.8" stroke="#6a9a70" stroke-width="1.2" opacity="0.85"/>
<path d="M272.7 110.1 l7.6 -5.8" stroke="#6a9a70" stroke-width="1.2" opacity="0.85"/>
<path d="M283.1 113.8 l6.8 -4.6" stroke="#6a9a70" stroke-width="1.2" opacity="0.85"/>
<path d="M283.8 100.7 l4.2 -3.3" stroke="#e8e068" stroke-width="1.2" opacity="0.85"/>
<path d="M300.9 104.1 l4.1 -2.8" stroke="#e8e068" stroke-width="1.2" opacity="0.85"/>
<path d="M315.8 128.9 l5.1 -3.8" stroke="#f4f080" stroke-width="1.2" opacity="0.85"/>
<path d="M306.5 141.5 l6.8 -3.2" stroke="#fff8a0" stroke-width="1.2" opacity="0.85"/>
<path d="M311.8 96.1 l4.9 -3.0" stroke="#fff8a0" stroke-width="1.2" opacity="0.85"/>
<path d="M285.2 138.9 l5.7 -3.9" stroke="#f4f080" stroke-width="1.2" opacity="0.85"/>
<path d="M301.1 121.7 l8.3 -4.7" stroke="#fff8a0" stroke-width="1.2" opacity="0.85"/>
<path d="M292.8 116.4 l9.1 -4.1" stroke="#fff8a0" stroke-width="1.2" opacity="0.85"/>
<path d="M279.1 145.5 l5.5 -2.8" stroke="#a8c060" stroke-width="1.2" opacity="0.85"/>
<path d="M297.0 113.0 l4.3 -2.6" stroke="#6a9a70" stroke-width="1.2" opacity="0.85"/>
<path d="M275.7 103.1 l7.6 -4.2" stroke="#f4f080" stroke-width="1.2" opacity="0.85"/>
<path d="M271.7 132.9 l6.8 -4.7" stroke="#a8c060" stroke-width="1.2" opacity="0.85"/>
<path d="M269.2 105.5 l3.7 -2.1" stroke="#f4f080" stroke-width="1.2" opacity="0.85"/>
<path d="M299.0 129.9 l3.4 -2.6" stroke="#fff8a0" stroke-width="1.2" opacity="0.85"/>
<path d="M297.6 115.8 l6.6 -3.4" stroke="#e8e068" stroke-width="1.2" opacity="0.85"/>
<path d="M273.4 132.2 l7.3 -4.5" stroke="#f4f080" stroke-width="1.2" opacity="0.85"/>
<path d="M284.6 108.5 l5.2 -4.0" stroke="#a8c060" stroke-width="1.2" opacity="0.85"/>
<path d="M315.7 117.8 l3.4 -2.4" stroke="#fff8a0" stroke-width="1.2" opacity="0.85"/>
<path d="M305.5 100.9 l4.9 -3.0" stroke="#6a9a70" stroke-width="1.2" opacity="0.85"/>
<path d="M285.2 98.4 l4.2 -2.6" stroke="#a8c060" stroke-width="1.2" opacity="0.85"/>
<path d="M267.8 128.0 l8.6 -4.3" stroke="#fff8a0" stroke-width="1.2" opacity="0.85"/>
<path d="M314.9 133.2 l3.6 -2.4" stroke="#fff8a0" stroke-width="1.2" opacity="0.85"/>
<path d="M305.4 130.7 l5.0 -3.6" stroke="#e8e068" stroke-width="1.2" opacity="0.85"/>
<path d="M303.4 112.7 l6.2 -2.8" stroke="#a8c060" stroke-width="1.2" opacity="0.85"/>
<path d="M266.6 102.8 l7.5 -3.6" stroke="#f4f080" stroke-width="1.2" opacity="0.85"/>
<path d="M319.1 117.4 l5.9 -3.8" stroke="#e8e068" stroke-width="1.2" opacity="0.85"/>
<path d="M319.1 120.5 l8.1 -4.7" stroke="#fff8a0" stroke-width="1.2" opacity="0.85"/>
<path d="M293.4 133.0 l8.1 -4.9" stroke="#e8e068" stroke-width="1.2" opacity="0.85"/>
<path d="M310.6 111.9 l5.5 -2.8" stroke="#a8c060" stroke-width="1.2" opacity="0.85"/>
<path d="M278.1 139.5 l3.9 -2.0" stroke="#e8e068" stroke-width="1.2" opacity="0.85"/>
<path d="M321.9 141.9 l6.3 -3.1" stroke="#4a7a80" stroke-width="1.2" opacity="0.85"/>
<path d="M313.2 123.7 l6.0 -3.8" stroke="#e8e068" stroke-width="1.2" opacity="0.85"/>
<path d="M273.4 145.2 l4.8 -3.4" stroke="#6a9a70" stroke-width="1.2" opacity="0.85"/>
<path d="M315.0 139.8 l8.7 -4.1" stroke="#a8c060" stroke-width="1.2" opacity="0.85"/>
<path d="M278.2 144.0 l3.7 -2.8" stroke="#6a9a70" stroke-width="1.2" opacity="0.85"/>
<path d="M306.9 146.0 l6.0 -3.7" stroke="#4a7a80" stroke-width="1.2" opacity="0.85"/>
<path d="M270 153 L285 146 L297 134 L322 130 V261 H270Z" fill="#1a1030"/>
<path d="M304.0 151.2 l3 -3" stroke="#5060b0" stroke-width="1.2" opacity="0.8"/>
<path d="M278.0 162.7 l3 -3" stroke="#3040a0" stroke-width="1.2" opacity="0.8"/>
<path d="M272.6 158.6 l3 -3" stroke="#202060" stroke-width="1.2" opacity="0.8"/>
<path d="M291.5 159.2 l3 -3" stroke="#202060" stroke-width="1.2" opacity="0.8"/>
<path d="M305.3 160.2 l3 -3" stroke="#3040a0" stroke-width="1.2" opacity="0.8"/>
<path d="M278.9 160.3 l3 -3" stroke="#5060b0" stroke-width="1.2" opacity="0.8"/>
<path d="M307.8 142.5 l3 -3" stroke="#5060b0" stroke-width="1.2" opacity="0.8"/>
<path d="M317.0 158.7 l3 -3" stroke="#202060" stroke-width="1.2" opacity="0.8"/>
<path d="M286.3 149.4 l3 -3" stroke="#202060" stroke-width="1.2" opacity="0.8"/>
<path d="M308.0 157.0 l3 -3" stroke="#202060" stroke-width="1.2" opacity="0.8"/>
<path d="M284.1 158.5 l3 -3" stroke="#3040a0" stroke-width="1.2" opacity="0.8"/>
<path d="M311.0 153.3 l3 -3" stroke="#3040a0" stroke-width="1.2" opacity="0.8"/>
<path d="M309.4 155.4 l3 -3" stroke="#202060" stroke-width="1.2" opacity="0.8"/>
<path d="M305.5 151.6 l3 -3" stroke="#5060b0" stroke-width="1.2" opacity="0.8"/>
<path d="M321.3 161.6 l3 -3" stroke="#3040a0" stroke-width="1.2" opacity="0.8"/>
<path d="M284.5 160.0 l3 -3" stroke="#3040a0" stroke-width="1.2" opacity="0.8"/>
<path d="M320.1 157.2 l3 -3" stroke="#5060b0" stroke-width="1.2" opacity="0.8"/>
<path d="M289.5 159.6 l3 -3" stroke="#5060b0" stroke-width="1.2" opacity="0.8"/>
<path d="M283.1 155.8 l3 -3" stroke="#3040a0" stroke-width="1.2" opacity="0.8"/>
<path d="M317.4 148.3 l3 -3" stroke="#3040a0" stroke-width="1.2" opacity="0.8"/>
<path d="M294.7 162.5 l3 -3" stroke="#202060" stroke-width="1.2" opacity="0.8"/>
<path d="M315.0 149.4 l3 -3" stroke="#3040a0" stroke-width="1.2" opacity="0.8"/>
<path d="M281.5 156.9 l3 -3" stroke="#5060b0" stroke-width="1.2" opacity="0.8"/>
<path d="M297.4 159.5 l3 -3" stroke="#202060" stroke-width="1.2" opacity="0.8"/>
<path d="M287.1 162.7 l3 -3" stroke="#5060b0" stroke-width="1.2" opacity="0.8"/>
<path d="M313.2 162.9 l3 -3" stroke="#5060b0" stroke-width="1.2" opacity="0.8"/>
<path d="M311.3 145.4 l3 -3" stroke="#202060" stroke-width="1.2" opacity="0.8"/>
<path d="M315.2 159.1 l3 -3" stroke="#202060" stroke-width="1.2" opacity="0.8"/>
<path d="M300.2 149.8 l3 -3" stroke="#202060" stroke-width="1.2" opacity="0.8"/>
<path d="M299.5 151.6 l3 -3" stroke="#202060" stroke-width="1.2" opacity="0.8"/>
<path d="M305.3 147.8 l3 -3" stroke="#3040a0" stroke-width="1.2" opacity="0.8"/>
<path d="M300.7 157.1 l3 -3" stroke="#202060" stroke-width="1.2" opacity="0.8"/>
<path d="M321.4 149.6 l3 -3" stroke="#202060" stroke-width="1.2" opacity="0.8"/>
<path d="M303.6 150.9 l3 -3" stroke="#202060" stroke-width="1.2" opacity="0.8"/>
<path d="M292.8 150.0 l3 -3" stroke="#3040a0" stroke-width="1.2" opacity="0.8"/>
<path d="M304.4 151.6 l3 -3" stroke="#3040a0" stroke-width="1.2" opacity="0.8"/>
<path d="M302.6 142.6 l3 -3" stroke="#202060" stroke-width="1.2" opacity="0.8"/>
<path d="M274.0 153.8 l3 -3" stroke="#5060b0" stroke-width="1.2" opacity="0.8"/>
<path d="M286.6 156.6 l3 -3" stroke="#5060b0" stroke-width="1.2" opacity="0.8"/>
<path d="M289.8 149.6 l3 -3" stroke="#3040a0" stroke-width="1.2" opacity="0.8"/>
<path d="M292.2 163.2 l3 -3" stroke="#202060" stroke-width="1.2" opacity="0.8"/>
<path d="M311.6 143.5 l3 -3" stroke="#202060" stroke-width="1.2" opacity="0.8"/>
<path d="M317.4 149.1 l3 -3" stroke="#5060b0" stroke-width="1.2" opacity="0.8"/>
<path d="M303.8 153.6 l3 -3" stroke="#5060b0" stroke-width="1.2" opacity="0.8"/>
<path d="M287.8 158.0 l3 -3" stroke="#202060" stroke-width="1.2" opacity="0.8"/>
<path d="M301.0 150.1 l3 -3" stroke="#202060" stroke-width="1.2" opacity="0.8"/>
<path d="M274.3 151.8 l3 -3" stroke="#202060" stroke-width="1.2" opacity="0.8"/>
<path d="M298.6 142.0 l3 -3" stroke="#5060b0" stroke-width="1.2" opacity="0.8"/>
<path d="M305.9 153.1 l3 -3" stroke="#202060" stroke-width="1.2" opacity="0.8"/>
<path d="M293.8 155.4 l3 -3" stroke="#3040a0" stroke-width="1.2" opacity="0.8"/>
<path d="M280.2 158.0 l3 -3" stroke="#5060b0" stroke-width="1.2" opacity="0.8"/>
<path d="M297.1 149.0 l3 -3" stroke="#202060" stroke-width="1.2" opacity="0.8"/>
<path d="M286.5 146.1 l3 -3" stroke="#202060" stroke-width="1.2" opacity="0.8"/>
<path d="M314.6 147.0 l3 -3" stroke="#5060b0" stroke-width="1.2" opacity="0.8"/>
<path d="M270 170 C290 163 305 160 322 158 V189 H270Z" fill="#5050b0"/>
<path d="M296.1 177.4 l4 -5" stroke="#6a70c8" stroke-width="1.1" opacity="0.85"/>
<path d="M321.5 186.2 l4 -5" stroke="#6a70c8" stroke-width="1.1" opacity="0.85"/>
<path d="M285.3 168.1 l4 -5" stroke="#8080d8" stroke-width="1.1" opacity="0.85"/>
<path d="M272.1 179.3 l4 -5" stroke="#3a3a90" stroke-width="1.1" opacity="0.85"/>
<path d="M288.0 167.2 l4 -5" stroke="#8080d8" stroke-width="1.1" opacity="0.85"/>
<path d="M271.5 167.4 l4 -5" stroke="#3a3a90" stroke-width="1.1" opacity="0.85"/>
<path d="M291.2 188.1 l4 -5" stroke="#3a3a90" stroke-width="1.1" opacity="0.85"/>
<path d="M273.8 161.8 l4 -5" stroke="#8080d8" stroke-width="1.1" opacity="0.85"/>
<path d="M292.0 167.7 l4 -5" stroke="#3a3a90" stroke-width="1.1" opacity="0.85"/>
<path d="M286.6 168.9 l4 -5" stroke="#3a3a90" stroke-width="1.1" opacity="0.85"/>
<path d="M283.0 167.1 l4 -5" stroke="#8080d8" stroke-width="1.1" opacity="0.85"/>
<path d="M311.4 179.0 l4 -5" stroke="#3a3a90" stroke-width="1.1" opacity="0.85"/>
<path d="M319.6 174.1 l4 -5" stroke="#9090e0" stroke-width="1.1" opacity="0.85"/>
<path d="M284.5 183.7 l4 -5" stroke="#8080d8" stroke-width="1.1" opacity="0.85"/>
<path d="M266.4 177.8 l4 -5" stroke="#3a3a90" stroke-width="1.1" opacity="0.85"/>
<path d="M296.5 187.4 l4 -5" stroke="#8080d8" stroke-width="1.1" opacity="0.85"/>
<path d="M312.8 188.4 l4 -5" stroke="#6a70c8" stroke-width="1.1" opacity="0.85"/>
<path d="M284.8 176.3 l4 -5" stroke="#3a3a90" stroke-width="1.1" opacity="0.85"/>
<path d="M270.9 173.5 l4 -5" stroke="#9090e0" stroke-width="1.1" opacity="0.85"/>
<path d="M303.2 188.7 l4 -5" stroke="#9090e0" stroke-width="1.1" opacity="0.85"/>
<path d="M310.1 164.9 l4 -5" stroke="#3a3a90" stroke-width="1.1" opacity="0.85"/>
<path d="M298.3 188.0 l4 -5" stroke="#9090e0" stroke-width="1.1" opacity="0.85"/>
<path d="M267.0 167.5 l4 -5" stroke="#6a70c8" stroke-width="1.1" opacity="0.85"/>
<path d="M273.7 167.1 l4 -5" stroke="#9090e0" stroke-width="1.1" opacity="0.85"/>
<path d="M287.6 178.6 l4 -5" stroke="#8080d8" stroke-width="1.1" opacity="0.85"/>
<path d="M303.0 184.6 l4 -5" stroke="#9090e0" stroke-width="1.1" opacity="0.85"/>
<path d="M273.9 159.3 l4 -5" stroke="#3a3a90" stroke-width="1.1" opacity="0.85"/>
<path d="M282.0 163.3 l4 -5" stroke="#3a3a90" stroke-width="1.1" opacity="0.85"/>
<path d="M270.4 166.9 l4 -5" stroke="#6a70c8" stroke-width="1.1" opacity="0.85"/>
<path d="M302.8 166.9 l4 -5" stroke="#6a70c8" stroke-width="1.1" opacity="0.85"/>
<path d="M284.6 176.0 l4 -5" stroke="#8080d8" stroke-width="1.1" opacity="0.85"/>
<path d="M316.3 187.0 l4 -5" stroke="#3a3a90" stroke-width="1.1" opacity="0.85"/>
<path d="M287.5 166.1 l4 -5" stroke="#9090e0" stroke-width="1.1" opacity="0.85"/>
<path d="M266.3 186.6 l4 -5" stroke="#3a3a90" stroke-width="1.1" opacity="0.85"/>
<path d="M309.6 184.2 l4 -5" stroke="#8080d8" stroke-width="1.1" opacity="0.85"/>
<path d="M291.5 175.0 l4 -5" stroke="#6a70c8" stroke-width="1.1" opacity="0.85"/>
<path d="M294.7 185.4 l4 -5" stroke="#9090e0" stroke-width="1.1" opacity="0.85"/>
<path d="M320.5 159.7 l4 -5" stroke="#9090e0" stroke-width="1.1" opacity="0.85"/>
<path d="M284.1 176.5 l4 -5" stroke="#6a70c8" stroke-width="1.1" opacity="0.85"/>
<path d="M305.9 160.5 l4 -5" stroke="#6a70c8" stroke-width="1.1" opacity="0.85"/>
<path d="M279.5 178.2 l4 -5" stroke="#8080d8" stroke-width="1.1" opacity="0.85"/>
<path d="M270.8 165.3 l4 -5" stroke="#9090e0" stroke-width="1.1" opacity="0.85"/>
<path d="M318.1 159.7 l4 -5" stroke="#3a3a90" stroke-width="1.1" opacity="0.85"/>
<path d="M285.1 183.0 l4 -5" stroke="#9090e0" stroke-width="1.1" opacity="0.85"/>
<path d="M299.8 160.8 l4 -5" stroke="#6a70c8" stroke-width="1.1" opacity="0.85"/>
<path d="M310.2 180.8 l4 -5" stroke="#3a3a90" stroke-width="1.1" opacity="0.85"/>
<path d="M275.7 165.2 l4 -5" stroke="#8080d8" stroke-width="1.1" opacity="0.85"/>
<path d="M269.1 160.7 l4 -5" stroke="#8080d8" stroke-width="1.1" opacity="0.85"/>
<path d="M281.0 163.1 l4 -5" stroke="#8080d8" stroke-width="1.1" opacity="0.85"/>
<path d="M300.7 180.7 l4 -5" stroke="#6a70c8" stroke-width="1.1" opacity="0.85"/>
<path d="M314.9 160.0 l4 -5" stroke="#9090e0" stroke-width="1.1" opacity="0.85"/>
<path d="M271.8 170.6 l4 -5" stroke="#9090e0" stroke-width="1.1" opacity="0.85"/>
<path d="M304.0 177.8 l4 -5" stroke="#6a70c8" stroke-width="1.1" opacity="0.85"/>
<path d="M275.1 175.8 l4 -5" stroke="#9090e0" stroke-width="1.1" opacity="0.85"/>
<path d="M308.3 159.6 l4 -5" stroke="#3a3a90" stroke-width="1.1" opacity="0.85"/>
<path d="M292.2 165.0 l4 -5" stroke="#6a70c8" stroke-width="1.1" opacity="0.85"/>
<path d="M311.1 160.3 l4 -5" stroke="#3a3a90" stroke-width="1.1" opacity="0.85"/>
<path d="M314.3 158.8 l4 -5" stroke="#3a3a90" stroke-width="1.1" opacity="0.85"/>
<path d="M285.1 178.3 l4 -5" stroke="#6a70c8" stroke-width="1.1" opacity="0.85"/>
<path d="M282.3 182.8 l4 -5" stroke="#3a3a90" stroke-width="1.1" opacity="0.85"/>
<path d="M279.8 179.3 l4 -5" stroke="#9090e0" stroke-width="1.1" opacity="0.85"/>
<path d="M279.2 171.2 l4 -5" stroke="#3a3a90" stroke-width="1.1" opacity="0.85"/>
<path d="M278.1 163.4 l4 -5" stroke="#6a70c8" stroke-width="1.1" opacity="0.85"/>
<path d="M286.8 166.0 l4 -5" stroke="#3a3a90" stroke-width="1.1" opacity="0.85"/>
<path d="M271.3 165.8 l4 -5" stroke="#9090e0" stroke-width="1.1" opacity="0.85"/>
<path d="M276.4 180.4 l4 -5" stroke="#8080d8" stroke-width="1.1" opacity="0.85"/>
<path d="M272.7 159.3 l4 -5" stroke="#3a3a90" stroke-width="1.1" opacity="0.85"/>
<path d="M298.7 175.9 l4 -5" stroke="#3a3a90" stroke-width="1.1" opacity="0.85"/>
<path d="M320.1 169.4 l4 -5" stroke="#8080d8" stroke-width="1.1" opacity="0.85"/>
<path d="M319.6 160.5 l4 -5" stroke="#3a3a90" stroke-width="1.1" opacity="0.85"/>
<path d="M320.9 186.1 l4 -5" stroke="#3a3a90" stroke-width="1.1" opacity="0.85"/>
<path d="M282.4 174.7 l4 -5" stroke="#9090e0" stroke-width="1.1" opacity="0.85"/>
<path d="M295.9 186.0 l4 -5" stroke="#3a3a90" stroke-width="1.1" opacity="0.85"/>
<path d="M277.2 172.4 l4 -5" stroke="#8080d8" stroke-width="1.1" opacity="0.85"/>
<path d="M284.8 172.4 l4 -5" stroke="#6a70c8" stroke-width="1.1" opacity="0.85"/>
<path d="M312.6 174.8 l4 -5" stroke="#3a3a90" stroke-width="1.1" opacity="0.85"/>
<path d="M293.4 158.5 l4 -5" stroke="#9090e0" stroke-width="1.1" opacity="0.85"/>
<path d="M293.4 170.2 l4 -5" stroke="#3a3a90" stroke-width="1.1" opacity="0.85"/>
<path d="M273.7 184.1 l4 -5" stroke="#9090e0" stroke-width="1.1" opacity="0.85"/>
<path d="M320.1 178.9 l4 -5" stroke="#3a3a90" stroke-width="1.1" opacity="0.85"/>
<path d="M305.2 165.9 l4 -5" stroke="#8080d8" stroke-width="1.1" opacity="0.85"/>
<path d="M321.9 177.2 l4 -5" stroke="#6a70c8" stroke-width="1.1" opacity="0.85"/>
<path d="M275.6 166.5 l4 -5" stroke="#9090e0" stroke-width="1.1" opacity="0.85"/>
<path d="M269.8 184.9 l4 -5" stroke="#9090e0" stroke-width="1.1" opacity="0.85"/>
<path d="M291.6 173.7 l4 -5" stroke="#3a3a90" stroke-width="1.1" opacity="0.85"/>
<path d="M285.6 173.5 l4 -5" stroke="#8080d8" stroke-width="1.1" opacity="0.85"/>
<path d="M284.8 175.9 l4 -5" stroke="#3a3a90" stroke-width="1.1" opacity="0.85"/>
<path d="M270.7 173.5 l4 -5" stroke="#9090e0" stroke-width="1.1" opacity="0.85"/>
<path d="M299.0 162.0 l4 -5" stroke="#9090e0" stroke-width="1.1" opacity="0.85"/>
<path d="M270.6 162.4 l4 -5" stroke="#8080d8" stroke-width="1.1" opacity="0.85"/>
<path d="M283.3 170.8 l4 -5" stroke="#6a70c8" stroke-width="1.1" opacity="0.85"/>
<path d="M281.6 161.7 l4 -5" stroke="#3a3a90" stroke-width="1.1" opacity="0.85"/>
<path d="M274.1 178.9 l4 -5" stroke="#9090e0" stroke-width="1.1" opacity="0.85"/>
<path d="M279.7 160.0 l4 -5" stroke="#8080d8" stroke-width="1.1" opacity="0.85"/>
<path d="M311.8 179.3 l4 -5" stroke="#8080d8" stroke-width="1.1" opacity="0.85"/>
<path d="M270.9 178.6 l4 -5" stroke="#9090e0" stroke-width="1.1" opacity="0.85"/>
<path d="M284.0 181.2 l4 -5" stroke="#6a70c8" stroke-width="1.1" opacity="0.85"/>
<path d="M271.1 159.8 l4 -5" stroke="#6a70c8" stroke-width="1.1" opacity="0.85"/>
<path d="M296.9 177.2 l4 -5" stroke="#3a3a90" stroke-width="1.1" opacity="0.85"/>
<path d="M301.7 187.4 l4 -5" stroke="#8080d8" stroke-width="1.1" opacity="0.85"/>
<path d="M307.4 183.0 l4 -5" stroke="#3a3a90" stroke-width="1.1" opacity="0.85"/>
<path d="M277.1 178.8 l4 -5" stroke="#6a70c8" stroke-width="1.1" opacity="0.85"/>
<path d="M318.0 158.0 l4 -5" stroke="#8080d8" stroke-width="1.1" opacity="0.85"/>
<path d="M296.2 173.7 l4 -5" stroke="#9090e0" stroke-width="1.1" opacity="0.85"/>
<path d="M309.0 188.4 l4 -5" stroke="#3a3a90" stroke-width="1.1" opacity="0.85"/>
<path d="M300.6 159.9 l4 -5" stroke="#8080d8" stroke-width="1.1" opacity="0.85"/>
<path d="M305.5 186.1 l4 -5" stroke="#8080d8" stroke-width="1.1" opacity="0.85"/>
<path d="M307.8 177.7 l4 -5" stroke="#8080d8" stroke-width="1.1" opacity="0.85"/>
<path d="M317.0 160.8 l4 -5" stroke="#9090e0" stroke-width="1.1" opacity="0.85"/>
<path d="M268.3 187.8 l4 -5" stroke="#3a3a90" stroke-width="1.1" opacity="0.85"/>
<path d="M313.1 181.4 l4 -5" stroke="#3a3a90" stroke-width="1.1" opacity="0.85"/>
<path d="M270.6 178.0 l4 -5" stroke="#9090e0" stroke-width="1.1" opacity="0.85"/>
<path d="M307.7 165.8 l4 -5" stroke="#8080d8" stroke-width="1.1" opacity="0.85"/>
<path d="M289.1 164.0 l4 -5" stroke="#9090e0" stroke-width="1.1" opacity="0.85"/>
<path d="M290.1 170.8 l4 -5" stroke="#8080d8" stroke-width="1.1" opacity="0.85"/>
<path d="M297.1 161.6 l4 -5" stroke="#9090e0" stroke-width="1.1" opacity="0.85"/>
<path d="M268.2 164.9 l4 -5" stroke="#6a70c8" stroke-width="1.1" opacity="0.85"/>
<path d="M289.6 185.1 l4 -5" stroke="#3a3a90" stroke-width="1.1" opacity="0.85"/>
<path d="M314.0 180.5 l4 -5" stroke="#8080d8" stroke-width="1.1" opacity="0.85"/>
<path d="M299.7 188.2 l4 -5" stroke="#3a3a90" stroke-width="1.1" opacity="0.85"/>
<path d="M270 189 H322 V200 H270Z" fill="#34382c"/>
<path d="M306.6 191.3 l5 -1" stroke="#3a5a60" stroke-width="1.3" opacity="0.9"/>
<path d="M276.9 197.4 l5 -1" stroke="#3a5a60" stroke-width="1.3" opacity="0.9"/>
<path d="M287.9 195.3 l5 -1" stroke="#5a7050" stroke-width="1.3" opacity="0.9"/>
<path d="M275.0 193.2 l5 -1" stroke="#5a7050" stroke-width="1.3" opacity="0.9"/>
<path d="M282.8 196.3 l5 -1" stroke="#a09040" stroke-width="1.3" opacity="0.9"/>
<path d="M315.5 196.7 l5 -1" stroke="#5a7050" stroke-width="1.3" opacity="0.9"/>
<path d="M308.7 192.6 l5 -1" stroke="#a09040" stroke-width="1.3" opacity="0.9"/>
<path d="M319.0 189.5 l5 -1" stroke="#a09040" stroke-width="1.3" opacity="0.9"/>
<path d="M269.4 196.8 l5 -1" stroke="#5a7050" stroke-width="1.3" opacity="0.9"/>
<path d="M292.8 193.4 l5 -1" stroke="#a09040" stroke-width="1.3" opacity="0.9"/>
<path d="M308.7 192.7 l5 -1" stroke="#a09040" stroke-width="1.3" opacity="0.9"/>
<path d="M279.1 193.7 l5 -1" stroke="#5a7050" stroke-width="1.3" opacity="0.9"/>
<path d="M303.9 191.8 l5 -1" stroke="#a09040" stroke-width="1.3" opacity="0.9"/>
<path d="M296.9 197.5 l5 -1" stroke="#5a7050" stroke-width="1.3" opacity="0.9"/>
<path d="M318.6 196.0 l5 -1" stroke="#8a8a40" stroke-width="1.3" opacity="0.9"/>
<path d="M294.8 193.9 l5 -1" stroke="#5a7050" stroke-width="1.3" opacity="0.9"/>
<path d="M267.6 199.1 l5 -1" stroke="#8a8a40" stroke-width="1.3" opacity="0.9"/>
<path d="M285.6 189.8 l5 -1" stroke="#3a5a60" stroke-width="1.3" opacity="0.9"/>
<path d="M269.3 191.6 l5 -1" stroke="#8a8a40" stroke-width="1.3" opacity="0.9"/>
<path d="M320.0 190.5 l5 -1" stroke="#a09040" stroke-width="1.3" opacity="0.9"/>
<path d="M275.2 191.8 l5 -1" stroke="#a09040" stroke-width="1.3" opacity="0.9"/>
<path d="M310.8 197.1 l5 -1" stroke="#3a5a60" stroke-width="1.3" opacity="0.9"/>
<path d="M299.9 190.5 l5 -1" stroke="#5a7050" stroke-width="1.3" opacity="0.9"/>
<path d="M280.2 191.5 l5 -1" stroke="#8a8a40" stroke-width="1.3" opacity="0.9"/>
<path d="M283.8 192.1 l5 -1" stroke="#8a8a40" stroke-width="1.3" opacity="0.9"/>
<path d="M306.5 196.9 l5 -1" stroke="#a09040" stroke-width="1.3" opacity="0.9"/>
<path d="M283.2 189.3 l5 -1" stroke="#3a5a60" stroke-width="1.3" opacity="0.9"/>
<path d="M311.3 197.4 l5 -1" stroke="#5a7050" stroke-width="1.3" opacity="0.9"/>
<path d="M293.6 190.1 l5 -1" stroke="#8a8a40" stroke-width="1.3" opacity="0.9"/>
<path d="M268.8 199.4 l5 -1" stroke="#5a7050" stroke-width="1.3" opacity="0.9"/>
<path d="M284.6 199.8 l5 -1" stroke="#8a8a40" stroke-width="1.3" opacity="0.9"/>
<path d="M267.6 191.3 l5 -1" stroke="#3a5a60" stroke-width="1.3" opacity="0.9"/>
<path d="M266.8 191.1 l5 -1" stroke="#8a8a40" stroke-width="1.3" opacity="0.9"/>
<path d="M273.2 198.4 l5 -1" stroke="#3a5a60" stroke-width="1.3" opacity="0.9"/>
<path d="M269.2 199.9 l5 -1" stroke="#5a7050" stroke-width="1.3" opacity="0.9"/>
<path d="M276.7 193.0 l5 -1" stroke="#5a7050" stroke-width="1.3" opacity="0.9"/>
<path d="M284.6 199.3 l5 -1" stroke="#a09040" stroke-width="1.3" opacity="0.9"/>
<path d="M308.0 191.0 l5 -1" stroke="#8a8a40" stroke-width="1.3" opacity="0.9"/>
<path d="M306.5 192.1 l5 -1" stroke="#3a5a60" stroke-width="1.3" opacity="0.9"/>
<path d="M299.9 190.2 l5 -1" stroke="#5a7050" stroke-width="1.3" opacity="0.9"/>
<path d="M305.5 199.0 l5 -1" stroke="#8a8a40" stroke-width="1.3" opacity="0.9"/>
<path d="M279.1 194.5 l5 -1" stroke="#8a8a40" stroke-width="1.3" opacity="0.9"/>
<path d="M306.8 195.2 l5 -1" stroke="#a09040" stroke-width="1.3" opacity="0.9"/>
<path d="M303.8 192.7 l5 -1" stroke="#3a5a60" stroke-width="1.3" opacity="0.9"/>
<path d="M290.8 196.5 l5 -1" stroke="#5a7050" stroke-width="1.3" opacity="0.9"/>
<path d="M300.5 195.4 l5 -1" stroke="#8a8a40" stroke-width="1.3" opacity="0.9"/>
<path d="M309.8 190.5 l5 -1" stroke="#8a8a40" stroke-width="1.3" opacity="0.9"/>
<path d="M312.1 196.5 l5 -1" stroke="#8a8a40" stroke-width="1.3" opacity="0.9"/>
<path d="M303.3 197.6 l5 -1" stroke="#5a7050" stroke-width="1.3" opacity="0.9"/>
<path d="M284.2 195.6 l5 -1" stroke="#8a8a40" stroke-width="1.3" opacity="0.9"/>
<path d="M270 200 H322 V222 H270Z" fill="#243c70"/>
<path d="M297.4 212.5 q2 -3 5 0" stroke="#4a9090" stroke-width="1.2" fill="none" opacity="0.85"/>
<path d="M283.2 218.0 q2 -3 5 0" stroke="#a0c8c8" stroke-width="1.2" fill="none" opacity="0.85"/>
<path d="M299.0 204.3 q2 -3 5 0" stroke="#70a8c0" stroke-width="1.2" fill="none" opacity="0.85"/>
<path d="M311.6 214.3 q2 -3 5 0" stroke="#1a2a50" stroke-width="1.2" fill="none" opacity="0.85"/>
<path d="M311.2 219.0 q2 -3 5 0" stroke="#70a8c0" stroke-width="1.2" fill="none" opacity="0.85"/>
<path d="M268.1 204.6 q2 -3 5 0" stroke="#a0c8c8" stroke-width="1.2" fill="none" opacity="0.85"/>
<path d="M278.0 202.0 q2 -3 5 0" stroke="#70a8c0" stroke-width="1.2" fill="none" opacity="0.85"/>
<path d="M272.4 215.7 q2 -3 5 0" stroke="#70a8c0" stroke-width="1.2" fill="none" opacity="0.85"/>
<path d="M300.6 207.2 q2 -3 5 0" stroke="#70a8c0" stroke-width="1.2" fill="none" opacity="0.85"/>
<path d="M294.1 205.8 q2 -3 5 0" stroke="#70a8c0" stroke-width="1.2" fill="none" opacity="0.85"/>
<path d="M276.1 221.6 q2 -3 5 0" stroke="#4a9090" stroke-width="1.2" fill="none" opacity="0.85"/>
<path d="M311.4 212.6 q2 -3 5 0" stroke="#a0c8c8" stroke-width="1.2" fill="none" opacity="0.85"/>
<path d="M281.9 211.2 q2 -3 5 0" stroke="#a0c8c8" stroke-width="1.2" fill="none" opacity="0.85"/>
<path d="M293.1 209.9 q2 -3 5 0" stroke="#a0c8c8" stroke-width="1.2" fill="none" opacity="0.85"/>
<path d="M296.8 211.3 q2 -3 5 0" stroke="#4a9090" stroke-width="1.2" fill="none" opacity="0.85"/>
<path d="M273.3 203.9 q2 -3 5 0" stroke="#3a70a0" stroke-width="1.2" fill="none" opacity="0.85"/>
<path d="M305.2 208.6 q2 -3 5 0" stroke="#a0c8c8" stroke-width="1.2" fill="none" opacity="0.85"/>
<path d="M291.4 211.5 q2 -3 5 0" stroke="#3a70a0" stroke-width="1.2" fill="none" opacity="0.85"/>
<path d="M272.9 211.5 q2 -3 5 0" stroke="#3a70a0" stroke-width="1.2" fill="none" opacity="0.85"/>
<path d="M314.6 221.9 q2 -3 5 0" stroke="#1a2a50" stroke-width="1.2" fill="none" opacity="0.85"/>
<path d="M298.2 211.6 q2 -3 5 0" stroke="#3a70a0" stroke-width="1.2" fill="none" opacity="0.85"/>
<path d="M269.4 220.6 q2 -3 5 0" stroke="#3a70a0" stroke-width="1.2" fill="none" opacity="0.85"/>
<path d="M285.6 213.8 q2 -3 5 0" stroke="#a0c8c8" stroke-width="1.2" fill="none" opacity="0.85"/>
<path d="M319.6 203.7 q2 -3 5 0" stroke="#70a8c0" stroke-width="1.2" fill="none" opacity="0.85"/>
<path d="M300.2 203.8 q2 -3 5 0" stroke="#4a9090" stroke-width="1.2" fill="none" opacity="0.85"/>
<path d="M284.4 219.8 q2 -3 5 0" stroke="#3a70a0" stroke-width="1.2" fill="none" opacity="0.85"/>
<path d="M274.5 219.3 q2 -3 5 0" stroke="#a0c8c8" stroke-width="1.2" fill="none" opacity="0.85"/>
<path d="M288.4 215.4 q2 -3 5 0" stroke="#a0c8c8" stroke-width="1.2" fill="none" opacity="0.85"/>
<path d="M318.1 206.0 q2 -3 5 0" stroke="#3a70a0" stroke-width="1.2" fill="none" opacity="0.85"/>
<path d="M288.7 202.1 q2 -3 5 0" stroke="#70a8c0" stroke-width="1.2" fill="none" opacity="0.85"/>
<path d="M298.2 210.8 q2 -3 5 0" stroke="#70a8c0" stroke-width="1.2" fill="none" opacity="0.85"/>
<path d="M282.5 204.6 q2 -3 5 0" stroke="#3a70a0" stroke-width="1.2" fill="none" opacity="0.85"/>
<path d="M281.3 207.2 q2 -3 5 0" stroke="#a0c8c8" stroke-width="1.2" fill="none" opacity="0.85"/>
<path d="M298.0 215.7 q2 -3 5 0" stroke="#3a70a0" stroke-width="1.2" fill="none" opacity="0.85"/>
<path d="M276.2 220.0 q2 -3 5 0" stroke="#1a2a50" stroke-width="1.2" fill="none" opacity="0.85"/>
<path d="M315.5 212.0 q2 -3 5 0" stroke="#70a8c0" stroke-width="1.2" fill="none" opacity="0.85"/>
<path d="M304.5 214.0 q2 -3 5 0" stroke="#4a9090" stroke-width="1.2" fill="none" opacity="0.85"/>
<path d="M273.0 221.9 q2 -3 5 0" stroke="#1a2a50" stroke-width="1.2" fill="none" opacity="0.85"/>
<path d="M275.3 219.7 q2 -3 5 0" stroke="#4a9090" stroke-width="1.2" fill="none" opacity="0.85"/>
<path d="M311.0 202.7 q2 -3 5 0" stroke="#4a9090" stroke-width="1.2" fill="none" opacity="0.85"/>
<path d="M266.5 210.2 q2 -3 5 0" stroke="#70a8c0" stroke-width="1.2" fill="none" opacity="0.85"/>
<path d="M302.0 209.0 q2 -3 5 0" stroke="#3a70a0" stroke-width="1.2" fill="none" opacity="0.85"/>
<path d="M301.3 219.9 q2 -3 5 0" stroke="#4a9090" stroke-width="1.2" fill="none" opacity="0.85"/>
<path d="M280.4 219.7 q2 -3 5 0" stroke="#4a9090" stroke-width="1.2" fill="none" opacity="0.85"/>
<path d="M295.3 215.6 q2 -3 5 0" stroke="#3a70a0" stroke-width="1.2" fill="none" opacity="0.85"/>
<path d="M320.3 207.7 q2 -3 5 0" stroke="#a0c8c8" stroke-width="1.2" fill="none" opacity="0.85"/>
<path d="M284.1 221.6 q2 -3 5 0" stroke="#70a8c0" stroke-width="1.2" fill="none" opacity="0.85"/>
<path d="M289.2 220.8 q2 -3 5 0" stroke="#3a70a0" stroke-width="1.2" fill="none" opacity="0.85"/>
<path d="M280.0 205.6 q2 -3 5 0" stroke="#1a2a50" stroke-width="1.2" fill="none" opacity="0.85"/>
<path d="M287.4 210.1 q2 -3 5 0" stroke="#70a8c0" stroke-width="1.2" fill="none" opacity="0.85"/>
<path d="M283.8 202.6 q2 -3 5 0" stroke="#1a2a50" stroke-width="1.2" fill="none" opacity="0.85"/>
<path d="M316.7 214.4 q2 -3 5 0" stroke="#1a2a50" stroke-width="1.2" fill="none" opacity="0.85"/>
<path d="M267.2 201.3 q2 -3 5 0" stroke="#4a9090" stroke-width="1.2" fill="none" opacity="0.85"/>
<path d="M310.1 206.2 q2 -3 5 0" stroke="#1a2a50" stroke-width="1.2" fill="none" opacity="0.85"/>
<path d="M296.2 210.3 q2 -3 5 0" stroke="#3a70a0" stroke-width="1.2" fill="none" opacity="0.85"/>
<path d="M275.1 214.3 q2 -3 5 0" stroke="#70a8c0" stroke-width="1.2" fill="none" opacity="0.85"/>
<path d="M270.2 218.3 q2 -3 5 0" stroke="#a0c8c8" stroke-width="1.2" fill="none" opacity="0.85"/>
<path d="M310.4 219.5 q2 -3 5 0" stroke="#a0c8c8" stroke-width="1.2" fill="none" opacity="0.85"/>
<path d="M270.0 210.4 q2 -3 5 0" stroke="#3a70a0" stroke-width="1.2" fill="none" opacity="0.85"/>
<path d="M295.6 212.5 q2 -3 5 0" stroke="#70a8c0" stroke-width="1.2" fill="none" opacity="0.85"/>
<path d="M266.0 203.0 q2 -3 5 0" stroke="#4a9090" stroke-width="1.2" fill="none" opacity="0.85"/>
<path d="M302.6 200.6 q2 -3 5 0" stroke="#a0c8c8" stroke-width="1.2" fill="none" opacity="0.85"/>
<path d="M287.7 201.1 q2 -3 5 0" stroke="#3a70a0" stroke-width="1.2" fill="none" opacity="0.85"/>
<path d="M295.7 217.5 q2 -3 5 0" stroke="#3a70a0" stroke-width="1.2" fill="none" opacity="0.85"/>
<path d="M301.8 220.5 q2 -3 5 0" stroke="#3a70a0" stroke-width="1.2" fill="none" opacity="0.85"/>
<path d="M315.7 204.7 q2 -3 5 0" stroke="#3a70a0" stroke-width="1.2" fill="none" opacity="0.85"/>
<path d="M295.7 221.9 q2 -3 5 0" stroke="#3a70a0" stroke-width="1.2" fill="none" opacity="0.85"/>
<path d="M301.5 205.3 q2 -3 5 0" stroke="#1a2a50" stroke-width="1.2" fill="none" opacity="0.85"/>
<path d="M290.7 203.4 q2 -3 5 0" stroke="#1a2a50" stroke-width="1.2" fill="none" opacity="0.85"/>
<path d="M289.4 203.7 q2 -3 5 0" stroke="#70a8c0" stroke-width="1.2" fill="none" opacity="0.85"/>
<path d="M292.6 204.7 q2 -3 5 0" stroke="#a0c8c8" stroke-width="1.2" fill="none" opacity="0.85"/>
<path d="M292.9 219.6 q2 -3 5 0" stroke="#4a9090" stroke-width="1.2" fill="none" opacity="0.85"/>
<path d="M310.6 211.9 q2 -3 5 0" stroke="#4a9090" stroke-width="1.2" fill="none" opacity="0.85"/>
<path d="M269.0 203.4 q2 -3 5 0" stroke="#3a70a0" stroke-width="1.2" fill="none" opacity="0.85"/>
<path d="M289.1 208.6 q2 -3 5 0" stroke="#4a9090" stroke-width="1.2" fill="none" opacity="0.85"/>
<path d="M271.1 210.6 q2 -3 5 0" stroke="#1a2a50" stroke-width="1.2" fill="none" opacity="0.85"/>
<path d="M298.7 206.0 q2 -3 5 0" stroke="#a0c8c8" stroke-width="1.2" fill="none" opacity="0.85"/>
<path d="M268.4 215.2 q2 -3 5 0" stroke="#a0c8c8" stroke-width="1.2" fill="none" opacity="0.85"/>
<path d="M280.6 204.4 q2 -3 5 0" stroke="#4a9090" stroke-width="1.2" fill="none" opacity="0.85"/>
<path d="M292.4 218.6 q2 -3 5 0" stroke="#1a2a50" stroke-width="1.2" fill="none" opacity="0.85"/>
<path d="M278.7 219.5 q2 -3 5 0" stroke="#3a70a0" stroke-width="1.2" fill="none" opacity="0.85"/>
<path d="M310.6 220.5 q2 -3 5 0" stroke="#a0c8c8" stroke-width="1.2" fill="none" opacity="0.85"/>
<path d="M319.6 219.0 q2 -3 5 0" stroke="#a0c8c8" stroke-width="1.2" fill="none" opacity="0.85"/>
<path d="M268.7 200.5 q2 -3 5 0" stroke="#4a9090" stroke-width="1.2" fill="none" opacity="0.85"/>
<path d="M315.5 221.1 q2 -3 5 0" stroke="#3a70a0" stroke-width="1.2" fill="none" opacity="0.85"/>
<path d="M288.7 217.5 q2 -3 5 0" stroke="#4a9090" stroke-width="1.2" fill="none" opacity="0.85"/>
<path d="M321.7 220.7 q2 -3 5 0" stroke="#a0c8c8" stroke-width="1.2" fill="none" opacity="0.85"/>
<path d="M290.6 204.1 q2 -3 5 0" stroke="#1a2a50" stroke-width="1.2" fill="none" opacity="0.85"/>
<path d="M286.3 205.1 q2 -3 5 0" stroke="#4a9090" stroke-width="1.2" fill="none" opacity="0.85"/>
<path d="M275.9 210.1 q2 -3 5 0" stroke="#3a70a0" stroke-width="1.2" fill="none" opacity="0.85"/>
<path d="M270 222 H322 V261 H270Z" fill="#18204e"/>
<path d="M278.2 230.7 h6.0" stroke="#3a5ab0" stroke-width="1.5" opacity="0.9"/>
<path d="M311.2 239.3 h3.9" stroke="#c0d0f0" stroke-width="1.5" opacity="0.9"/>
<path d="M293.3 241.7 h6.1" stroke="#1a1a40" stroke-width="1.5" opacity="0.9"/>
<path d="M315.4 260.5 h5.5" stroke="#3a5ab0" stroke-width="1.5" opacity="0.9"/>
<path d="M312.1 257.3 h3.2" stroke="#c0d0f0" stroke-width="1.5" opacity="0.9"/>
<path d="M292.1 232.0 h3.4" stroke="#e0c040" stroke-width="1.5" opacity="0.9"/>
<path d="M296.4 232.2 h2.7" stroke="#e0c040" stroke-width="1.5" opacity="0.9"/>
<path d="M299.1 252.2 h3.1" stroke="#3a5ab0" stroke-width="1.5" opacity="0.9"/>
<path d="M287.2 237.7 h4.2" stroke="#6a8ad8" stroke-width="1.5" opacity="0.9"/>
<path d="M281.2 235.5 h5.6" stroke="#a0c0f0" stroke-width="1.5" opacity="0.9"/>
<path d="M304.1 237.6 h4.7" stroke="#1a1a40" stroke-width="1.5" opacity="0.9"/>
<path d="M278.8 232.9 h2.0" stroke="#c0d0f0" stroke-width="1.5" opacity="0.9"/>
<path d="M291.4 244.0 h3.3" stroke="#e0c040" stroke-width="1.5" opacity="0.9"/>
<path d="M271.6 229.4 h6.7" stroke="#508850" stroke-width="1.5" opacity="0.9"/>
<path d="M318.1 241.1 h2.7" stroke="#1a1a40" stroke-width="1.5" opacity="0.9"/>
<path d="M287.1 227.6 h2.2" stroke="#3a5ab0" stroke-width="1.5" opacity="0.9"/>
<path d="M310.1 260.5 h3.4" stroke="#c0d0f0" stroke-width="1.5" opacity="0.9"/>
<path d="M316.2 246.6 h3.9" stroke="#1a1a40" stroke-width="1.5" opacity="0.9"/>
<path d="M318.9 226.0 h2.1" stroke="#3a5ab0" stroke-width="1.5" opacity="0.9"/>
<path d="M302.6 259.3 h3.1" stroke="#c0d0f0" stroke-width="1.5" opacity="0.9"/>
<path d="M305.3 250.6 h2.9" stroke="#6a8ad8" stroke-width="1.5" opacity="0.9"/>
<path d="M289.6 247.4 h3.4" stroke="#c0d0f0" stroke-width="1.5" opacity="0.9"/>
<path d="M316.2 237.7 h4.3" stroke="#c0d0f0" stroke-width="1.5" opacity="0.9"/>
<path d="M288.2 248.7 h4.7" stroke="#e0c040" stroke-width="1.5" opacity="0.9"/>
<path d="M308.3 228.8 h6.8" stroke="#1a1a40" stroke-width="1.5" opacity="0.9"/>
<path d="M280.0 248.2 h6.8" stroke="#a0c0f0" stroke-width="1.5" opacity="0.9"/>
<path d="M296.4 230.4 h3.5" stroke="#3a5ab0" stroke-width="1.5" opacity="0.9"/>
<path d="M283.3 258.1 h5.8" stroke="#6a8ad8" stroke-width="1.5" opacity="0.9"/>
<path d="M285.7 254.1 h4.6" stroke="#6a8ad8" stroke-width="1.5" opacity="0.9"/>
<path d="M283.1 251.8 h3.2" stroke="#3a5ab0" stroke-width="1.5" opacity="0.9"/>
<path d="M314.1 239.4 h4.9" stroke="#e0c040" stroke-width="1.5" opacity="0.9"/>
<path d="M299.3 228.5 h2.2" stroke="#3a5ab0" stroke-width="1.5" opacity="0.9"/>
<path d="M291.5 259.1 h6.7" stroke="#1a1a40" stroke-width="1.5" opacity="0.9"/>
<path d="M271.5 239.2 h6.8" stroke="#e0c040" stroke-width="1.5" opacity="0.9"/>
<path d="M275.8 253.8 h4.8" stroke="#6a8ad8" stroke-width="1.5" opacity="0.9"/>
<path d="M279.9 243.4 h2.3" stroke="#e0c040" stroke-width="1.5" opacity="0.9"/>
<path d="M305.4 252.9 h3.0" stroke="#a0c0f0" stroke-width="1.5" opacity="0.9"/>
<path d="M313.4 227.7 h2.3" stroke="#508850" stroke-width="1.5" opacity="0.9"/>
<path d="M276.5 247.7 h5.6" stroke="#a0c0f0" stroke-width="1.5" opacity="0.9"/>
<path d="M294.8 235.1 h4.4" stroke="#a0c0f0" stroke-width="1.5" opacity="0.9"/>
<path d="M296.4 255.0 h3.5" stroke="#6a8ad8" stroke-width="1.5" opacity="0.9"/>
<path d="M315.0 239.9 h2.8" stroke="#a0c0f0" stroke-width="1.5" opacity="0.9"/>
<path d="M284.5 259.8 h6.2" stroke="#c0d0f0" stroke-width="1.5" opacity="0.9"/>
<path d="M310.0 243.6 h5.4" stroke="#e0c040" stroke-width="1.5" opacity="0.9"/>
<path d="M320.3 225.5 h2.5" stroke="#e0c040" stroke-width="1.5" opacity="0.9"/>
<path d="M305.5 223.4 h6.3" stroke="#3a5ab0" stroke-width="1.5" opacity="0.9"/>
<path d="M275.4 229.7 h6.2" stroke="#1a1a40" stroke-width="1.5" opacity="0.9"/>
<path d="M283.9 222.6 h2.1" stroke="#c0d0f0" stroke-width="1.5" opacity="0.9"/>
<path d="M290.0 229.9 h2.5" stroke="#a0c0f0" stroke-width="1.5" opacity="0.9"/>
<path d="M311.8 258.9 h4.8" stroke="#3a5ab0" stroke-width="1.5" opacity="0.9"/>
<path d="M305.2 255.5 h3.0" stroke="#3a5ab0" stroke-width="1.5" opacity="0.9"/>
<path d="M294.1 255.4 h6.4" stroke="#c0d0f0" stroke-width="1.5" opacity="0.9"/>
<path d="M274.2 252.8 h6.0" stroke="#6a8ad8" stroke-width="1.5" opacity="0.9"/>
<path d="M272.2 231.4 h4.1" stroke="#3a5ab0" stroke-width="1.5" opacity="0.9"/>
<path d="M302.8 258.6 h2.7" stroke="#508850" stroke-width="1.5" opacity="0.9"/>
<path d="M280.1 255.5 h3.3" stroke="#e0c040" stroke-width="1.5" opacity="0.9"/>
<path d="M266.3 232.0 h3.4" stroke="#c0d0f0" stroke-width="1.5" opacity="0.9"/>
<path d="M304.4 225.3 h4.1" stroke="#6a8ad8" stroke-width="1.5" opacity="0.9"/>
<path d="M276.6 231.5 h5.4" stroke="#1a1a40" stroke-width="1.5" opacity="0.9"/>
<path d="M287.4 229.3 h3.5" stroke="#508850" stroke-width="1.5" opacity="0.9"/>
<path d="M289.4 238.8 h3.4" stroke="#508850" stroke-width="1.5" opacity="0.9"/>
<path d="M291.5 230.7 h4.5" stroke="#a0c0f0" stroke-width="1.5" opacity="0.9"/>
<path d="M297.5 242.9 h4.3" stroke="#c0d0f0" stroke-width="1.5" opacity="0.9"/>
<path d="M266.8 227.9 h5.8" stroke="#508850" stroke-width="1.5" opacity="0.9"/>
<path d="M302.7 223.6 h3.6" stroke="#e0c040" stroke-width="1.5" opacity="0.9"/>
<path d="M285.5 226.0 h2.6" stroke="#1a1a40" stroke-width="1.5" opacity="0.9"/>
<path d="M276.9 232.6 h2.1" stroke="#6a8ad8" stroke-width="1.5" opacity="0.9"/>
<path d="M293.9 246.8 h5.5" stroke="#508850" stroke-width="1.5" opacity="0.9"/>
<path d="M312.9 247.8 h5.1" stroke="#a0c0f0" stroke-width="1.5" opacity="0.9"/>
<path d="M292.1 231.9 h6.6" stroke="#e0c040" stroke-width="1.5" opacity="0.9"/>
<path d="M268.7 257.4 h5.4" stroke="#3a5ab0" stroke-width="1.5" opacity="0.9"/>
<path d="M314.6 243.8 h2.2" stroke="#508850" stroke-width="1.5" opacity="0.9"/>
<path d="M301.5 225.6 h3.1" stroke="#1a1a40" stroke-width="1.5" opacity="0.9"/>
<path d="M289.9 226.7 h5.9" stroke="#1a1a40" stroke-width="1.5" opacity="0.9"/>
<path d="M281.8 241.5 h3.2" stroke="#6a8ad8" stroke-width="1.5" opacity="0.9"/>
<path d="M299.0 249.6 h6.2" stroke="#1a1a40" stroke-width="1.5" opacity="0.9"/>
<path d="M303.8 242.1 h2.1" stroke="#c0d0f0" stroke-width="1.5" opacity="0.9"/>
<path d="M275.3 248.0 h6.2" stroke="#6a8ad8" stroke-width="1.5" opacity="0.9"/>
<path d="M279.8 258.8 h6.0" stroke="#508850" stroke-width="1.5" opacity="0.9"/>
<path d="M279.7 236.2 h6.4" stroke="#1a1a40" stroke-width="1.5" opacity="0.9"/>
<path d="M316.3 234.3 h3.6" stroke="#508850" stroke-width="1.5" opacity="0.9"/>
<path d="M304.3 228.2 h5.2" stroke="#c0d0f0" stroke-width="1.5" opacity="0.9"/>
<path d="M318.8 253.2 h4.5" stroke="#508850" stroke-width="1.5" opacity="0.9"/>
<path d="M299.4 231.7 h5.6" stroke="#c0d0f0" stroke-width="1.5" opacity="0.9"/>
<path d="M286.4 236.0 h7.0" stroke="#6a8ad8" stroke-width="1.5" opacity="0.9"/>
<path d="M271.6 246.8 h6.3" stroke="#1a1a40" stroke-width="1.5" opacity="0.9"/>
<path d="M309.0 232.1 h5.1" stroke="#508850" stroke-width="1.5" opacity="0.9"/>
<path d="M280.7 228.0 h3.6" stroke="#3a5ab0" stroke-width="1.5" opacity="0.9"/>
<path d="M271.0 230.7 h4.0" stroke="#c0d0f0" stroke-width="1.5" opacity="0.9"/>
<path d="M308.6 227.5 h6.6" stroke="#a0c0f0" stroke-width="1.5" opacity="0.9"/>
<path d="M303.7 253.3 h3.0" stroke="#3a5ab0" stroke-width="1.5" opacity="0.9"/>
<path d="M273.0 236.2 h4.0" stroke="#508850" stroke-width="1.5" opacity="0.9"/>
<path d="M291.7 258.9 h5.7" stroke="#c0d0f0" stroke-width="1.5" opacity="0.9"/>
<path d="M277.6 223.5 h6.6" stroke="#508850" stroke-width="1.5" opacity="0.9"/>
<path d="M283.7 233.1 h5.0" stroke="#508850" stroke-width="1.5" opacity="0.9"/>
<path d="M298.5 240.2 h5.6" stroke="#e0c040" stroke-width="1.5" opacity="0.9"/>
<path d="M288.4 254.8 h2.9" stroke="#e0c040" stroke-width="1.5" opacity="0.9"/>
<path d="M303.4 228.7 h6.0" stroke="#1a1a40" stroke-width="1.5" opacity="0.9"/>
<path d="M288.9 250.9 h5.9" stroke="#3a5ab0" stroke-width="1.5" opacity="0.9"/>
<path d="M280.6 256.6 h4.3" stroke="#6a8ad8" stroke-width="1.5" opacity="0.9"/>
<path d="M313.8 244.5 h2.8" stroke="#3a5ab0" stroke-width="1.5" opacity="0.9"/>
<path d="M294.7 238.3 h6.5" stroke="#3a5ab0" stroke-width="1.5" opacity="0.9"/>
<path d="M275.6 240.2 h5.6" stroke="#508850" stroke-width="1.5" opacity="0.9"/>
<path d="M298.7 222.5 h4.7" stroke="#6a8ad8" stroke-width="1.5" opacity="0.9"/>
<path d="M276.9 234.5 h3.0" stroke="#1a1a40" stroke-width="1.5" opacity="0.9"/>
<path d="M276.7 243.9 h7.0" stroke="#6a8ad8" stroke-width="1.5" opacity="0.9"/>
<path d="M304.8 226.4 h4.4" stroke="#a0c0f0" stroke-width="1.5" opacity="0.9"/>
<path d="M300.5 235.7 h5.0" stroke="#c0d0f0" stroke-width="1.5" opacity="0.9"/>
<path d="M310.3 247.3 h4.2" stroke="#1a1a40" stroke-width="1.5" opacity="0.9"/>
<path d="M284.4 238.7 h3.7" stroke="#1a1a40" stroke-width="1.5" opacity="0.9"/>
</g></svg>
<div style="left:100px;top:100px;width:400px;height:482px;background:#ece9d8;border-radius:7px 7px 0 0;"></div>
<div style="left:100px;top:120px;width:3px;height:462px;background:linear-gradient(90deg,#6a7fdc 0,#6a7fdc 1px,#7a90e0 1px,#7a90e0 2px,#7a8ae0 2px);"></div>
<div style="left:497px;top:120px;width:3px;height:462px;background:linear-gradient(90deg,#7088e0 0,#7088e0 1px,#6a78d8 1px,#6a78d8 2px,#4a48c8 2px);"></div>
<div style="left:100px;top:579px;width:400px;height:3px;background:linear-gradient(#6f86de 0,#6f86de 1px,#6a78d8 1px,#6a78d8 2px,#4a45c0 2px);"></div>
<div style="left:100px;top:100px;width:400px;height:29px;background:linear-gradient(#97aee6 0px,#9cb7f0 1px,#9cb7f0 2px,#7c98e0 4px,#7994df 15px,#7ea3e6 19px,#7ea3e6 25px,#7996e0 27px,#6d86dd 29px);border-radius:7px 7px 0 0;box-shadow:inset 1px 1px 0 #6272da,inset -1px 0 0 #6272da;"></div>
<div class="t" style="left:106px;top:110px;font:bold 14px/13px 'Liberation Sans',sans-serif;letter-spacing:-0.5px;color:#dce6fb;text-shadow:none;">Configuration</div>
<div style="left:474px;top:105px;width:21px;height:21px;background:linear-gradient(135deg,#c8707e,#b85f6e 60%,#c06a78);border:1px solid #c6d2f3;border-radius:3px;"><svg style="left:3px;top:3px" width="14" height="14"><path d="M2 2 L12 12 M12 2 L2 12" stroke="#fff" stroke-width="2.2"/></svg></div>
<div style="left:105px;top:136px;width:390px;height:40px;border:1px solid #d0d0bf;border-radius:3px;"></div>
<div style="left:112px;top:133px;width:69px;height:7px;background:#ece9d8;"></div>
<div class="t" style="left:113px;top:132px;color:#5a5a5a;">Configuration</div>
<div class="t" style="left:110px;top:154px;">Name:</div>
<div style="left:300px;top:151px;width:189px;height:19px;border:1px solid #7f9db9;background:#fff;"></div>
<div class="t" style="left:305px;top:154px;">Testconfig</div>
<div style="left:105px;top:185px;width:390px;height:91px;border:1px solid #d0d0bf;border-radius:3px;"></div>
<div style="left:112px;top:182px;width:70px;height:7px;background:#ece9d8;"></div>
<div class="t" style="left:113px;top:181px;color:#5a5a5a;">Basis element</div>
<div class="t" style="left:110px;top:201px;">Name:</div>
<div class="t" style="left:299px;top:201px;">Basis_1x1</div>
<div class="t" style="left:110px;top:215px;">Ratio:</div>
<div class="t" style="left:299px;top:215px;">3 x 4</div>
<div class="t" style="left:110px;top:229px;">Width:</div>
<div class="t" style="left:299px;top:229px;">6.0 mm</div>
<div class="t" style="left:110px;top:243px;">Stability:</div>
<div class="t" style="left:299px;top:243px;">1</div>
<div class="t" style="left:110px;top:257px;">Costs:</div>
<div class="t" style="left:299px;top:257px;">1</div>
<div style="left:105px;top:285px;width:390px;height:125px;border:1px solid #d0d0bf;border-radius:3px;"></div>
<div style="left:112px;top:282px;width:36px;height:7px;background:#ece9d8;"></div>
<div class="t" style="left:113px;top:281px;color:#5a5a5a;">Colors</div>
<div style="left:111px;top:300px;width:310px;height:104px;border:1px solid #7f9db9;background:#fff;overflow:hidden;"></div>
<div style="left:403px;top:301px;width:17px;height:86px;background:linear-gradient(90deg,#eeede6,#f8f8f4 40%,#fefefe 80%,#fafaf6);"></div>
<div style="left:404px;top:301px;width:15px;height:16px;border:1px solid #fff;border-radius:3px;background:linear-gradient(135deg,#cddbfd,#bacef9 60%,#b0c6f7);box-shadow:0 1px 0 #9fb6e2;"><svg width="14" height="15" style="left:0;top:0"><path d="M3 9.3 L6.5 5.6 L10 9.3" stroke="#4d6185" stroke-width="2.3" fill="none"/></svg></div>
<div style="left:404px;top:369px;width:15px;height:16px;border:1px solid #fff;border-radius:3px;background:linear-gradient(135deg,#cddbfd,#bacef9 60%,#b0c6f7);box-shadow:0 1px 0 #9fb6e2;"><svg width="14" height="15" style="left:0;top:0"><path d="M3 5 L6.5 8.7 L10 5" stroke="#4d6185" stroke-width="2.3" fill="none"/></svg></div>
<div style="left:112px;top:387px;width:291px;height:16px;background:linear-gradient(180deg,#eeede6,#f8f8f4 40%,#fefefe 80%,#fafaf6);"></div>
<div style="left:112px;top:387px;width:16px;height:15px;border:1px solid #fff;border-radius:3px;background:linear-gradient(135deg,#cddbfd,#bacef9 60%,#b0c6f7);box-shadow:0 1px 0 #9fb6e2;"><svg width="14" height="15" style="left:0;top:0"><path d="M8.2 2.8 L4.5 6.4 L8.2 10" stroke="#4d6185" stroke-width="2.3" fill="none"/></svg></div>
<div style="left:386px;top:387px;width:16px;height:15px;border:1px solid #fff;border-radius:3px;background:linear-gradient(135deg,#cddbfd,#bacef9 60%,#b0c6f7);box-shadow:0 1px 0 #9fb6e2;"><svg width="14" height="15" style="left:0;top:0"><path d="M5.2 2.8 L8.9 6.4 L5.2 10" stroke="#4d6185" stroke-width="2.3" fill="none"/></svg></div>
<div style="left:403px;top:387px;width:17px;height:16px;background:#ece9d8;"></div>
<div style="left:427px;top:301px;width:61px;height:21px;border:1px solid #003c74;border-radius:3px;background:linear-gradient(#fff 0%,#fbfbf9 30%,#f2f1eb 70%,#e3e0d6 90%,#d6d0c5 100%);"></div>
<div class="t" style="left:427px;width:61px;text-align:center;top:305px;">New</div>
<div style="left:427px;top:324px;width:61px;height:21px;border:1px solid #003c74;border-radius:3px;background:linear-gradient(#fff 0%,#fbfbf9 30%,#f2f1eb 70%,#e3e0d6 90%,#d6d0c5 100%);"></div>
<div class="t" style="left:427px;width:61px;text-align:center;top:328px;">Delete</div>
<div style="left:105px;top:419px;width:390px;height:125px;border:1px solid #d0d0bf;border-radius:3px;"></div>
<div style="left:112px;top:416px;width:46px;height:7px;background:#ece9d8;"></div>
<div class="t" style="left:113px;top:415px;color:#5a5a5a;">Elements</div>
<div style="left:111px;top:434px;width:310px;height:104px;border:1px solid #7f9db9;background:#fff;overflow:hidden;"></div>
<div style="left:403px;top:435px;width:17px;height:86px;background:linear-gradient(90deg,#eeede6,#f8f8f4 40%,#fefefe 80%,#fafaf6);"></div>
<div style="left:404px;top:435px;width:15px;height:16px;border:1px solid #fff;border-radius:3px;background:linear-gradient(135deg,#cddbfd,#bacef9 60%,#b0c6f7);box-shadow:0 1px 0 #9fb6e2;"><svg width="14" height="15" style="left:0;top:0"><path d="M3 9.3 L6.5 5.6 L10 9.3" stroke="#4d6185" stroke-width="2.3" fill="none"/></svg></div>
<div style="left:404px;top:503px;width:15px;height:16px;border:1px solid #fff;border-radius:3px;background:linear-gradient(135deg,#cddbfd,#bacef9 60%,#b0c6f7);box-shadow:0 1px 0 #9fb6e2;"><svg width="14" height="15" style="left:0;top:0"><path d="M3 5 L6.5 8.7 L10 5" stroke="#4d6185" stroke-width="2.3" fill="none"/></svg></div>
<div style="left:112px;top:521px;width:291px;height:16px;background:linear-gradient(180deg,#eeede6,#f8f8f4 40%,#fefefe 80%,#fafaf6);"></div>
<div style="left:112px;top:521px;width:16px;height:15px;border:1px solid #fff;border-radius:3px;background:linear-gradient(135deg,#cddbfd,#bacef9 60%,#b0c6f7);box-shadow:0 1px 0 #9fb6e2;"><svg width="14" height="15" style="left:0;top:0"><path d="M8.2 2.8 L4.5 6.4 L8.2 10" stroke="#4d6185" stroke-width="2.3" fill="none"/></svg></div>
<div style="left:386px;top:521px;width:16px;height:15px;border:1px solid #fff;border-radius:3px;background:linear-gradient(135deg,#cddbfd,#bacef9 60%,#b0c6f7);box-shadow:0 1px 0 #9fb6e2;"><svg width="14" height="15" style="left:0;top:0"><path d="M5.2 2.8 L8.9 6.4 L5.2 10" stroke="#4d6185" stroke-width="2.3" fill="none"/></svg></div>
<div style="left:403px;top:521px;width:17px;height:16px;background:#ece9d8;"></div>
<div class="t" style="left:112px;top:437px;">Basis_1x1</div>
<div style="left:427px;top:435px;width:61px;height:21px;border:1px solid #003c74;border-radius:3px;background:linear-gradient(#fff 0%,#fbfbf9 30%,#f2f1eb 70%,#e3e0d6 90%,#d6d0c5 100%);"></div>
<div class="t" style="left:427px;width:61px;text-align:center;top:439px;">New</div>
<div style="left:427px;top:458px;width:61px;height:21px;border:1px solid #003c74;border-radius:3px;background:linear-gradient(#fff 0%,#fbfbf9 30%,#f2f1eb 70%,#e3e0d6 90%,#d6d0c5 100%);"></div>
<div class="t" style="left:427px;width:61px;text-align:center;top:462px;">Delete</div>
<div style="left:237px;top:552px;width:55px;height:21px;border:1px solid #003c74;border-radius:3px;background:linear-gradient(#fff 0%,#fbfbf9 30%,#f2f1eb 70%,#e3e0d6 90%,#d6d0c5 100%);"></div>
<div class="t" style="left:237px;width:55px;text-align:center;top:556px;">Save</div>
<div style="left:299px;top:552px;width:63px;height:21px;border:1px solid #003c74;border-radius:3px;background:linear-gradient(#fff 0%,#fbfbf9 30%,#f2f1eb 70%,#e3e0d6 90%,#d6d0c5 100%);"></div>
<div class="t" style="left:299px;width:63px;text-align:center;top:556px;">Cancel</div>
<div style="left:600px;top:100px;width:312px;height:206px;background:#ece9d8;border-radius:7px 7px 0 0;"></div>
<div style="left:600px;top:120px;width:3px;height:186px;background:linear-gradient(90deg,#0030d0 0,#0030d0 1px,#1464f4 1px,#1464f4 2px,#0048e4 2px);"></div>
<div style="left:909px;top:120px;width:3px;height:186px;background:linear-gradient(90deg,#0048e4 0,#0048e4 1px,#0a50e6 1px,#0a50e6 2px,#0028c8 2px);"></div>
<div style="left:600px;top:303px;width:312px;height:3px;background:linear-gradient(#0050e8 0,#0050e8 1px,#0030c8 1px,#0030c8 2px,#000c98 2px);"></div>
<div style="left:600px;top:100px;width:312px;height:29px;background:linear-gradient(#0a58e0 0px,#3d8eff 1px,#3d8eff 2px,#1a6af4 4px,#0058ea 7px,#0054e3 14px,#005ef3 21px,#0064fa 25px,#0050d6 28px,#0048c8 29px);border-radius:7px 7px 0 0;box-shadow:inset 1px 1px 0 #0030c8,inset -1px 0 0 #0030c8;"></div>
<div class="t" style="left:606px;top:110px;font:bold 14px/13px 'Liberation Sans',sans-serif;letter-spacing:-0.5px;color:#fff;text-shadow:1px 1px 0 #0a1e6e;">New color</div>
<div style="left:886px;top:105px;width:21px;height:21px;background:linear-gradient(135deg,#f09a78,#e35a35 45%,#c8401c);border:1px solid #fff;border-radius:3px;"><svg style="left:3px;top:3px" width="14" height="14"><path d="M2 2 L12 12 M12 2 L2 12" stroke="#fff" stroke-width="2.2"/></svg></div>
<div style="left:605px;top:136px;width:302px;height:132px;border:1px solid #d0d0bf;border-radius:3px;"></div>
<div style="left:612px;top:133px;width:60px;height:7px;background:#ece9d8;"></div>
<div class="t" style="left:613px;top:132px;color:#5a5a5a;">Color mixer</div>
<div class="t" style="left:615px;top:164px;">Name of color:</div>
<div style="left:716px;top:161px;width:95px;height:19px;border:1px solid #7f9db9;background:#fff;"></div>
<div class="t" style="left:721px;top:164px;">red</div>
<div style="left:738px;top:163px;width:1px;height:13px;background:#000;"></div>
<div class="t" style="left:615px;top:188px;">Color value red:</div>
<div style="left:716px;top:185px;width:95px;height:19px;border:1px solid #7f9db9;background:#fff;"></div>
<div class="t" style="left:592px;width:200px;text-align:right;top:188px;">255</div>
<div style="left:795px;top:187px;width:14px;height:15px;border-radius:2px;background:linear-gradient(135deg,#cbdafd,#b3c8f7);"><svg style="left:0;top:0" width="14" height="15"><path d="M3.3 6.2 L6.5 3 L9.7 6.2 M3.3 10 L6.5 13.2 L9.7 10" stroke="#4d6185" stroke-width="2" fill="none"/></svg></div>
<div class="t" style="left:615px;top:212px;">Color value green:</div>
<div style="left:716px;top:209px;width:95px;height:19px;border:1px solid #7f9db9;background:#fff;"></div>
<div class="t" style="left:592px;width:200px;text-align:right;top:212px;">0</div>
<div style="left:795px;top:211px;width:14px;height:15px;border-radius:2px;background:linear-gradient(135deg,#cbdafd,#b3c8f7);"><svg style="left:0;top:0" width="14" height="15"><path d="M3.3 6.2 L6.5 3 L9.7 6.2 M3.3 10 L6.5 13.2 L9.7 10" stroke="#4d6185" stroke-width="2" fill="none"/></svg></div>
<div class="t" style="left:615px;top:236px;">Color value blue:</div>
<div style="left:716px;top:233px;width:95px;height:19px;border:1px solid #7f9db9;background:#fff;"></div>
<div class="t" style="left:592px;width:200px;text-align:right;top:236px;">0</div>
<div style="left:795px;top:235px;width:14px;height:15px;border-radius:2px;background:linear-gradient(135deg,#cbdafd,#b3c8f7);"><svg style="left:0;top:0" width="14" height="15"><path d="M3.3 6.2 L6.5 3 L9.7 6.2 M3.3 10 L6.5 13.2 L9.7 10" stroke="#4d6185" stroke-width="2" fill="none"/></svg></div>
<div style="left:821px;top:161px;width:70px;height:91px;border:1px solid #000;background:#f00;"></div>
<div style="left:698px;top:276px;width:45px;height:21px;border:1px solid #003c74;border-radius:3px;background:linear-gradient(#fff 0%,#fbfbf9 30%,#f2f1eb 70%,#e3e0d6 90%,#d6d0c5 100%);"></div>
<div class="t" style="left:698px;width:45px;text-align:center;top:280px;">OK</div>
<div style="left:750px;top:276px;width:63px;height:21px;border:1px solid #003c74;border-radius:3px;background:linear-gradient(#fff 0%,#fbfbf9 30%,#f2f1eb 70%,#e3e0d6 90%,#d6d0c5 100%);"></div>
<div class="t" style="left:750px;width:63px;text-align:center;top:280px;">Cancel</div>
</body></html>
